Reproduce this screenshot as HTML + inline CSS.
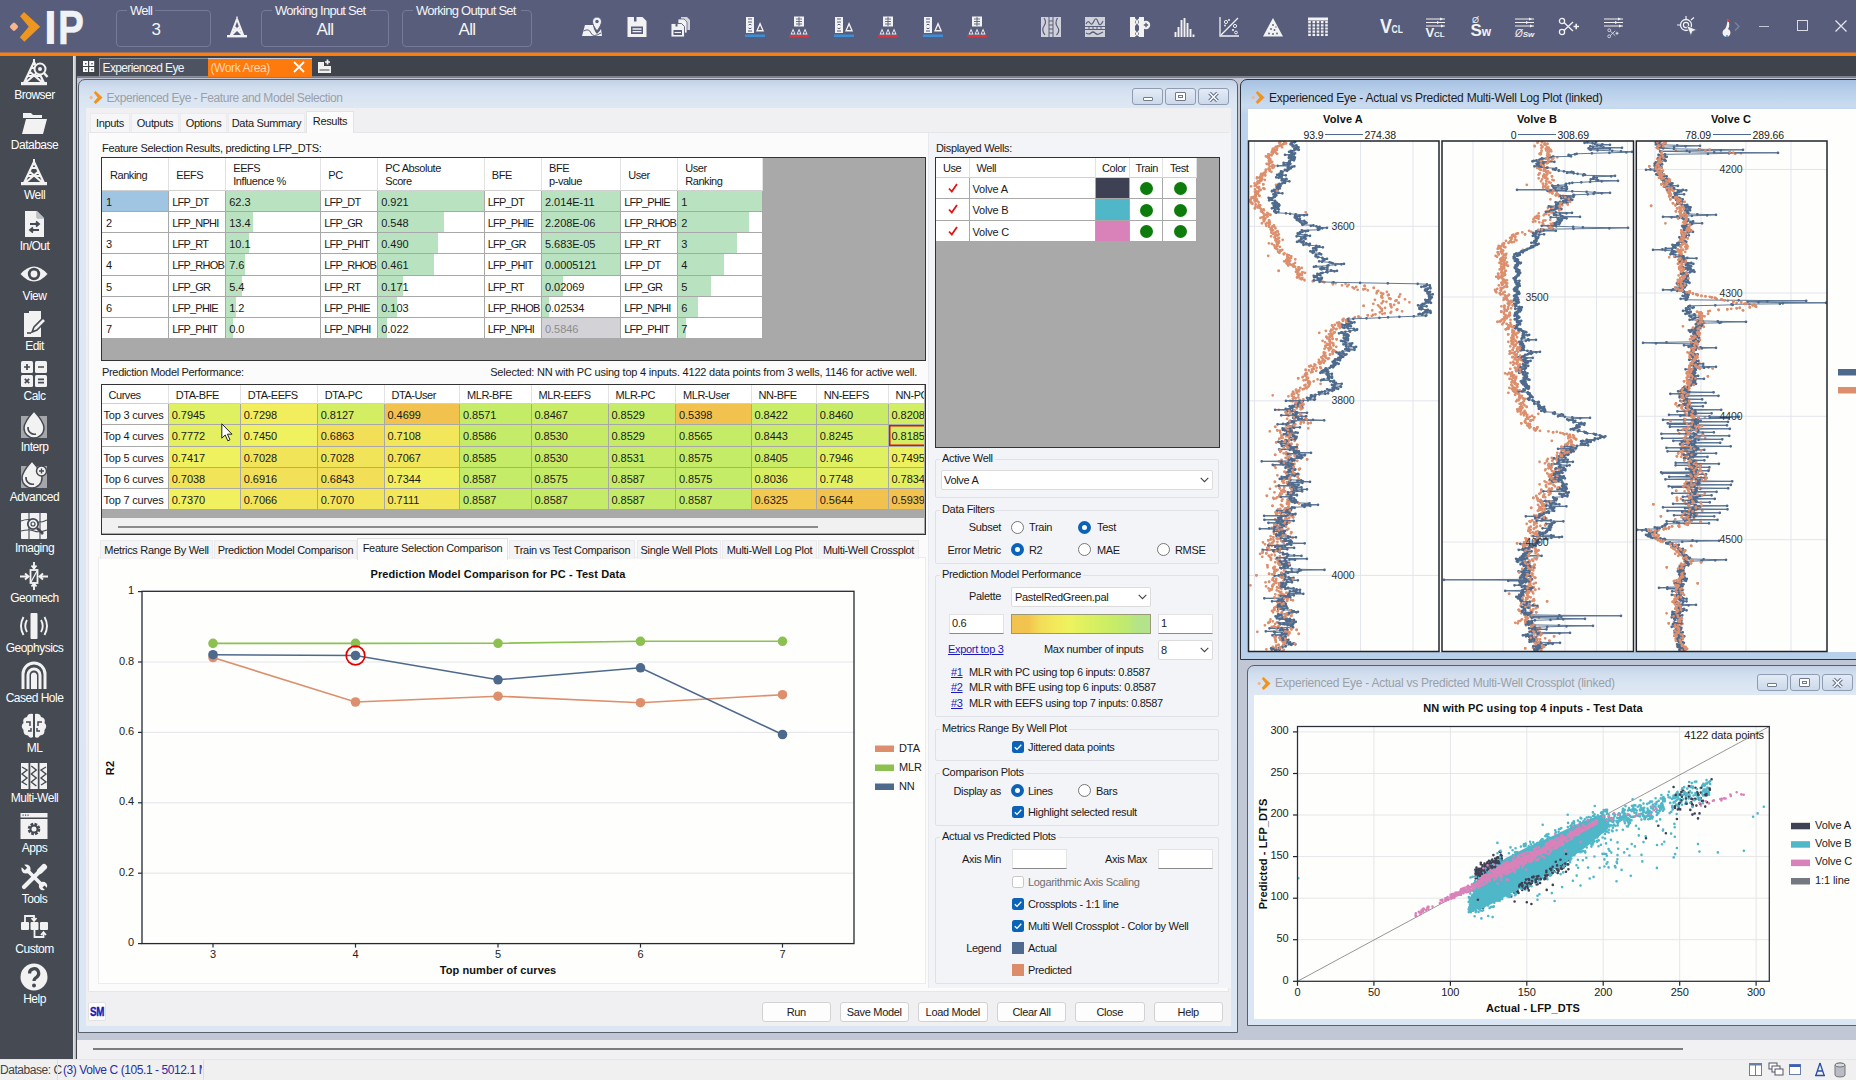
<!DOCTYPE html>
<html lang="en"><head><meta charset="utf-8"><title>IP - Experienced Eye</title>
<style>
html,body{margin:0;padding:0}
body{width:1856px;height:1080px;position:relative;overflow:hidden;background:#c1c7d5;font-family:"Liberation Sans",sans-serif;font-size:11px;color:#1a1a1a;letter-spacing:-0.32px}
.t{position:absolute;white-space:nowrap}
.w{color:#fff}
.b{font-weight:bold;letter-spacing:0.1px}
.ch{letter-spacing:-0.1px;color:#222}
svg{position:absolute;overflow:visible}
.btn{position:absolute;box-sizing:border-box;background:#fdfdfd;border:1px solid #d2d2d2;border-radius:3px;text-align:center;line-height:18px;height:20px}
.inp{position:absolute;box-sizing:border-box;background:#fff;border:1px solid #e3e3e3;border-bottom-color:#8a8a8a}
.cmb{position:absolute;box-sizing:border-box;background:#fff;border:1px solid #dcdcdc;border-radius:2px}
.grp{position:absolute;box-sizing:border-box;border:1px solid #dfe1e6;border-radius:2px}
.gl{position:absolute;white-space:nowrap;background:#f3f4f8;padding:0 2px;line-height:14px}
.rad{position:absolute;box-sizing:border-box;width:13px;height:13px;border-radius:50%;border:1px solid #777;background:#fff}
.rad.on{border:4px solid #0a63b7;background:#fff}
.chk{position:absolute;box-sizing:border-box;width:12px;height:12px;border-radius:2.5px;background:#0a63b7}
.chk.off{background:#fff;border:1px solid #c8c8c8}
.cell{position:absolute;box-sizing:border-box;background:#fff;border-right:1px solid #a8a8a8;border-bottom:1px solid #a8a8a8;overflow:hidden;white-space:nowrap;letter-spacing:-0.8px}
.cell.n{letter-spacing:-0.05px}
.cell.lc{letter-spacing:-0.2px}
.cell.hd{letter-spacing:-0.45px}
.hd{border-right-color:#e2e2e2;border-bottom-color:#d0d0d0}
.lnk{color:#1a1ab8;text-decoration:underline}
</style></head>
<body>
<div class="" style="position:absolute;left:78px;top:79px;width:1160px;height:954px;box-sizing:border-box;border:1px solid #5a6069;border-radius:7px 7px 0 0;background:linear-gradient(#c2d2e6,#d1deee 8px,#dae5f2 18px,#dee8f4 28px,#dbe6f4)"></div><svg style="left:88.5px;top:90.5px" width="13.7" height="13.0" viewBox="0 0 31.4 29.7"><path d="M11.1 4.2 L15 0 L31.2 14.7 L15.3 29.7 L10.8 25.2 L19.8 14.8 Z" fill="#f0941f"/><rect x="1.6" y="11.4" width="6.8" height="6.8" rx="1.8" transform="rotate(45 5 14.8)" fill="#f8b48c"/></svg><div class="t " style="top:90.5px;line-height:14px;left:106.5px;font-size:12px;letter-spacing:-0.42px;color:#9aa0a8">Experienced Eye - Feature and Model Selection</div><div class="" style="position:absolute;left:1132px;top:88px;width:31px;height:17px;box-sizing:border-box;border:1px solid #8f9bb0;border-radius:3px;background:linear-gradient(#e3ebf6,#ccd9ea)"></div><div class="" style="position:absolute;left:1142.5px;top:97.0px;width:10px;height:3.5px;box-sizing:border-box;border:1px solid #707a8c;background:#fff;border-radius:1px"></div><div class="" style="position:absolute;left:1165px;top:88px;width:31px;height:17px;box-sizing:border-box;border:1px solid #8f9bb0;border-radius:3px;background:linear-gradient(#e3ebf6,#ccd9ea)"></div><div class="" style="position:absolute;left:1175.0px;top:91.5px;width:11px;height:9px;box-sizing:border-box;border:1.5px solid #707a8c;background:#fff;border-radius:1px"></div><div class="" style="position:absolute;left:1178.0px;top:94.5px;width:5px;height:3.5px;box-sizing:border-box;border:1px solid #707a8c"></div><div class="" style="position:absolute;left:1198px;top:88px;width:31px;height:17px;box-sizing:border-box;border:1px solid #8f9bb0;border-radius:3px;background:linear-gradient(#e3ebf6,#ccd9ea)"></div><svg style="left:1208.0px;top:91.5px" width="11" height="10" viewBox="0 0 11 10"><path d="M1.5 1 L9.5 9 M9.5 1 L1.5 9" stroke="#67728a" stroke-width="3.6"/><path d="M1.5 1 L9.5 9 M9.5 1 L1.5 9" stroke="#fff" stroke-width="1.5"/></svg><div class="" style="position:absolute;left:86px;top:108px;width:1145px;height:918px;background:#f0f0f2"></div><div class="" style="position:absolute;left:88px;top:132px;width:1141px;height:860px;box-sizing:border-box;background:#fbfbfc;border:1px solid #e6e6e8"></div><div class="" style="position:absolute;left:90px;top:113px;width:40px;height:19px;box-sizing:border-box;background:#f6f6f8;border:1px solid #ebebed;border-bottom:none"></div><div class="t " style="top:115.8px;line-height:14px;left:-90.0px;width:400px;text-align:center;">Inputs</div><div class="" style="position:absolute;left:131px;top:113px;width:48px;height:19px;box-sizing:border-box;background:#f6f6f8;border:1px solid #ebebed;border-bottom:none"></div><div class="t " style="top:115.8px;line-height:14px;left:-45.0px;width:400px;text-align:center;">Outputs</div><div class="" style="position:absolute;left:180px;top:113px;width:47px;height:19px;box-sizing:border-box;background:#f6f6f8;border:1px solid #ebebed;border-bottom:none"></div><div class="t " style="top:115.8px;line-height:14px;left:3.5px;width:400px;text-align:center;">Options</div><div class="" style="position:absolute;left:228px;top:113px;width:77px;height:19px;box-sizing:border-box;background:#f6f6f8;border:1px solid #ebebed;border-bottom:none"></div><div class="t " style="top:115.8px;line-height:14px;left:66.5px;width:400px;text-align:center;">Data Summary</div><div class="" style="position:absolute;left:306px;top:111px;width:48px;height:22px;box-sizing:border-box;background:#fcfcfc;border:1px solid #e3e3e3;border-bottom:none"></div><div class="t " style="top:114.0px;line-height:14px;left:130.0px;width:400px;text-align:center;">Results</div><div class="t " style="top:141.0px;line-height:14px;left:102px;">Feature Selection Results, predicting LFP_DTS:</div><div class="" style="position:absolute;left:100.5px;top:156.5px;width:825px;height:204px;box-sizing:border-box;border:1.5px solid #333;background:#a9a9a9"></div><div class="cell hd" style="left:102.00px;top:158.00px;width:67.25px;height:32.50px"><div style="position:absolute;left:8px;top:10.6px;line-height:13px">Ranking</div></div><div class="cell hd" style="left:169.25px;top:158.00px;width:57.00px;height:32.50px"><div style="position:absolute;left:7px;top:10.6px;line-height:13px">EEFS</div></div><div class="cell hd" style="left:226.25px;top:158.00px;width:95.00px;height:32.50px"><div style="position:absolute;left:7px;top:4.0px;line-height:13px">EEFS<br>Influence %</div></div><div class="cell hd" style="left:321.25px;top:158.00px;width:57.00px;height:32.50px"><div style="position:absolute;left:7px;top:10.6px;line-height:13px">PC</div></div><div class="cell hd" style="left:378.25px;top:158.00px;width:106.50px;height:32.50px"><div style="position:absolute;left:7px;top:4.0px;line-height:13px">PC Absolute<br>Score</div></div><div class="cell hd" style="left:484.75px;top:158.00px;width:57.25px;height:32.50px"><div style="position:absolute;left:7px;top:10.6px;line-height:13px">BFE</div></div><div class="cell hd" style="left:542.00px;top:158.00px;width:79.25px;height:32.50px"><div style="position:absolute;left:7px;top:4.0px;line-height:13px">BFE<br>p-value</div></div><div class="cell hd" style="left:621.25px;top:158.00px;width:57.00px;height:32.50px"><div style="position:absolute;left:7px;top:10.6px;line-height:13px">User</div></div><div class="cell hd" style="left:678.25px;top:158.00px;width:85.00px;height:32.50px"><div style="position:absolute;left:7px;top:4.0px;line-height:13px">User<br>Ranking</div></div><div class="cell n" style="left:102.00px;top:190.50px;width:67.25px;height:21.25px;background:#9fc5e3;"><div style="position:absolute;left:4px;top:0;line-height:22.05px">1</div></div><div class="cell " style="left:169.25px;top:190.50px;width:57.00px;height:21.25px;"><div style="position:absolute;left:3px;top:0;line-height:22.05px">LFP_DT</div></div><div class="cell n" style="left:226.25px;top:190.50px;width:95.00px;height:21.25px;"><div style="position:absolute;left:0;top:0;height:100%;width:94px;background:#b9e2c0"></div><div style="position:absolute;left:3px;top:0;line-height:22.05px">62.3</div></div><div class="cell " style="left:321.25px;top:190.50px;width:57.00px;height:21.25px;"><div style="position:absolute;left:3px;top:0;line-height:22.05px">LFP_DT</div></div><div class="cell n" style="left:378.25px;top:190.50px;width:106.50px;height:21.25px;"><div style="position:absolute;left:0;top:0;height:100%;width:106px;background:#b9e2c0"></div><div style="position:absolute;left:3px;top:0;line-height:22.05px">0.921</div></div><div class="cell " style="left:484.75px;top:190.50px;width:57.25px;height:21.25px;"><div style="position:absolute;left:3px;top:0;line-height:22.05px">LFP_DT</div></div><div class="cell n" style="left:542.00px;top:190.50px;width:79.25px;height:21.25px;"><div style="position:absolute;left:0;top:0;height:100%;width:79px;background:#b9e2c0"></div><div style="position:absolute;left:3px;top:0;line-height:22.05px">2.014E-11</div></div><div class="cell " style="left:621.25px;top:190.50px;width:57.00px;height:21.25px;"><div style="position:absolute;left:3px;top:0;line-height:22.05px">LFP_PHIE</div></div><div class="cell n" style="left:678.25px;top:190.50px;width:85.00px;height:21.25px;"><div style="position:absolute;left:0;top:0;height:100%;width:84px;background:#b9e2c0"></div><div style="position:absolute;left:3px;top:0;line-height:22.05px">1</div></div><div class="cell n" style="left:102.00px;top:211.75px;width:67.25px;height:21.25px;"><div style="position:absolute;left:4px;top:0;line-height:22.05px">2</div></div><div class="cell " style="left:169.25px;top:211.75px;width:57.00px;height:21.25px;"><div style="position:absolute;left:3px;top:0;line-height:22.05px">LFP_NPHI</div></div><div class="cell n" style="left:226.25px;top:211.75px;width:95.00px;height:21.25px;"><div style="position:absolute;left:0;top:0;height:100%;width:27px;background:#b9e2c0"></div><div style="position:absolute;left:3px;top:0;line-height:22.05px">13.4</div></div><div class="cell " style="left:321.25px;top:211.75px;width:57.00px;height:21.25px;"><div style="position:absolute;left:3px;top:0;line-height:22.05px">LFP_GR</div></div><div class="cell n" style="left:378.25px;top:211.75px;width:106.50px;height:21.25px;"><div style="position:absolute;left:0;top:0;height:100%;width:66px;background:#b9e2c0"></div><div style="position:absolute;left:3px;top:0;line-height:22.05px">0.548</div></div><div class="cell " style="left:484.75px;top:211.75px;width:57.25px;height:21.25px;"><div style="position:absolute;left:3px;top:0;line-height:22.05px">LFP_PHIE</div></div><div class="cell n" style="left:542.00px;top:211.75px;width:79.25px;height:21.25px;"><div style="position:absolute;left:0;top:0;height:100%;width:79px;background:#b9e2c0"></div><div style="position:absolute;left:3px;top:0;line-height:22.05px">2.208E-06</div></div><div class="cell " style="left:621.25px;top:211.75px;width:57.00px;height:21.25px;"><div style="position:absolute;left:3px;top:0;line-height:22.05px">LFP_RHOB</div></div><div class="cell n" style="left:678.25px;top:211.75px;width:85.00px;height:21.25px;"><div style="position:absolute;left:0;top:0;height:100%;width:71px;background:#b9e2c0"></div><div style="position:absolute;left:3px;top:0;line-height:22.05px">2</div></div><div class="cell n" style="left:102.00px;top:233.00px;width:67.25px;height:21.25px;"><div style="position:absolute;left:4px;top:0;line-height:22.05px">3</div></div><div class="cell " style="left:169.25px;top:233.00px;width:57.00px;height:21.25px;"><div style="position:absolute;left:3px;top:0;line-height:22.05px">LFP_RT</div></div><div class="cell n" style="left:226.25px;top:233.00px;width:95.00px;height:21.25px;"><div style="position:absolute;left:0;top:0;height:100%;width:23px;background:#b9e2c0"></div><div style="position:absolute;left:3px;top:0;line-height:22.05px">10.1</div></div><div class="cell " style="left:321.25px;top:233.00px;width:57.00px;height:21.25px;"><div style="position:absolute;left:3px;top:0;line-height:22.05px">LFP_PHIT</div></div><div class="cell n" style="left:378.25px;top:233.00px;width:106.50px;height:21.25px;"><div style="position:absolute;left:0;top:0;height:100%;width:60px;background:#b9e2c0"></div><div style="position:absolute;left:3px;top:0;line-height:22.05px">0.490</div></div><div class="cell " style="left:484.75px;top:233.00px;width:57.25px;height:21.25px;"><div style="position:absolute;left:3px;top:0;line-height:22.05px">LFP_GR</div></div><div class="cell n" style="left:542.00px;top:233.00px;width:79.25px;height:21.25px;"><div style="position:absolute;left:0;top:0;height:100%;width:79px;background:#b9e2c0"></div><div style="position:absolute;left:3px;top:0;line-height:22.05px">5.683E-05</div></div><div class="cell " style="left:621.25px;top:233.00px;width:57.00px;height:21.25px;"><div style="position:absolute;left:3px;top:0;line-height:22.05px">LFP_RT</div></div><div class="cell n" style="left:678.25px;top:233.00px;width:85.00px;height:21.25px;"><div style="position:absolute;left:0;top:0;height:100%;width:59px;background:#b9e2c0"></div><div style="position:absolute;left:3px;top:0;line-height:22.05px">3</div></div><div class="cell n" style="left:102.00px;top:254.25px;width:67.25px;height:21.25px;"><div style="position:absolute;left:4px;top:0;line-height:22.05px">4</div></div><div class="cell " style="left:169.25px;top:254.25px;width:57.00px;height:21.25px;"><div style="position:absolute;left:3px;top:0;line-height:22.05px">LFP_RHOB</div></div><div class="cell n" style="left:226.25px;top:254.25px;width:95.00px;height:21.25px;"><div style="position:absolute;left:0;top:0;height:100%;width:19px;background:#b9e2c0"></div><div style="position:absolute;left:3px;top:0;line-height:22.05px">7.6</div></div><div class="cell " style="left:321.25px;top:254.25px;width:57.00px;height:21.25px;"><div style="position:absolute;left:3px;top:0;line-height:22.05px">LFP_RHOB</div></div><div class="cell n" style="left:378.25px;top:254.25px;width:106.50px;height:21.25px;"><div style="position:absolute;left:0;top:0;height:100%;width:56px;background:#b9e2c0"></div><div style="position:absolute;left:3px;top:0;line-height:22.05px">0.461</div></div><div class="cell " style="left:484.75px;top:254.25px;width:57.25px;height:21.25px;"><div style="position:absolute;left:3px;top:0;line-height:22.05px">LFP_PHIT</div></div><div class="cell n" style="left:542.00px;top:254.25px;width:79.25px;height:21.25px;"><div style="position:absolute;left:0;top:0;height:100%;width:78px;background:#b9e2c0"></div><div style="position:absolute;left:3px;top:0;line-height:22.05px">0.0005121</div></div><div class="cell " style="left:621.25px;top:254.25px;width:57.00px;height:21.25px;"><div style="position:absolute;left:3px;top:0;line-height:22.05px">LFP_DT</div></div><div class="cell n" style="left:678.25px;top:254.25px;width:85.00px;height:21.25px;"><div style="position:absolute;left:0;top:0;height:100%;width:46px;background:#b9e2c0"></div><div style="position:absolute;left:3px;top:0;line-height:22.05px">4</div></div><div class="cell n" style="left:102.00px;top:275.50px;width:67.25px;height:21.25px;"><div style="position:absolute;left:4px;top:0;line-height:22.05px">5</div></div><div class="cell " style="left:169.25px;top:275.50px;width:57.00px;height:21.25px;"><div style="position:absolute;left:3px;top:0;line-height:22.05px">LFP_GR</div></div><div class="cell n" style="left:226.25px;top:275.50px;width:95.00px;height:21.25px;"><div style="position:absolute;left:0;top:0;height:100%;width:16px;background:#b9e2c0"></div><div style="position:absolute;left:3px;top:0;line-height:22.05px">5.4</div></div><div class="cell " style="left:321.25px;top:275.50px;width:57.00px;height:21.25px;"><div style="position:absolute;left:3px;top:0;line-height:22.05px">LFP_RT</div></div><div class="cell n" style="left:378.25px;top:275.50px;width:106.50px;height:21.25px;"><div style="position:absolute;left:0;top:0;height:100%;width:25px;background:#b9e2c0"></div><div style="position:absolute;left:3px;top:0;line-height:22.05px">0.171</div></div><div class="cell " style="left:484.75px;top:275.50px;width:57.25px;height:21.25px;"><div style="position:absolute;left:3px;top:0;line-height:22.05px">LFP_RT</div></div><div class="cell n" style="left:542.00px;top:275.50px;width:79.25px;height:21.25px;"><div style="position:absolute;left:0;top:0;height:100%;width:21px;background:#b9e2c0"></div><div style="position:absolute;left:3px;top:0;line-height:22.05px">0.02069</div></div><div class="cell " style="left:621.25px;top:275.50px;width:57.00px;height:21.25px;"><div style="position:absolute;left:3px;top:0;line-height:22.05px">LFP_GR</div></div><div class="cell n" style="left:678.25px;top:275.50px;width:85.00px;height:21.25px;"><div style="position:absolute;left:0;top:0;height:100%;width:33px;background:#b9e2c0"></div><div style="position:absolute;left:3px;top:0;line-height:22.05px">5</div></div><div class="cell n" style="left:102.00px;top:296.75px;width:67.25px;height:21.25px;"><div style="position:absolute;left:4px;top:0;line-height:22.05px">6</div></div><div class="cell " style="left:169.25px;top:296.75px;width:57.00px;height:21.25px;"><div style="position:absolute;left:3px;top:0;line-height:22.05px">LFP_PHIE</div></div><div class="cell n" style="left:226.25px;top:296.75px;width:95.00px;height:21.25px;"><div style="position:absolute;left:0;top:0;height:100%;width:10px;background:#b9e2c0"></div><div style="position:absolute;left:3px;top:0;line-height:22.05px">1.2</div></div><div class="cell " style="left:321.25px;top:296.75px;width:57.00px;height:21.25px;"><div style="position:absolute;left:3px;top:0;line-height:22.05px">LFP_PHIE</div></div><div class="cell n" style="left:378.25px;top:296.75px;width:106.50px;height:21.25px;"><div style="position:absolute;left:0;top:0;height:100%;width:19px;background:#b9e2c0"></div><div style="position:absolute;left:3px;top:0;line-height:22.05px">0.103</div></div><div class="cell " style="left:484.75px;top:296.75px;width:57.25px;height:21.25px;"><div style="position:absolute;left:3px;top:0;line-height:22.05px">LFP_RHOB</div></div><div class="cell n" style="left:542.00px;top:296.75px;width:79.25px;height:21.25px;"><div style="position:absolute;left:0;top:0;height:100%;width:7px;background:#b9e2c0"></div><div style="position:absolute;left:3px;top:0;line-height:22.05px">0.02534</div></div><div class="cell " style="left:621.25px;top:296.75px;width:57.00px;height:21.25px;"><div style="position:absolute;left:3px;top:0;line-height:22.05px">LFP_NPHI</div></div><div class="cell n" style="left:678.25px;top:296.75px;width:85.00px;height:21.25px;"><div style="position:absolute;left:0;top:0;height:100%;width:20px;background:#b9e2c0"></div><div style="position:absolute;left:3px;top:0;line-height:22.05px">6</div></div><div class="cell n" style="left:102.00px;top:318.00px;width:67.25px;height:21.25px;"><div style="position:absolute;left:4px;top:0;line-height:22.05px">7</div></div><div class="cell " style="left:169.25px;top:318.00px;width:57.00px;height:21.25px;"><div style="position:absolute;left:3px;top:0;line-height:22.05px">LFP_PHIT</div></div><div class="cell n" style="left:226.25px;top:318.00px;width:95.00px;height:21.25px;"><div style="position:absolute;left:0;top:0;height:100%;width:7px;background:#b9e2c0"></div><div style="position:absolute;left:3px;top:0;line-height:22.05px">0.0</div></div><div class="cell " style="left:321.25px;top:318.00px;width:57.00px;height:21.25px;"><div style="position:absolute;left:3px;top:0;line-height:22.05px">LFP_NPHI</div></div><div class="cell n" style="left:378.25px;top:318.00px;width:106.50px;height:21.25px;"><div style="position:absolute;left:0;top:0;height:100%;width:9px;background:#b9e2c0"></div><div style="position:absolute;left:3px;top:0;line-height:22.05px">0.022</div></div><div class="cell " style="left:484.75px;top:318.00px;width:57.25px;height:21.25px;"><div style="position:absolute;left:3px;top:0;line-height:22.05px">LFP_NPHI</div></div><div class="cell n" style="left:542.00px;top:318.00px;width:79.25px;height:21.25px;background:#d2d2d7;color:#8c8c8c;"><div style="position:absolute;left:3px;top:0;line-height:22.05px">0.5846</div></div><div class="cell " style="left:621.25px;top:318.00px;width:57.00px;height:21.25px;"><div style="position:absolute;left:3px;top:0;line-height:22.05px">LFP_PHIT</div></div><div class="cell n" style="left:678.25px;top:318.00px;width:85.00px;height:21.25px;"><div style="position:absolute;left:0;top:0;height:100%;width:8px;background:#b9e2c0"></div><div style="position:absolute;left:3px;top:0;line-height:22.05px">7</div></div><div class="t " style="top:365.0px;line-height:14px;left:102px;">Prediction Model Performance:</div><div class="t " style="top:365.0px;line-height:14px;right:939px;letter-spacing:-0.215px">Selected: NN with PC using top 4 inputs. 4122 data points from 3 wells, 1146 for active well.</div><div class="" style="position:absolute;left:100.5px;top:383.5px;width:825px;height:151px;box-sizing:border-box;border:1.5px solid #333;background:#a9a9a9;overflow:hidden"><div class="" style="position:absolute;left:0px;top:0px;width:822px;height:148px;overflow:hidden"><div class="cell hd" style="left:0.00px;top:0.00px;width:67.25px;height:19.50px"><div style="position:absolute;left:7px;top:4.0px;line-height:13px">Curves</div></div><div class="cell hd" style="left:67.25px;top:0.00px;width:72.00px;height:19.50px"><div style="position:absolute;left:7px;top:4.0px;line-height:13px">DTA-BFE</div></div><div class="cell hd" style="left:139.25px;top:0.00px;width:77.00px;height:19.50px"><div style="position:absolute;left:7px;top:4.0px;line-height:13px">DTA-EEFS</div></div><div class="cell hd" style="left:216.25px;top:0.00px;width:66.75px;height:19.50px"><div style="position:absolute;left:7px;top:4.0px;line-height:13px">DTA-PC</div></div><div class="cell hd" style="left:283.00px;top:0.00px;width:75.50px;height:19.50px"><div style="position:absolute;left:7px;top:4.0px;line-height:13px">DTA-User</div></div><div class="cell hd" style="left:358.50px;top:0.00px;width:71.50px;height:19.50px"><div style="position:absolute;left:7px;top:4.0px;line-height:13px">MLR-BFE</div></div><div class="cell hd" style="left:430.00px;top:0.00px;width:77.00px;height:19.50px"><div style="position:absolute;left:7px;top:4.0px;line-height:13px">MLR-EEFS</div></div><div class="cell hd" style="left:507.00px;top:0.00px;width:67.50px;height:19.50px"><div style="position:absolute;left:7px;top:4.0px;line-height:13px">MLR-PC</div></div><div class="cell hd" style="left:574.50px;top:0.00px;width:75.50px;height:19.50px"><div style="position:absolute;left:7px;top:4.0px;line-height:13px">MLR-User</div></div><div class="cell hd" style="left:650.00px;top:0.00px;width:65.25px;height:19.50px"><div style="position:absolute;left:7px;top:4.0px;line-height:13px">NN-BFE</div></div><div class="cell hd" style="left:715.25px;top:0.00px;width:71.75px;height:19.50px"><div style="position:absolute;left:7px;top:4.0px;line-height:13px">NN-EEFS</div></div><div class="cell hd" style="left:787.00px;top:0.00px;width:71.00px;height:19.50px"><div style="position:absolute;left:7px;top:4.0px;line-height:13px">NN-PC</div></div><div class="cell lc" style="left:0.00px;top:19.50px;width:67.25px;height:21.25px;"><div style="position:absolute;left:2px;top:0;line-height:22.05px">Top 3 curves</div></div><div class="cell n" style="left:67.25px;top:19.50px;width:72.00px;height:21.25px;background:#dff060;"><div style="position:absolute;left:3px;top:0;line-height:22.05px">0.7945</div></div><div class="cell n" style="left:139.25px;top:19.50px;width:77.00px;height:21.25px;background:#f2ed5c;"><div style="position:absolute;left:3px;top:0;line-height:22.05px">0.7298</div></div><div class="cell n" style="left:216.25px;top:19.50px;width:66.75px;height:21.25px;background:#d4ee63;"><div style="position:absolute;left:3px;top:0;line-height:22.05px">0.8127</div></div><div class="cell n" style="left:283.00px;top:19.50px;width:75.50px;height:21.25px;background:#f2c24f;"><div style="position:absolute;left:3px;top:0;line-height:22.05px">0.4699</div></div><div class="cell n" style="left:358.50px;top:19.50px;width:71.50px;height:21.25px;background:#c5ec67;"><div style="position:absolute;left:3px;top:0;line-height:22.05px">0.8571</div></div><div class="cell n" style="left:430.00px;top:19.50px;width:77.00px;height:21.25px;background:#c8ec66;"><div style="position:absolute;left:3px;top:0;line-height:22.05px">0.8467</div></div><div class="cell n" style="left:507.00px;top:19.50px;width:67.50px;height:21.25px;background:#c6ec67;"><div style="position:absolute;left:3px;top:0;line-height:22.05px">0.8529</div></div><div class="cell n" style="left:574.50px;top:19.50px;width:75.50px;height:21.25px;background:#f2c24f;"><div style="position:absolute;left:3px;top:0;line-height:22.05px">0.5398</div></div><div class="cell n" style="left:650.00px;top:19.50px;width:65.25px;height:21.25px;background:#caed66;"><div style="position:absolute;left:3px;top:0;line-height:22.05px">0.8422</div></div><div class="cell n" style="left:715.25px;top:19.50px;width:71.75px;height:21.25px;background:#c8ec66;"><div style="position:absolute;left:3px;top:0;line-height:22.05px">0.8460</div></div><div class="cell n" style="left:787.00px;top:19.50px;width:71.00px;height:21.25px;background:#d1ee64;"><div style="position:absolute;left:3px;top:0;line-height:22.05px">0.8208</div></div><div class="cell lc" style="left:0.00px;top:40.75px;width:67.25px;height:21.25px;"><div style="position:absolute;left:2px;top:0;line-height:22.05px">Top 4 curves</div></div><div class="cell n" style="left:67.25px;top:40.75px;width:72.00px;height:21.25px;background:#e4f05f;"><div style="position:absolute;left:3px;top:0;line-height:22.05px">0.7772</div></div><div class="cell n" style="left:139.25px;top:40.75px;width:77.00px;height:21.25px;background:#eff15e;"><div style="position:absolute;left:3px;top:0;line-height:22.05px">0.7450</div></div><div class="cell n" style="left:216.25px;top:40.75px;width:66.75px;height:21.25px;background:#f3de58;"><div style="position:absolute;left:3px;top:0;line-height:22.05px">0.6863</div></div><div class="cell n" style="left:283.00px;top:40.75px;width:75.50px;height:21.25px;background:#f2e75a;"><div style="position:absolute;left:3px;top:0;line-height:22.05px">0.7108</div></div><div class="cell n" style="left:358.50px;top:40.75px;width:71.50px;height:21.25px;background:#c5ec68;"><div style="position:absolute;left:3px;top:0;line-height:22.05px">0.8586</div></div><div class="cell n" style="left:430.00px;top:40.75px;width:77.00px;height:21.25px;background:#c6ec67;"><div style="position:absolute;left:3px;top:0;line-height:22.05px">0.8530</div></div><div class="cell n" style="left:507.00px;top:40.75px;width:67.50px;height:21.25px;background:#c6ec67;"><div style="position:absolute;left:3px;top:0;line-height:22.05px">0.8529</div></div><div class="cell n" style="left:574.50px;top:40.75px;width:75.50px;height:21.25px;background:#c5ec67;"><div style="position:absolute;left:3px;top:0;line-height:22.05px">0.8565</div></div><div class="cell n" style="left:650.00px;top:40.75px;width:65.25px;height:21.25px;background:#c9ed66;"><div style="position:absolute;left:3px;top:0;line-height:22.05px">0.8443</div></div><div class="cell n" style="left:715.25px;top:40.75px;width:71.75px;height:21.25px;background:#d0ed64;"><div style="position:absolute;left:3px;top:0;line-height:22.05px">0.8245</div></div><div class="cell n" style="left:787.00px;top:40.75px;width:71.00px;height:21.25px;background:#d2ee64;box-shadow:inset 0 0 0 1.5px #e01010;"><div style="position:absolute;left:3px;top:0;line-height:22.05px">0.8185</div></div><div class="cell lc" style="left:0.00px;top:62.00px;width:67.25px;height:21.25px;"><div style="position:absolute;left:2px;top:0;line-height:22.05px">Top 5 curves</div></div><div class="cell n" style="left:67.25px;top:62.00px;width:72.00px;height:21.25px;background:#f0f15e;"><div style="position:absolute;left:3px;top:0;line-height:22.05px">0.7417</div></div><div class="cell n" style="left:139.25px;top:62.00px;width:77.00px;height:21.25px;background:#f2e459;"><div style="position:absolute;left:3px;top:0;line-height:22.05px">0.7028</div></div><div class="cell n" style="left:216.25px;top:62.00px;width:66.75px;height:21.25px;background:#f2e459;"><div style="position:absolute;left:3px;top:0;line-height:22.05px">0.7028</div></div><div class="cell n" style="left:283.00px;top:62.00px;width:75.50px;height:21.25px;background:#f2e55a;"><div style="position:absolute;left:3px;top:0;line-height:22.05px">0.7067</div></div><div class="cell n" style="left:358.50px;top:62.00px;width:71.50px;height:21.25px;background:#c5ec68;"><div style="position:absolute;left:3px;top:0;line-height:22.05px">0.8585</div></div><div class="cell n" style="left:430.00px;top:62.00px;width:77.00px;height:21.25px;background:#c6ec67;"><div style="position:absolute;left:3px;top:0;line-height:22.05px">0.8530</div></div><div class="cell n" style="left:507.00px;top:62.00px;width:67.50px;height:21.25px;background:#c6ec67;"><div style="position:absolute;left:3px;top:0;line-height:22.05px">0.8531</div></div><div class="cell n" style="left:574.50px;top:62.00px;width:75.50px;height:21.25px;background:#c5ec67;"><div style="position:absolute;left:3px;top:0;line-height:22.05px">0.8575</div></div><div class="cell n" style="left:650.00px;top:62.00px;width:65.25px;height:21.25px;background:#caed66;"><div style="position:absolute;left:3px;top:0;line-height:22.05px">0.8405</div></div><div class="cell n" style="left:715.25px;top:62.00px;width:71.75px;height:21.25px;background:#dff060;"><div style="position:absolute;left:3px;top:0;line-height:22.05px">0.7946</div></div><div class="cell n" style="left:787.00px;top:62.00px;width:71.00px;height:21.25px;background:#eef15e;"><div style="position:absolute;left:3px;top:0;line-height:22.05px">0.7495</div></div><div class="cell lc" style="left:0.00px;top:83.25px;width:67.25px;height:21.25px;"><div style="position:absolute;left:2px;top:0;line-height:22.05px">Top 6 curves</div></div><div class="cell n" style="left:67.25px;top:83.25px;width:72.00px;height:21.25px;background:#f2e459;"><div style="position:absolute;left:3px;top:0;line-height:22.05px">0.7038</div></div><div class="cell n" style="left:139.25px;top:83.25px;width:77.00px;height:21.25px;background:#f2e058;"><div style="position:absolute;left:3px;top:0;line-height:22.05px">0.6916</div></div><div class="cell n" style="left:216.25px;top:83.25px;width:66.75px;height:21.25px;background:#f3de57;"><div style="position:absolute;left:3px;top:0;line-height:22.05px">0.6843</div></div><div class="cell n" style="left:283.00px;top:83.25px;width:75.50px;height:21.25px;background:#f1ef5d;"><div style="position:absolute;left:3px;top:0;line-height:22.05px">0.7344</div></div><div class="cell n" style="left:358.50px;top:83.25px;width:71.50px;height:21.25px;background:#c5ec68;"><div style="position:absolute;left:3px;top:0;line-height:22.05px">0.8587</div></div><div class="cell n" style="left:430.00px;top:83.25px;width:77.00px;height:21.25px;background:#c5ec67;"><div style="position:absolute;left:3px;top:0;line-height:22.05px">0.8575</div></div><div class="cell n" style="left:507.00px;top:83.25px;width:67.50px;height:21.25px;background:#c5ec68;"><div style="position:absolute;left:3px;top:0;line-height:22.05px">0.8587</div></div><div class="cell n" style="left:574.50px;top:83.25px;width:75.50px;height:21.25px;background:#c5ec67;"><div style="position:absolute;left:3px;top:0;line-height:22.05px">0.8575</div></div><div class="cell n" style="left:650.00px;top:83.25px;width:65.25px;height:21.25px;background:#d9ef62;"><div style="position:absolute;left:3px;top:0;line-height:22.05px">0.8036</div></div><div class="cell n" style="left:715.25px;top:83.25px;width:71.75px;height:21.25px;background:#e4f05f;"><div style="position:absolute;left:3px;top:0;line-height:22.05px">0.7748</div></div><div class="cell n" style="left:787.00px;top:83.25px;width:71.00px;height:21.25px;background:#e2f05f;"><div style="position:absolute;left:3px;top:0;line-height:22.05px">0.7834</div></div><div class="cell lc" style="left:0.00px;top:104.50px;width:67.25px;height:21.25px;"><div style="position:absolute;left:2px;top:0;line-height:22.05px">Top 7 curves</div></div><div class="cell n" style="left:67.25px;top:104.50px;width:72.00px;height:21.25px;background:#f1f05e;"><div style="position:absolute;left:3px;top:0;line-height:22.05px">0.7370</div></div><div class="cell n" style="left:139.25px;top:104.50px;width:77.00px;height:21.25px;background:#f2e55a;"><div style="position:absolute;left:3px;top:0;line-height:22.05px">0.7066</div></div><div class="cell n" style="left:216.25px;top:104.50px;width:66.75px;height:21.25px;background:#f2e55a;"><div style="position:absolute;left:3px;top:0;line-height:22.05px">0.7070</div></div><div class="cell n" style="left:283.00px;top:104.50px;width:75.50px;height:21.25px;background:#f2e75a;"><div style="position:absolute;left:3px;top:0;line-height:22.05px">0.7111</div></div><div class="cell n" style="left:358.50px;top:104.50px;width:71.50px;height:21.25px;background:#c5ec68;"><div style="position:absolute;left:3px;top:0;line-height:22.05px">0.8587</div></div><div class="cell n" style="left:430.00px;top:104.50px;width:77.00px;height:21.25px;background:#c5ec68;"><div style="position:absolute;left:3px;top:0;line-height:22.05px">0.8587</div></div><div class="cell n" style="left:507.00px;top:104.50px;width:67.50px;height:21.25px;background:#c5ec68;"><div style="position:absolute;left:3px;top:0;line-height:22.05px">0.8587</div></div><div class="cell n" style="left:574.50px;top:104.50px;width:75.50px;height:21.25px;background:#c5ec68;"><div style="position:absolute;left:3px;top:0;line-height:22.05px">0.8587</div></div><div class="cell n" style="left:650.00px;top:104.50px;width:65.25px;height:21.25px;background:#f3ca51;"><div style="position:absolute;left:3px;top:0;line-height:22.05px">0.6325</div></div><div class="cell n" style="left:715.25px;top:104.50px;width:71.75px;height:21.25px;background:#f2c24f;"><div style="position:absolute;left:3px;top:0;line-height:22.05px">0.5644</div></div><div class="cell n" style="left:787.00px;top:104.50px;width:71.00px;height:21.25px;background:#f2c24f;"><div style="position:absolute;left:3px;top:0;line-height:22.05px">0.5939</div></div><div class="" style="position:absolute;left:0px;top:133.5px;width:823px;height:16px;background:#f1f1f1"></div><div class="" style="position:absolute;left:16px;top:141px;width:700px;height:2px;background:#8a8a8a"></div></div></div><div class="" style="position:absolute;left:98px;top:557px;width:828px;height:427px;box-sizing:border-box;background:#fefefc;border:1px solid #ececec"></div><div class="" style="position:absolute;left:100px;top:540px;width:113px;height:19px;box-sizing:border-box;background:#f4f4f6;border:1px solid #ebebed;border-bottom:none"></div><div class="t " style="top:542.8px;line-height:14px;left:-43.5px;width:400px;text-align:center;">Metrics Range By Well</div><div class="" style="position:absolute;left:214px;top:540px;width:143px;height:19px;box-sizing:border-box;background:#f4f4f6;border:1px solid #ebebed;border-bottom:none"></div><div class="t " style="top:542.8px;line-height:14px;left:85.5px;width:400px;text-align:center;">Prediction Model Comparison</div><div class="" style="position:absolute;left:357px;top:538px;width:151px;height:22px;box-sizing:border-box;background:#fcfcfc;border:1px solid #e3e3e3;border-bottom:none"></div><div class="t " style="top:541.0px;line-height:14px;left:232.5px;width:400px;text-align:center;">Feature Selection Comparison</div><div class="" style="position:absolute;left:509px;top:540px;width:126px;height:19px;box-sizing:border-box;background:#f4f4f6;border:1px solid #ebebed;border-bottom:none"></div><div class="t " style="top:542.8px;line-height:14px;left:372.0px;width:400px;text-align:center;">Train vs Test Comparison</div><div class="" style="position:absolute;left:637px;top:540px;width:84px;height:19px;box-sizing:border-box;background:#f4f4f6;border:1px solid #ebebed;border-bottom:none"></div><div class="t " style="top:542.8px;line-height:14px;left:479.0px;width:400px;text-align:center;">Single Well Plots</div><div class="" style="position:absolute;left:722px;top:540px;width:95px;height:19px;box-sizing:border-box;background:#f4f4f6;border:1px solid #ebebed;border-bottom:none"></div><div class="t " style="top:542.8px;line-height:14px;left:569.5px;width:400px;text-align:center;">Multi-Well Log Plot</div><div class="" style="position:absolute;left:818px;top:540px;width:101px;height:19px;box-sizing:border-box;background:#f4f4f6;border:1px solid #ebebed;border-bottom:none"></div><div class="t " style="top:542.8px;line-height:14px;left:668.5px;width:400px;text-align:center;">Multi-Well Crossplot</div><svg style="left:0;top:0" width="1856" height="1080" viewBox="0 0 1856 1080"><path d="M142 873.2 H854" stroke="#e4e5ea" stroke-width="1"/><path d="M142 802.8 H854" stroke="#e4e5ea" stroke-width="1"/><path d="M142 732.4 H854" stroke="#e4e5ea" stroke-width="1"/><path d="M142 662.0 H854" stroke="#e4e5ea" stroke-width="1"/><polyline points="213.0,657.5 355.5,702.0 498.0,696.2 640.5,702.7 782.5,694.7" fill="none" stroke="#dd8f6d" stroke-width="1.6"/><circle cx="213.0" cy="657.5" r="4.8" fill="#dd8f6d"/><circle cx="355.5" cy="702.0" r="4.8" fill="#dd8f6d"/><circle cx="498.0" cy="696.2" r="4.8" fill="#dd8f6d"/><circle cx="640.5" cy="702.7" r="4.8" fill="#dd8f6d"/><circle cx="782.5" cy="694.7" r="4.8" fill="#dd8f6d"/><polyline points="213.0,643.4 355.5,643.4 498.0,643.3 640.5,641.3 782.5,641.3" fill="none" stroke="#8cc152" stroke-width="1.6"/><circle cx="213.0" cy="643.4" r="4.8" fill="#8cc152"/><circle cx="355.5" cy="643.4" r="4.8" fill="#8cc152"/><circle cx="498.0" cy="643.3" r="4.8" fill="#8cc152"/><circle cx="640.5" cy="641.3" r="4.8" fill="#8cc152"/><circle cx="782.5" cy="641.3" r="4.8" fill="#8cc152"/><polyline points="213.0,654.7 355.5,655.5 498.0,679.8 640.5,667.8 782.5,734.5" fill="none" stroke="#4d698c" stroke-width="1.6"/><circle cx="213.0" cy="654.7" r="4.8" fill="#4d698c"/><circle cx="355.5" cy="655.5" r="4.8" fill="#4d698c"/><circle cx="498.0" cy="679.8" r="4.8" fill="#4d698c"/><circle cx="640.5" cy="667.8" r="4.8" fill="#4d698c"/><circle cx="782.5" cy="734.5" r="4.8" fill="#4d698c"/><circle cx="355.5" cy="655.5" r="9.3" fill="none" stroke="#e00000" stroke-width="1.7"/><rect x="142" y="591.3" width="712" height="352.30000000000007" fill="none" stroke="#222a36" stroke-width="1.3"/><path d="M138 943.6 H142" stroke="#222a36" stroke-width="1.2"/><path d="M138 873.2 H142" stroke="#222a36" stroke-width="1.2"/><path d="M138 802.8 H142" stroke="#222a36" stroke-width="1.2"/><path d="M138 732.4 H142" stroke="#222a36" stroke-width="1.2"/><path d="M138 662.0 H142" stroke="#222a36" stroke-width="1.2"/><path d="M138 591.6 H142" stroke="#222a36" stroke-width="1.2"/><path d="M213 943.6 v4" stroke="#222a36" stroke-width="1.2"/><path d="M355.5 943.6 v4" stroke="#222a36" stroke-width="1.2"/><path d="M498 943.6 v4" stroke="#222a36" stroke-width="1.2"/><path d="M640.5 943.6 v4" stroke="#222a36" stroke-width="1.2"/><path d="M782.5 943.6 v4" stroke="#222a36" stroke-width="1.2"/><rect x="875" y="745.5" width="19" height="6.5" fill="#dd8f6d"/><rect x="875" y="764.5" width="19" height="6.5" fill="#8cc152"/><rect x="875" y="783.5" width="19" height="6.5" fill="#4d698c"/></svg><div class="t ch" style="top:935.1px;line-height:14px;right:1722px;">0</div><div class="t ch" style="top:864.7px;line-height:14px;right:1722px;">0.2</div><div class="t ch" style="top:794.3px;line-height:14px;right:1722px;">0.4</div><div class="t ch" style="top:723.9px;line-height:14px;right:1722px;">0.6</div><div class="t ch" style="top:653.5px;line-height:14px;right:1722px;">0.8</div><div class="t ch" style="top:583.1px;line-height:14px;right:1722px;">1</div><div class="t ch" style="top:947.0px;line-height:14px;left:13px;width:400px;text-align:center;">3</div><div class="t ch" style="top:947.0px;line-height:14px;left:155.5px;width:400px;text-align:center;">4</div><div class="t ch" style="top:947.0px;line-height:14px;left:298px;width:400px;text-align:center;">5</div><div class="t ch" style="top:947.0px;line-height:14px;left:440.5px;width:400px;text-align:center;">6</div><div class="t ch" style="top:947.0px;line-height:14px;left:582.5px;width:400px;text-align:center;">7</div><div class="t b" style="top:566.5px;line-height:14px;left:298px;width:400px;text-align:center;color:#111">Prediction Model Comparison for PC - Test Data</div><div class="t b" style="top:963.0px;line-height:14px;left:298px;width:400px;text-align:center;color:#111">Top number of curves</div><div class="t b" style="left:60px;top:761px;width:100px;text-align:center;line-height:14px;transform:rotate(-90deg);color:#111">R2</div><div class="t ch" style="top:740.5px;line-height:14px;left:899px;">DTA</div><div class="t ch" style="top:759.5px;line-height:14px;left:899px;">MLR</div><div class="t ch" style="top:778.5px;line-height:14px;left:899px;">NN</div><div class="" style="position:absolute;left:928px;top:133px;width:302px;height:855px;background:#f3f4f8;border-left:1px solid #e8e9ee"></div><div class="t " style="top:141.0px;line-height:14px;left:936px;">Displayed Wells:</div><div class="" style="position:absolute;left:934.5px;top:156.5px;width:285px;height:291px;box-sizing:border-box;border:1.5px solid #333;background:#a9a9a9"></div><div class="cell hd" style="left:936.00px;top:158.00px;width:33.50px;height:20.00px"><div style="position:absolute;left:7px;top:4.3px;line-height:13px">Use</div></div><div class="cell hd" style="left:969.50px;top:158.00px;width:126.00px;height:20.00px"><div style="position:absolute;left:7px;top:4.3px;line-height:13px">Well</div></div><div class="cell hd" style="left:1095.50px;top:158.00px;width:34.00px;height:20.00px"><div style="position:absolute;left:6.5px;top:4.3px;line-height:13px">Color</div></div><div class="cell hd" style="left:1129.50px;top:158.00px;width:33.50px;height:20.00px"><div style="position:absolute;left:6px;top:4.3px;line-height:13px">Train</div></div><div class="cell hd" style="left:1163.00px;top:158.00px;width:34.00px;height:20.00px"><div style="position:absolute;left:7px;top:4.3px;line-height:13px">Test</div></div><div class="cell " style="left:936.00px;top:178.00px;width:33.50px;height:21.25px;"><div style="position:absolute;left:4px;top:0;line-height:22.05px"></div></div><svg style="left:948px;top:183.0px" width="10" height="10" viewBox="0 0 10 10"><path d="M1 5.5 L3.8 8.5 L9 1" stroke="#e01515" stroke-width="1.8" fill="none"/></svg><div class="cell lc" style="left:969.50px;top:178.00px;width:126.00px;height:21.25px;"><div style="position:absolute;left:3px;top:0;line-height:22.05px">Volve A</div></div><div class="cell " style="left:1095.50px;top:178.00px;width:34.00px;height:21.25px;background:#3e4053;"><div style="position:absolute;left:4px;top:0;line-height:22.05px"></div></div><div class="cell " style="left:1129.50px;top:178.00px;width:33.50px;height:21.25px;"><div style="position:absolute;left:4px;top:0;line-height:22.05px"></div></div><div class="" style="position:absolute;left:1140.45px;top:182.325px;width:13px;height:13px;border-radius:50%;background:#0d7c0d"></div><div class="cell " style="left:1163.00px;top:178.00px;width:34.00px;height:21.25px;"><div style="position:absolute;left:4px;top:0;line-height:22.05px"></div></div><div class="" style="position:absolute;left:1174.2px;top:182.325px;width:13px;height:13px;border-radius:50%;background:#0d7c0d"></div><div class="cell " style="left:936.00px;top:199.25px;width:33.50px;height:21.25px;"><div style="position:absolute;left:4px;top:0;line-height:22.05px"></div></div><svg style="left:948px;top:204.25px" width="10" height="10" viewBox="0 0 10 10"><path d="M1 5.5 L3.8 8.5 L9 1" stroke="#e01515" stroke-width="1.8" fill="none"/></svg><div class="cell lc" style="left:969.50px;top:199.25px;width:126.00px;height:21.25px;"><div style="position:absolute;left:3px;top:0;line-height:22.05px">Volve B</div></div><div class="cell " style="left:1095.50px;top:199.25px;width:34.00px;height:21.25px;background:#4fb7c8;"><div style="position:absolute;left:4px;top:0;line-height:22.05px"></div></div><div class="cell " style="left:1129.50px;top:199.25px;width:33.50px;height:21.25px;"><div style="position:absolute;left:4px;top:0;line-height:22.05px"></div></div><div class="" style="position:absolute;left:1140.45px;top:203.575px;width:13px;height:13px;border-radius:50%;background:#0d7c0d"></div><div class="cell " style="left:1163.00px;top:199.25px;width:34.00px;height:21.25px;"><div style="position:absolute;left:4px;top:0;line-height:22.05px"></div></div><div class="" style="position:absolute;left:1174.2px;top:203.575px;width:13px;height:13px;border-radius:50%;background:#0d7c0d"></div><div class="cell " style="left:936.00px;top:220.50px;width:33.50px;height:21.25px;"><div style="position:absolute;left:4px;top:0;line-height:22.05px"></div></div><svg style="left:948px;top:225.5px" width="10" height="10" viewBox="0 0 10 10"><path d="M1 5.5 L3.8 8.5 L9 1" stroke="#e01515" stroke-width="1.8" fill="none"/></svg><div class="cell lc" style="left:969.50px;top:220.50px;width:126.00px;height:21.25px;"><div style="position:absolute;left:3px;top:0;line-height:22.05px">Volve C</div></div><div class="cell " style="left:1095.50px;top:220.50px;width:34.00px;height:21.25px;background:#d982b9;"><div style="position:absolute;left:4px;top:0;line-height:22.05px"></div></div><div class="cell " style="left:1129.50px;top:220.50px;width:33.50px;height:21.25px;"><div style="position:absolute;left:4px;top:0;line-height:22.05px"></div></div><div class="" style="position:absolute;left:1140.45px;top:224.825px;width:13px;height:13px;border-radius:50%;background:#0d7c0d"></div><div class="cell " style="left:1163.00px;top:220.50px;width:34.00px;height:21.25px;"><div style="position:absolute;left:4px;top:0;line-height:22.05px"></div></div><div class="" style="position:absolute;left:1174.2px;top:224.825px;width:13px;height:13px;border-radius:50%;background:#0d7c0d"></div><div class="grp" style="left:935px;top:458.5px;width:284px;height:39.0px"></div><div class="gl" style="left:940px;top:450.5px">Active Well</div><div class="cmb" style="left:940.5px;top:469.5px;width:272.5px;height:20.5px"></div><div class="t " style="top:473.0px;line-height:14px;left:944px;">Volve A</div><svg style="left:1199.5px;top:477px" width="9" height="6" viewBox="0 0 9 6"><path d="M.7 .8 L4.5 4.6 L8.3 .8" stroke="#444" stroke-width="1.1" fill="none"/></svg><div class="grp" style="left:935px;top:509.5px;width:284px;height:54.0px"></div><div class="gl" style="left:940px;top:501.5px">Data Filters</div><div class="t " style="top:520.0px;line-height:14px;right:855px;">Subset</div><div class="rad" style="left:1010.5px;top:520.5px"></div><div class="t " style="top:520.0px;line-height:14px;left:1029px;">Train</div><div class="rad on" style="left:1078.0px;top:520.5px"></div><div class="t " style="top:520.0px;line-height:14px;left:1097px;">Test</div><div class="t " style="top:542.5px;line-height:14px;right:855px;">Error Metric</div><div class="rad on" style="left:1010.5px;top:543.0px"></div><div class="t " style="top:542.5px;line-height:14px;left:1029px;">R2</div><div class="rad" style="left:1078.0px;top:543.0px"></div><div class="t " style="top:542.5px;line-height:14px;left:1097px;">MAE</div><div class="rad" style="left:1156.5px;top:543.0px"></div><div class="t " style="top:542.5px;line-height:14px;left:1175px;">RMSE</div><div class="grp" style="left:935px;top:575px;width:284px;height:142px"></div><div class="gl" style="left:940px;top:567px">Prediction Model Performance</div><div class="t " style="top:589.0px;line-height:14px;right:855px;">Palette</div><div class="cmb" style="left:1011px;top:586.5px;width:140px;height:20.5px"></div><div class="t " style="top:590.0px;line-height:14px;left:1015px;">PastelRedGreen.pal</div><svg style="left:1137.5px;top:594px" width="9" height="6" viewBox="0 0 9 6"><path d="M.7 .8 L4.5 4.6 L8.3 .8" stroke="#444" stroke-width="1.1" fill="none"/></svg><div class="inp" style="left:949px;top:613.5px;width:55px;height:20px"></div><div class="t " style="top:616.0px;line-height:14px;left:952px;">0.6</div><div class="" style="position:absolute;left:1011px;top:613.5px;width:140px;height:20px;box-sizing:border-box;border:1px solid #9a9a7a;background:linear-gradient(90deg,#f2c24f 0,#f2c44f 12%,#f2dc57 20%,#f2ea5b 32%,#eef35f 42%,#dcf060 55%,#c9ed66 72%,#bde972 84%,#b4e487 90%,#b3e28d 100%)"></div><div class="inp" style="left:1157.5px;top:613.5px;width:55px;height:20px"></div><div class="t " style="top:616.0px;line-height:14px;left:1161px;">1</div><div class="t lnk" style="top:642.0px;line-height:14px;left:948px;">Export top 3</div><div class="t " style="top:642.0px;line-height:14px;left:1044px;">Max number of inputs</div><div class="cmb" style="left:1157.5px;top:639.5px;width:55px;height:20.5px"></div><div class="t " style="top:643.0px;line-height:14px;left:1161px;">8</div><svg style="left:1199.5px;top:647px" width="9" height="6" viewBox="0 0 9 6"><path d="M.7 .8 L4.5 4.6 L8.3 .8" stroke="#444" stroke-width="1.1" fill="none"/></svg><div class="t lnk" style="top:664.5px;line-height:14px;left:951px;">#1</div><div class="t " style="top:664.5px;line-height:14px;left:969px;">MLR with PC using top 6 inputs: 0.8587</div><div class="t lnk" style="top:680.0px;line-height:14px;left:951px;">#2</div><div class="t " style="top:680.0px;line-height:14px;left:969px;">MLR with BFE using top 6 inputs: 0.8587</div><div class="t lnk" style="top:695.5px;line-height:14px;left:951px;">#3</div><div class="t " style="top:695.5px;line-height:14px;left:969px;">MLR with EEFS using top 7 inputs: 0.8587</div><div class="grp" style="left:935px;top:728.5px;width:284px;height:32.0px"></div><div class="gl" style="left:940px;top:720.5px">Metrics Range By Well Plot</div><div class="chk" style="left:1011.5px;top:740.8px"></div><svg style="left:1011.5px;top:740.8px" width="12" height="12" viewBox="0 0 12 12"><path d="M2.8 6.2 L5 8.4 L9.3 3.8" stroke="#fff" stroke-width="1.3" fill="none"/></svg><div class="t " style="top:740.0px;line-height:14px;left:1028px;">Jittered data points</div><div class="grp" style="left:935px;top:772.5px;width:284px;height:53.0px"></div><div class="gl" style="left:940px;top:764.5px">Comparison Plots</div><div class="t " style="top:783.5px;line-height:14px;right:855px;">Display as</div><div class="rad on" style="left:1010.5px;top:784.0px"></div><div class="t " style="top:783.5px;line-height:14px;left:1028px;">Lines</div><div class="rad" style="left:1078.0px;top:784.0px"></div><div class="t " style="top:783.5px;line-height:14px;left:1096px;">Bars</div><div class="chk" style="left:1011.5px;top:806px"></div><svg style="left:1011.5px;top:806px" width="12" height="12" viewBox="0 0 12 12"><path d="M2.8 6.2 L5 8.4 L9.3 3.8" stroke="#fff" stroke-width="1.3" fill="none"/></svg><div class="t " style="top:805.0px;line-height:14px;left:1028px;">Highlight selected result</div><div class="grp" style="left:935px;top:837px;width:284px;height:146.5px"></div><div class="gl" style="left:940px;top:829px">Actual vs Predicted Plots</div><div class="t " style="top:851.5px;line-height:14px;right:855px;">Axis Min</div><div class="inp" style="left:1011.5px;top:849px;width:55px;height:19.5px"></div><div class="t " style="top:851.5px;line-height:14px;right:709px;">Axis Max</div><div class="inp" style="left:1157.5px;top:849px;width:55px;height:19.5px"></div><div class="chk off" style="left:1011.5px;top:875.5px"></div><div class="t " style="top:874.5px;line-height:14px;left:1028px;color:#6d6d6d">Logarithmic Axis Scaling</div><div class="chk" style="left:1011.5px;top:897.8px"></div><svg style="left:1011.5px;top:897.8px" width="12" height="12" viewBox="0 0 12 12"><path d="M2.8 6.2 L5 8.4 L9.3 3.8" stroke="#fff" stroke-width="1.3" fill="none"/></svg><div class="t " style="top:896.8px;line-height:14px;left:1028px;">Crossplots - 1:1 line</div><div class="chk" style="left:1011.5px;top:920px"></div><svg style="left:1011.5px;top:920px" width="12" height="12" viewBox="0 0 12 12"><path d="M2.8 6.2 L5 8.4 L9.3 3.8" stroke="#fff" stroke-width="1.3" fill="none"/></svg><div class="t " style="top:919.0px;line-height:14px;left:1028px;">Multi Well Crossplot - Color by Well</div><div class="t " style="top:941.0px;line-height:14px;right:855px;">Legend</div><div class="" style="position:absolute;left:1011.5px;top:942px;width:12px;height:12px;background:#4f6a8f"></div><div class="t " style="top:941.0px;line-height:14px;left:1028px;">Actual</div><div class="" style="position:absolute;left:1011.5px;top:963.5px;width:12px;height:12px;background:#dd8c6a"></div><div class="t " style="top:962.5px;line-height:14px;left:1028px;">Predicted</div><svg style="left:220.5px;top:422.5px" width="12" height="19" viewBox="0 0 12 19"><path d="M.8 .8 V15.2 L4.2 12 L6.8 17.8 L9 16.8 L6.4 11.2 H11 Z" fill="#fff" stroke="#222" stroke-width="1"/></svg><div class="" style="position:absolute;left:88px;top:1002px;width:18px;height:19px;box-sizing:border-box;background:#fff;border:1px solid #e2e2e2;border-radius:2px"></div><div class="t " style="top:1004.8px;line-height:14px;left:89.5px;font-weight:bold;font-size:12.5px;letter-spacing:-0.3px;color:#1818b0;transform:scaleX(.78);transform-origin:0 50%;-webkit-text-stroke:.4px #1818b0">SM</div><div class="btn" style="left:761.5px;top:1002px;width:69.5px">Run</div><div class="btn" style="left:839.5px;top:1002px;width:69.5px">Save Model</div><div class="btn" style="left:917.5px;top:1002px;width:70.5px">Load Model</div><div class="btn" style="left:997px;top:1002px;width:69px">Clear All</div><div class="btn" style="left:1075px;top:1002px;width:69.5px">Close</div><div class="btn" style="left:1153.5px;top:1002px;width:69.5px">Help</div><div class="" style="position:absolute;left:1240px;top:79px;width:640px;height:580.5px;box-sizing:border-box;border:1px solid #2c313a;border-radius:7px 7px 0 0;background:linear-gradient(#a6c1e2,#b9d0ea 12px,#c9dbf0 26px,#bdd2eb 34px,#b9d0ea)"></div><svg style="left:1250.5px;top:90.5px" width="13.7" height="13.0" viewBox="0 0 31.4 29.7"><path d="M11.1 4.2 L15 0 L31.2 14.7 L15.3 29.7 L10.8 25.2 L19.8 14.8 Z" fill="#f0941f"/><rect x="1.6" y="11.4" width="6.8" height="6.8" rx="1.8" transform="rotate(45 5 14.8)" fill="#f8b48c"/></svg><div class="t " style="top:91.3px;line-height:14px;left:1269px;font-size:12px;letter-spacing:-0.24px;color:#1c1c1c">Experienced Eye - Actual vs Predicted Multi-Well Log Plot (linked)</div><div class="" style="position:absolute;left:1247.5px;top:109px;width:620px;height:543px;background:#fefefc"></div><svg style="left:0;top:0" width="1856" height="1080" viewBox="0 0 1856 1080"><path d="M1254.5 141 V651.5" stroke="#e3e5ec"/><path d="M1307 141 V651.5" stroke="#e3e5ec"/><path d="M1360.5 141 V651.5" stroke="#e3e5ec"/><path d="M1413 141 V651.5" stroke="#e3e5ec"/><path d="M1248.5 226.3 H1439" stroke="#e3e5ec"/><path d="M1248.5 400.8 H1439" stroke="#e3e5ec"/><path d="M1248.5 575.4 H1439" stroke="#e3e5ec"/><path d="M1473 141 V651.5" stroke="#e3e5ec"/><path d="M1503 141 V651.5" stroke="#e3e5ec"/><path d="M1534 141 V651.5" stroke="#e3e5ec"/><path d="M1565 141 V651.5" stroke="#e3e5ec"/><path d="M1596.5 141 V651.5" stroke="#e3e5ec"/><path d="M1627.5 141 V651.5" stroke="#e3e5ec"/><path d="M1442 297 H1633.5" stroke="#e3e5ec"/><path d="M1442 542 H1633.5" stroke="#e3e5ec"/><path d="M1655 141 V651.5" stroke="#e3e5ec"/><path d="M1701 141 V651.5" stroke="#e3e5ec"/><path d="M1746 141 V651.5" stroke="#e3e5ec"/><path d="M1791 141 V651.5" stroke="#e3e5ec"/><path d="M1636.3 169.5 H1827" stroke="#e3e5ec"/><path d="M1636.3 293 H1827" stroke="#e3e5ec"/><path d="M1636.3 416.3 H1827" stroke="#e3e5ec"/><path d="M1636.3 539.7 H1827" stroke="#e3e5ec"/><g clip-path="url(#cA)"><path d="M1284.1 141.8h0M1280.1 142.3h0M1279.5 142.8h0M1286.0 143.3h0M1284.0 143.8h0M1282.8 144.3h0M1280.0 144.8h0M1280.5 145.3h0M1279.3 145.8h0M1277.5 146.3h0M1275.7 146.8h0M1282.1 147.3h0M1277.2 147.8h0M1274.4 148.3h0M1272.8 148.8h0M1273.6 149.3h0M1276.9 149.8h0M1275.8 150.3h0M1272.4 150.8h0M1274.3 151.3h0M1272.9 151.8h0M1271.6 152.3h0M1276.0 152.8h0M1272.8 153.3h0M1277.1 153.8h0M1268.5 154.3h0M1269.7 154.8h0M1271.6 155.3h0M1268.7 155.8h0M1265.9 156.3h0M1267.3 156.8h0M1269.1 157.3h0M1268.5 157.8h0M1268.5 158.3h0M1269.5 158.8h0M1270.2 159.3h0M1270.0 159.8h0M1270.0 160.3h0M1268.9 160.8h0M1270.8 161.3h0M1272.1 161.8h0M1270.3 162.3h0M1270.3 162.8h0M1268.8 163.3h0M1266.6 163.8h0M1268.6 164.3h0M1272.7 164.8h0M1272.6 165.3h0M1274.6 165.8h0M1269.7 166.3h0M1272.1 166.8h0M1273.7 167.3h0M1272.6 167.8h0M1268.9 168.3h0M1268.5 168.8h0M1269.9 169.3h0M1265.9 169.8h0M1269.3 170.3h0M1269.9 170.8h0M1265.7 171.3h0M1271.4 171.8h0M1265.6 172.3h0M1264.5 172.8h0M1263.4 173.3h0M1261.3 173.8h0M1264.0 174.3h0M1260.8 174.8h0M1265.2 175.3h0M1262.3 175.8h0M1262.1 176.3h0M1260.2 176.8h0M1257.1 177.3h0M1259.4 177.8h0M1256.9 178.3h0M1262.2 178.8h0M1260.3 179.3h0M1264.8 179.8h0M1261.4 180.3h0M1260.4 180.8h0M1258.1 181.3h0M1257.6 181.8h0M1258.6 182.3h0M1259.4 182.8h0M1254.6 183.3h0M1257.4 183.8h0M1263.3 184.3h0M1276.0 184.8h0M1255.8 185.3h0M1254.7 185.8h0M1251.1 186.3h0M1258.9 186.8h0M1257.5 187.3h0M1259.0 187.8h0M1263.5 188.3h0M1264.5 188.8h0M1255.0 189.3h0M1260.7 189.8h0M1259.4 190.3h0M1277.0 190.8h0M1256.7 191.3h0M1254.9 191.8h0M1258.2 192.3h0M1255.8 192.8h0M1255.7 193.3h0M1257.8 193.8h0M1256.1 194.3h0M1255.5 194.8h0M1255.7 195.3h0M1259.4 195.8h0M1255.9 196.3h0M1253.6 196.8h0M1251.5 197.3h0M1253.8 197.8h0M1251.6 198.3h0M1256.2 198.8h0M1256.9 199.3h0M1250.5 199.8h0M1254.4 200.3h0M1257.2 200.8h0M1255.3 201.3h0M1250.5 201.8h0M1258.6 202.3h0M1252.3 202.8h0M1251.5 203.3h0M1252.5 203.8h0M1255.7 204.3h0M1259.1 204.8h0M1260.3 205.3h0M1258.4 205.8h0M1255.6 206.3h0M1258.6 206.8h0M1257.9 207.3h0M1259.9 207.8h0M1254.9 208.3h0M1260.9 208.8h0M1263.6 209.3h0M1262.0 209.8h0M1264.0 210.3h0M1261.7 210.8h0M1261.0 211.3h0M1261.9 211.8h0M1305.7 212.3h0M1267.3 212.8h0M1263.4 213.3h0M1268.4 213.8h0M1264.7 214.3h0M1270.3 214.8h0M1266.7 215.3h0M1264.2 215.8h0M1267.5 216.3h0M1263.7 216.8h0M1262.3 217.3h0M1260.5 217.8h0M1265.5 218.3h0M1264.4 218.8h0M1264.8 219.3h0M1263.6 219.8h0M1269.1 220.3h0M1264.1 220.8h0M1263.8 221.3h0M1269.4 221.8h0M1269.8 222.3h0M1267.2 222.8h0M1261.9 223.3h0M1265.8 223.8h0M1269.4 224.3h0M1269.0 224.8h0M1274.0 225.3h0M1266.3 225.8h0M1272.7 226.3h0M1269.1 226.8h0M1275.0 227.3h0M1271.6 227.8h0M1275.5 228.3h0M1271.6 228.8h0M1270.6 229.3h0M1271.8 229.8h0M1273.1 230.3h0M1271.6 230.8h0M1277.4 231.3h0M1277.8 231.8h0M1275.4 232.3h0M1271.4 232.8h0M1274.0 233.3h0M1273.2 233.8h0M1278.8 234.3h0M1276.1 234.8h0M1277.4 235.3h0M1275.4 235.8h0M1271.1 236.3h0M1275.0 236.8h0M1274.4 237.3h0M1279.0 237.8h0M1278.6 238.3h0M1275.8 238.8h0M1277.1 239.3h0M1282.7 239.8h0M1275.6 240.3h0M1276.3 240.8h0M1279.2 241.3h0M1277.4 241.8h0M1276.7 242.3h0M1278.7 242.8h0M1268.9 243.3h0M1271.9 243.8h0M1276.9 244.3h0M1277.4 244.8h0M1274.0 245.3h0M1277.2 245.8h0M1276.6 246.3h0M1279.8 246.8h0M1275.1 247.3h0M1275.0 247.8h0M1276.1 248.3h0M1276.8 248.8h0M1277.4 249.3h0M1282.3 249.8h0M1280.2 250.3h0M1280.8 250.8h0M1280.0 251.3h0M1278.1 251.8h0M1279.2 252.3h0M1279.4 252.8h0M1284.5 253.3h0M1283.7 253.8h0M1283.8 254.3h0M1287.2 254.8h0M1289.1 255.3h0M1268.2 255.8h0M1291.3 256.3h0M1287.5 256.8h0M1287.6 257.3h0M1291.1 257.8h0M1289.9 258.3h0M1287.6 258.8h0M1295.3 259.3h0M1286.2 259.8h0M1287.7 260.3h0M1290.1 260.8h0M1284.2 261.3h0M1286.8 261.8h0M1288.3 262.3h0M1295.0 262.8h0M1286.7 263.3h0M1289.7 263.8h0M1293.2 264.3h0M1291.2 264.8h0M1288.2 265.3h0M1294.1 265.8h0M1293.2 266.3h0M1295.1 266.8h0M1298.6 267.3h0M1301.8 267.8h0M1299.1 268.3h0M1299.7 268.8h0M1296.4 269.3h0M1298.1 269.8h0M1298.9 270.3h0M1278.7 270.8h0M1297.7 271.3h0M1296.1 271.8h0M1302.4 272.3h0M1305.0 272.8h0M1298.2 273.3h0M1299.9 273.8h0M1297.4 274.3h0M1301.8 274.8h0M1299.7 275.3h0M1298.7 275.8h0M1297.9 276.3h0M1299.1 276.8h0M1297.1 277.3h0M1302.3 277.8h0M1299.7 278.3h0M1302.1 278.8h0M1301.3 279.3h0M1304.4 279.8h0M1304.5 280.3h0M1314.1 280.8h0M1312.7 281.3h0M1323.0 281.8h0M1324.4 282.3h0M1332.1 282.8h0M1335.6 283.3h0M1345.6 283.8h0M1332.9 284.3h0M1348.6 284.8h0M1342.0 285.3h0M1364.6 285.8h0M1347.3 286.3h0M1356.2 286.8h0M1352.6 287.3h0M1373.8 287.8h0M1354.1 288.3h0M1365.3 288.8h0M1363.5 289.3h0M1357.6 289.8h0M1367.8 290.3h0M1378.2 290.8h0M1377.1 291.3h0M1386.9 291.8h0M1376.9 292.3h0M1381.0 292.8h0M1376.6 293.3h0M1383.1 293.8h0M1400.2 294.3h0M1388.7 294.8h0M1387.9 295.3h0M1381.7 295.8h0M1381.6 296.3h0M1399.1 296.8h0M1381.5 297.3h0M1382.4 297.8h0M1389.1 298.3h0M1390.4 298.8h0M1405.0 299.3h0M1374.9 299.8h0M1396.4 300.3h0M1395.4 300.8h0M1383.1 301.3h0M1386.4 301.8h0M1409.4 302.3h0M1398.7 302.8h0M1381.6 303.3h0M1373.3 303.8h0M1390.4 304.3h0M1394.1 304.8h0M1378.0 305.3h0M1363.6 305.8h0M1391.0 306.3h0M1379.6 306.8h0M1391.5 307.3h0M1385.1 307.8h0M1380.8 308.3h0M1381.9 308.8h0M1397.3 309.3h0M1396.9 309.8h0M1372.2 310.3h0M1381.9 310.8h0M1402.1 311.3h0M1391.2 311.8h0M1379.9 312.3h0M1390.6 312.8h0M1384.8 313.3h0M1382.4 313.8h0M1375.5 314.3h0M1373.1 314.8h0M1367.8 315.3h0M1371.8 315.8h0M1358.5 316.3h0M1358.4 316.8h0M1354.9 317.3h0M1360.4 317.8h0M1348.8 318.3h0M1343.6 318.8h0M1343.4 319.3h0M1342.5 319.8h0M1346.1 320.3h0M1343.0 320.8h0M1348.1 321.3h0M1346.2 321.8h0M1339.0 322.3h0M1337.1 322.8h0M1339.0 323.3h0M1340.7 323.8h0M1338.6 324.3h0M1334.9 324.8h0M1332.1 325.3h0M1338.5 325.8h0M1340.6 326.3h0M1340.8 326.8h0M1333.3 327.3h0M1339.8 327.8h0M1333.7 328.3h0M1336.6 328.8h0M1336.0 329.3h0M1331.3 329.8h0M1332.3 330.3h0M1325.9 330.8h0M1330.3 331.3h0M1349.9 331.8h0M1334.6 332.3h0M1319.2 332.8h0M1333.3 333.3h0M1331.2 333.8h0M1329.0 334.3h0M1331.9 334.8h0M1330.5 335.3h0M1347.4 335.8h0M1332.1 336.3h0M1326.3 336.8h0M1329.7 337.3h0M1327.4 337.8h0M1327.2 338.3h0M1332.6 338.8h0M1336.6 339.3h0M1329.1 339.8h0M1329.8 340.3h0M1322.6 340.8h0M1329.8 341.3h0M1329.9 341.8h0M1325.1 342.3h0M1332.2 342.8h0M1333.3 343.3h0M1327.4 343.8h0M1329.7 344.3h0M1327.8 344.8h0M1333.4 345.3h0M1325.5 345.8h0M1330.0 346.3h0M1336.3 346.8h0M1325.6 347.3h0M1330.9 347.8h0M1328.3 348.3h0M1324.5 348.8h0M1329.6 349.3h0M1332.8 349.8h0M1329.0 350.3h0M1334.3 350.8h0M1335.2 351.3h0M1332.6 351.8h0M1323.8 352.3h0M1325.2 352.8h0M1323.9 353.3h0M1332.7 353.8h0M1330.0 354.3h0M1329.9 354.8h0M1325.5 355.3h0M1323.2 355.8h0M1324.7 356.3h0M1325.5 356.8h0M1321.5 357.3h0M1326.1 357.8h0M1328.9 358.3h0M1328.0 358.8h0M1323.0 359.3h0M1318.9 359.8h0M1324.2 360.3h0M1325.0 360.8h0M1321.9 361.3h0M1319.6 361.8h0M1318.6 362.3h0M1323.8 362.8h0M1320.8 363.3h0M1319.8 363.8h0M1314.5 364.3h0M1315.3 364.8h0M1315.2 365.3h0M1310.8 365.8h0M1309.4 366.3h0M1313.4 366.8h0M1320.3 367.3h0M1316.6 367.8h0M1321.0 368.3h0M1313.7 368.8h0M1311.9 369.3h0M1305.7 369.8h0M1308.9 370.3h0M1316.1 370.8h0M1312.1 371.3h0M1312.6 371.8h0M1311.0 372.3h0M1306.3 372.8h0M1306.5 373.3h0M1305.7 373.8h0M1307.1 374.3h0M1305.0 374.8h0M1306.2 375.3h0M1305.6 375.8h0M1306.3 376.3h0M1302.9 376.8h0M1302.5 377.3h0M1308.1 377.8h0M1298.2 378.3h0M1306.8 378.8h0M1317.6 379.3h0M1305.9 379.8h0M1303.6 380.3h0M1308.3 380.8h0M1313.7 381.3h0M1309.8 381.8h0M1309.9 382.3h0M1308.1 382.8h0M1308.2 383.3h0M1320.6 383.8h0M1309.6 384.3h0M1305.5 384.8h0M1304.4 385.3h0M1308.9 385.8h0M1308.5 386.3h0M1308.0 386.8h0M1306.0 387.3h0M1300.3 387.8h0M1306.7 388.3h0M1304.1 388.8h0M1302.7 389.3h0M1296.1 389.8h0M1299.2 390.3h0M1296.5 390.8h0M1299.1 391.3h0M1293.1 391.8h0M1296.6 392.3h0M1296.9 392.8h0M1292.9 393.3h0M1294.0 393.8h0M1291.9 394.3h0M1298.4 394.8h0M1272.7 395.3h0M1291.8 395.8h0M1288.4 396.3h0M1293.7 396.8h0M1298.3 397.3h0M1293.6 397.8h0M1295.7 398.3h0M1293.0 398.8h0M1303.4 399.3h0M1299.6 399.8h0M1300.2 400.3h0M1290.3 400.8h0M1292.5 401.3h0M1301.7 401.8h0M1296.5 402.3h0M1295.8 402.8h0M1301.0 403.3h0M1295.2 403.8h0M1303.4 404.3h0M1300.2 404.8h0M1302.3 405.3h0M1295.9 405.8h0M1300.0 406.3h0M1294.0 406.8h0M1301.0 407.3h0M1302.9 407.8h0M1296.7 408.3h0M1301.6 408.8h0M1300.6 409.3h0M1278.8 409.8h0M1294.3 410.3h0M1289.0 410.8h0M1292.4 411.3h0M1289.7 411.8h0M1285.7 412.3h0M1290.3 412.8h0M1296.6 413.3h0M1300.4 413.8h0M1287.7 414.3h0M1286.5 414.8h0M1301.4 415.3h0M1288.5 415.8h0M1306.1 416.3h0M1297.7 416.8h0M1293.8 417.3h0M1302.2 417.8h0M1305.4 418.3h0M1287.1 418.8h0M1306.7 419.3h0M1294.4 419.8h0M1307.4 420.3h0M1295.8 420.8h0M1289.6 421.3h0M1301.0 421.8h0M1303.8 422.3h0M1310.8 422.8h0M1308.1 423.3h0M1300.6 423.8h0M1295.4 424.3h0M1294.4 424.8h0M1293.9 425.3h0M1288.4 425.8h0M1291.1 426.3h0M1275.2 426.8h0M1291.0 427.3h0M1285.8 427.8h0M1308.3 428.3h0M1291.6 428.8h0M1284.2 429.3h0M1287.9 429.8h0M1277.3 430.3h0M1279.9 430.8h0M1269.8 431.3h0M1291.8 431.8h0M1288.4 432.3h0M1280.4 432.8h0M1288.2 433.3h0M1293.6 433.8h0M1291.3 434.3h0M1290.6 434.8h0M1281.4 435.3h0M1282.1 435.8h0M1286.1 436.3h0M1288.7 436.8h0M1281.5 437.3h0M1282.4 437.8h0M1292.9 438.3h0M1279.3 438.8h0M1289.4 439.3h0M1285.3 439.8h0M1289.1 440.3h0M1294.6 440.8h0M1285.1 441.3h0M1285.0 441.8h0M1276.2 442.3h0M1280.1 442.8h0M1288.0 443.3h0M1291.4 443.8h0M1290.9 444.3h0M1297.2 444.8h0M1285.8 445.3h0M1286.4 445.8h0M1290.7 446.3h0M1287.4 446.8h0M1287.9 447.3h0M1283.8 447.8h0M1297.2 448.3h0M1284.3 448.8h0M1291.1 449.3h0M1279.7 449.8h0M1296.7 450.3h0M1281.2 450.8h0M1293.9 451.3h0M1280.3 451.8h0M1286.3 452.3h0M1296.3 452.8h0M1283.7 453.3h0M1289.3 453.8h0M1286.2 454.3h0M1275.2 454.8h0M1290.4 455.3h0M1294.8 455.8h0M1287.8 456.3h0M1295.6 456.8h0M1288.8 457.3h0M1285.6 457.8h0M1291.2 458.3h0M1287.5 458.8h0M1307.1 459.3h0M1281.5 459.8h0M1294.9 460.3h0M1297.3 460.8h0M1279.1 461.3h0M1280.6 461.8h0M1291.4 462.3h0M1284.1 462.8h0M1291.4 463.3h0M1294.5 463.8h0M1287.8 464.3h0M1283.2 464.8h0M1274.7 465.3h0M1274.3 465.8h0M1286.6 466.3h0M1293.4 466.8h0M1293.6 467.3h0M1275.6 467.8h0M1293.4 468.3h0M1299.9 468.8h0M1299.1 469.3h0M1288.4 469.8h0M1292.3 470.3h0M1289.7 470.8h0M1292.0 471.3h0M1284.6 471.8h0M1293.0 472.3h0M1292.7 472.8h0M1294.3 473.3h0M1286.8 473.8h0M1298.9 474.3h0M1294.6 474.8h0M1277.4 475.3h0M1289.3 475.8h0M1290.5 476.3h0M1297.7 476.8h0M1289.8 477.3h0M1289.6 477.8h0M1288.7 478.3h0M1298.8 478.8h0M1289.3 479.3h0M1284.0 479.8h0M1283.7 480.3h0M1289.9 480.8h0M1282.5 481.3h0M1274.9 481.8h0M1287.0 482.3h0M1283.6 482.8h0M1286.9 483.3h0M1288.3 483.8h0M1291.9 484.3h0M1289.3 484.8h0M1279.2 485.3h0M1279.1 485.8h0M1276.0 486.3h0M1292.3 486.8h0M1284.2 487.3h0M1290.2 487.8h0M1279.8 488.3h0M1270.0 488.8h0M1291.7 489.3h0M1283.6 489.8h0M1282.8 490.3h0M1281.3 490.8h0M1285.2 491.3h0M1283.6 491.8h0M1274.5 492.3h0M1291.1 492.8h0M1280.2 493.3h0M1281.7 493.8h0M1291.7 494.3h0M1286.6 494.8h0M1279.3 495.3h0M1266.9 495.8h0M1279.1 496.3h0M1280.6 496.8h0M1277.2 497.3h0M1273.2 497.8h0M1275.9 498.3h0M1273.8 498.8h0M1282.4 499.3h0M1287.7 499.8h0M1288.9 500.3h0M1281.8 500.8h0M1290.4 501.3h0M1292.2 501.8h0M1287.1 502.3h0M1288.9 502.8h0M1299.0 503.3h0M1287.0 503.8h0M1288.8 504.3h0M1280.9 504.8h0M1281.6 505.3h0M1272.5 505.8h0M1282.6 506.3h0M1288.3 506.8h0M1293.7 507.3h0M1287.7 507.8h0M1285.4 508.3h0M1280.2 508.8h0M1278.0 509.3h0M1284.2 509.8h0M1289.8 510.3h0M1281.6 510.8h0M1290.3 511.3h0M1280.8 511.8h0M1275.7 512.3h0M1280.0 512.8h0M1277.2 513.3h0M1276.3 513.8h0M1288.7 514.3h0M1281.3 514.8h0M1284.3 515.3h0M1291.4 515.8h0M1291.9 516.3h0M1281.3 516.8h0M1293.2 517.3h0M1289.1 517.8h0M1285.6 518.3h0M1287.0 518.8h0M1275.2 519.3h0M1279.1 519.8h0M1284.8 520.3h0M1288.8 520.8h0M1282.5 521.3h0M1285.3 521.8h0M1289.3 522.3h0M1288.6 522.8h0M1284.5 523.3h0M1285.2 523.8h0M1274.4 524.3h0M1275.1 524.8h0M1280.0 525.3h0M1276.6 525.8h0M1274.3 526.3h0M1286.0 526.8h0M1277.5 527.3h0M1271.8 527.8h0M1279.7 528.3h0M1288.4 528.8h0M1282.0 529.3h0M1287.3 529.8h0M1278.9 530.3h0M1278.4 530.8h0M1276.8 531.3h0M1280.1 531.8h0M1291.4 532.3h0M1273.9 532.8h0M1291.0 533.3h0M1274.1 533.8h0M1279.4 534.3h0M1285.6 534.8h0M1282.9 535.3h0M1280.1 535.8h0M1270.6 536.3h0M1281.8 536.8h0M1273.2 537.3h0M1292.7 537.8h0M1276.8 538.3h0M1278.3 538.8h0M1270.8 539.3h0M1273.5 539.8h0M1268.3 540.3h0M1281.3 540.8h0M1273.8 541.3h0M1277.4 541.8h0M1263.0 542.3h0M1272.3 542.8h0M1283.8 543.3h0M1269.6 543.8h0M1265.0 544.3h0M1277.4 544.8h0M1268.5 545.3h0M1271.8 545.8h0M1280.1 546.3h0M1268.9 546.8h0M1278.7 547.3h0M1267.2 547.8h0M1280.1 548.3h0M1277.3 548.8h0M1268.3 549.3h0M1269.6 549.8h0M1267.1 550.3h0M1276.0 550.8h0M1279.7 551.3h0M1262.6 551.8h0M1274.3 552.3h0M1262.6 552.8h0M1266.3 553.3h0M1260.1 553.8h0M1284.2 554.3h0M1271.6 554.8h0M1274.9 555.3h0M1268.9 555.8h0M1279.9 556.3h0M1262.3 556.8h0M1270.2 557.3h0M1284.3 557.8h0M1271.2 558.3h0M1275.9 558.8h0M1279.6 559.3h0M1270.9 559.8h0M1277.7 560.3h0M1283.9 560.8h0M1279.9 561.3h0M1280.0 561.8h0M1275.3 562.3h0M1278.5 562.8h0M1278.3 563.3h0M1289.0 563.8h0M1284.6 564.3h0M1280.0 564.8h0M1267.3 565.3h0M1284.8 565.8h0M1285.1 566.3h0M1274.9 566.8h0M1267.6 567.3h0M1273.5 567.8h0M1285.3 568.3h0M1273.7 568.8h0M1275.3 569.3h0M1277.6 569.8h0M1284.1 570.3h0M1276.4 570.8h0M1274.9 571.3h0M1274.4 571.8h0M1286.3 572.3h0M1281.5 572.8h0M1274.4 573.3h0M1269.1 573.8h0M1272.2 574.3h0M1280.8 574.8h0M1256.4 575.3h0M1285.1 575.8h0M1282.4 576.3h0M1280.6 576.8h0M1283.2 577.3h0M1282.0 577.8h0M1273.1 578.3h0M1276.2 578.8h0M1293.0 579.3h0M1272.6 579.8h0M1276.1 580.3h0M1283.5 580.8h0M1274.4 581.3h0M1269.1 581.8h0M1265.5 582.3h0M1276.2 582.8h0M1279.2 583.3h0M1280.7 583.8h0M1273.7 584.3h0M1279.2 584.8h0M1250.5 585.3h0M1272.3 585.8h0M1266.1 586.3h0M1272.5 586.8h0M1277.1 587.3h0M1279.3 587.8h0M1268.5 588.3h0M1281.4 588.8h0M1271.8 589.3h0M1270.6 589.8h0M1276.7 590.3h0M1269.5 590.8h0M1278.8 591.3h0M1281.2 591.8h0M1280.3 592.3h0M1286.5 592.8h0M1280.8 593.3h0M1282.2 593.8h0M1275.3 594.3h0M1284.1 594.8h0M1278.7 595.3h0M1283.6 595.8h0M1284.5 596.3h0M1285.7 596.8h0M1274.5 597.3h0M1274.8 597.8h0M1284.3 598.3h0M1287.5 598.8h0M1287.4 599.3h0M1291.0 599.8h0M1293.0 600.3h0M1287.1 600.8h0M1282.7 601.3h0M1277.7 601.8h0M1277.4 602.3h0M1280.3 602.8h0M1283.6 603.3h0M1282.9 603.8h0M1281.9 604.3h0M1279.3 604.8h0M1283.1 605.3h0M1279.7 605.8h0M1276.7 606.3h0M1279.1 606.8h0M1275.2 607.3h0M1274.2 607.8h0M1281.7 608.3h0M1278.9 608.8h0M1274.0 609.3h0M1274.4 609.8h0M1290.2 610.3h0M1272.0 610.8h0M1277.7 611.3h0M1282.1 611.8h0M1273.0 612.3h0M1281.5 612.8h0M1292.1 613.3h0M1286.6 613.8h0M1285.8 614.3h0M1288.5 614.8h0M1286.1 615.3h0M1291.3 615.8h0M1284.9 616.3h0M1282.5 616.8h0M1284.3 617.3h0M1286.5 617.8h0M1282.7 618.3h0M1285.2 618.8h0M1270.5 619.3h0M1286.4 619.8h0M1291.8 620.3h0M1286.3 620.8h0M1272.7 621.3h0M1269.7 621.8h0M1277.0 622.3h0M1268.4 622.8h0M1279.7 623.3h0M1275.1 623.8h0M1283.1 624.3h0M1284.8 624.8h0M1264.9 625.3h0M1278.9 625.8h0M1274.0 626.3h0M1271.8 626.8h0M1276.2 627.3h0M1281.6 627.8h0M1290.9 628.3h0M1276.6 628.8h0M1291.4 629.3h0M1296.6 629.8h0M1287.8 630.3h0M1287.0 630.8h0M1285.1 631.3h0M1257.3 631.8h0M1289.5 632.3h0M1287.6 632.8h0M1289.5 633.3h0M1298.8 633.8h0M1287.6 634.3h0M1284.6 634.8h0M1288.1 635.3h0M1274.6 635.8h0M1274.3 636.3h0M1275.8 636.8h0M1274.8 637.3h0M1280.2 637.8h0M1275.1 638.3h0M1285.3 638.8h0M1285.4 639.3h0M1280.2 639.8h0M1275.7 640.3h0M1282.3 640.8h0M1285.3 641.3h0M1275.9 641.8h0M1283.1 642.3h0M1285.2 642.8h0M1285.4 643.3h0M1294.7 643.8h0M1291.9 644.3h0M1278.6 644.8h0M1283.6 645.3h0M1276.2 645.8h0M1284.3 646.3h0M1272.8 646.8h0M1280.6 647.3h0M1275.6 647.8h0M1279.8 648.3h0M1272.8 648.8h0M1266.4 649.3h0M1283.8 649.8h0M1272.1 650.3h0M1282.5 650.8h0" stroke="#dd8f6d" stroke-width="2.8" stroke-linecap="round" fill="none"/><polyline points="1295.2,141.8 1294.3,142.3 1291.9,142.8 1291.0,143.3 1290.9,143.8 1290.5,144.3 1292.4,144.8 1296.4,145.3 1292.7,145.8 1292.6,146.3 1296.9,146.8 1298.5,147.3 1296.3,147.8 1294.4,148.3 1295.5,148.8 1298.0,149.3 1298.8,149.8 1294.2,150.3 1290.9,150.8 1292.2,151.3 1289.1,151.8 1292.3,152.3 1291.2,152.8 1295.1,153.3 1294.2,153.8 1292.1,154.3 1285.0,154.8 1289.5,155.3 1292.0,155.8 1293.8,156.3 1289.2,156.8 1294.9,157.3 1288.8,157.8 1290.8,158.3 1294.6,158.8 1291.0,159.3 1293.0,159.8 1294.0,160.3 1289.4,160.8 1289.8,161.3 1289.9,161.8 1288.9,162.3 1283.6,162.8 1287.8,163.3 1290.4,163.8 1283.6,164.3 1288.9,164.8 1288.3,165.3 1277.6,165.8 1294.4,166.3 1292.3,166.8 1287.7,167.3 1289.1,167.8 1290.8,168.3 1287.7,168.8 1288.9,169.3 1284.9,169.8 1286.7,170.3 1287.2,170.8 1281.0,171.3 1282.5,171.8 1281.9,172.3 1282.3,172.8 1280.7,173.3 1279.4,173.8 1282.4,174.3 1277.1,174.8 1285.8,175.3 1279.4,175.8 1279.5,176.3 1281.7,176.8 1276.2,177.3 1278.6,177.8 1281.6,178.3 1286.3,178.8 1286.6,179.3 1282.3,179.8 1281.6,180.3 1284.7,180.8 1289.4,181.3 1284.3,181.8 1283.5,182.3 1285.0,182.8 1282.3,183.3 1279.4,183.8 1278.5,184.3 1280.3,184.8 1278.1,185.3 1280.6,185.8 1279.1,186.3 1276.7,186.8 1277.9,187.3 1276.6,187.8 1279.9,188.3 1277.4,188.8 1278.0,189.3 1274.0,189.8 1277.3,190.3 1272.0,190.8 1271.9,191.3 1275.6,191.8 1275.2,192.3 1278.5,192.8 1282.4,193.3 1274.3,193.8 1273.3,194.3 1275.9,194.8 1276.4,195.3 1274.8,195.8 1274.9,196.3 1274.9,196.8 1273.5,197.3 1268.6,197.8 1270.8,198.3 1272.1,198.8 1269.9,199.3 1272.1,199.8 1269.1,200.3 1275.0,200.8 1275.3,201.3 1274.8,201.8 1275.1,202.3 1277.0,202.8 1272.5,203.3 1274.4,203.8 1278.9,204.3 1274.9,204.8 1279.4,205.3 1273.7,205.8 1278.8,206.3 1274.8,206.8 1276.7,207.3 1274.1,207.8 1271.9,208.3 1278.1,208.8 1278.7,209.3 1274.9,209.8 1274.7,210.3 1275.2,210.8 1274.2,211.3 1278.4,211.8 1275.4,212.3 1276.1,212.8 1286.0,213.3 1290.1,213.8 1295.7,214.3 1307.0,214.8 1304.2,215.3 1295.1,215.8 1299.6,216.3 1296.9,216.8 1294.7,217.3 1295.5,217.8 1297.3,218.3 1300.0,218.8 1298.9,219.3 1296.7,219.8 1298.2,220.3 1304.3,220.8 1299.6,221.3 1300.1,221.8 1305.8,222.3 1306.6,222.8 1301.8,223.3 1304.3,223.8 1303.5,224.3 1302.4,224.8 1313.4,225.3 1310.8,225.8 1316.4,226.3 1319.6,226.8 1318.3,227.3 1327.0,227.8 1322.2,228.3 1317.8,228.8 1319.5,229.3 1318.1,229.8 1301.7,230.3 1308.0,230.8 1305.6,231.3 1302.5,231.8 1299.9,232.3 1300.4,232.8 1297.7,233.3 1297.7,233.8 1298.6,234.3 1305.3,234.8 1306.7,235.3 1310.0,235.8 1296.6,236.3 1303.7,236.8 1305.1,237.3 1304.6,237.8 1301.1,238.3 1305.6,238.8 1301.3,239.3 1300.7,239.8 1300.5,240.3 1298.9,240.8 1303.7,241.3 1297.0,241.8 1301.6,242.3 1303.3,242.8 1306.2,243.3 1309.9,243.8 1309.5,244.3 1303.4,244.8 1309.2,245.3 1316.3,245.8 1319.4,246.3 1317.0,246.8 1322.9,247.3 1315.1,247.8 1313.1,248.3 1315.3,248.8 1316.4,249.3 1315.7,249.8 1316.3,250.3 1313.0,250.8 1310.3,251.3 1313.9,251.8 1312.4,252.3 1312.7,252.8 1319.4,253.3 1319.9,253.8 1321.2,254.3 1315.8,254.8 1316.1,255.3 1316.1,255.8 1315.5,256.3 1318.3,256.8 1317.6,257.3 1322.4,257.8 1322.5,258.3 1327.0,258.8 1324.5,259.3 1324.5,259.8 1323.6,260.3 1322.9,260.8 1319.1,261.3 1322.0,261.8 1329.6,262.3 1331.3,262.8 1332.7,263.3 1344.0,263.8 1341.4,264.3 1335.4,264.8 1328.5,265.3 1327.3,265.8 1316.0,266.3 1313.9,266.8 1322.1,267.3 1327.5,267.8 1323.7,268.3 1320.4,268.8 1321.7,269.3 1327.2,269.8 1331.2,270.3 1337.0,270.8 1334.4,271.3 1326.4,271.8 1327.4,272.3 1322.6,272.8 1320.7,273.3 1317.4,273.8 1320.3,274.3 1317.4,274.8 1320.4,275.3 1313.7,275.8 1316.8,276.3 1315.7,276.8 1314.1,277.3 1321.9,277.8 1321.9,278.3 1317.6,278.8 1321.2,279.3 1320.0,279.8 1313.8,280.3 1319.6,280.8 1320.5,281.3 1319.5,281.8 1333.6,282.3 1360.1,282.8 1387.8,283.3 1417.7,283.8 1426.9,284.3 1426.8,284.8 1429.8,285.3 1425.8,285.8 1423.9,286.3 1421.3,286.8 1430.2,287.3 1430.3,287.8 1430.5,288.3 1427.9,288.8 1425.5,289.3 1425.6,289.8 1425.0,290.3 1426.3,290.8 1427.1,291.3 1430.1,291.8 1428.6,292.3 1427.4,292.8 1427.5,293.3 1428.5,293.8 1432.8,294.3 1430.3,294.8 1430.1,295.3 1428.9,295.8 1428.9,296.3 1431.2,296.8 1431.9,297.3 1429.9,297.8 1429.2,298.3 1430.4,298.8 1430.3,299.3 1425.3,299.8 1427.7,300.3 1426.7,300.8 1429.5,301.3 1425.9,301.8 1428.4,302.3 1431.0,302.8 1425.3,303.3 1422.9,303.8 1423.9,304.3 1421.6,304.8 1418.0,305.3 1421.7,305.8 1426.6,306.3 1420.9,306.8 1421.4,307.3 1419.4,307.8 1422.4,308.3 1419.4,308.8 1421.2,309.3 1427.8,309.8 1425.6,310.3 1430.1,310.8 1430.5,311.3 1424.7,311.8 1426.8,312.3 1430.7,312.8 1423.0,313.3 1419.8,313.8 1418.5,314.3 1422.1,314.8 1426.4,315.3 1425.8,315.8 1413.8,316.3 1399.4,316.8 1388.1,317.3 1379.4,317.8 1366.5,318.3 1353.3,318.8 1347.7,319.3 1346.8,319.8 1347.9,320.3 1346.4,320.8 1348.9,321.3 1350.5,321.8 1354.5,322.3 1352.1,322.8 1351.0,323.3 1346.5,323.8 1349.3,324.3 1342.4,324.8 1344.9,325.3 1348.1,325.8 1351.0,326.3 1347.1,326.8 1342.7,327.3 1344.3,327.8 1348.2,328.3 1353.7,328.8 1357.1,329.3 1357.0,329.8 1355.0,330.3 1349.6,330.8 1350.1,331.3 1345.4,331.8 1341.4,332.3 1342.5,332.8 1339.0,333.3 1344.4,333.8 1346.9,334.3 1348.2,334.8 1343.9,335.3 1348.6,335.8 1347.7,336.3 1346.4,336.8 1347.5,337.3 1343.7,337.8 1343.8,338.3 1348.0,338.8 1345.4,339.3 1348.0,339.8 1347.9,340.3 1341.0,340.8 1342.8,341.3 1344.9,341.8 1345.8,342.3 1345.6,342.8 1352.2,343.3 1350.0,343.8 1343.4,344.3 1345.7,344.8 1350.9,345.3 1350.9,345.8 1346.0,346.3 1356.1,346.8 1355.2,347.3 1354.2,347.8 1348.5,348.3 1346.8,348.8 1345.2,349.3 1354.5,349.8 1347.5,350.3 1349.2,350.8 1342.6,351.3 1342.5,351.8 1336.4,352.3 1339.5,352.8 1343.6,353.3 1338.6,353.8 1346.5,354.3 1344.9,354.8 1340.2,355.3 1341.8,355.8 1340.4,356.3 1343.2,356.8 1341.3,357.3 1338.4,357.8 1340.6,358.3 1337.7,358.8 1335.1,359.3 1339.4,359.8 1340.0,360.3 1334.1,360.8 1334.7,361.3 1332.6,361.8 1334.2,362.3 1336.9,362.8 1333.6,363.3 1338.7,363.8 1334.0,364.3 1335.4,364.8 1333.3,365.3 1331.1,365.8 1333.9,366.3 1332.7,366.8 1333.0,367.3 1329.7,367.8 1325.8,368.3 1325.4,368.8 1326.6,369.3 1327.6,369.8 1323.3,370.3 1326.1,370.8 1321.7,371.3 1328.3,371.8 1322.3,372.3 1320.3,372.8 1327.3,373.3 1331.9,373.8 1326.6,374.3 1328.0,374.8 1328.7,375.3 1327.9,375.8 1332.0,376.3 1329.0,376.8 1328.4,377.3 1332.1,377.8 1327.8,378.3 1329.0,378.8 1323.8,379.3 1321.9,379.8 1320.9,380.3 1334.1,380.8 1330.3,381.3 1333.2,381.8 1333.8,382.3 1335.9,382.8 1336.0,383.3 1341.7,383.8 1334.9,384.3 1331.9,384.8 1333.1,385.3 1334.5,385.8 1340.5,386.3 1341.0,386.8 1334.7,387.3 1332.6,387.8 1336.7,388.3 1338.2,388.8 1327.1,389.3 1334.0,389.8 1329.0,390.3 1332.4,390.8 1324.8,391.3 1321.8,391.8 1318.8,392.3 1320.2,392.8 1328.1,393.3 1325.3,393.8 1319.3,394.3 1315.4,394.8 1311.0,395.3 1312.3,395.8 1315.0,396.3 1314.8,396.8 1310.7,397.3 1307.0,397.8 1309.8,398.3 1310.2,398.8 1315.0,399.3 1314.3,399.8 1307.9,400.3 1285.9,400.8 1302.9,401.3 1301.6,401.8 1299.4,402.3 1299.6,402.8 1297.9,403.3 1300.0,403.8 1299.4,404.3 1297.9,404.8 1295.0,405.3 1292.5,405.8 1289.6,406.3 1301.6,406.8 1290.7,407.3 1291.4,407.8 1292.3,408.3 1285.7,408.8 1289.7,409.3 1275.1,409.8 1288.3,410.3 1292.9,410.8 1287.4,411.3 1295.2,411.8 1297.0,412.3 1307.0,412.8 1295.9,413.3 1296.5,413.8 1293.0,414.3 1295.0,414.8 1281.2,415.3 1295.7,415.8 1306.1,416.3 1296.4,416.8 1294.9,417.3 1293.1,417.8 1298.4,418.3 1301.7,418.8 1298.3,419.3 1313.0,419.8 1324.2,420.3 1290.3,420.8 1292.2,421.3 1293.8,421.8 1289.1,422.3 1294.0,422.8 1287.7,423.3 1283.0,423.8 1277.5,424.3 1286.5,424.8 1288.2,425.3 1292.8,425.8 1292.4,426.3 1291.9,426.8 1299.9,427.3 1294.1,427.8 1282.5,428.3 1290.0,428.8 1282.8,429.3 1282.7,429.8 1284.6,430.3 1291.6,430.8 1286.9,431.3 1289.7,431.8 1295.7,432.3 1297.7,432.8 1288.7,433.3 1286.2,433.8 1283.8,434.3 1287.5,434.8 1292.7,435.3 1294.4,435.8 1293.2,436.3 1296.7,436.8 1289.4,437.3 1294.4,437.8 1296.2,438.3 1294.1,438.8 1295.3,439.3 1291.5,439.8 1286.2,440.3 1287.2,440.8 1281.7,441.3 1278.2,441.8 1286.2,442.3 1288.0,442.8 1287.8,443.3 1281.2,443.8 1288.5,444.3 1289.5,444.8 1287.3,445.3 1281.8,445.8 1290.2,446.3 1296.8,446.8 1295.1,447.3 1290.6,447.8 1292.7,448.3 1293.5,448.8 1279.1,449.3 1289.8,449.8 1293.7,450.3 1295.6,450.8 1298.9,451.3 1297.8,451.8 1294.2,452.3 1311.0,452.8 1295.4,453.3 1287.9,453.8 1299.3,454.3 1305.0,454.8 1304.7,455.3 1301.3,455.8 1297.0,456.3 1298.9,456.8 1302.4,457.3 1297.2,457.8 1301.2,458.3 1291.1,458.8 1292.3,459.3 1289.0,459.8 1294.3,460.3 1292.5,460.8 1261.7,461.3 1281.8,461.8 1288.5,462.3 1285.0,462.8 1281.0,463.3 1290.8,463.8 1292.9,464.3 1272.7,464.8 1287.9,465.3 1293.0,465.8 1288.8,466.3 1292.7,466.8 1285.6,467.3 1285.5,467.8 1292.3,468.3 1290.6,468.8 1295.3,469.3 1294.9,469.8 1289.1,470.3 1291.6,470.8 1290.0,471.3 1292.7,471.8 1287.7,472.3 1286.5,472.8 1294.0,473.3 1297.9,473.8 1296.0,474.3 1287.4,474.8 1288.8,475.3 1294.7,475.8 1286.9,476.3 1281.6,476.8 1285.7,477.3 1287.0,477.8 1283.9,478.3 1279.7,478.8 1282.1,479.3 1290.5,479.8 1301.2,480.3 1297.4,480.8 1302.8,481.3 1310.0,481.8 1287.8,482.3 1302.4,482.8 1292.6,483.3 1288.2,483.8 1288.2,484.3 1298.6,484.8 1294.0,485.3 1278.6,485.8 1294.9,486.3 1296.7,486.8 1301.5,487.3 1292.0,487.8 1292.3,488.3 1296.2,488.8 1307.0,489.3 1301.9,489.8 1293.8,490.3 1296.9,490.8 1302.2,491.3 1291.6,491.8 1287.9,492.3 1294.0,492.8 1293.6,493.3 1292.4,493.8 1288.2,494.3 1296.8,494.8 1297.0,495.3 1291.2,495.8 1290.1,496.3 1280.9,496.8 1291.5,497.3 1289.6,497.8 1294.1,498.3 1294.3,498.8 1291.3,499.3 1288.2,499.8 1295.9,500.3 1291.5,500.8 1294.4,501.3 1292.3,501.8 1297.5,502.3 1294.7,502.8 1309.5,503.3 1308.6,503.8 1304.6,504.3 1318.0,504.8 1302.1,505.3 1310.3,505.8 1303.8,506.3 1304.6,506.8 1292.0,507.3 1294.7,507.8 1286.6,508.3 1291.4,508.8 1286.3,509.3 1291.0,509.8 1287.5,510.3 1276.9,510.8 1289.0,511.3 1288.1,511.8 1286.0,512.3 1280.7,512.8 1289.8,513.3 1295.5,513.8 1295.1,514.3 1292.7,514.8 1287.5,515.3 1264.1,515.8 1286.0,516.3 1281.4,516.8 1280.2,517.3 1278.2,517.8 1281.2,518.3 1281.1,518.8 1279.0,519.3 1264.4,519.8 1282.2,520.3 1293.7,520.8 1276.7,521.3 1284.4,521.8 1286.8,522.3 1268.4,522.8 1277.7,523.3 1280.6,523.8 1286.6,524.3 1282.8,524.8 1282.0,525.3 1284.2,525.8 1275.1,526.3 1276.4,526.8 1274.4,527.3 1282.1,527.8 1269.1,528.3 1259.8,528.8 1274.3,529.3 1278.9,529.8 1282.3,530.3 1285.1,530.8 1273.8,531.3 1283.7,531.8 1279.3,532.3 1280.5,532.8 1284.1,533.3 1280.5,533.8 1276.3,534.3 1282.7,534.8 1278.9,535.3 1276.4,535.8 1287.9,536.3 1289.9,536.8 1296.0,537.3 1288.3,537.8 1280.5,538.3 1285.8,538.8 1284.8,539.3 1284.6,539.8 1290.5,540.3 1285.5,540.8 1282.3,541.3 1291.8,541.8 1289.5,542.3 1290.0,542.8 1304.7,543.3 1288.8,543.8 1287.1,544.3 1291.2,544.8 1268.4,545.3 1285.2,545.8 1282.2,546.3 1275.2,546.8 1280.5,547.3 1294.1,547.8 1281.3,548.3 1277.6,548.8 1287.3,549.3 1262.7,549.8 1274.4,550.3 1273.1,550.8 1278.4,551.3 1279.5,551.8 1279.9,552.3 1282.9,552.8 1282.9,553.3 1287.1,553.8 1283.0,554.3 1288.2,554.8 1294.1,555.3 1301.5,555.8 1287.2,556.3 1286.9,556.8 1286.6,557.3 1277.2,557.8 1285.1,558.3 1306.9,558.8 1289.5,559.3 1295.0,559.8 1285.1,560.3 1285.6,560.8 1279.8,561.3 1281.2,561.8 1286.8,562.3 1289.1,562.8 1286.3,563.3 1281.8,563.8 1286.8,564.3 1279.6,564.8 1289.8,565.3 1284.1,565.8 1283.5,566.3 1287.9,566.8 1284.3,567.3 1280.3,567.8 1281.3,568.3 1291.6,568.8 1299.3,569.3 1324.5,569.8 1300.9,570.3 1299.0,570.8 1291.8,571.3 1286.1,571.8 1297.5,572.3 1288.1,572.8 1281.5,573.3 1281.4,573.8 1284.4,574.3 1285.3,574.8 1278.8,575.3 1274.5,575.8 1281.3,576.3 1285.4,576.8 1288.7,577.3 1293.5,577.8 1289.5,578.3 1290.0,578.8 1284.6,579.3 1291.2,579.8 1297.9,580.3 1291.6,580.8 1286.7,581.3 1287.3,581.8 1292.0,582.3 1281.1,582.8 1282.7,583.3 1285.9,583.8 1286.1,584.3 1280.4,584.8 1281.6,585.3 1282.1,585.8 1284.9,586.3 1283.5,586.8 1280.5,587.3 1288.1,587.8 1293.6,588.3 1285.4,588.8 1296.5,589.3 1300.0,589.8 1296.6,590.3 1293.7,590.8 1289.8,591.3 1295.8,591.8 1300.0,592.3 1296.6,592.8 1289.2,593.3 1303.3,593.8 1288.3,594.3 1288.2,594.8 1293.8,595.3 1280.6,595.8 1288.8,596.3 1284.4,596.8 1290.3,597.3 1283.4,597.8 1264.3,598.3 1282.6,598.8 1283.4,599.3 1278.8,599.8 1281.4,600.3 1278.1,600.8 1272.0,601.3 1283.8,601.8 1284.3,602.3 1282.6,602.8 1282.4,603.3 1285.8,603.8 1279.5,604.3 1278.0,604.8 1279.6,605.3 1286.1,605.8 1278.1,606.3 1286.6,606.8 1278.0,607.3 1278.0,607.8 1287.5,608.3 1283.4,608.8 1278.2,609.3 1283.6,609.8 1290.8,610.3 1292.0,610.8 1293.9,611.3 1298.0,611.8 1296.4,612.3 1288.8,612.8 1289.5,613.3 1287.3,613.8 1278.1,614.3 1279.5,614.8 1281.5,615.3 1278.5,615.8 1275.5,616.3 1276.9,616.8 1284.2,617.3 1283.2,617.8 1276.9,618.3 1289.9,618.8 1279.5,619.3 1293.9,619.8 1285.9,620.3 1289.8,620.8 1287.2,621.3 1295.8,621.8 1294.3,622.3 1278.7,622.8 1283.9,623.3 1293.2,623.8 1280.0,624.3 1292.6,624.8 1287.5,625.3 1290.8,625.8 1291.7,626.3 1291.5,626.8 1293.2,627.3 1277.7,627.8 1269.5,628.3 1281.6,628.8 1287.2,629.3 1283.4,629.8 1280.0,630.3 1284.2,630.8 1265.8,631.3 1274.1,631.8 1275.2,632.3 1281.8,632.8 1284.8,633.3 1286.4,633.8 1282.6,634.3 1274.3,634.8 1272.4,635.3 1280.7,635.8 1285.4,636.3 1285.7,636.8 1280.8,637.3 1279.6,637.8 1282.9,638.3 1285.2,638.8 1282.0,639.3 1288.4,639.8 1283.1,640.3 1285.2,640.8 1283.1,641.3 1287.3,641.8 1290.1,642.3 1286.2,642.8 1293.7,643.3 1288.9,643.8 1295.4,644.3 1291.2,644.8 1283.7,645.3 1283.9,645.8 1285.8,646.3 1282.0,646.8 1282.4,647.3 1279.3,647.8 1271.1,648.3 1275.9,648.8 1271.6,649.3 1279.6,649.8 1275.2,650.3 1276.1,650.8" fill="none" stroke="#4d698c" stroke-width="0.9"/><path d="M1295.2 141.8h0M1294.3 142.3h0M1291.9 142.8h0M1291.0 143.3h0M1290.9 143.8h0M1290.5 144.3h0M1292.4 144.8h0M1296.4 145.3h0M1292.7 145.8h0M1292.6 146.3h0M1296.9 146.8h0M1298.5 147.3h0M1296.3 147.8h0M1294.4 148.3h0M1295.5 148.8h0M1298.0 149.3h0M1298.8 149.8h0M1294.2 150.3h0M1290.9 150.8h0M1292.2 151.3h0M1289.1 151.8h0M1292.3 152.3h0M1291.2 152.8h0M1295.1 153.3h0M1294.2 153.8h0M1292.1 154.3h0M1285.0 154.8h0M1289.5 155.3h0M1292.0 155.8h0M1293.8 156.3h0M1289.2 156.8h0M1294.9 157.3h0M1288.8 157.8h0M1290.8 158.3h0M1294.6 158.8h0M1291.0 159.3h0M1293.0 159.8h0M1294.0 160.3h0M1289.4 160.8h0M1289.8 161.3h0M1289.9 161.8h0M1288.9 162.3h0M1283.6 162.8h0M1287.8 163.3h0M1290.4 163.8h0M1283.6 164.3h0M1288.9 164.8h0M1288.3 165.3h0M1277.6 165.8h0M1294.4 166.3h0M1292.3 166.8h0M1287.7 167.3h0M1289.1 167.8h0M1290.8 168.3h0M1287.7 168.8h0M1288.9 169.3h0M1284.9 169.8h0M1286.7 170.3h0M1287.2 170.8h0M1281.0 171.3h0M1282.5 171.8h0M1281.9 172.3h0M1282.3 172.8h0M1280.7 173.3h0M1279.4 173.8h0M1282.4 174.3h0M1277.1 174.8h0M1285.8 175.3h0M1279.4 175.8h0M1279.5 176.3h0M1281.7 176.8h0M1276.2 177.3h0M1278.6 177.8h0M1281.6 178.3h0M1286.3 178.8h0M1286.6 179.3h0M1282.3 179.8h0M1281.6 180.3h0M1284.7 180.8h0M1289.4 181.3h0M1284.3 181.8h0M1283.5 182.3h0M1285.0 182.8h0M1282.3 183.3h0M1279.4 183.8h0M1278.5 184.3h0M1280.3 184.8h0M1278.1 185.3h0M1280.6 185.8h0M1279.1 186.3h0M1276.7 186.8h0M1277.9 187.3h0M1276.6 187.8h0M1279.9 188.3h0M1277.4 188.8h0M1278.0 189.3h0M1274.0 189.8h0M1277.3 190.3h0M1272.0 190.8h0M1271.9 191.3h0M1275.6 191.8h0M1275.2 192.3h0M1278.5 192.8h0M1282.4 193.3h0M1274.3 193.8h0M1273.3 194.3h0M1275.9 194.8h0M1276.4 195.3h0M1274.8 195.8h0M1274.9 196.3h0M1274.9 196.8h0M1273.5 197.3h0M1268.6 197.8h0M1270.8 198.3h0M1272.1 198.8h0M1269.9 199.3h0M1272.1 199.8h0M1269.1 200.3h0M1275.0 200.8h0M1275.3 201.3h0M1274.8 201.8h0M1275.1 202.3h0M1277.0 202.8h0M1272.5 203.3h0M1274.4 203.8h0M1278.9 204.3h0M1274.9 204.8h0M1279.4 205.3h0M1273.7 205.8h0M1278.8 206.3h0M1274.8 206.8h0M1276.7 207.3h0M1274.1 207.8h0M1271.9 208.3h0M1278.1 208.8h0M1278.7 209.3h0M1274.9 209.8h0M1274.7 210.3h0M1275.2 210.8h0M1274.2 211.3h0M1278.4 211.8h0M1275.4 212.3h0M1276.1 212.8h0M1286.0 213.3h0M1290.1 213.8h0M1295.7 214.3h0M1307.0 214.8h0M1304.2 215.3h0M1295.1 215.8h0M1299.6 216.3h0M1296.9 216.8h0M1294.7 217.3h0M1295.5 217.8h0M1297.3 218.3h0M1300.0 218.8h0M1298.9 219.3h0M1296.7 219.8h0M1298.2 220.3h0M1304.3 220.8h0M1299.6 221.3h0M1300.1 221.8h0M1305.8 222.3h0M1306.6 222.8h0M1301.8 223.3h0M1304.3 223.8h0M1303.5 224.3h0M1302.4 224.8h0M1313.4 225.3h0M1310.8 225.8h0M1316.4 226.3h0M1319.6 226.8h0M1318.3 227.3h0M1327.0 227.8h0M1322.2 228.3h0M1317.8 228.8h0M1319.5 229.3h0M1318.1 229.8h0M1301.7 230.3h0M1308.0 230.8h0M1305.6 231.3h0M1302.5 231.8h0M1299.9 232.3h0M1300.4 232.8h0M1297.7 233.3h0M1297.7 233.8h0M1298.6 234.3h0M1305.3 234.8h0M1306.7 235.3h0M1310.0 235.8h0M1296.6 236.3h0M1303.7 236.8h0M1305.1 237.3h0M1304.6 237.8h0M1301.1 238.3h0M1305.6 238.8h0M1301.3 239.3h0M1300.7 239.8h0M1300.5 240.3h0M1298.9 240.8h0M1303.7 241.3h0M1297.0 241.8h0M1301.6 242.3h0M1303.3 242.8h0M1306.2 243.3h0M1309.9 243.8h0M1309.5 244.3h0M1303.4 244.8h0M1309.2 245.3h0M1316.3 245.8h0M1319.4 246.3h0M1317.0 246.8h0M1322.9 247.3h0M1315.1 247.8h0M1313.1 248.3h0M1315.3 248.8h0M1316.4 249.3h0M1315.7 249.8h0M1316.3 250.3h0M1313.0 250.8h0M1310.3 251.3h0M1313.9 251.8h0M1312.4 252.3h0M1312.7 252.8h0M1319.4 253.3h0M1319.9 253.8h0M1321.2 254.3h0M1315.8 254.8h0M1316.1 255.3h0M1316.1 255.8h0M1315.5 256.3h0M1318.3 256.8h0M1317.6 257.3h0M1322.4 257.8h0M1322.5 258.3h0M1327.0 258.8h0M1324.5 259.3h0M1324.5 259.8h0M1323.6 260.3h0M1322.9 260.8h0M1319.1 261.3h0M1322.0 261.8h0M1329.6 262.3h0M1331.3 262.8h0M1332.7 263.3h0M1344.0 263.8h0M1341.4 264.3h0M1335.4 264.8h0M1328.5 265.3h0M1327.3 265.8h0M1316.0 266.3h0M1313.9 266.8h0M1322.1 267.3h0M1327.5 267.8h0M1323.7 268.3h0M1320.4 268.8h0M1321.7 269.3h0M1327.2 269.8h0M1331.2 270.3h0M1337.0 270.8h0M1334.4 271.3h0M1326.4 271.8h0M1327.4 272.3h0M1322.6 272.8h0M1320.7 273.3h0M1317.4 273.8h0M1320.3 274.3h0M1317.4 274.8h0M1320.4 275.3h0M1313.7 275.8h0M1316.8 276.3h0M1315.7 276.8h0M1314.1 277.3h0M1321.9 277.8h0M1321.9 278.3h0M1317.6 278.8h0M1321.2 279.3h0M1320.0 279.8h0M1313.8 280.3h0M1319.6 280.8h0M1320.5 281.3h0M1319.5 281.8h0M1333.6 282.3h0M1360.1 282.8h0M1387.8 283.3h0M1417.7 283.8h0M1426.9 284.3h0M1426.8 284.8h0M1429.8 285.3h0M1425.8 285.8h0M1423.9 286.3h0M1421.3 286.8h0M1430.2 287.3h0M1430.3 287.8h0M1430.5 288.3h0M1427.9 288.8h0M1425.5 289.3h0M1425.6 289.8h0M1425.0 290.3h0M1426.3 290.8h0M1427.1 291.3h0M1430.1 291.8h0M1428.6 292.3h0M1427.4 292.8h0M1427.5 293.3h0M1428.5 293.8h0M1432.8 294.3h0M1430.3 294.8h0M1430.1 295.3h0M1428.9 295.8h0M1428.9 296.3h0M1431.2 296.8h0M1431.9 297.3h0M1429.9 297.8h0M1429.2 298.3h0M1430.4 298.8h0M1430.3 299.3h0M1425.3 299.8h0M1427.7 300.3h0M1426.7 300.8h0M1429.5 301.3h0M1425.9 301.8h0M1428.4 302.3h0M1431.0 302.8h0M1425.3 303.3h0M1422.9 303.8h0M1423.9 304.3h0M1421.6 304.8h0M1418.0 305.3h0M1421.7 305.8h0M1426.6 306.3h0M1420.9 306.8h0M1421.4 307.3h0M1419.4 307.8h0M1422.4 308.3h0M1419.4 308.8h0M1421.2 309.3h0M1427.8 309.8h0M1425.6 310.3h0M1430.1 310.8h0M1430.5 311.3h0M1424.7 311.8h0M1426.8 312.3h0M1430.7 312.8h0M1423.0 313.3h0M1419.8 313.8h0M1418.5 314.3h0M1422.1 314.8h0M1426.4 315.3h0M1425.8 315.8h0M1413.8 316.3h0M1399.4 316.8h0M1388.1 317.3h0M1379.4 317.8h0M1366.5 318.3h0M1353.3 318.8h0M1347.7 319.3h0M1346.8 319.8h0M1347.9 320.3h0M1346.4 320.8h0M1348.9 321.3h0M1350.5 321.8h0M1354.5 322.3h0M1352.1 322.8h0M1351.0 323.3h0M1346.5 323.8h0M1349.3 324.3h0M1342.4 324.8h0M1344.9 325.3h0M1348.1 325.8h0M1351.0 326.3h0M1347.1 326.8h0M1342.7 327.3h0M1344.3 327.8h0M1348.2 328.3h0M1353.7 328.8h0M1357.1 329.3h0M1357.0 329.8h0M1355.0 330.3h0M1349.6 330.8h0M1350.1 331.3h0M1345.4 331.8h0M1341.4 332.3h0M1342.5 332.8h0M1339.0 333.3h0M1344.4 333.8h0M1346.9 334.3h0M1348.2 334.8h0M1343.9 335.3h0M1348.6 335.8h0M1347.7 336.3h0M1346.4 336.8h0M1347.5 337.3h0M1343.7 337.8h0M1343.8 338.3h0M1348.0 338.8h0M1345.4 339.3h0M1348.0 339.8h0M1347.9 340.3h0M1341.0 340.8h0M1342.8 341.3h0M1344.9 341.8h0M1345.8 342.3h0M1345.6 342.8h0M1352.2 343.3h0M1350.0 343.8h0M1343.4 344.3h0M1345.7 344.8h0M1350.9 345.3h0M1350.9 345.8h0M1346.0 346.3h0M1356.1 346.8h0M1355.2 347.3h0M1354.2 347.8h0M1348.5 348.3h0M1346.8 348.8h0M1345.2 349.3h0M1354.5 349.8h0M1347.5 350.3h0M1349.2 350.8h0M1342.6 351.3h0M1342.5 351.8h0M1336.4 352.3h0M1339.5 352.8h0M1343.6 353.3h0M1338.6 353.8h0M1346.5 354.3h0M1344.9 354.8h0M1340.2 355.3h0M1341.8 355.8h0M1340.4 356.3h0M1343.2 356.8h0M1341.3 357.3h0M1338.4 357.8h0M1340.6 358.3h0M1337.7 358.8h0M1335.1 359.3h0M1339.4 359.8h0M1340.0 360.3h0M1334.1 360.8h0M1334.7 361.3h0M1332.6 361.8h0M1334.2 362.3h0M1336.9 362.8h0M1333.6 363.3h0M1338.7 363.8h0M1334.0 364.3h0M1335.4 364.8h0M1333.3 365.3h0M1331.1 365.8h0M1333.9 366.3h0M1332.7 366.8h0M1333.0 367.3h0M1329.7 367.8h0M1325.8 368.3h0M1325.4 368.8h0M1326.6 369.3h0M1327.6 369.8h0M1323.3 370.3h0M1326.1 370.8h0M1321.7 371.3h0M1328.3 371.8h0M1322.3 372.3h0M1320.3 372.8h0M1327.3 373.3h0M1331.9 373.8h0M1326.6 374.3h0M1328.0 374.8h0M1328.7 375.3h0M1327.9 375.8h0M1332.0 376.3h0M1329.0 376.8h0M1328.4 377.3h0M1332.1 377.8h0M1327.8 378.3h0M1329.0 378.8h0M1323.8 379.3h0M1321.9 379.8h0M1320.9 380.3h0M1334.1 380.8h0M1330.3 381.3h0M1333.2 381.8h0M1333.8 382.3h0M1335.9 382.8h0M1336.0 383.3h0M1341.7 383.8h0M1334.9 384.3h0M1331.9 384.8h0M1333.1 385.3h0M1334.5 385.8h0M1340.5 386.3h0M1341.0 386.8h0M1334.7 387.3h0M1332.6 387.8h0M1336.7 388.3h0M1338.2 388.8h0M1327.1 389.3h0M1334.0 389.8h0M1329.0 390.3h0M1332.4 390.8h0M1324.8 391.3h0M1321.8 391.8h0M1318.8 392.3h0M1320.2 392.8h0M1328.1 393.3h0M1325.3 393.8h0M1319.3 394.3h0M1315.4 394.8h0M1311.0 395.3h0M1312.3 395.8h0M1315.0 396.3h0M1314.8 396.8h0M1310.7 397.3h0M1307.0 397.8h0M1309.8 398.3h0M1310.2 398.8h0M1315.0 399.3h0M1314.3 399.8h0M1307.9 400.3h0M1285.9 400.8h0M1302.9 401.3h0M1301.6 401.8h0M1299.4 402.3h0M1299.6 402.8h0M1297.9 403.3h0M1300.0 403.8h0M1299.4 404.3h0M1297.9 404.8h0M1295.0 405.3h0M1292.5 405.8h0M1289.6 406.3h0M1301.6 406.8h0M1290.7 407.3h0M1291.4 407.8h0M1292.3 408.3h0M1285.7 408.8h0M1289.7 409.3h0M1275.1 409.8h0M1288.3 410.3h0M1292.9 410.8h0M1287.4 411.3h0M1295.2 411.8h0M1297.0 412.3h0M1307.0 412.8h0M1295.9 413.3h0M1296.5 413.8h0M1293.0 414.3h0M1295.0 414.8h0M1281.2 415.3h0M1295.7 415.8h0M1306.1 416.3h0M1296.4 416.8h0M1294.9 417.3h0M1293.1 417.8h0M1298.4 418.3h0M1301.7 418.8h0M1298.3 419.3h0M1313.0 419.8h0M1324.2 420.3h0M1290.3 420.8h0M1292.2 421.3h0M1293.8 421.8h0M1289.1 422.3h0M1294.0 422.8h0M1287.7 423.3h0M1283.0 423.8h0M1277.5 424.3h0M1286.5 424.8h0M1288.2 425.3h0M1292.8 425.8h0M1292.4 426.3h0M1291.9 426.8h0M1299.9 427.3h0M1294.1 427.8h0M1282.5 428.3h0M1290.0 428.8h0M1282.8 429.3h0M1282.7 429.8h0M1284.6 430.3h0M1291.6 430.8h0M1286.9 431.3h0M1289.7 431.8h0M1295.7 432.3h0M1297.7 432.8h0M1288.7 433.3h0M1286.2 433.8h0M1283.8 434.3h0M1287.5 434.8h0M1292.7 435.3h0M1294.4 435.8h0M1293.2 436.3h0M1296.7 436.8h0M1289.4 437.3h0M1294.4 437.8h0M1296.2 438.3h0M1294.1 438.8h0M1295.3 439.3h0M1291.5 439.8h0M1286.2 440.3h0M1287.2 440.8h0M1281.7 441.3h0M1278.2 441.8h0M1286.2 442.3h0M1288.0 442.8h0M1287.8 443.3h0M1281.2 443.8h0M1288.5 444.3h0M1289.5 444.8h0M1287.3 445.3h0M1281.8 445.8h0M1290.2 446.3h0M1296.8 446.8h0M1295.1 447.3h0M1290.6 447.8h0M1292.7 448.3h0M1293.5 448.8h0M1279.1 449.3h0M1289.8 449.8h0M1293.7 450.3h0M1295.6 450.8h0M1298.9 451.3h0M1297.8 451.8h0M1294.2 452.3h0M1311.0 452.8h0M1295.4 453.3h0M1287.9 453.8h0M1299.3 454.3h0M1305.0 454.8h0M1304.7 455.3h0M1301.3 455.8h0M1297.0 456.3h0M1298.9 456.8h0M1302.4 457.3h0M1297.2 457.8h0M1301.2 458.3h0M1291.1 458.8h0M1292.3 459.3h0M1289.0 459.8h0M1294.3 460.3h0M1292.5 460.8h0M1261.7 461.3h0M1281.8 461.8h0M1288.5 462.3h0M1285.0 462.8h0M1281.0 463.3h0M1290.8 463.8h0M1292.9 464.3h0M1272.7 464.8h0M1287.9 465.3h0M1293.0 465.8h0M1288.8 466.3h0M1292.7 466.8h0M1285.6 467.3h0M1285.5 467.8h0M1292.3 468.3h0M1290.6 468.8h0M1295.3 469.3h0M1294.9 469.8h0M1289.1 470.3h0M1291.6 470.8h0M1290.0 471.3h0M1292.7 471.8h0M1287.7 472.3h0M1286.5 472.8h0M1294.0 473.3h0M1297.9 473.8h0M1296.0 474.3h0M1287.4 474.8h0M1288.8 475.3h0M1294.7 475.8h0M1286.9 476.3h0M1281.6 476.8h0M1285.7 477.3h0M1287.0 477.8h0M1283.9 478.3h0M1279.7 478.8h0M1282.1 479.3h0M1290.5 479.8h0M1301.2 480.3h0M1297.4 480.8h0M1302.8 481.3h0M1310.0 481.8h0M1287.8 482.3h0M1302.4 482.8h0M1292.6 483.3h0M1288.2 483.8h0M1288.2 484.3h0M1298.6 484.8h0M1294.0 485.3h0M1278.6 485.8h0M1294.9 486.3h0M1296.7 486.8h0M1301.5 487.3h0M1292.0 487.8h0M1292.3 488.3h0M1296.2 488.8h0M1307.0 489.3h0M1301.9 489.8h0M1293.8 490.3h0M1296.9 490.8h0M1302.2 491.3h0M1291.6 491.8h0M1287.9 492.3h0M1294.0 492.8h0M1293.6 493.3h0M1292.4 493.8h0M1288.2 494.3h0M1296.8 494.8h0M1297.0 495.3h0M1291.2 495.8h0M1290.1 496.3h0M1280.9 496.8h0M1291.5 497.3h0M1289.6 497.8h0M1294.1 498.3h0M1294.3 498.8h0M1291.3 499.3h0M1288.2 499.8h0M1295.9 500.3h0M1291.5 500.8h0M1294.4 501.3h0M1292.3 501.8h0M1297.5 502.3h0M1294.7 502.8h0M1309.5 503.3h0M1308.6 503.8h0M1304.6 504.3h0M1318.0 504.8h0M1302.1 505.3h0M1310.3 505.8h0M1303.8 506.3h0M1304.6 506.8h0M1292.0 507.3h0M1294.7 507.8h0M1286.6 508.3h0M1291.4 508.8h0M1286.3 509.3h0M1291.0 509.8h0M1287.5 510.3h0M1276.9 510.8h0M1289.0 511.3h0M1288.1 511.8h0M1286.0 512.3h0M1280.7 512.8h0M1289.8 513.3h0M1295.5 513.8h0M1295.1 514.3h0M1292.7 514.8h0M1287.5 515.3h0M1264.1 515.8h0M1286.0 516.3h0M1281.4 516.8h0M1280.2 517.3h0M1278.2 517.8h0M1281.2 518.3h0M1281.1 518.8h0M1279.0 519.3h0M1264.4 519.8h0M1282.2 520.3h0M1293.7 520.8h0M1276.7 521.3h0M1284.4 521.8h0M1286.8 522.3h0M1268.4 522.8h0M1277.7 523.3h0M1280.6 523.8h0M1286.6 524.3h0M1282.8 524.8h0M1282.0 525.3h0M1284.2 525.8h0M1275.1 526.3h0M1276.4 526.8h0M1274.4 527.3h0M1282.1 527.8h0M1269.1 528.3h0M1259.8 528.8h0M1274.3 529.3h0M1278.9 529.8h0M1282.3 530.3h0M1285.1 530.8h0M1273.8 531.3h0M1283.7 531.8h0M1279.3 532.3h0M1280.5 532.8h0M1284.1 533.3h0M1280.5 533.8h0M1276.3 534.3h0M1282.7 534.8h0M1278.9 535.3h0M1276.4 535.8h0M1287.9 536.3h0M1289.9 536.8h0M1296.0 537.3h0M1288.3 537.8h0M1280.5 538.3h0M1285.8 538.8h0M1284.8 539.3h0M1284.6 539.8h0M1290.5 540.3h0M1285.5 540.8h0M1282.3 541.3h0M1291.8 541.8h0M1289.5 542.3h0M1290.0 542.8h0M1304.7 543.3h0M1288.8 543.8h0M1287.1 544.3h0M1291.2 544.8h0M1268.4 545.3h0M1285.2 545.8h0M1282.2 546.3h0M1275.2 546.8h0M1280.5 547.3h0M1294.1 547.8h0M1281.3 548.3h0M1277.6 548.8h0M1287.3 549.3h0M1262.7 549.8h0M1274.4 550.3h0M1273.1 550.8h0M1278.4 551.3h0M1279.5 551.8h0M1279.9 552.3h0M1282.9 552.8h0M1282.9 553.3h0M1287.1 553.8h0M1283.0 554.3h0M1288.2 554.8h0M1294.1 555.3h0M1301.5 555.8h0M1287.2 556.3h0M1286.9 556.8h0M1286.6 557.3h0M1277.2 557.8h0M1285.1 558.3h0M1306.9 558.8h0M1289.5 559.3h0M1295.0 559.8h0M1285.1 560.3h0M1285.6 560.8h0M1279.8 561.3h0M1281.2 561.8h0M1286.8 562.3h0M1289.1 562.8h0M1286.3 563.3h0M1281.8 563.8h0M1286.8 564.3h0M1279.6 564.8h0M1289.8 565.3h0M1284.1 565.8h0M1283.5 566.3h0M1287.9 566.8h0M1284.3 567.3h0M1280.3 567.8h0M1281.3 568.3h0M1291.6 568.8h0M1299.3 569.3h0M1324.5 569.8h0M1300.9 570.3h0M1299.0 570.8h0M1291.8 571.3h0M1286.1 571.8h0M1297.5 572.3h0M1288.1 572.8h0M1281.5 573.3h0M1281.4 573.8h0M1284.4 574.3h0M1285.3 574.8h0M1278.8 575.3h0M1274.5 575.8h0M1281.3 576.3h0M1285.4 576.8h0M1288.7 577.3h0M1293.5 577.8h0M1289.5 578.3h0M1290.0 578.8h0M1284.6 579.3h0M1291.2 579.8h0M1297.9 580.3h0M1291.6 580.8h0M1286.7 581.3h0M1287.3 581.8h0M1292.0 582.3h0M1281.1 582.8h0M1282.7 583.3h0M1285.9 583.8h0M1286.1 584.3h0M1280.4 584.8h0M1281.6 585.3h0M1282.1 585.8h0M1284.9 586.3h0M1283.5 586.8h0M1280.5 587.3h0M1288.1 587.8h0M1293.6 588.3h0M1285.4 588.8h0M1296.5 589.3h0M1300.0 589.8h0M1296.6 590.3h0M1293.7 590.8h0M1289.8 591.3h0M1295.8 591.8h0M1300.0 592.3h0M1296.6 592.8h0M1289.2 593.3h0M1303.3 593.8h0M1288.3 594.3h0M1288.2 594.8h0M1293.8 595.3h0M1280.6 595.8h0M1288.8 596.3h0M1284.4 596.8h0M1290.3 597.3h0M1283.4 597.8h0M1264.3 598.3h0M1282.6 598.8h0M1283.4 599.3h0M1278.8 599.8h0M1281.4 600.3h0M1278.1 600.8h0M1272.0 601.3h0M1283.8 601.8h0M1284.3 602.3h0M1282.6 602.8h0M1282.4 603.3h0M1285.8 603.8h0M1279.5 604.3h0M1278.0 604.8h0M1279.6 605.3h0M1286.1 605.8h0M1278.1 606.3h0M1286.6 606.8h0M1278.0 607.3h0M1278.0 607.8h0M1287.5 608.3h0M1283.4 608.8h0M1278.2 609.3h0M1283.6 609.8h0M1290.8 610.3h0M1292.0 610.8h0M1293.9 611.3h0M1298.0 611.8h0M1296.4 612.3h0M1288.8 612.8h0M1289.5 613.3h0M1287.3 613.8h0M1278.1 614.3h0M1279.5 614.8h0M1281.5 615.3h0M1278.5 615.8h0M1275.5 616.3h0M1276.9 616.8h0M1284.2 617.3h0M1283.2 617.8h0M1276.9 618.3h0M1289.9 618.8h0M1279.5 619.3h0M1293.9 619.8h0M1285.9 620.3h0M1289.8 620.8h0M1287.2 621.3h0M1295.8 621.8h0M1294.3 622.3h0M1278.7 622.8h0M1283.9 623.3h0M1293.2 623.8h0M1280.0 624.3h0M1292.6 624.8h0M1287.5 625.3h0M1290.8 625.8h0M1291.7 626.3h0M1291.5 626.8h0M1293.2 627.3h0M1277.7 627.8h0M1269.5 628.3h0M1281.6 628.8h0M1287.2 629.3h0M1283.4 629.8h0M1280.0 630.3h0M1284.2 630.8h0M1265.8 631.3h0M1274.1 631.8h0M1275.2 632.3h0M1281.8 632.8h0M1284.8 633.3h0M1286.4 633.8h0M1282.6 634.3h0M1274.3 634.8h0M1272.4 635.3h0M1280.7 635.8h0M1285.4 636.3h0M1285.7 636.8h0M1280.8 637.3h0M1279.6 637.8h0M1282.9 638.3h0M1285.2 638.8h0M1282.0 639.3h0M1288.4 639.8h0M1283.1 640.3h0M1285.2 640.8h0M1283.1 641.3h0M1287.3 641.8h0M1290.1 642.3h0M1286.2 642.8h0M1293.7 643.3h0M1288.9 643.8h0M1295.4 644.3h0M1291.2 644.8h0M1283.7 645.3h0M1283.9 645.8h0M1285.8 646.3h0M1282.0 646.8h0M1282.4 647.3h0M1279.3 647.8h0M1271.1 648.3h0M1275.9 648.8h0M1271.6 649.3h0M1279.6 649.8h0M1275.2 650.3h0M1276.1 650.8h0" stroke="#4d698c" stroke-width="2.7" stroke-linecap="round" fill="none"/><path d="M1279.5 142.8h0M1286.0 143.3h0M1282.8 144.3h0M1280.5 145.3h0M1273.6 149.3h0M1272.4 150.8h0M1274.3 151.3h0M1272.8 153.3h0M1268.5 154.3h0M1268.7 155.8h0M1268.5 157.8h0M1270.2 159.3h0M1270.3 162.3h0M1270.3 162.8h0M1268.6 164.3h0M1272.6 165.3h0M1272.6 167.8h0M1265.9 169.8h0M1264.5 172.8h0M1265.2 175.3h0M1262.3 175.8h0M1262.1 176.3h0M1260.3 179.3h0M1261.4 180.3h0M1260.4 180.8h0M1258.1 181.3h0M1257.6 181.8h0M1263.3 184.3h0M1257.5 187.3h0M1259.0 187.8h0M1263.5 188.3h0M1259.4 190.3h0M1277.0 190.8h0M1255.8 192.8h0M1255.7 193.3h0M1255.5 194.8h0M1259.4 195.8h0M1255.9 196.3h0M1250.5 199.8h0M1255.3 201.3h0M1250.5 201.8h0M1257.9 207.3h0M1254.9 208.3h0M1270.3 214.8h0M1267.5 216.3h0M1269.1 220.3h0M1264.1 220.8h0M1269.8 222.3h0M1269.4 224.3h0M1272.7 226.3h0M1271.6 227.8h0M1271.8 229.8h0M1271.6 230.8h0M1277.4 231.3h0M1273.2 233.8h0M1276.1 234.8h0M1277.4 235.3h0M1278.6 238.3h0M1275.6 240.3h0M1277.4 241.8h0M1277.4 244.8h0M1276.1 248.3h0M1279.2 252.3h0M1287.2 254.8h0M1287.6 257.3h0M1289.9 258.3h0M1287.7 260.3h0M1286.8 261.8h0M1286.7 263.3h0M1288.2 265.3h0M1293.2 266.3h0M1298.6 267.3h0M1278.7 270.8h0M1297.7 271.3h0M1296.1 271.8h0M1302.4 272.3h0M1298.7 275.8h0M1297.1 277.3h0M1364.6 285.8h0M1373.8 287.8h0M1354.1 288.3h0M1363.5 289.3h0M1383.1 293.8h0M1388.7 294.8h0M1381.7 295.8h0M1399.1 296.8h0M1390.4 298.8h0M1396.4 300.3h0M1383.1 301.3h0M1398.7 302.8h0M1390.4 304.3h0M1363.6 305.8h0M1391.0 306.3h0M1396.9 309.8h0M1367.8 315.3h0M1346.1 320.3h0M1346.2 321.8h0M1339.0 323.3h0M1332.1 325.3h0M1331.3 329.8h0M1334.6 332.3h0M1331.2 333.8h0M1326.3 336.8h0M1329.7 337.3h0M1332.6 338.8h0M1336.6 339.3h0M1329.8 340.3h0M1329.8 341.3h0M1329.7 344.3h0M1333.4 345.3h0M1325.5 345.8h0M1330.9 347.8h0M1334.3 350.8h0M1332.6 351.8h0M1324.7 356.3h0M1321.5 357.3h0M1328.0 358.8h0M1323.0 359.3h0M1310.8 365.8h0M1309.4 366.3h0M1320.3 367.3h0M1313.7 368.8h0M1305.7 369.8h0M1306.5 373.3h0M1305.7 373.8h0M1305.0 374.8h0M1305.6 375.8h0M1298.2 378.3h0M1309.9 382.3h0M1296.1 389.8h0M1293.1 391.8h0M1292.9 393.3h0M1294.0 393.8h0M1295.7 398.3h0M1293.0 398.8h0M1301.7 401.8h0M1296.5 402.3h0M1295.8 402.8h0M1303.4 404.3h0M1300.2 404.8h0M1295.9 405.8h0M1300.0 406.3h0M1301.0 407.3h0M1294.3 410.3h0M1289.0 410.8h0M1285.7 412.3h0M1290.3 412.8h0M1300.4 413.8h0M1293.8 417.3h0M1306.7 419.3h0M1289.6 421.3h0M1301.0 421.8h0M1303.8 422.3h0M1310.8 422.8h0M1308.1 423.3h0M1294.4 424.8h0M1293.9 425.3h0M1288.4 425.8h0M1291.1 426.3h0M1275.2 426.8h0M1285.8 427.8h0M1287.9 429.8h0M1277.3 430.3h0M1288.2 433.3h0M1290.6 434.8h0M1288.7 436.8h0M1281.5 437.3h0M1282.4 437.8h0M1292.9 438.3h0M1279.3 438.8h0M1289.1 440.3h0M1285.1 441.3h0M1285.0 441.8h0M1276.2 442.3h0M1288.0 443.3h0M1291.4 443.8h0M1297.2 444.8h0M1286.4 445.8h0M1287.9 447.3h0M1283.8 447.8h0M1279.7 449.8h0M1275.2 454.8h0M1294.8 455.8h0M1307.1 459.3h0M1284.1 462.8h0M1293.4 466.8h0M1293.6 467.3h0M1299.9 468.8h0M1299.1 469.3h0M1292.3 470.3h0M1284.6 471.8h0M1293.0 472.3h0M1294.3 473.3h0M1286.8 473.8h0M1290.5 476.3h0M1297.7 476.8h0M1289.3 479.3h0M1284.0 479.8h0M1282.5 481.3h0M1274.9 481.8h0M1287.0 482.3h0M1283.6 482.8h0M1279.8 488.3h0M1291.7 489.3h0M1283.6 489.8h0M1283.6 491.8h0M1291.1 492.8h0M1266.9 495.8h0M1287.7 499.8h0M1288.9 502.8h0M1299.0 503.3h0M1287.0 503.8h0M1288.8 504.3h0M1281.6 505.3h0M1272.5 505.8h0M1288.3 506.8h0M1287.7 507.8h0M1285.4 508.3h0M1284.2 509.8h0M1289.8 510.3h0M1275.7 512.3h0M1280.0 512.8h0M1277.2 513.3h0M1276.3 513.8h0M1293.2 517.3h0M1289.1 517.8h0M1285.6 518.3h0M1285.3 521.8h0M1289.3 522.3h0M1284.5 523.3h0M1275.1 524.8h0M1277.5 527.3h0M1282.0 529.3h0M1278.9 530.3h0M1291.4 532.3h0M1282.9 535.3h0M1273.2 537.3h0M1276.8 538.3h0M1278.3 538.8h0M1270.8 539.3h0M1268.3 540.3h0M1281.3 540.8h0M1272.3 542.8h0M1269.6 543.8h0M1280.1 548.3h0M1269.6 549.8h0M1276.0 550.8h0M1279.7 551.3h0M1262.6 551.8h0M1266.3 553.3h0M1268.9 555.8h0M1278.3 563.3h0M1289.0 563.8h0M1280.0 564.8h0M1267.3 565.3h0M1273.5 567.8h0M1284.1 570.3h0M1274.9 571.3h0M1274.4 571.8h0M1281.5 572.8h0M1274.4 573.3h0M1269.1 573.8h0M1256.4 575.3h0M1280.6 576.8h0M1283.2 577.3h0M1273.1 578.3h0M1293.0 579.3h0M1272.6 579.8h0M1274.4 581.3h0M1269.1 581.8h0M1276.2 582.8h0M1279.2 583.3h0M1273.7 584.3h0M1279.2 584.8h0M1272.3 585.8h0M1277.1 587.3h0M1279.3 587.8h0M1271.8 589.3h0M1270.6 589.8h0M1280.3 592.3h0M1286.5 592.8h0M1274.8 597.8h0M1284.3 598.3h0M1287.5 598.8h0M1287.1 600.8h0M1283.6 603.3h0M1282.9 603.8h0M1281.9 604.3h0M1278.9 608.8h0M1274.4 609.8h0M1290.2 610.3h0M1277.7 611.3h0M1286.6 613.8h0M1285.8 614.3h0M1291.3 615.8h0M1284.3 617.3h0M1269.7 621.8h0M1268.4 622.8h0M1278.9 625.8h0M1276.2 627.3h0M1290.9 628.3h0M1291.4 629.3h0M1296.6 629.8h0M1285.1 631.3h0M1298.8 633.8h0M1274.3 636.3h0M1280.2 637.8h0M1275.1 638.3h0M1285.3 638.8h0M1280.2 639.8h0M1275.7 640.3h0M1285.3 641.3h0M1275.9 641.8h0M1283.1 642.3h0M1285.2 642.8h0M1294.7 643.8h0M1278.6 644.8h0M1283.6 645.3h0M1276.2 645.8h0M1280.6 647.3h0M1275.6 647.8h0M1279.8 648.3h0" stroke="#dd8f6d" stroke-width="2.7" stroke-linecap="round" fill="none"/></g><g clip-path="url(#cB)"><path d="M1537.9 141.8h0M1542.0 142.3h0M1537.5 142.8h0M1544.7 143.3h0M1547.4 143.8h0M1544.3 144.3h0M1545.5 144.8h0M1541.1 145.3h0M1534.5 145.8h0M1534.7 146.3h0M1542.4 146.8h0M1547.1 147.3h0M1548.6 147.8h0M1541.4 148.3h0M1545.7 148.8h0M1547.8 149.3h0M1550.4 149.8h0M1546.3 150.3h0M1541.6 150.8h0M1551.3 151.3h0M1548.9 151.8h0M1548.0 152.3h0M1541.1 152.8h0M1547.7 153.3h0M1539.7 153.8h0M1540.7 154.3h0M1549.2 154.8h0M1547.2 155.3h0M1549.4 155.8h0M1553.4 156.3h0M1548.5 156.8h0M1557.3 157.3h0M1547.6 157.8h0M1553.1 158.3h0M1546.1 158.8h0M1552.3 159.3h0M1542.5 159.8h0M1548.3 160.3h0M1551.2 160.8h0M1540.8 161.3h0M1548.2 161.8h0M1544.6 162.3h0M1547.8 162.8h0M1546.7 163.3h0M1542.8 163.8h0M1541.0 164.3h0M1537.8 164.8h0M1544.0 165.3h0M1539.2 165.8h0M1543.7 166.3h0M1537.6 166.8h0M1547.3 167.3h0M1537.1 167.8h0M1545.2 168.3h0M1539.4 168.8h0M1543.8 169.3h0M1540.7 169.8h0M1545.6 170.3h0M1543.7 170.8h0M1548.1 171.3h0M1546.1 171.8h0M1546.3 172.3h0M1550.2 172.8h0M1539.5 173.3h0M1547.3 173.8h0M1544.1 174.3h0M1538.5 174.8h0M1546.4 175.3h0M1543.5 175.8h0M1552.0 176.3h0M1543.3 176.8h0M1544.6 177.3h0M1545.6 177.8h0M1538.7 178.3h0M1547.3 178.8h0M1542.0 179.3h0M1552.4 179.8h0M1553.8 180.3h0M1546.2 180.8h0M1541.0 181.3h0M1548.8 181.8h0M1549.0 182.3h0M1550.6 182.8h0M1546.2 183.3h0M1543.0 183.8h0M1546.3 184.3h0M1526.8 184.8h0M1552.0 185.3h0M1543.6 185.8h0M1545.3 186.3h0M1548.2 186.8h0M1543.2 187.3h0M1546.2 187.8h0M1546.9 188.3h0M1547.0 188.8h0M1548.2 189.3h0M1554.9 189.8h0M1553.3 190.3h0M1548.1 190.8h0M1551.3 191.3h0M1556.7 191.8h0M1549.7 192.3h0M1552.1 192.8h0M1552.4 193.3h0M1556.8 193.8h0M1556.4 194.3h0M1558.4 194.8h0M1555.8 195.3h0M1563.1 195.8h0M1558.9 196.3h0M1569.5 196.8h0M1565.3 197.3h0M1564.9 197.8h0M1570.4 198.3h0M1568.7 198.8h0M1550.4 199.3h0M1571.4 199.8h0M1568.6 200.3h0M1565.4 200.8h0M1563.6 201.3h0M1570.1 201.8h0M1561.6 202.3h0M1561.2 202.8h0M1560.3 203.3h0M1561.9 203.8h0M1567.8 204.3h0M1556.8 204.8h0M1562.3 205.3h0M1559.5 205.8h0M1557.5 206.3h0M1559.8 206.8h0M1552.4 207.3h0M1547.9 207.8h0M1556.3 208.3h0M1551.2 208.8h0M1561.5 209.3h0M1559.5 209.8h0M1559.3 210.3h0M1547.5 210.8h0M1550.9 211.3h0M1548.1 211.8h0M1551.3 212.3h0M1553.1 212.8h0M1538.7 213.3h0M1546.2 213.8h0M1544.6 214.3h0M1549.0 214.8h0M1543.7 215.3h0M1537.3 215.8h0M1539.0 216.3h0M1535.5 216.8h0M1535.0 217.3h0M1537.0 217.8h0M1534.4 218.3h0M1538.6 218.8h0M1533.4 219.3h0M1550.2 219.8h0M1545.4 220.3h0M1543.4 220.8h0M1535.4 221.3h0M1533.0 221.8h0M1539.3 222.3h0M1542.6 222.8h0M1552.9 223.3h0M1550.8 223.8h0M1543.4 224.3h0M1553.0 224.8h0M1552.1 225.3h0M1547.9 225.8h0M1552.8 226.3h0M1550.3 226.8h0M1548.9 227.3h0M1549.2 227.8h0M1551.4 228.3h0M1553.0 228.8h0M1541.8 229.3h0M1538.0 229.8h0M1543.3 230.3h0M1529.1 230.8h0M1541.4 231.3h0M1531.4 231.8h0M1522.3 232.3h0M1533.3 232.8h0M1517.8 233.3h0M1516.2 233.8h0M1525.0 234.3h0M1513.4 234.8h0M1512.1 235.3h0M1512.6 235.8h0M1514.7 236.3h0M1515.2 236.8h0M1511.7 237.3h0M1510.1 237.8h0M1511.1 238.3h0M1511.6 238.8h0M1515.2 239.3h0M1511.1 239.8h0M1516.5 240.3h0M1506.0 240.8h0M1510.2 241.3h0M1514.0 241.8h0M1511.9 242.3h0M1508.6 242.8h0M1504.0 243.3h0M1502.7 243.8h0M1503.6 244.3h0M1503.6 244.8h0M1502.3 245.3h0M1498.7 245.8h0M1500.9 246.3h0M1504.0 246.8h0M1505.4 247.3h0M1498.3 247.8h0M1500.5 248.3h0M1497.7 248.8h0M1501.0 249.3h0M1522.8 249.8h0M1503.0 250.3h0M1503.1 250.8h0M1502.6 251.3h0M1500.6 251.8h0M1497.8 252.3h0M1502.4 252.8h0M1502.0 253.3h0M1506.3 253.8h0M1498.7 254.3h0M1504.3 254.8h0M1505.6 255.3h0M1495.6 255.8h0M1503.0 256.3h0M1497.1 256.8h0M1502.7 257.3h0M1505.5 257.8h0M1501.2 258.3h0M1502.7 258.8h0M1500.3 259.3h0M1502.8 259.8h0M1504.8 260.3h0M1501.4 260.8h0M1502.0 261.3h0M1503.8 261.8h0M1507.0 262.3h0M1499.7 262.8h0M1504.6 263.3h0M1501.1 263.8h0M1503.3 264.3h0M1506.1 264.8h0M1504.6 265.3h0M1507.9 265.8h0M1501.0 266.3h0M1503.2 266.8h0M1501.5 267.3h0M1503.8 267.8h0M1504.3 268.3h0M1502.2 268.8h0M1499.7 269.3h0M1502.0 269.8h0M1501.7 270.3h0M1505.6 270.8h0M1501.8 271.3h0M1504.8 271.8h0M1501.5 272.3h0M1502.8 272.8h0M1501.7 273.3h0M1498.2 273.8h0M1504.8 274.3h0M1505.1 274.8h0M1501.5 275.3h0M1503.3 275.8h0M1498.4 276.3h0M1496.2 276.8h0M1500.0 277.3h0M1501.9 277.8h0M1498.4 278.3h0M1502.6 278.8h0M1503.4 279.3h0M1504.4 279.8h0M1507.0 280.3h0M1505.3 280.8h0M1503.0 281.3h0M1504.3 281.8h0M1505.0 282.3h0M1501.3 282.8h0M1507.1 283.3h0M1506.6 283.8h0M1502.9 284.3h0M1502.0 284.8h0M1498.8 285.3h0M1506.3 285.8h0M1505.4 286.3h0M1507.0 286.8h0M1503.8 287.3h0M1500.6 287.8h0M1502.1 288.3h0M1497.3 288.8h0M1501.3 289.3h0M1495.0 289.8h0M1500.6 290.3h0M1500.9 290.8h0M1495.7 291.3h0M1504.8 291.8h0M1496.4 292.3h0M1503.3 292.8h0M1499.8 293.3h0M1502.7 293.8h0M1500.6 294.3h0M1508.9 294.8h0M1505.0 295.3h0M1507.7 295.8h0M1505.5 296.3h0M1505.7 296.8h0M1505.1 297.3h0M1504.0 297.8h0M1506.8 298.3h0M1506.0 298.8h0M1506.3 299.3h0M1503.6 299.8h0M1507.8 300.3h0M1511.0 300.8h0M1508.6 301.3h0M1512.0 301.8h0M1511.0 302.3h0M1508.7 302.8h0M1507.8 303.3h0M1508.1 303.8h0M1509.1 304.3h0M1509.2 304.8h0M1512.7 305.3h0M1504.5 305.8h0M1501.4 306.3h0M1508.1 306.8h0M1504.2 307.3h0M1504.5 307.8h0M1511.1 308.3h0M1508.0 308.8h0M1504.6 309.3h0M1507.0 309.8h0M1504.9 310.3h0M1506.8 310.8h0M1501.3 311.3h0M1501.3 311.8h0M1504.0 312.3h0M1509.8 312.8h0M1509.7 313.3h0M1504.1 313.8h0M1509.6 314.3h0M1505.4 314.8h0M1510.0 315.3h0M1507.4 315.8h0M1508.9 316.3h0M1504.6 316.8h0M1504.7 317.3h0M1506.5 317.8h0M1506.7 318.3h0M1504.0 318.8h0M1502.5 319.3h0M1510.5 319.8h0M1504.6 320.3h0M1500.8 320.8h0M1500.0 321.3h0M1497.5 321.8h0M1503.7 322.3h0M1510.4 322.8h0M1502.9 323.3h0M1506.6 323.8h0M1502.3 324.3h0M1511.1 324.8h0M1509.0 325.3h0M1508.4 325.8h0M1511.2 326.3h0M1513.7 326.8h0M1512.3 327.3h0M1508.9 327.8h0M1507.3 328.3h0M1508.3 328.8h0M1505.8 329.3h0M1517.9 329.8h0M1512.4 330.3h0M1514.1 330.8h0M1514.1 331.3h0M1519.3 331.8h0M1512.5 332.3h0M1517.6 332.8h0M1514.8 333.3h0M1513.3 333.8h0M1508.2 334.3h0M1516.1 334.8h0M1512.5 335.3h0M1513.5 335.8h0M1513.5 336.3h0M1513.6 336.8h0M1517.1 337.3h0M1511.5 337.8h0M1513.2 338.3h0M1513.4 338.8h0M1513.2 339.3h0M1514.5 339.8h0M1511.6 340.3h0M1515.7 340.8h0M1511.3 341.3h0M1508.3 341.8h0M1513.3 342.3h0M1517.2 342.8h0M1512.4 343.3h0M1511.6 343.8h0M1513.2 344.3h0M1515.6 344.8h0M1514.1 345.3h0M1515.0 345.8h0M1510.3 346.3h0M1520.1 346.8h0M1517.6 347.3h0M1513.5 347.8h0M1520.1 348.3h0M1517.1 348.8h0M1519.6 349.3h0M1512.7 349.8h0M1521.6 350.3h0M1516.8 350.8h0M1509.9 351.3h0M1517.9 351.8h0M1514.7 352.3h0M1511.8 352.8h0M1513.6 353.3h0M1509.6 353.8h0M1516.8 354.3h0M1515.0 354.8h0M1515.2 355.3h0M1520.1 355.8h0M1516.3 356.3h0M1512.7 356.8h0M1512.2 357.3h0M1514.9 357.8h0M1519.1 358.3h0M1515.5 358.8h0M1514.6 359.3h0M1520.6 359.8h0M1517.7 360.3h0M1517.1 360.8h0M1522.8 361.3h0M1513.1 361.8h0M1517.5 362.3h0M1510.6 362.8h0M1514.9 363.3h0M1516.7 363.8h0M1519.8 364.3h0M1513.1 364.8h0M1518.9 365.3h0M1519.5 365.8h0M1518.2 366.3h0M1526.0 366.8h0M1518.1 367.3h0M1515.0 367.8h0M1517.5 368.3h0M1510.3 368.8h0M1520.2 369.3h0M1518.7 369.8h0M1515.9 370.3h0M1517.3 370.8h0M1516.2 371.3h0M1520.0 371.8h0M1512.1 372.3h0M1509.0 372.8h0M1505.1 373.3h0M1510.6 373.8h0M1507.5 374.3h0M1512.9 374.8h0M1514.2 375.3h0M1512.3 375.8h0M1511.0 376.3h0M1516.3 376.8h0M1513.2 377.3h0M1514.2 377.8h0M1515.9 378.3h0M1509.5 378.8h0M1511.9 379.3h0M1522.7 379.8h0M1515.1 380.3h0M1512.6 380.8h0M1514.5 381.3h0M1514.6 381.8h0M1511.7 382.3h0M1514.2 382.8h0M1515.8 383.3h0M1514.9 383.8h0M1517.7 384.3h0M1511.3 384.8h0M1512.0 385.3h0M1516.7 385.8h0M1512.5 386.3h0M1517.4 386.8h0M1513.6 387.3h0M1509.3 387.8h0M1515.3 388.3h0M1511.8 388.8h0M1514.5 389.3h0M1517.1 389.8h0M1519.8 390.3h0M1513.0 390.8h0M1515.5 391.3h0M1514.3 391.8h0M1516.5 392.3h0M1508.4 392.8h0M1515.9 393.3h0M1518.5 393.8h0M1519.2 394.3h0M1515.1 394.8h0M1519.5 395.3h0M1521.9 395.8h0M1519.4 396.3h0M1519.3 396.8h0M1519.1 397.3h0M1520.4 397.8h0M1523.1 398.3h0M1525.0 398.8h0M1519.3 399.3h0M1517.3 399.8h0M1518.6 400.3h0M1524.1 400.8h0M1516.2 401.3h0M1523.2 401.8h0M1522.9 402.3h0M1522.9 402.8h0M1521.2 403.3h0M1519.7 403.8h0M1521.0 404.3h0M1524.2 404.8h0M1524.4 405.3h0M1521.4 405.8h0M1521.7 406.3h0M1526.7 406.8h0M1520.1 407.3h0M1522.5 407.8h0M1520.0 408.3h0M1519.3 408.8h0M1517.2 409.3h0M1521.2 409.8h0M1518.3 410.3h0M1524.6 410.8h0M1517.8 411.3h0M1520.5 411.8h0M1525.5 412.3h0M1523.1 412.8h0M1525.5 413.3h0M1538.3 413.8h0M1520.9 414.3h0M1527.3 414.8h0M1523.9 415.3h0M1532.1 415.8h0M1526.7 416.3h0M1529.7 416.8h0M1534.2 417.3h0M1527.4 417.8h0M1527.8 418.3h0M1528.1 418.8h0M1525.8 419.3h0M1533.1 419.8h0M1530.8 420.3h0M1530.5 420.8h0M1525.0 421.3h0M1525.1 421.8h0M1525.1 422.3h0M1525.9 422.8h0M1521.3 423.3h0M1528.5 423.8h0M1529.9 424.3h0M1529.0 424.8h0M1527.2 425.3h0M1527.9 425.8h0M1528.6 426.3h0M1530.3 426.8h0M1537.4 427.3h0M1529.5 427.8h0M1534.1 428.3h0M1536.8 428.8h0M1534.1 429.3h0M1535.8 429.8h0M1535.3 430.3h0M1540.0 430.8h0M1548.4 431.3h0M1556.8 431.8h0M1553.1 432.3h0M1560.3 432.8h0M1562.8 433.3h0M1566.8 433.8h0M1564.3 434.3h0M1569.7 434.8h0M1573.1 435.3h0M1568.6 435.8h0M1574.0 436.3h0M1568.4 436.8h0M1570.6 437.3h0M1573.7 437.8h0M1568.3 438.3h0M1575.4 438.8h0M1576.1 439.3h0M1586.9 439.8h0M1571.0 440.3h0M1551.8 440.8h0M1569.2 441.3h0M1571.8 441.8h0M1571.2 442.3h0M1568.0 442.8h0M1568.1 443.3h0M1567.5 443.8h0M1571.5 444.3h0M1565.4 444.8h0M1573.3 445.3h0M1566.9 445.8h0M1572.6 446.3h0M1561.4 446.8h0M1563.7 447.3h0M1570.0 447.8h0M1567.7 448.3h0M1566.0 448.8h0M1575.4 449.3h0M1565.6 449.8h0M1564.2 450.3h0M1561.6 450.8h0M1572.2 451.3h0M1568.5 451.8h0M1566.5 452.3h0M1557.3 452.8h0M1564.6 453.3h0M1560.4 453.8h0M1562.7 454.3h0M1565.7 454.8h0M1556.9 455.3h0M1560.8 455.8h0M1562.2 456.3h0M1560.8 456.8h0M1557.1 457.3h0M1551.8 457.8h0M1553.3 458.3h0M1547.9 458.8h0M1556.4 459.3h0M1552.9 459.8h0M1546.9 460.3h0M1552.3 460.8h0M1546.9 461.3h0M1539.6 461.8h0M1557.4 462.3h0M1557.3 462.8h0M1544.9 463.3h0M1548.8 463.8h0M1552.6 464.3h0M1548.6 464.8h0M1548.4 465.3h0M1548.8 465.8h0M1550.3 466.3h0M1549.3 466.8h0M1551.7 467.3h0M1551.3 467.8h0M1548.3 468.3h0M1550.8 468.8h0M1545.6 469.3h0M1559.1 469.8h0M1545.1 470.3h0M1551.8 470.8h0M1554.5 471.3h0M1553.5 471.8h0M1554.6 472.3h0M1557.2 472.8h0M1547.2 473.3h0M1553.5 473.8h0M1551.8 474.3h0M1549.0 474.8h0M1549.8 475.3h0M1557.1 475.8h0M1548.9 476.3h0M1550.3 476.8h0M1551.1 477.3h0M1552.8 477.8h0M1555.0 478.3h0M1551.5 478.8h0M1553.4 479.3h0M1551.1 479.8h0M1549.4 480.3h0M1553.7 480.8h0M1544.6 481.3h0M1555.7 481.8h0M1546.4 482.3h0M1551.4 482.8h0M1550.8 483.3h0M1548.7 483.8h0M1539.6 484.3h0M1553.4 484.8h0M1545.9 485.3h0M1545.9 485.8h0M1555.0 486.3h0M1546.4 486.8h0M1559.1 487.3h0M1557.9 487.8h0M1551.9 488.3h0M1549.2 488.8h0M1551.6 489.3h0M1541.2 489.8h0M1548.6 490.3h0M1550.1 490.8h0M1548.0 491.3h0M1548.4 491.8h0M1540.9 492.3h0M1550.2 492.8h0M1550.4 493.3h0M1539.3 493.8h0M1544.3 494.3h0M1548.9 494.8h0M1543.7 495.3h0M1536.3 495.8h0M1536.3 496.3h0M1543.2 496.8h0M1545.3 497.3h0M1533.3 497.8h0M1537.4 498.3h0M1537.3 498.8h0M1537.5 499.3h0M1540.6 499.8h0M1540.2 500.3h0M1538.0 500.8h0M1550.9 501.3h0M1541.7 501.8h0M1540.5 502.3h0M1546.5 502.8h0M1542.3 503.3h0M1541.8 503.8h0M1544.0 504.3h0M1538.0 504.8h0M1542.4 505.3h0M1544.7 505.8h0M1543.5 506.3h0M1539.6 506.8h0M1540.5 507.3h0M1531.2 507.8h0M1539.3 508.3h0M1542.3 508.8h0M1544.9 509.3h0M1540.6 509.8h0M1538.6 510.3h0M1538.0 510.8h0M1542.8 511.3h0M1544.3 511.8h0M1548.8 512.3h0M1544.4 512.8h0M1541.4 513.3h0M1542.8 513.8h0M1542.4 514.3h0M1542.5 514.8h0M1534.3 515.3h0M1536.7 515.8h0M1539.8 516.3h0M1544.8 516.8h0M1544.1 517.3h0M1543.9 517.8h0M1546.3 518.3h0M1535.2 518.8h0M1542.0 519.3h0M1537.3 519.8h0M1532.3 520.3h0M1541.3 520.8h0M1529.7 521.3h0M1530.5 521.8h0M1534.1 522.3h0M1536.0 522.8h0M1536.7 523.3h0M1526.7 523.8h0M1534.3 524.3h0M1534.1 524.8h0M1545.2 525.3h0M1540.3 525.8h0M1536.9 526.3h0M1530.7 526.8h0M1536.2 527.3h0M1529.0 527.8h0M1534.3 528.3h0M1533.8 528.8h0M1528.8 529.3h0M1530.7 529.8h0M1529.9 530.3h0M1528.3 530.8h0M1537.7 531.3h0M1536.0 531.8h0M1532.8 532.3h0M1530.2 532.8h0M1533.8 533.3h0M1535.0 533.8h0M1537.2 534.3h0M1539.4 534.8h0M1537.6 535.3h0M1531.8 535.8h0M1543.0 536.3h0M1539.0 536.8h0M1537.1 537.3h0M1539.4 537.8h0M1525.6 538.3h0M1528.6 538.8h0M1527.8 539.3h0M1535.7 539.8h0M1526.1 540.3h0M1526.2 540.8h0M1534.5 541.3h0M1528.5 541.8h0M1524.1 542.3h0M1537.1 542.8h0M1517.1 543.3h0M1525.8 543.8h0M1522.3 544.3h0M1526.6 544.8h0M1525.5 545.3h0M1524.8 545.8h0M1529.0 546.3h0M1523.4 546.8h0M1532.6 547.3h0M1529.6 547.8h0M1535.2 548.3h0M1529.5 548.8h0M1529.5 549.3h0M1535.9 549.8h0M1538.5 550.3h0M1525.4 550.8h0M1535.3 551.3h0M1536.4 551.8h0M1527.9 552.3h0M1530.0 552.8h0M1535.6 553.3h0M1528.7 553.8h0M1528.6 554.3h0M1538.0 554.8h0M1528.7 555.3h0M1528.6 555.8h0M1522.1 556.3h0M1526.0 556.8h0M1526.3 557.3h0M1537.1 557.8h0M1534.6 558.3h0M1524.5 558.8h0M1536.4 559.3h0M1532.1 559.8h0M1529.0 560.3h0M1533.0 560.8h0M1530.0 561.3h0M1525.1 561.8h0M1522.6 562.3h0M1525.3 562.8h0M1529.5 563.3h0M1527.5 563.8h0M1527.7 564.3h0M1534.7 564.8h0M1525.1 565.3h0M1534.0 565.8h0M1530.0 566.3h0M1532.5 566.8h0M1527.9 567.3h0M1534.7 567.8h0M1529.1 568.3h0M1522.2 568.8h0M1530.9 569.3h0M1531.3 569.8h0M1533.2 570.3h0M1529.6 570.8h0M1524.7 571.3h0M1527.3 571.8h0M1519.2 572.3h0M1522.6 572.8h0M1531.6 573.3h0M1532.3 573.8h0M1527.6 574.3h0M1528.9 574.8h0M1532.2 575.3h0M1529.8 575.8h0M1520.7 576.3h0M1526.4 576.8h0M1534.4 577.3h0M1535.2 577.8h0M1531.3 578.3h0M1530.3 578.8h0M1529.6 579.3h0M1530.3 579.8h0M1527.6 580.3h0M1524.8 580.8h0M1530.6 581.3h0M1526.0 581.8h0M1528.6 582.3h0M1535.8 582.8h0M1530.3 583.3h0M1533.6 583.8h0M1529.5 584.3h0M1520.5 584.8h0M1530.3 585.3h0M1528.2 585.8h0M1526.1 586.3h0M1531.9 586.8h0M1533.8 587.3h0M1527.4 587.8h0M1527.4 588.3h0M1539.0 588.8h0M1529.8 589.3h0M1535.2 589.8h0M1527.0 590.3h0M1531.0 590.8h0M1528.1 591.3h0M1532.5 591.8h0M1528.9 592.3h0M1526.4 592.8h0M1533.1 593.3h0M1509.1 593.8h0M1519.4 594.3h0M1527.3 594.8h0M1523.6 595.3h0M1523.8 595.8h0M1528.1 596.3h0M1528.7 596.8h0M1530.7 597.3h0M1526.3 597.8h0M1522.3 598.3h0M1527.4 598.8h0M1533.8 599.3h0M1525.8 599.8h0M1534.1 600.3h0M1532.6 600.8h0M1547.1 601.3h0M1530.2 601.8h0M1524.5 602.3h0M1524.5 602.8h0M1521.2 603.3h0M1529.5 603.8h0M1534.1 604.3h0M1526.3 604.8h0M1534.7 605.3h0M1520.6 605.8h0M1525.6 606.3h0M1525.4 606.8h0M1537.8 607.3h0M1529.8 607.8h0M1535.9 608.3h0M1524.7 608.8h0M1533.3 609.3h0M1518.7 609.8h0M1530.7 610.3h0M1519.6 610.8h0M1531.9 611.3h0M1532.3 611.8h0M1536.3 612.3h0M1531.6 612.8h0M1521.4 613.3h0M1525.9 613.8h0M1529.8 614.3h0M1524.3 614.8h0M1531.7 615.3h0M1526.9 615.8h0M1530.0 616.3h0M1532.3 616.8h0M1525.5 617.3h0M1538.9 617.8h0M1527.9 618.3h0M1527.4 618.8h0M1521.9 619.3h0M1526.0 619.8h0M1525.1 620.3h0M1520.3 620.8h0M1518.5 621.3h0M1526.1 621.8h0M1525.3 622.3h0M1515.3 622.8h0M1517.9 623.3h0M1527.3 623.8h0M1529.6 624.3h0M1533.5 624.8h0M1526.0 625.3h0M1534.9 625.8h0M1531.5 626.3h0M1531.5 626.8h0M1533.6 627.3h0M1539.6 627.8h0M1537.0 628.3h0M1540.0 628.8h0M1534.3 629.3h0M1535.0 629.8h0M1538.0 630.3h0M1531.2 630.8h0M1533.3 631.3h0M1534.3 631.8h0M1540.0 632.3h0M1537.9 632.8h0M1541.3 633.3h0M1538.6 633.8h0M1541.5 634.3h0M1538.6 634.8h0M1540.5 635.3h0M1537.2 635.8h0M1554.1 636.3h0M1534.4 636.8h0M1532.6 637.3h0M1530.8 637.8h0M1545.1 638.3h0M1537.5 638.8h0M1540.1 639.3h0M1535.9 639.8h0M1536.5 640.3h0M1549.5 640.8h0M1534.1 641.3h0M1539.1 641.8h0M1540.5 642.3h0M1535.1 642.8h0M1535.8 643.3h0M1538.0 643.8h0M1538.8 644.3h0M1536.4 644.8h0M1542.0 645.3h0M1534.2 645.8h0M1540.5 646.3h0M1544.0 646.8h0M1542.4 647.3h0M1533.0 647.8h0M1525.2 648.3h0M1539.8 648.8h0M1539.0 649.3h0M1534.3 649.8h0M1541.2 650.3h0M1535.2 650.8h0" stroke="#dd8f6d" stroke-width="2.8" stroke-linecap="round" fill="none"/><polyline points="1596.3,141.8 1587.3,142.3 1584.5,142.8 1592.6,143.3 1594.9,143.8 1602.4,144.3 1610.0,144.8 1597.1,145.3 1601.0,145.8 1590.2,146.3 1592.9,146.8 1603.4,147.3 1622.0,147.8 1588.5,148.3 1609.9,148.8 1589.6,149.3 1590.8,149.8 1597.6,150.3 1612.2,150.8 1621.0,151.3 1632.0,151.8 1626.3,152.3 1609.4,152.8 1591.9,153.3 1576.7,153.8 1574.9,154.3 1568.7,154.8 1568.5,155.3 1569.1,155.8 1571.1,156.3 1552.9,156.8 1550.9,157.3 1547.3,157.8 1541.9,158.3 1548.3,158.8 1540.6,159.3 1539.4,159.8 1536.5,160.3 1533.8,160.8 1532.4,161.3 1554.4,161.8 1539.0,162.3 1537.7,162.8 1543.5,163.3 1536.5,163.8 1540.4,164.3 1539.1,164.8 1537.0,165.3 1540.6,165.8 1534.4,166.3 1541.5,166.8 1539.0,167.3 1547.3,167.8 1556.2,168.3 1555.9,168.8 1553.0,169.3 1555.1,169.8 1558.9,170.3 1558.7,170.8 1563.9,171.3 1571.6,171.8 1573.4,172.3 1567.0,172.8 1573.6,173.3 1577.6,173.8 1583.8,174.3 1585.0,174.8 1583.1,175.3 1615.0,175.8 1611.2,176.3 1593.8,176.8 1593.5,177.3 1596.8,177.8 1593.6,178.3 1593.1,178.8 1590.7,179.3 1596.5,179.8 1598.1,180.3 1618.0,180.8 1601.7,181.3 1590.1,181.8 1581.3,182.3 1572.3,182.8 1569.4,183.3 1566.1,183.8 1565.6,184.3 1565.9,184.8 1558.1,185.3 1552.4,185.8 1565.5,186.3 1566.7,186.8 1553.4,187.3 1555.6,187.8 1561.9,188.3 1567.0,188.8 1554.0,189.3 1517.0,189.8 1566.0,190.3 1547.5,190.8 1572.3,191.3 1586.6,191.8 1594.6,192.3 1610.0,192.8 1601.7,193.3 1593.6,193.8 1587.7,194.3 1573.5,194.8 1574.1,195.3 1560.3,195.8 1566.1,196.3 1573.5,196.8 1568.2,197.3 1564.5,197.8 1561.2,198.3 1570.5,198.8 1567.7,199.3 1572.3,199.8 1565.4,200.3 1563.3,200.8 1566.0,201.3 1560.2,201.8 1555.6,202.3 1567.5,202.8 1561.9,203.3 1558.2,203.8 1556.2,204.3 1556.4,204.8 1556.5,205.3 1556.0,205.8 1548.8,206.3 1550.7,206.8 1557.3,207.3 1555.9,207.8 1558.7,208.3 1561.2,208.8 1555.2,209.3 1553.7,209.8 1551.3,210.3 1549.9,210.8 1550.2,211.3 1545.8,211.8 1555.8,212.3 1572.0,212.8 1566.5,213.3 1560.0,213.8 1554.1,214.3 1554.0,214.8 1556.2,215.3 1561.0,215.8 1562.5,216.3 1580.0,216.8 1550.7,217.3 1564.8,217.8 1566.6,218.3 1557.7,218.8 1562.1,219.3 1558.5,219.8 1561.6,220.3 1560.6,220.8 1560.5,221.3 1556.8,221.8 1556.7,222.3 1560.0,222.8 1554.7,223.3 1555.3,223.8 1559.2,224.3 1556.1,224.8 1555.0,225.3 1541.7,225.8 1556.3,226.3 1573.1,226.8 1582.9,227.3 1628.0,227.8 1609.3,228.3 1573.5,228.8 1540.9,229.3 1543.4,229.8 1543.8,230.3 1555.8,230.8 1536.2,231.3 1539.9,231.8 1536.5,232.3 1535.9,232.8 1533.2,233.3 1535.7,233.8 1544.1,234.3 1539.2,234.8 1533.8,235.3 1532.8,235.8 1535.4,236.3 1535.9,236.8 1538.3,237.3 1535.7,237.8 1537.7,238.3 1536.8,238.8 1536.6,239.3 1536.1,239.8 1535.4,240.3 1536.6,240.8 1534.1,241.3 1534.1,241.8 1533.9,242.3 1531.3,242.8 1535.7,243.3 1538.7,243.8 1537.1,244.3 1537.0,244.8 1535.3,245.3 1533.4,245.8 1531.3,246.3 1533.4,246.8 1531.9,247.3 1530.3,247.8 1529.5,248.3 1527.6,248.8 1526.6,249.3 1526.8,249.8 1525.0,250.3 1523.8,250.8 1521.4,251.3 1521.9,251.8 1522.9,252.3 1519.7,252.8 1516.3,253.3 1518.1,253.8 1514.4,254.3 1519.9,254.8 1518.6,255.3 1517.1,255.8 1514.2,256.3 1513.6,256.8 1514.5,257.3 1514.7,257.8 1513.7,258.3 1515.6,258.8 1517.1,259.3 1518.0,259.8 1515.7,260.3 1514.8,260.8 1516.7,261.3 1516.8,261.8 1519.0,262.3 1520.9,262.8 1520.3,263.3 1517.1,263.8 1517.1,264.3 1518.0,264.8 1515.5,265.3 1516.2,265.8 1517.2,266.3 1516.0,266.8 1514.7,267.3 1514.8,267.8 1515.5,268.3 1515.7,268.8 1517.5,269.3 1516.5,269.8 1519.4,270.3 1519.0,270.8 1516.2,271.3 1519.4,271.8 1517.6,272.3 1520.2,272.8 1519.1,273.3 1518.2,273.8 1519.1,274.3 1517.6,274.8 1518.7,275.3 1517.5,275.8 1516.4,276.3 1516.6,276.8 1515.1,277.3 1516.0,277.8 1513.6,278.3 1515.7,278.8 1514.9,279.3 1515.2,279.8 1514.9,280.3 1519.5,280.8 1515.9,281.3 1515.8,281.8 1515.4,282.3 1518.7,282.8 1516.6,283.3 1519.3,283.8 1516.5,284.3 1517.5,284.8 1517.9,285.3 1519.8,285.8 1517.7,286.3 1516.7,286.8 1517.7,287.3 1515.1,287.8 1514.8,288.3 1517.1,288.8 1513.9,289.3 1517.2,289.8 1515.4,290.3 1514.5,290.8 1517.3,291.3 1518.8,291.8 1516.8,292.3 1517.9,292.8 1519.4,293.3 1519.3,293.8 1517.6,294.3 1515.9,294.8 1514.8,295.3 1514.0,295.8 1515.9,296.3 1516.7,296.8 1516.0,297.3 1517.7,297.8 1514.9,298.3 1514.5,298.8 1515.0,299.3 1518.4,299.8 1513.8,300.3 1515.8,300.8 1516.2,301.3 1516.6,301.8 1518.9,302.3 1517.9,302.8 1516.3,303.3 1514.2,303.8 1516.2,304.3 1515.1,304.8 1516.2,305.3 1516.2,305.8 1515.3,306.3 1519.4,306.8 1521.9,307.3 1520.8,307.8 1518.3,308.3 1515.2,308.8 1520.4,309.3 1521.1,309.8 1518.5,310.3 1519.1,310.8 1520.2,311.3 1516.9,311.8 1518.3,312.3 1515.3,312.8 1515.3,313.3 1516.7,313.8 1514.9,314.3 1517.0,314.8 1517.2,315.3 1514.5,315.8 1518.3,316.3 1517.2,316.8 1519.4,317.3 1518.8,317.8 1516.8,318.3 1516.4,318.8 1514.7,319.3 1516.5,319.8 1517.4,320.3 1521.2,320.8 1520.4,321.3 1516.9,321.8 1519.1,322.3 1519.0,322.8 1518.7,323.3 1520.1,323.8 1520.1,324.3 1516.9,324.8 1517.7,325.3 1517.1,325.8 1514.2,326.3 1516.7,326.8 1516.6,327.3 1514.8,327.8 1515.6,328.3 1518.5,328.8 1520.8,329.3 1520.0,329.8 1518.9,330.3 1522.1,330.8 1523.5,331.3 1525.4,331.8 1526.4,332.3 1523.2,332.8 1524.0,333.3 1522.9,333.8 1523.8,334.3 1529.2,334.8 1527.5,335.3 1522.5,335.8 1523.6,336.3 1522.9,336.8 1524.4,337.3 1522.3,337.8 1521.9,338.3 1521.5,338.8 1528.2,339.3 1536.0,339.8 1528.9,340.3 1526.0,340.8 1521.4,341.3 1519.2,341.8 1521.6,342.3 1521.1,342.8 1521.4,343.3 1522.9,343.8 1520.1,344.3 1521.8,344.8 1522.3,345.3 1524.0,345.8 1523.7,346.3 1522.9,346.8 1524.0,347.3 1520.6,347.8 1523.2,348.3 1522.0,348.8 1522.0,349.3 1523.8,349.8 1520.2,350.3 1527.4,350.8 1530.9,351.3 1540.0,351.8 1536.3,352.3 1532.1,352.8 1529.2,353.3 1531.2,353.8 1527.7,354.3 1525.3,354.8 1525.5,355.3 1524.5,355.8 1523.3,356.3 1521.4,356.8 1518.4,357.3 1532.7,357.8 1526.4,358.3 1524.6,358.8 1521.1,359.3 1524.9,359.8 1523.7,360.3 1530.6,360.8 1527.7,361.3 1524.7,361.8 1528.1,362.3 1525.7,362.8 1526.6,363.3 1525.7,363.8 1522.9,364.3 1525.4,364.8 1523.7,365.3 1528.2,365.8 1524.8,366.3 1519.7,366.8 1519.1,367.3 1526.0,367.8 1525.6,368.3 1520.4,368.8 1524.6,369.3 1521.0,369.8 1519.5,370.3 1520.0,370.8 1521.5,371.3 1525.1,371.8 1522.9,372.3 1519.1,372.8 1527.5,373.3 1526.1,373.8 1523.0,374.3 1524.1,374.8 1524.4,375.3 1526.4,375.8 1527.0,376.3 1527.0,376.8 1525.1,377.3 1523.6,377.8 1526.3,378.3 1525.3,378.8 1528.5,379.3 1529.5,379.8 1524.5,380.3 1523.0,380.8 1520.8,381.3 1525.6,381.8 1524.3,382.3 1521.8,382.8 1523.6,383.3 1526.2,383.8 1523.0,384.3 1526.7,384.8 1525.6,385.3 1524.8,385.8 1528.6,386.3 1529.0,386.8 1527.2,387.3 1525.9,387.8 1528.9,388.3 1528.3,388.8 1523.5,389.3 1523.6,389.8 1524.7,390.3 1523.3,390.8 1522.2,391.3 1518.3,391.8 1527.9,392.3 1527.5,392.8 1529.6,393.3 1528.0,393.8 1529.9,394.3 1530.3,394.8 1529.8,395.3 1530.9,395.8 1531.7,396.3 1530.2,396.8 1532.7,397.3 1529.7,397.8 1529.2,398.3 1527.7,398.8 1529.2,399.3 1528.9,399.8 1532.6,400.3 1532.9,400.8 1534.0,401.3 1538.6,401.8 1538.9,402.3 1538.1,402.8 1534.4,403.3 1534.3,403.8 1537.9,404.3 1538.7,404.8 1539.4,405.3 1539.7,405.8 1538.3,406.3 1544.2,406.8 1540.3,407.3 1540.9,407.8 1543.4,408.3 1538.8,408.8 1544.7,409.3 1545.0,409.8 1543.2,410.3 1541.2,410.8 1545.3,411.3 1544.5,411.8 1554.6,412.3 1554.8,412.8 1553.0,413.3 1554.6,413.8 1561.5,414.3 1563.0,414.8 1559.4,415.3 1558.5,415.8 1558.0,416.3 1564.8,416.8 1572.3,417.3 1590.0,417.8 1580.2,418.3 1572.7,418.8 1567.2,419.3 1572.7,419.8 1568.7,420.3 1575.3,420.8 1574.8,421.3 1573.5,421.8 1573.4,422.3 1581.3,422.8 1584.6,423.3 1579.3,423.8 1579.3,424.3 1584.3,424.8 1576.8,425.3 1577.2,425.8 1576.4,426.3 1579.6,426.8 1578.6,427.3 1576.8,427.8 1574.7,428.3 1572.7,428.8 1570.7,429.3 1573.6,429.8 1579.3,430.3 1578.1,430.8 1577.9,431.3 1584.3,431.8 1585.8,432.3 1585.2,432.8 1587.3,433.3 1593.8,433.8 1596.1,434.3 1595.4,434.8 1599.8,435.3 1600.7,435.8 1605.4,436.3 1601.9,436.8 1604.1,437.3 1600.2,437.8 1594.8,438.3 1598.2,438.8 1594.8,439.3 1586.7,439.8 1594.3,440.3 1582.7,440.8 1581.0,441.3 1590.8,441.8 1588.2,442.3 1587.0,442.8 1582.3,443.3 1584.7,443.8 1580.9,444.3 1584.6,444.8 1588.1,445.3 1577.1,445.8 1564.9,446.3 1571.5,446.8 1570.8,447.3 1576.3,447.8 1575.6,448.3 1558.0,448.8 1570.0,449.3 1572.9,449.8 1571.7,450.3 1565.7,450.8 1573.8,451.3 1571.1,451.8 1571.0,452.3 1561.1,452.8 1564.8,453.3 1565.4,453.8 1568.6,454.3 1568.0,454.8 1564.3,455.3 1561.1,455.8 1559.1,456.3 1563.9,456.8 1562.1,457.3 1565.6,457.8 1554.1,458.3 1557.9,458.8 1557.8,459.3 1567.7,459.8 1564.0,460.3 1558.9,460.8 1563.4,461.3 1572.9,461.8 1567.1,462.3 1557.8,462.8 1558.5,463.3 1553.5,463.8 1551.7,464.3 1560.4,464.8 1569.6,465.3 1566.9,465.8 1560.1,466.3 1558.9,466.8 1560.6,467.3 1563.8,467.8 1556.1,468.3 1555.4,468.8 1565.3,469.3 1563.1,469.8 1565.4,470.3 1560.9,470.8 1561.2,471.3 1556.3,471.8 1558.7,472.3 1562.5,472.8 1559.4,473.3 1554.4,473.8 1557.3,474.3 1553.1,474.8 1551.2,475.3 1559.7,475.8 1563.8,476.3 1561.3,476.8 1555.1,477.3 1562.9,477.8 1564.9,478.3 1558.9,478.8 1550.2,479.3 1560.2,479.8 1561.5,480.3 1558.5,480.8 1552.0,481.3 1553.5,481.8 1562.4,482.3 1562.4,482.8 1562.8,483.3 1563.3,483.8 1566.6,484.3 1564.5,484.8 1564.4,485.3 1562.0,485.8 1564.5,486.3 1562.8,486.8 1566.2,487.3 1565.2,487.8 1559.4,488.3 1566.7,488.8 1557.5,489.3 1562.2,489.8 1565.2,490.3 1564.0,490.8 1543.3,491.3 1565.8,491.8 1568.8,492.3 1568.1,492.8 1567.4,493.3 1559.4,493.8 1561.0,494.3 1563.6,494.8 1567.6,495.3 1562.3,495.8 1567.3,496.3 1562.3,496.8 1553.1,497.3 1553.5,497.8 1554.7,498.3 1556.8,498.8 1556.5,499.3 1554.4,499.8 1556.1,500.3 1545.4,500.8 1541.0,501.3 1549.4,501.8 1554.0,502.3 1552.0,502.8 1549.9,503.3 1555.9,503.8 1559.4,504.3 1551.1,504.8 1546.4,505.3 1546.2,505.8 1566.4,506.3 1549.7,506.8 1550.9,507.3 1554.3,507.8 1552.3,508.3 1545.5,508.8 1553.0,509.3 1552.4,509.8 1552.6,510.3 1554.2,510.8 1548.4,511.3 1547.9,511.8 1546.5,512.3 1548.9,512.8 1543.9,513.3 1543.8,513.8 1539.4,514.3 1541.3,514.8 1541.7,515.3 1539.6,515.8 1525.8,516.3 1538.9,516.8 1538.8,517.3 1535.2,517.8 1545.1,518.3 1542.9,518.8 1543.0,519.3 1542.7,519.8 1550.9,520.3 1536.6,520.8 1563.4,521.3 1553.9,521.8 1554.6,522.3 1553.7,522.8 1551.7,523.3 1546.0,523.8 1551.2,524.3 1551.9,524.8 1549.9,525.3 1550.7,525.8 1548.8,526.3 1549.0,526.8 1551.1,527.3 1550.5,527.8 1542.5,528.3 1548.5,528.8 1548.9,529.3 1550.2,529.8 1547.2,530.3 1547.3,530.8 1546.1,531.3 1546.8,531.8 1539.5,532.3 1545.4,532.8 1542.8,533.3 1538.9,533.8 1543.0,534.3 1539.8,534.8 1551.2,535.3 1553.6,535.8 1533.4,536.3 1562.0,536.8 1559.2,537.3 1551.4,537.8 1545.9,538.3 1543.8,538.8 1547.4,539.3 1537.8,539.8 1535.2,540.3 1537.7,540.8 1534.7,541.3 1537.5,541.8 1539.6,542.3 1535.3,542.8 1536.9,543.3 1520.3,543.8 1533.9,544.3 1530.6,544.8 1534.4,545.3 1535.8,545.8 1530.3,546.3 1532.3,546.8 1529.3,547.3 1523.3,547.8 1524.8,548.3 1528.4,548.8 1522.4,549.3 1518.7,549.8 1524.4,550.3 1524.5,550.8 1531.6,551.3 1527.4,551.8 1525.7,552.3 1525.6,552.8 1526.7,553.3 1524.0,553.8 1523.1,554.3 1525.0,554.8 1523.3,555.3 1541.6,555.8 1521.8,556.3 1523.7,556.8 1521.8,557.3 1520.0,557.8 1527.2,558.3 1516.1,558.8 1525.2,559.3 1517.4,559.8 1522.5,560.3 1517.9,560.8 1516.8,561.3 1517.7,561.8 1528.2,562.3 1525.9,562.8 1522.5,563.3 1522.2,563.8 1520.5,564.3 1523.6,564.8 1529.4,565.3 1523.7,565.8 1526.5,566.3 1530.9,566.8 1533.3,567.3 1526.3,567.8 1528.0,568.3 1525.0,568.8 1525.5,569.3 1525.6,569.8 1523.8,570.3 1529.7,570.8 1518.5,571.3 1521.6,571.8 1524.3,572.3 1529.2,572.8 1523.2,573.3 1523.6,573.8 1525.2,574.3 1525.4,574.8 1521.8,575.3 1525.1,575.8 1530.5,576.3 1524.1,576.8 1521.5,577.3 1520.0,577.8 1524.2,578.3 1525.5,578.8 1532.0,579.3 1444.0,579.8 1526.4,580.3 1508.2,580.8 1529.0,581.3 1519.5,581.8 1525.6,582.3 1522.2,582.8 1522.5,583.3 1520.4,583.8 1520.4,584.3 1519.5,584.8 1514.5,585.3 1524.9,585.8 1524.3,586.3 1521.7,586.8 1526.7,587.3 1532.5,587.8 1526.8,588.3 1524.7,588.8 1530.8,589.3 1523.0,589.8 1522.1,590.3 1505.2,590.8 1522.8,591.3 1526.5,591.8 1526.5,592.3 1521.3,592.8 1523.1,593.3 1522.4,593.8 1521.3,594.3 1522.6,594.8 1519.1,595.3 1518.9,595.8 1520.8,596.3 1516.3,596.8 1521.5,597.3 1520.9,597.8 1518.0,598.3 1519.5,598.8 1520.0,599.3 1522.3,599.8 1522.3,600.3 1520.6,600.8 1521.7,601.3 1529.7,601.8 1526.9,602.3 1525.5,602.8 1527.0,603.3 1524.7,603.8 1523.6,604.3 1525.9,604.8 1533.0,605.3 1537.4,605.8 1525.0,606.3 1521.7,606.8 1523.2,607.3 1528.5,607.8 1523.9,608.3 1524.6,608.8 1524.2,609.3 1523.9,609.8 1525.2,610.3 1522.3,610.8 1521.7,611.3 1522.2,611.8 1531.3,612.3 1525.7,612.8 1524.2,613.3 1529.9,613.8 1525.4,614.3 1528.0,614.8 1559.4,615.3 1621.0,615.8 1531.0,616.3 1561.4,616.8 1532.6,617.3 1531.7,617.8 1557.9,618.3 1585.0,618.8 1563.2,619.3 1550.5,619.8 1534.9,620.3 1531.7,620.8 1528.5,621.3 1531.8,621.8 1526.7,622.3 1532.2,622.8 1531.8,623.3 1528.8,623.8 1525.8,624.3 1528.4,624.8 1558.9,625.3 1593.0,625.8 1566.5,626.3 1547.2,626.8 1534.6,627.3 1535.1,627.8 1529.1,628.3 1532.0,628.8 1546.5,629.3 1535.1,629.8 1532.7,630.3 1534.4,630.8 1535.8,631.3 1529.5,631.8 1532.3,632.3 1570.0,632.8 1559.5,633.3 1537.7,633.8 1527.7,634.3 1525.6,634.8 1522.9,635.3 1531.9,635.8 1526.0,636.3 1529.1,636.8 1535.6,637.3 1530.2,637.8 1533.1,638.3 1532.4,638.8 1533.8,639.3 1529.5,639.8 1536.3,640.3 1534.6,640.8 1531.3,641.3 1529.5,641.8 1540.0,642.3 1560.0,642.8 1548.2,643.3 1552.7,643.8 1541.6,644.3 1545.8,644.8 1538.3,645.3 1539.8,645.8 1533.2,646.3 1535.8,646.8 1538.4,647.3 1541.6,647.8 1538.8,648.3 1536.8,648.8 1534.3,649.3 1534.7,649.8 1537.3,650.3 1537.3,650.8" fill="none" stroke="#4d698c" stroke-width="0.9"/><path d="M1596.3 141.8h0M1587.3 142.3h0M1584.5 142.8h0M1592.6 143.3h0M1594.9 143.8h0M1602.4 144.3h0M1610.0 144.8h0M1597.1 145.3h0M1601.0 145.8h0M1590.2 146.3h0M1592.9 146.8h0M1603.4 147.3h0M1622.0 147.8h0M1588.5 148.3h0M1609.9 148.8h0M1589.6 149.3h0M1590.8 149.8h0M1597.6 150.3h0M1612.2 150.8h0M1621.0 151.3h0M1632.0 151.8h0M1626.3 152.3h0M1609.4 152.8h0M1591.9 153.3h0M1576.7 153.8h0M1574.9 154.3h0M1568.7 154.8h0M1568.5 155.3h0M1569.1 155.8h0M1571.1 156.3h0M1552.9 156.8h0M1550.9 157.3h0M1547.3 157.8h0M1541.9 158.3h0M1548.3 158.8h0M1540.6 159.3h0M1539.4 159.8h0M1536.5 160.3h0M1533.8 160.8h0M1532.4 161.3h0M1554.4 161.8h0M1539.0 162.3h0M1537.7 162.8h0M1543.5 163.3h0M1536.5 163.8h0M1540.4 164.3h0M1539.1 164.8h0M1537.0 165.3h0M1540.6 165.8h0M1534.4 166.3h0M1541.5 166.8h0M1539.0 167.3h0M1547.3 167.8h0M1556.2 168.3h0M1555.9 168.8h0M1553.0 169.3h0M1555.1 169.8h0M1558.9 170.3h0M1558.7 170.8h0M1563.9 171.3h0M1571.6 171.8h0M1573.4 172.3h0M1567.0 172.8h0M1573.6 173.3h0M1577.6 173.8h0M1583.8 174.3h0M1585.0 174.8h0M1583.1 175.3h0M1615.0 175.8h0M1611.2 176.3h0M1593.8 176.8h0M1593.5 177.3h0M1596.8 177.8h0M1593.6 178.3h0M1593.1 178.8h0M1590.7 179.3h0M1596.5 179.8h0M1598.1 180.3h0M1618.0 180.8h0M1601.7 181.3h0M1590.1 181.8h0M1581.3 182.3h0M1572.3 182.8h0M1569.4 183.3h0M1566.1 183.8h0M1565.6 184.3h0M1565.9 184.8h0M1558.1 185.3h0M1552.4 185.8h0M1565.5 186.3h0M1566.7 186.8h0M1553.4 187.3h0M1555.6 187.8h0M1561.9 188.3h0M1567.0 188.8h0M1554.0 189.3h0M1517.0 189.8h0M1566.0 190.3h0M1547.5 190.8h0M1572.3 191.3h0M1586.6 191.8h0M1594.6 192.3h0M1610.0 192.8h0M1601.7 193.3h0M1593.6 193.8h0M1587.7 194.3h0M1573.5 194.8h0M1574.1 195.3h0M1560.3 195.8h0M1566.1 196.3h0M1573.5 196.8h0M1568.2 197.3h0M1564.5 197.8h0M1561.2 198.3h0M1570.5 198.8h0M1567.7 199.3h0M1572.3 199.8h0M1565.4 200.3h0M1563.3 200.8h0M1566.0 201.3h0M1560.2 201.8h0M1555.6 202.3h0M1567.5 202.8h0M1561.9 203.3h0M1558.2 203.8h0M1556.2 204.3h0M1556.4 204.8h0M1556.5 205.3h0M1556.0 205.8h0M1548.8 206.3h0M1550.7 206.8h0M1557.3 207.3h0M1555.9 207.8h0M1558.7 208.3h0M1561.2 208.8h0M1555.2 209.3h0M1553.7 209.8h0M1551.3 210.3h0M1549.9 210.8h0M1550.2 211.3h0M1545.8 211.8h0M1555.8 212.3h0M1572.0 212.8h0M1566.5 213.3h0M1560.0 213.8h0M1554.1 214.3h0M1554.0 214.8h0M1556.2 215.3h0M1561.0 215.8h0M1562.5 216.3h0M1580.0 216.8h0M1550.7 217.3h0M1564.8 217.8h0M1566.6 218.3h0M1557.7 218.8h0M1562.1 219.3h0M1558.5 219.8h0M1561.6 220.3h0M1560.6 220.8h0M1560.5 221.3h0M1556.8 221.8h0M1556.7 222.3h0M1560.0 222.8h0M1554.7 223.3h0M1555.3 223.8h0M1559.2 224.3h0M1556.1 224.8h0M1555.0 225.3h0M1541.7 225.8h0M1556.3 226.3h0M1573.1 226.8h0M1582.9 227.3h0M1628.0 227.8h0M1609.3 228.3h0M1573.5 228.8h0M1540.9 229.3h0M1543.4 229.8h0M1543.8 230.3h0M1555.8 230.8h0M1536.2 231.3h0M1539.9 231.8h0M1536.5 232.3h0M1535.9 232.8h0M1533.2 233.3h0M1535.7 233.8h0M1544.1 234.3h0M1539.2 234.8h0M1533.8 235.3h0M1532.8 235.8h0M1535.4 236.3h0M1535.9 236.8h0M1538.3 237.3h0M1535.7 237.8h0M1537.7 238.3h0M1536.8 238.8h0M1536.6 239.3h0M1536.1 239.8h0M1535.4 240.3h0M1536.6 240.8h0M1534.1 241.3h0M1534.1 241.8h0M1533.9 242.3h0M1531.3 242.8h0M1535.7 243.3h0M1538.7 243.8h0M1537.1 244.3h0M1537.0 244.8h0M1535.3 245.3h0M1533.4 245.8h0M1531.3 246.3h0M1533.4 246.8h0M1531.9 247.3h0M1530.3 247.8h0M1529.5 248.3h0M1527.6 248.8h0M1526.6 249.3h0M1526.8 249.8h0M1525.0 250.3h0M1523.8 250.8h0M1521.4 251.3h0M1521.9 251.8h0M1522.9 252.3h0M1519.7 252.8h0M1516.3 253.3h0M1518.1 253.8h0M1514.4 254.3h0M1519.9 254.8h0M1518.6 255.3h0M1517.1 255.8h0M1514.2 256.3h0M1513.6 256.8h0M1514.5 257.3h0M1514.7 257.8h0M1513.7 258.3h0M1515.6 258.8h0M1517.1 259.3h0M1518.0 259.8h0M1515.7 260.3h0M1514.8 260.8h0M1516.7 261.3h0M1516.8 261.8h0M1519.0 262.3h0M1520.9 262.8h0M1520.3 263.3h0M1517.1 263.8h0M1517.1 264.3h0M1518.0 264.8h0M1515.5 265.3h0M1516.2 265.8h0M1517.2 266.3h0M1516.0 266.8h0M1514.7 267.3h0M1514.8 267.8h0M1515.5 268.3h0M1515.7 268.8h0M1517.5 269.3h0M1516.5 269.8h0M1519.4 270.3h0M1519.0 270.8h0M1516.2 271.3h0M1519.4 271.8h0M1517.6 272.3h0M1520.2 272.8h0M1519.1 273.3h0M1518.2 273.8h0M1519.1 274.3h0M1517.6 274.8h0M1518.7 275.3h0M1517.5 275.8h0M1516.4 276.3h0M1516.6 276.8h0M1515.1 277.3h0M1516.0 277.8h0M1513.6 278.3h0M1515.7 278.8h0M1514.9 279.3h0M1515.2 279.8h0M1514.9 280.3h0M1519.5 280.8h0M1515.9 281.3h0M1515.8 281.8h0M1515.4 282.3h0M1518.7 282.8h0M1516.6 283.3h0M1519.3 283.8h0M1516.5 284.3h0M1517.5 284.8h0M1517.9 285.3h0M1519.8 285.8h0M1517.7 286.3h0M1516.7 286.8h0M1517.7 287.3h0M1515.1 287.8h0M1514.8 288.3h0M1517.1 288.8h0M1513.9 289.3h0M1517.2 289.8h0M1515.4 290.3h0M1514.5 290.8h0M1517.3 291.3h0M1518.8 291.8h0M1516.8 292.3h0M1517.9 292.8h0M1519.4 293.3h0M1519.3 293.8h0M1517.6 294.3h0M1515.9 294.8h0M1514.8 295.3h0M1514.0 295.8h0M1515.9 296.3h0M1516.7 296.8h0M1516.0 297.3h0M1517.7 297.8h0M1514.9 298.3h0M1514.5 298.8h0M1515.0 299.3h0M1518.4 299.8h0M1513.8 300.3h0M1515.8 300.8h0M1516.2 301.3h0M1516.6 301.8h0M1518.9 302.3h0M1517.9 302.8h0M1516.3 303.3h0M1514.2 303.8h0M1516.2 304.3h0M1515.1 304.8h0M1516.2 305.3h0M1516.2 305.8h0M1515.3 306.3h0M1519.4 306.8h0M1521.9 307.3h0M1520.8 307.8h0M1518.3 308.3h0M1515.2 308.8h0M1520.4 309.3h0M1521.1 309.8h0M1518.5 310.3h0M1519.1 310.8h0M1520.2 311.3h0M1516.9 311.8h0M1518.3 312.3h0M1515.3 312.8h0M1515.3 313.3h0M1516.7 313.8h0M1514.9 314.3h0M1517.0 314.8h0M1517.2 315.3h0M1514.5 315.8h0M1518.3 316.3h0M1517.2 316.8h0M1519.4 317.3h0M1518.8 317.8h0M1516.8 318.3h0M1516.4 318.8h0M1514.7 319.3h0M1516.5 319.8h0M1517.4 320.3h0M1521.2 320.8h0M1520.4 321.3h0M1516.9 321.8h0M1519.1 322.3h0M1519.0 322.8h0M1518.7 323.3h0M1520.1 323.8h0M1520.1 324.3h0M1516.9 324.8h0M1517.7 325.3h0M1517.1 325.8h0M1514.2 326.3h0M1516.7 326.8h0M1516.6 327.3h0M1514.8 327.8h0M1515.6 328.3h0M1518.5 328.8h0M1520.8 329.3h0M1520.0 329.8h0M1518.9 330.3h0M1522.1 330.8h0M1523.5 331.3h0M1525.4 331.8h0M1526.4 332.3h0M1523.2 332.8h0M1524.0 333.3h0M1522.9 333.8h0M1523.8 334.3h0M1529.2 334.8h0M1527.5 335.3h0M1522.5 335.8h0M1523.6 336.3h0M1522.9 336.8h0M1524.4 337.3h0M1522.3 337.8h0M1521.9 338.3h0M1521.5 338.8h0M1528.2 339.3h0M1536.0 339.8h0M1528.9 340.3h0M1526.0 340.8h0M1521.4 341.3h0M1519.2 341.8h0M1521.6 342.3h0M1521.1 342.8h0M1521.4 343.3h0M1522.9 343.8h0M1520.1 344.3h0M1521.8 344.8h0M1522.3 345.3h0M1524.0 345.8h0M1523.7 346.3h0M1522.9 346.8h0M1524.0 347.3h0M1520.6 347.8h0M1523.2 348.3h0M1522.0 348.8h0M1522.0 349.3h0M1523.8 349.8h0M1520.2 350.3h0M1527.4 350.8h0M1530.9 351.3h0M1540.0 351.8h0M1536.3 352.3h0M1532.1 352.8h0M1529.2 353.3h0M1531.2 353.8h0M1527.7 354.3h0M1525.3 354.8h0M1525.5 355.3h0M1524.5 355.8h0M1523.3 356.3h0M1521.4 356.8h0M1518.4 357.3h0M1532.7 357.8h0M1526.4 358.3h0M1524.6 358.8h0M1521.1 359.3h0M1524.9 359.8h0M1523.7 360.3h0M1530.6 360.8h0M1527.7 361.3h0M1524.7 361.8h0M1528.1 362.3h0M1525.7 362.8h0M1526.6 363.3h0M1525.7 363.8h0M1522.9 364.3h0M1525.4 364.8h0M1523.7 365.3h0M1528.2 365.8h0M1524.8 366.3h0M1519.7 366.8h0M1519.1 367.3h0M1526.0 367.8h0M1525.6 368.3h0M1520.4 368.8h0M1524.6 369.3h0M1521.0 369.8h0M1519.5 370.3h0M1520.0 370.8h0M1521.5 371.3h0M1525.1 371.8h0M1522.9 372.3h0M1519.1 372.8h0M1527.5 373.3h0M1526.1 373.8h0M1523.0 374.3h0M1524.1 374.8h0M1524.4 375.3h0M1526.4 375.8h0M1527.0 376.3h0M1527.0 376.8h0M1525.1 377.3h0M1523.6 377.8h0M1526.3 378.3h0M1525.3 378.8h0M1528.5 379.3h0M1529.5 379.8h0M1524.5 380.3h0M1523.0 380.8h0M1520.8 381.3h0M1525.6 381.8h0M1524.3 382.3h0M1521.8 382.8h0M1523.6 383.3h0M1526.2 383.8h0M1523.0 384.3h0M1526.7 384.8h0M1525.6 385.3h0M1524.8 385.8h0M1528.6 386.3h0M1529.0 386.8h0M1527.2 387.3h0M1525.9 387.8h0M1528.9 388.3h0M1528.3 388.8h0M1523.5 389.3h0M1523.6 389.8h0M1524.7 390.3h0M1523.3 390.8h0M1522.2 391.3h0M1518.3 391.8h0M1527.9 392.3h0M1527.5 392.8h0M1529.6 393.3h0M1528.0 393.8h0M1529.9 394.3h0M1530.3 394.8h0M1529.8 395.3h0M1530.9 395.8h0M1531.7 396.3h0M1530.2 396.8h0M1532.7 397.3h0M1529.7 397.8h0M1529.2 398.3h0M1527.7 398.8h0M1529.2 399.3h0M1528.9 399.8h0M1532.6 400.3h0M1532.9 400.8h0M1534.0 401.3h0M1538.6 401.8h0M1538.9 402.3h0M1538.1 402.8h0M1534.4 403.3h0M1534.3 403.8h0M1537.9 404.3h0M1538.7 404.8h0M1539.4 405.3h0M1539.7 405.8h0M1538.3 406.3h0M1544.2 406.8h0M1540.3 407.3h0M1540.9 407.8h0M1543.4 408.3h0M1538.8 408.8h0M1544.7 409.3h0M1545.0 409.8h0M1543.2 410.3h0M1541.2 410.8h0M1545.3 411.3h0M1544.5 411.8h0M1554.6 412.3h0M1554.8 412.8h0M1553.0 413.3h0M1554.6 413.8h0M1561.5 414.3h0M1563.0 414.8h0M1559.4 415.3h0M1558.5 415.8h0M1558.0 416.3h0M1564.8 416.8h0M1572.3 417.3h0M1590.0 417.8h0M1580.2 418.3h0M1572.7 418.8h0M1567.2 419.3h0M1572.7 419.8h0M1568.7 420.3h0M1575.3 420.8h0M1574.8 421.3h0M1573.5 421.8h0M1573.4 422.3h0M1581.3 422.8h0M1584.6 423.3h0M1579.3 423.8h0M1579.3 424.3h0M1584.3 424.8h0M1576.8 425.3h0M1577.2 425.8h0M1576.4 426.3h0M1579.6 426.8h0M1578.6 427.3h0M1576.8 427.8h0M1574.7 428.3h0M1572.7 428.8h0M1570.7 429.3h0M1573.6 429.8h0M1579.3 430.3h0M1578.1 430.8h0M1577.9 431.3h0M1584.3 431.8h0M1585.8 432.3h0M1585.2 432.8h0M1587.3 433.3h0M1593.8 433.8h0M1596.1 434.3h0M1595.4 434.8h0M1599.8 435.3h0M1600.7 435.8h0M1605.4 436.3h0M1601.9 436.8h0M1604.1 437.3h0M1600.2 437.8h0M1594.8 438.3h0M1598.2 438.8h0M1594.8 439.3h0M1586.7 439.8h0M1594.3 440.3h0M1582.7 440.8h0M1581.0 441.3h0M1590.8 441.8h0M1588.2 442.3h0M1587.0 442.8h0M1582.3 443.3h0M1584.7 443.8h0M1580.9 444.3h0M1584.6 444.8h0M1588.1 445.3h0M1577.1 445.8h0M1564.9 446.3h0M1571.5 446.8h0M1570.8 447.3h0M1576.3 447.8h0M1575.6 448.3h0M1558.0 448.8h0M1570.0 449.3h0M1572.9 449.8h0M1571.7 450.3h0M1565.7 450.8h0M1573.8 451.3h0M1571.1 451.8h0M1571.0 452.3h0M1561.1 452.8h0M1564.8 453.3h0M1565.4 453.8h0M1568.6 454.3h0M1568.0 454.8h0M1564.3 455.3h0M1561.1 455.8h0M1559.1 456.3h0M1563.9 456.8h0M1562.1 457.3h0M1565.6 457.8h0M1554.1 458.3h0M1557.9 458.8h0M1557.8 459.3h0M1567.7 459.8h0M1564.0 460.3h0M1558.9 460.8h0M1563.4 461.3h0M1572.9 461.8h0M1567.1 462.3h0M1557.8 462.8h0M1558.5 463.3h0M1553.5 463.8h0M1551.7 464.3h0M1560.4 464.8h0M1569.6 465.3h0M1566.9 465.8h0M1560.1 466.3h0M1558.9 466.8h0M1560.6 467.3h0M1563.8 467.8h0M1556.1 468.3h0M1555.4 468.8h0M1565.3 469.3h0M1563.1 469.8h0M1565.4 470.3h0M1560.9 470.8h0M1561.2 471.3h0M1556.3 471.8h0M1558.7 472.3h0M1562.5 472.8h0M1559.4 473.3h0M1554.4 473.8h0M1557.3 474.3h0M1553.1 474.8h0M1551.2 475.3h0M1559.7 475.8h0M1563.8 476.3h0M1561.3 476.8h0M1555.1 477.3h0M1562.9 477.8h0M1564.9 478.3h0M1558.9 478.8h0M1550.2 479.3h0M1560.2 479.8h0M1561.5 480.3h0M1558.5 480.8h0M1552.0 481.3h0M1553.5 481.8h0M1562.4 482.3h0M1562.4 482.8h0M1562.8 483.3h0M1563.3 483.8h0M1566.6 484.3h0M1564.5 484.8h0M1564.4 485.3h0M1562.0 485.8h0M1564.5 486.3h0M1562.8 486.8h0M1566.2 487.3h0M1565.2 487.8h0M1559.4 488.3h0M1566.7 488.8h0M1557.5 489.3h0M1562.2 489.8h0M1565.2 490.3h0M1564.0 490.8h0M1543.3 491.3h0M1565.8 491.8h0M1568.8 492.3h0M1568.1 492.8h0M1567.4 493.3h0M1559.4 493.8h0M1561.0 494.3h0M1563.6 494.8h0M1567.6 495.3h0M1562.3 495.8h0M1567.3 496.3h0M1562.3 496.8h0M1553.1 497.3h0M1553.5 497.8h0M1554.7 498.3h0M1556.8 498.8h0M1556.5 499.3h0M1554.4 499.8h0M1556.1 500.3h0M1545.4 500.8h0M1541.0 501.3h0M1549.4 501.8h0M1554.0 502.3h0M1552.0 502.8h0M1549.9 503.3h0M1555.9 503.8h0M1559.4 504.3h0M1551.1 504.8h0M1546.4 505.3h0M1546.2 505.8h0M1566.4 506.3h0M1549.7 506.8h0M1550.9 507.3h0M1554.3 507.8h0M1552.3 508.3h0M1545.5 508.8h0M1553.0 509.3h0M1552.4 509.8h0M1552.6 510.3h0M1554.2 510.8h0M1548.4 511.3h0M1547.9 511.8h0M1546.5 512.3h0M1548.9 512.8h0M1543.9 513.3h0M1543.8 513.8h0M1539.4 514.3h0M1541.3 514.8h0M1541.7 515.3h0M1539.6 515.8h0M1525.8 516.3h0M1538.9 516.8h0M1538.8 517.3h0M1535.2 517.8h0M1545.1 518.3h0M1542.9 518.8h0M1543.0 519.3h0M1542.7 519.8h0M1550.9 520.3h0M1536.6 520.8h0M1563.4 521.3h0M1553.9 521.8h0M1554.6 522.3h0M1553.7 522.8h0M1551.7 523.3h0M1546.0 523.8h0M1551.2 524.3h0M1551.9 524.8h0M1549.9 525.3h0M1550.7 525.8h0M1548.8 526.3h0M1549.0 526.8h0M1551.1 527.3h0M1550.5 527.8h0M1542.5 528.3h0M1548.5 528.8h0M1548.9 529.3h0M1550.2 529.8h0M1547.2 530.3h0M1547.3 530.8h0M1546.1 531.3h0M1546.8 531.8h0M1539.5 532.3h0M1545.4 532.8h0M1542.8 533.3h0M1538.9 533.8h0M1543.0 534.3h0M1539.8 534.8h0M1551.2 535.3h0M1553.6 535.8h0M1533.4 536.3h0M1562.0 536.8h0M1559.2 537.3h0M1551.4 537.8h0M1545.9 538.3h0M1543.8 538.8h0M1547.4 539.3h0M1537.8 539.8h0M1535.2 540.3h0M1537.7 540.8h0M1534.7 541.3h0M1537.5 541.8h0M1539.6 542.3h0M1535.3 542.8h0M1536.9 543.3h0M1520.3 543.8h0M1533.9 544.3h0M1530.6 544.8h0M1534.4 545.3h0M1535.8 545.8h0M1530.3 546.3h0M1532.3 546.8h0M1529.3 547.3h0M1523.3 547.8h0M1524.8 548.3h0M1528.4 548.8h0M1522.4 549.3h0M1518.7 549.8h0M1524.4 550.3h0M1524.5 550.8h0M1531.6 551.3h0M1527.4 551.8h0M1525.7 552.3h0M1525.6 552.8h0M1526.7 553.3h0M1524.0 553.8h0M1523.1 554.3h0M1525.0 554.8h0M1523.3 555.3h0M1541.6 555.8h0M1521.8 556.3h0M1523.7 556.8h0M1521.8 557.3h0M1520.0 557.8h0M1527.2 558.3h0M1516.1 558.8h0M1525.2 559.3h0M1517.4 559.8h0M1522.5 560.3h0M1517.9 560.8h0M1516.8 561.3h0M1517.7 561.8h0M1528.2 562.3h0M1525.9 562.8h0M1522.5 563.3h0M1522.2 563.8h0M1520.5 564.3h0M1523.6 564.8h0M1529.4 565.3h0M1523.7 565.8h0M1526.5 566.3h0M1530.9 566.8h0M1533.3 567.3h0M1526.3 567.8h0M1528.0 568.3h0M1525.0 568.8h0M1525.5 569.3h0M1525.6 569.8h0M1523.8 570.3h0M1529.7 570.8h0M1518.5 571.3h0M1521.6 571.8h0M1524.3 572.3h0M1529.2 572.8h0M1523.2 573.3h0M1523.6 573.8h0M1525.2 574.3h0M1525.4 574.8h0M1521.8 575.3h0M1525.1 575.8h0M1530.5 576.3h0M1524.1 576.8h0M1521.5 577.3h0M1520.0 577.8h0M1524.2 578.3h0M1525.5 578.8h0M1532.0 579.3h0M1444.0 579.8h0M1526.4 580.3h0M1508.2 580.8h0M1529.0 581.3h0M1519.5 581.8h0M1525.6 582.3h0M1522.2 582.8h0M1522.5 583.3h0M1520.4 583.8h0M1520.4 584.3h0M1519.5 584.8h0M1514.5 585.3h0M1524.9 585.8h0M1524.3 586.3h0M1521.7 586.8h0M1526.7 587.3h0M1532.5 587.8h0M1526.8 588.3h0M1524.7 588.8h0M1530.8 589.3h0M1523.0 589.8h0M1522.1 590.3h0M1505.2 590.8h0M1522.8 591.3h0M1526.5 591.8h0M1526.5 592.3h0M1521.3 592.8h0M1523.1 593.3h0M1522.4 593.8h0M1521.3 594.3h0M1522.6 594.8h0M1519.1 595.3h0M1518.9 595.8h0M1520.8 596.3h0M1516.3 596.8h0M1521.5 597.3h0M1520.9 597.8h0M1518.0 598.3h0M1519.5 598.8h0M1520.0 599.3h0M1522.3 599.8h0M1522.3 600.3h0M1520.6 600.8h0M1521.7 601.3h0M1529.7 601.8h0M1526.9 602.3h0M1525.5 602.8h0M1527.0 603.3h0M1524.7 603.8h0M1523.6 604.3h0M1525.9 604.8h0M1533.0 605.3h0M1537.4 605.8h0M1525.0 606.3h0M1521.7 606.8h0M1523.2 607.3h0M1528.5 607.8h0M1523.9 608.3h0M1524.6 608.8h0M1524.2 609.3h0M1523.9 609.8h0M1525.2 610.3h0M1522.3 610.8h0M1521.7 611.3h0M1522.2 611.8h0M1531.3 612.3h0M1525.7 612.8h0M1524.2 613.3h0M1529.9 613.8h0M1525.4 614.3h0M1528.0 614.8h0M1559.4 615.3h0M1621.0 615.8h0M1531.0 616.3h0M1561.4 616.8h0M1532.6 617.3h0M1531.7 617.8h0M1557.9 618.3h0M1585.0 618.8h0M1563.2 619.3h0M1550.5 619.8h0M1534.9 620.3h0M1531.7 620.8h0M1528.5 621.3h0M1531.8 621.8h0M1526.7 622.3h0M1532.2 622.8h0M1531.8 623.3h0M1528.8 623.8h0M1525.8 624.3h0M1528.4 624.8h0M1558.9 625.3h0M1593.0 625.8h0M1566.5 626.3h0M1547.2 626.8h0M1534.6 627.3h0M1535.1 627.8h0M1529.1 628.3h0M1532.0 628.8h0M1546.5 629.3h0M1535.1 629.8h0M1532.7 630.3h0M1534.4 630.8h0M1535.8 631.3h0M1529.5 631.8h0M1532.3 632.3h0M1570.0 632.8h0M1559.5 633.3h0M1537.7 633.8h0M1527.7 634.3h0M1525.6 634.8h0M1522.9 635.3h0M1531.9 635.8h0M1526.0 636.3h0M1529.1 636.8h0M1535.6 637.3h0M1530.2 637.8h0M1533.1 638.3h0M1532.4 638.8h0M1533.8 639.3h0M1529.5 639.8h0M1536.3 640.3h0M1534.6 640.8h0M1531.3 641.3h0M1529.5 641.8h0M1540.0 642.3h0M1560.0 642.8h0M1548.2 643.3h0M1552.7 643.8h0M1541.6 644.3h0M1545.8 644.8h0M1538.3 645.3h0M1539.8 645.8h0M1533.2 646.3h0M1535.8 646.8h0M1538.4 647.3h0M1541.6 647.8h0M1538.8 648.3h0M1536.8 648.8h0M1534.3 649.3h0M1534.7 649.8h0M1537.3 650.3h0M1537.3 650.8h0" stroke="#4d698c" stroke-width="2.7" stroke-linecap="round" fill="none"/><path d="M1547.4 143.8h0M1545.5 144.8h0M1542.4 146.8h0M1547.1 147.3h0M1548.6 147.8h0M1547.8 149.3h0M1550.4 149.8h0M1546.3 150.3h0M1547.7 153.3h0M1539.7 153.8h0M1549.2 154.8h0M1549.4 155.8h0M1547.6 157.8h0M1553.1 158.3h0M1546.1 158.8h0M1548.3 160.3h0M1540.8 161.3h0M1548.2 161.8h0M1547.8 162.8h0M1541.0 164.3h0M1543.7 166.3h0M1537.1 167.8h0M1539.4 168.8h0M1540.7 169.8h0M1546.1 171.8h0M1539.5 173.3h0M1547.3 173.8h0M1546.4 175.3h0M1543.5 175.8h0M1552.0 176.3h0M1544.6 177.3h0M1545.6 177.8h0M1547.3 178.8h0M1543.0 183.8h0M1546.3 184.3h0M1543.2 187.3h0M1546.9 188.3h0M1548.2 189.3h0M1553.3 190.3h0M1552.1 192.8h0M1552.4 193.3h0M1556.4 194.3h0M1558.4 194.8h0M1555.8 195.3h0M1565.3 197.3h0M1568.7 198.8h0M1561.2 202.8h0M1560.3 203.3h0M1567.8 204.3h0M1559.8 206.8h0M1559.5 209.8h0M1551.3 212.3h0M1537.0 217.8h0M1543.4 220.8h0M1550.3 226.8h0M1551.4 228.3h0M1541.8 229.3h0M1517.8 233.3h0M1525.0 234.3h0M1513.4 234.8h0M1512.6 235.8h0M1514.7 236.3h0M1515.2 236.8h0M1511.1 238.3h0M1510.2 241.3h0M1508.6 242.8h0M1504.0 243.3h0M1498.3 247.8h0M1501.0 249.3h0M1497.8 252.3h0M1502.0 253.3h0M1498.7 254.3h0M1504.3 254.8h0M1505.5 257.8h0M1500.3 259.3h0M1502.8 259.8h0M1501.4 260.8h0M1499.7 262.8h0M1503.3 264.3h0M1504.6 265.3h0M1507.9 265.8h0M1503.2 266.8h0M1503.8 267.8h0M1502.2 268.8h0M1505.6 270.8h0M1501.5 272.3h0M1498.2 273.8h0M1504.8 274.3h0M1503.3 275.8h0M1498.4 276.3h0M1498.4 278.3h0M1505.3 280.8h0M1503.0 281.3h0M1505.0 282.3h0M1502.0 284.8h0M1506.3 285.8h0M1507.0 286.8h0M1500.9 290.8h0M1495.7 291.3h0M1499.8 293.3h0M1500.6 294.3h0M1508.9 294.8h0M1506.8 298.3h0M1511.0 302.3h0M1508.1 303.8h0M1509.2 304.8h0M1512.7 305.3h0M1504.5 305.8h0M1504.9 310.3h0M1506.8 310.8h0M1501.3 311.8h0M1509.8 312.8h0M1509.6 314.3h0M1504.7 317.3h0M1506.5 317.8h0M1504.0 318.8h0M1500.8 320.8h0M1500.0 321.3h0M1497.5 321.8h0M1508.4 325.8h0M1513.7 326.8h0M1507.3 328.3h0M1508.3 328.8h0M1505.8 329.3h0M1512.5 332.3h0M1517.6 332.8h0M1508.2 334.3h0M1512.5 335.3h0M1511.5 337.8h0M1513.2 338.3h0M1513.4 338.8h0M1511.6 340.3h0M1513.3 342.3h0M1517.2 342.8h0M1513.2 344.3h0M1515.6 344.8h0M1520.1 348.3h0M1519.6 349.3h0M1512.7 349.8h0M1509.9 351.3h0M1514.7 352.3h0M1515.0 354.8h0M1520.1 355.8h0M1516.3 356.3h0M1519.1 358.3h0M1515.5 358.8h0M1520.6 359.8h0M1517.7 360.3h0M1517.1 360.8h0M1517.5 362.3h0M1518.9 365.3h0M1518.1 367.3h0M1515.0 367.8h0M1520.2 369.3h0M1520.0 371.8h0M1510.6 373.8h0M1515.9 378.3h0M1514.6 381.8h0M1511.7 382.3h0M1515.3 388.3h0M1514.5 389.3h0M1516.5 392.3h0M1518.5 393.8h0M1515.1 394.8h0M1523.1 398.3h0M1521.2 403.3h0M1526.7 406.8h0M1520.1 407.3h0M1518.3 410.3h0M1517.8 411.3h0M1523.1 412.8h0M1525.5 413.3h0M1534.2 417.3h0M1530.5 420.8h0M1525.0 421.3h0M1525.1 421.8h0M1521.3 423.3h0M1528.5 423.8h0M1529.9 424.3h0M1530.3 426.8h0M1537.4 427.3h0M1534.1 428.3h0M1535.3 430.3h0M1553.1 432.3h0M1569.7 434.8h0M1573.1 435.3h0M1573.7 437.8h0M1575.4 438.8h0M1576.1 439.3h0M1571.0 440.3h0M1568.1 443.3h0M1567.5 443.8h0M1571.5 444.3h0M1565.4 444.8h0M1573.3 445.3h0M1561.4 446.8h0M1564.2 450.3h0M1568.5 451.8h0M1566.5 452.3h0M1564.6 453.3h0M1560.4 453.8h0M1560.8 455.8h0M1562.2 456.3h0M1557.1 457.3h0M1556.4 459.3h0M1552.6 464.3h0M1548.6 464.8h0M1548.4 465.3h0M1548.8 465.8h0M1559.1 469.8h0M1551.8 474.3h0M1549.0 474.8h0M1549.8 475.3h0M1557.1 475.8h0M1550.3 476.8h0M1551.5 478.8h0M1553.7 480.8h0M1555.7 481.8h0M1550.8 483.3h0M1557.9 487.8h0M1549.2 488.8h0M1541.2 489.8h0M1548.0 491.3h0M1548.4 491.8h0M1550.4 493.3h0M1543.2 496.8h0M1533.3 497.8h0M1537.4 498.3h0M1540.2 500.3h0M1550.9 501.3h0M1541.7 501.8h0M1542.3 503.3h0M1542.4 505.3h0M1540.5 507.3h0M1531.2 507.8h0M1544.9 509.3h0M1538.0 510.8h0M1536.7 515.8h0M1543.9 517.8h0M1529.7 521.3h0M1545.2 525.3h0M1530.7 526.8h0M1529.9 530.3h0M1528.3 530.8h0M1535.0 533.8h0M1537.2 534.3h0M1537.6 535.3h0M1539.4 537.8h0M1525.6 538.3h0M1535.7 539.8h0M1534.5 541.3h0M1517.1 543.3h0M1525.8 543.8h0M1522.3 544.3h0M1526.6 544.8h0M1525.5 545.3h0M1524.8 545.8h0M1523.4 546.8h0M1535.2 548.3h0M1538.5 550.3h0M1525.4 550.8h0M1536.4 551.8h0M1538.0 554.8h0M1528.7 555.3h0M1528.6 555.8h0M1532.1 559.8h0M1533.0 560.8h0M1525.3 562.8h0M1527.7 564.3h0M1534.7 564.8h0M1532.5 566.8h0M1527.9 567.3h0M1529.1 568.3h0M1530.9 569.3h0M1519.2 572.3h0M1532.3 573.8h0M1527.6 574.3h0M1532.2 575.3h0M1526.4 576.8h0M1535.2 577.8h0M1530.3 578.8h0M1529.6 579.3h0M1530.3 585.3h0M1527.4 587.8h0M1527.4 588.3h0M1535.2 589.8h0M1528.1 591.3h0M1528.9 592.3h0M1526.4 592.8h0M1509.1 593.8h0M1527.3 594.8h0M1528.1 596.3h0M1522.3 598.3h0M1533.8 599.3h0M1534.1 600.3h0M1547.1 601.3h0M1524.5 602.8h0M1525.4 606.8h0M1518.7 609.8h0M1519.6 610.8h0M1536.3 612.3h0M1531.7 615.3h0M1526.0 619.8h0M1525.1 620.3h0M1525.3 622.3h0M1533.5 624.8h0M1531.5 626.3h0M1533.3 631.3h0M1534.3 631.8h0M1541.3 633.3h0M1554.1 636.3h0M1534.4 636.8h0M1530.8 637.8h0M1536.5 640.3h0M1549.5 640.8h0M1539.1 641.8h0M1535.1 642.8h0M1542.0 645.3h0M1544.0 646.8h0M1542.4 647.3h0M1525.2 648.3h0M1541.2 650.3h0" stroke="#dd8f6d" stroke-width="2.7" stroke-linecap="round" fill="none"/></g><g clip-path="url(#cC)"><path d="M1660.7 141.8h0M1657.4 142.3h0M1665.7 142.8h0M1663.9 143.3h0M1665.2 143.8h0M1662.9 144.3h0M1661.0 144.8h0M1658.5 145.3h0M1657.6 145.8h0M1663.1 146.3h0M1662.6 146.8h0M1660.3 147.3h0M1657.0 147.8h0M1657.9 148.3h0M1659.1 148.8h0M1699.5 149.3h0M1709.6 149.8h0M1705.4 150.3h0M1676.1 150.8h0M1660.4 151.3h0M1661.7 151.8h0M1729.7 152.3h0M1733.3 152.8h0M1741.0 153.3h0M1735.2 153.8h0M1661.2 154.3h0M1663.0 154.8h0M1661.9 155.3h0M1663.0 155.8h0M1661.3 156.3h0M1665.1 156.8h0M1660.4 157.3h0M1663.5 157.8h0M1659.4 158.3h0M1657.2 158.8h0M1659.8 159.3h0M1658.4 159.8h0M1659.0 160.3h0M1658.8 160.8h0M1660.8 161.3h0M1661.2 161.8h0M1659.6 162.3h0M1658.1 162.8h0M1654.9 163.3h0M1657.5 163.8h0M1657.0 164.3h0M1658.0 164.8h0M1658.5 165.3h0M1658.5 165.8h0M1649.3 166.3h0M1655.9 166.8h0M1659.3 167.3h0M1661.6 167.8h0M1656.4 168.3h0M1655.7 168.8h0M1657.1 169.3h0M1657.3 169.8h0M1659.9 170.3h0M1662.9 170.8h0M1660.3 171.3h0M1660.9 171.8h0M1658.0 172.3h0M1658.6 172.8h0M1660.8 173.3h0M1658.9 173.8h0M1663.9 174.3h0M1661.1 174.8h0M1662.4 175.3h0M1660.4 175.8h0M1660.8 176.3h0M1660.1 176.8h0M1661.5 177.3h0M1659.1 177.8h0M1663.8 178.3h0M1668.4 178.8h0M1661.5 179.3h0M1669.8 179.8h0M1666.1 180.3h0M1668.1 180.8h0M1663.5 181.3h0M1669.6 181.8h0M1663.4 182.3h0M1666.4 182.8h0M1669.3 183.3h0M1663.8 183.8h0M1661.3 184.3h0M1666.7 184.8h0M1665.4 185.3h0M1664.3 185.8h0M1664.9 186.3h0M1663.8 186.8h0M1671.0 187.3h0M1671.6 187.8h0M1666.7 188.3h0M1668.9 188.8h0M1668.1 189.3h0M1671.7 189.8h0M1667.0 190.3h0M1673.4 190.8h0M1669.4 191.3h0M1667.8 191.8h0M1669.7 192.3h0M1668.5 192.8h0M1674.8 193.3h0M1670.5 193.8h0M1669.5 194.3h0M1670.9 194.8h0M1675.4 195.3h0M1670.2 195.8h0M1669.2 196.3h0M1676.8 196.8h0M1675.2 197.3h0M1674.1 197.8h0M1675.7 198.3h0M1678.5 198.8h0M1670.4 199.3h0M1680.5 199.8h0M1677.5 200.3h0M1679.1 200.8h0M1678.0 201.3h0M1684.7 201.8h0M1677.4 202.3h0M1681.4 202.8h0M1673.0 203.3h0M1679.6 203.8h0M1680.7 204.3h0M1675.7 204.8h0M1675.5 205.3h0M1651.1 205.8h0M1682.8 206.3h0M1682.9 206.8h0M1679.5 207.3h0M1681.2 207.8h0M1677.1 208.3h0M1684.2 208.8h0M1680.0 209.3h0M1685.4 209.8h0M1681.2 210.3h0M1681.5 210.8h0M1675.9 211.3h0M1679.3 211.8h0M1684.8 212.3h0M1680.7 212.8h0M1680.5 213.3h0M1680.5 213.8h0M1685.6 214.3h0M1683.3 214.8h0M1682.7 215.3h0M1679.9 215.8h0M1685.3 216.3h0M1686.7 216.8h0M1685.4 217.3h0M1686.3 217.8h0M1678.2 218.3h0M1684.8 218.8h0M1686.9 219.3h0M1686.2 219.8h0M1684.5 220.3h0M1686.4 220.8h0M1684.1 221.3h0M1684.3 221.8h0M1683.1 222.3h0M1686.4 222.8h0M1665.4 223.3h0M1684.9 223.8h0M1689.7 224.3h0M1686.5 224.8h0M1686.6 225.3h0M1682.1 225.8h0M1684.5 226.3h0M1689.3 226.8h0M1688.9 227.3h0M1687.7 227.8h0M1687.3 228.3h0M1687.4 228.8h0M1689.5 229.3h0M1686.7 229.8h0M1681.3 230.3h0M1691.4 230.8h0M1688.7 231.3h0M1683.5 231.8h0M1687.6 232.3h0M1681.3 232.8h0M1685.7 233.3h0M1682.8 233.8h0M1685.0 234.3h0M1682.2 234.8h0M1682.5 235.3h0M1682.8 235.8h0M1684.4 236.3h0M1683.5 236.8h0M1683.3 237.3h0M1681.3 237.8h0M1687.7 238.3h0M1684.3 238.8h0M1683.4 239.3h0M1682.9 239.8h0M1681.0 240.3h0M1681.6 240.8h0M1679.8 241.3h0M1684.5 241.8h0M1683.6 242.3h0M1684.8 242.8h0M1684.9 243.3h0M1682.9 243.8h0M1682.3 244.3h0M1686.6 244.8h0M1680.6 245.3h0M1680.6 245.8h0M1687.5 246.3h0M1685.4 246.8h0M1681.0 247.3h0M1687.1 247.8h0M1687.2 248.3h0M1686.2 248.8h0M1677.7 249.3h0M1683.0 249.8h0M1680.1 250.3h0M1681.4 250.8h0M1678.1 251.3h0M1685.2 251.8h0M1679.0 252.3h0M1680.5 252.8h0M1681.3 253.3h0M1681.1 253.8h0M1681.4 254.3h0M1679.5 254.8h0M1680.1 255.3h0M1679.3 255.8h0M1674.3 256.3h0M1682.9 256.8h0M1669.2 257.3h0M1680.4 257.8h0M1681.4 258.3h0M1679.3 258.8h0M1680.1 259.3h0M1678.5 259.8h0M1684.3 260.3h0M1685.7 260.8h0M1682.3 261.3h0M1680.6 261.8h0M1685.5 262.3h0M1681.4 262.8h0M1678.8 263.3h0M1678.0 263.8h0M1682.4 264.3h0M1685.7 264.8h0M1681.6 265.3h0M1680.8 265.8h0M1681.9 266.3h0M1679.7 266.8h0M1679.1 267.3h0M1681.9 267.8h0M1679.2 268.3h0M1683.9 268.8h0M1679.5 269.3h0M1683.7 269.8h0M1682.8 270.3h0M1681.2 270.8h0M1681.0 271.3h0M1681.5 271.8h0M1686.4 272.3h0M1680.9 272.8h0M1686.5 273.3h0M1686.9 273.8h0M1684.3 274.3h0M1687.9 274.8h0M1678.6 275.3h0M1684.9 275.8h0M1683.4 276.3h0M1682.2 276.8h0M1683.6 277.3h0M1680.3 277.8h0M1688.2 278.3h0M1683.4 278.8h0M1680.2 279.3h0M1677.8 279.8h0M1681.8 280.3h0M1679.1 280.8h0M1678.8 281.3h0M1681.3 281.8h0M1677.8 282.3h0M1678.3 282.8h0M1680.8 283.3h0M1680.7 283.8h0M1681.5 284.3h0M1677.7 284.8h0M1684.7 285.3h0M1681.9 285.8h0M1680.6 286.3h0M1680.8 286.8h0M1675.2 287.3h0M1682.8 287.8h0M1677.5 288.3h0M1680.9 288.8h0M1676.2 289.3h0M1681.6 289.8h0M1679.6 290.3h0M1682.5 290.8h0M1689.7 291.3h0M1689.9 291.8h0M1686.6 292.3h0M1689.4 292.8h0M1692.8 293.3h0M1693.0 293.8h0M1696.3 294.3h0M1697.6 294.8h0M1697.6 295.3h0M1701.5 295.8h0M1705.5 296.3h0M1709.8 296.8h0M1711.7 297.3h0M1714.9 297.8h0M1715.7 298.3h0M1716.6 298.8h0M1721.5 299.3h0M1722.0 299.8h0M1724.5 300.3h0M1727.8 300.8h0M1733.7 301.3h0M1733.2 301.8h0M1741.2 302.3h0M1736.6 302.8h0M1746.2 303.3h0M1744.6 303.8h0M1749.4 304.3h0M1753.9 304.8h0M1752.8 305.3h0M1755.4 305.8h0M1755.5 306.3h0M1756.2 306.8h0M1749.8 307.3h0M1739.8 307.8h0M1736.7 308.3h0M1731.3 308.8h0M1727.3 309.3h0M1718.6 309.8h0M1743.0 310.3h0M1709.8 310.8h0M1708.2 311.3h0M1697.1 311.8h0M1700.8 312.3h0M1699.3 312.8h0M1701.7 313.3h0M1708.1 313.8h0M1699.8 314.3h0M1701.3 314.8h0M1698.8 315.3h0M1702.6 315.8h0M1704.6 316.3h0M1700.5 316.8h0M1701.1 317.3h0M1701.8 317.8h0M1700.2 318.3h0M1701.7 318.8h0M1699.8 319.3h0M1697.4 319.8h0M1696.7 320.3h0M1702.7 320.8h0M1701.6 321.3h0M1699.0 321.8h0M1700.3 322.3h0M1704.1 322.8h0M1696.8 323.3h0M1698.3 323.8h0M1702.4 324.3h0M1702.4 324.8h0M1697.2 325.3h0M1698.6 325.8h0M1682.9 326.3h0M1703.8 326.8h0M1699.6 327.3h0M1693.1 327.8h0M1700.6 328.3h0M1697.7 328.8h0M1696.2 329.3h0M1694.8 329.8h0M1698.9 330.3h0M1697.2 330.8h0M1697.5 331.3h0M1697.7 331.8h0M1697.2 332.3h0M1698.4 332.8h0M1699.8 333.3h0M1693.5 333.8h0M1695.3 334.3h0M1694.4 334.8h0M1699.0 335.3h0M1694.5 335.8h0M1691.1 336.3h0M1695.6 336.8h0M1692.8 337.3h0M1692.9 337.8h0M1693.9 338.3h0M1692.2 338.8h0M1690.0 339.3h0M1699.8 339.8h0M1694.2 340.3h0M1692.6 340.8h0M1696.1 341.3h0M1698.3 341.8h0M1691.6 342.3h0M1695.1 342.8h0M1697.5 343.3h0M1694.8 343.8h0M1697.8 344.3h0M1693.1 344.8h0M1694.3 345.3h0M1696.1 345.8h0M1696.9 346.3h0M1696.7 346.8h0M1695.1 347.3h0M1695.2 347.8h0M1691.1 348.3h0M1699.3 348.8h0M1692.9 349.3h0M1692.2 349.8h0M1694.0 350.3h0M1693.0 350.8h0M1693.4 351.3h0M1690.8 351.8h0M1687.5 352.3h0M1691.0 352.8h0M1689.3 353.3h0M1690.1 353.8h0M1693.0 354.3h0M1693.3 354.8h0M1697.0 355.3h0M1693.7 355.8h0M1689.8 356.3h0M1695.0 356.8h0M1697.5 357.3h0M1689.9 357.8h0M1695.5 358.3h0M1695.6 358.8h0M1693.8 359.3h0M1694.4 359.8h0M1694.8 360.3h0M1694.0 360.8h0M1696.1 361.3h0M1693.0 361.8h0M1693.7 362.3h0M1699.1 362.8h0M1690.8 363.3h0M1691.6 363.8h0M1692.5 364.3h0M1695.5 364.8h0M1695.3 365.3h0M1689.5 365.8h0M1696.1 366.3h0M1689.4 366.8h0M1698.0 367.3h0M1689.5 367.8h0M1712.7 368.3h0M1699.8 368.8h0M1692.4 369.3h0M1688.7 369.8h0M1691.2 370.3h0M1689.5 370.8h0M1688.9 371.3h0M1691.1 371.8h0M1687.0 372.3h0M1687.9 372.8h0M1686.8 373.3h0M1690.0 373.8h0M1689.9 374.3h0M1692.5 374.8h0M1691.6 375.3h0M1687.7 375.8h0M1707.9 376.3h0M1692.6 376.8h0M1689.4 377.3h0M1686.9 377.8h0M1695.4 378.3h0M1692.1 378.8h0M1691.7 379.3h0M1695.1 379.8h0M1687.1 380.3h0M1689.2 380.8h0M1684.1 381.3h0M1690.8 381.8h0M1690.8 382.3h0M1688.1 382.8h0M1687.2 383.3h0M1689.6 383.8h0M1689.3 384.3h0M1693.9 384.8h0M1689.0 385.3h0M1689.0 385.8h0M1689.1 386.3h0M1685.8 386.8h0M1688.0 387.3h0M1686.1 387.8h0M1689.2 388.3h0M1682.9 388.8h0M1685.2 389.3h0M1687.7 389.8h0M1680.8 390.3h0M1681.9 390.8h0M1687.4 391.3h0M1681.3 391.8h0M1684.0 392.3h0M1684.6 392.8h0M1680.7 393.3h0M1679.3 393.8h0M1688.1 394.3h0M1682.3 394.8h0M1686.7 395.3h0M1682.9 395.8h0M1687.2 396.3h0M1681.9 396.8h0M1681.7 397.3h0M1683.3 397.8h0M1683.7 398.3h0M1684.8 398.8h0M1686.0 399.3h0M1688.1 399.8h0M1684.2 400.3h0M1688.9 400.8h0M1681.6 401.3h0M1685.5 401.8h0M1688.3 402.3h0M1689.7 402.8h0M1676.0 403.3h0M1689.7 403.8h0M1675.5 404.3h0M1687.8 404.8h0M1681.4 405.3h0M1682.5 405.8h0M1677.5 406.3h0M1687.3 406.8h0M1686.6 407.3h0M1681.6 407.8h0M1681.9 408.3h0M1687.9 408.8h0M1688.2 409.3h0M1687.9 409.8h0M1683.8 410.3h0M1686.5 410.8h0M1692.2 411.3h0M1692.6 411.8h0M1695.8 412.3h0M1692.1 412.8h0M1685.0 413.3h0M1696.3 413.8h0M1691.4 414.3h0M1686.8 414.8h0M1692.7 415.3h0M1689.1 415.8h0M1694.5 416.3h0M1691.7 416.8h0M1704.9 417.3h0M1698.5 417.8h0M1693.2 418.3h0M1684.4 418.8h0M1685.2 419.3h0M1695.1 419.8h0M1691.9 420.3h0M1670.6 420.8h0M1684.1 421.3h0M1684.4 421.8h0M1692.6 422.3h0M1691.7 422.8h0M1684.7 423.3h0M1686.9 423.8h0M1696.9 424.3h0M1691.7 424.8h0M1698.2 425.3h0M1701.9 425.8h0M1695.3 426.3h0M1692.3 426.8h0M1688.4 427.3h0M1699.0 427.8h0M1684.7 428.3h0M1686.1 428.8h0M1691.6 429.3h0M1682.8 429.8h0M1696.4 430.3h0M1686.6 430.8h0M1690.9 431.3h0M1686.0 431.8h0M1688.0 432.3h0M1689.1 432.8h0M1679.3 433.3h0M1686.1 433.8h0M1687.9 434.3h0M1702.9 434.8h0M1694.8 435.3h0M1694.1 435.8h0M1685.7 436.3h0M1696.0 436.8h0M1699.3 437.3h0M1696.6 437.8h0M1705.2 438.3h0M1683.9 438.8h0M1685.0 439.3h0M1690.1 439.8h0M1683.9 440.3h0M1687.4 440.8h0M1687.7 441.3h0M1684.5 441.8h0M1685.8 442.3h0M1687.2 442.8h0M1688.0 443.3h0M1680.2 443.8h0M1682.6 444.3h0M1692.2 444.8h0M1682.6 445.3h0M1681.8 445.8h0M1686.9 446.3h0M1684.4 446.8h0M1689.4 447.3h0M1690.9 447.8h0M1694.3 448.3h0M1694.3 448.8h0M1685.5 449.3h0M1685.1 449.8h0M1701.0 450.3h0M1687.0 450.8h0M1682.4 451.3h0M1681.2 451.8h0M1690.7 452.3h0M1687.2 452.8h0M1678.2 453.3h0M1683.6 453.8h0M1681.9 454.3h0M1691.6 454.8h0M1687.1 455.3h0M1684.8 455.8h0M1676.9 456.3h0M1681.3 456.8h0M1687.0 457.3h0M1684.4 457.8h0M1690.3 458.3h0M1684.1 458.8h0M1688.4 459.3h0M1690.1 459.8h0M1684.3 460.3h0M1695.4 460.8h0M1691.1 461.3h0M1696.2 461.8h0M1688.2 462.3h0M1688.9 462.8h0M1695.5 463.3h0M1693.8 463.8h0M1699.7 464.3h0M1696.1 464.8h0M1700.6 465.3h0M1697.1 465.8h0M1689.2 466.3h0M1700.2 466.8h0M1691.3 467.3h0M1692.2 467.8h0M1695.8 468.3h0M1694.2 468.8h0M1700.3 469.3h0M1708.9 469.8h0M1694.1 470.3h0M1700.4 470.8h0M1693.1 471.3h0M1698.0 471.8h0M1693.8 472.3h0M1694.2 472.8h0M1702.4 473.3h0M1697.7 473.8h0M1697.9 474.3h0M1690.5 474.8h0M1705.1 475.3h0M1695.1 475.8h0M1691.6 476.3h0M1696.1 476.8h0M1701.1 477.3h0M1704.1 477.8h0M1706.0 478.3h0M1693.9 478.8h0M1695.6 479.3h0M1705.5 479.8h0M1701.9 480.3h0M1691.6 480.8h0M1696.1 481.3h0M1686.3 481.8h0M1689.7 482.3h0M1689.2 482.8h0M1691.2 483.3h0M1684.8 483.8h0M1694.4 484.3h0M1689.1 484.8h0M1685.4 485.3h0M1692.4 485.8h0M1687.7 486.3h0M1683.4 486.8h0M1689.1 487.3h0M1699.3 487.8h0M1687.0 488.3h0M1689.8 488.8h0M1688.0 489.3h0M1688.2 489.8h0M1693.2 490.3h0M1676.2 490.8h0M1684.6 491.3h0M1688.8 491.8h0M1689.2 492.3h0M1695.9 492.8h0M1704.8 493.3h0M1694.2 493.8h0M1692.1 494.3h0M1697.8 494.8h0M1702.0 495.3h0M1687.6 495.8h0M1689.4 496.3h0M1690.9 496.8h0M1690.6 497.3h0M1676.9 497.8h0M1689.5 498.3h0M1681.0 498.8h0M1694.1 499.3h0M1691.6 499.8h0M1677.1 500.3h0M1692.4 500.8h0M1688.3 501.3h0M1684.8 501.8h0M1693.6 502.3h0M1700.9 502.8h0M1692.5 503.3h0M1686.0 503.8h0M1653.4 504.3h0M1689.2 504.8h0M1688.5 505.3h0M1701.7 505.8h0M1697.6 506.3h0M1695.9 506.8h0M1699.5 507.3h0M1696.1 507.8h0M1696.4 508.3h0M1690.1 508.8h0M1691.9 509.3h0M1696.0 509.8h0M1689.1 510.3h0M1702.3 510.8h0M1692.7 511.3h0M1687.7 511.8h0M1693.7 512.3h0M1684.4 512.8h0M1695.6 513.3h0M1688.9 513.8h0M1696.9 514.3h0M1682.4 514.8h0M1685.6 515.3h0M1681.9 515.8h0M1660.9 516.3h0M1687.4 516.8h0M1681.5 517.3h0M1687.4 517.8h0M1684.6 518.3h0M1694.0 518.8h0M1675.2 519.3h0M1688.8 519.8h0M1689.2 520.3h0M1691.9 520.8h0M1689.6 521.3h0M1700.7 521.8h0M1686.3 522.3h0M1689.9 522.8h0M1686.4 523.3h0M1684.7 523.8h0M1686.4 524.3h0M1687.9 524.8h0M1679.0 525.3h0M1678.6 525.8h0M1672.1 526.3h0M1679.2 526.8h0M1669.2 527.3h0M1665.0 527.8h0M1668.8 528.3h0M1666.0 528.8h0M1663.7 529.3h0M1648.4 529.8h0M1658.5 530.3h0M1655.5 530.8h0M1650.8 531.3h0M1655.1 531.8h0M1654.8 532.3h0M1654.7 532.8h0M1654.9 533.3h0M1652.3 533.8h0M1652.3 534.3h0M1657.7 534.8h0M1658.7 535.3h0M1654.3 535.8h0M1657.8 536.3h0M1656.3 536.8h0M1654.7 537.3h0M1654.4 537.8h0M1655.4 538.3h0M1655.6 538.8h0M1657.4 539.3h0M1659.1 539.8h0M1658.0 540.3h0M1663.5 540.8h0M1660.6 541.3h0M1662.7 541.8h0M1668.4 542.3h0M1669.6 542.8h0M1672.1 543.3h0M1670.4 543.8h0M1670.1 544.3h0M1676.1 544.8h0M1674.2 545.3h0M1691.2 545.8h0M1673.1 546.3h0M1677.2 546.8h0M1671.3 547.3h0M1678.3 547.8h0M1673.2 548.3h0M1679.8 548.8h0M1674.8 549.3h0M1681.2 549.8h0M1685.2 550.3h0M1677.6 550.8h0M1676.7 551.3h0M1683.7 551.8h0M1679.0 552.3h0M1678.8 552.8h0M1683.8 553.3h0M1675.2 553.8h0M1679.3 554.3h0M1679.6 554.8h0M1681.6 555.3h0M1678.2 555.8h0M1685.6 556.3h0M1686.4 556.8h0M1685.5 557.3h0M1684.6 557.8h0M1683.4 558.3h0M1689.4 558.8h0M1687.0 559.3h0M1691.3 559.8h0M1692.3 560.3h0M1692.5 560.8h0M1684.3 561.3h0M1686.6 561.8h0M1701.1 562.3h0M1687.9 562.8h0M1691.0 563.3h0M1681.2 563.8h0M1684.9 564.3h0M1683.7 564.8h0M1679.9 565.3h0M1681.8 565.8h0M1684.8 566.3h0M1682.4 566.8h0M1666.8 567.3h0M1680.8 567.8h0M1682.8 568.3h0M1678.1 568.8h0M1680.6 569.3h0M1681.9 569.8h0M1678.7 570.3h0M1683.6 570.8h0M1680.2 571.3h0M1683.1 571.8h0M1683.7 572.3h0M1682.5 572.8h0M1681.7 573.3h0M1681.4 573.8h0M1683.0 574.3h0M1682.4 574.8h0M1684.3 575.3h0M1681.6 575.8h0M1681.4 576.3h0M1683.2 576.8h0M1680.8 577.3h0M1681.5 577.8h0M1684.4 578.3h0M1679.0 578.8h0M1679.1 579.3h0M1679.8 579.8h0M1676.6 580.3h0M1674.2 580.8h0M1674.0 581.3h0M1677.7 581.8h0M1680.2 582.3h0M1680.4 582.8h0M1697.7 583.3h0M1681.2 583.8h0M1677.9 584.3h0M1675.6 584.8h0M1678.1 585.3h0M1678.7 585.8h0M1677.2 586.3h0M1681.6 586.8h0M1677.7 587.3h0M1681.7 587.8h0M1681.8 588.3h0M1676.3 588.8h0M1680.1 589.3h0M1683.0 589.8h0M1681.2 590.3h0M1678.9 590.8h0M1676.0 591.3h0M1676.6 591.8h0M1679.0 592.3h0M1682.7 592.8h0M1681.0 593.3h0M1680.0 593.8h0M1679.5 594.3h0M1684.1 594.8h0M1674.7 595.3h0M1675.0 595.8h0M1678.2 596.3h0M1681.4 596.8h0M1680.9 597.3h0M1675.8 597.8h0M1677.6 598.3h0M1675.4 598.8h0M1674.6 599.3h0M1676.1 599.8h0M1675.0 600.3h0M1674.9 600.8h0M1673.5 601.3h0M1672.7 601.8h0M1676.2 602.3h0M1677.3 602.8h0M1678.3 603.3h0M1674.9 603.8h0M1675.2 604.3h0M1679.8 604.8h0M1678.4 605.3h0M1680.5 605.8h0M1677.9 606.3h0M1676.8 606.8h0M1676.1 607.3h0M1680.7 607.8h0M1675.8 608.3h0M1675.3 608.8h0M1676.8 609.3h0M1681.2 609.8h0M1678.2 610.3h0M1678.3 610.8h0M1678.5 611.3h0M1677.1 611.8h0M1676.3 612.3h0M1672.5 612.8h0M1666.6 613.3h0M1675.4 613.8h0M1679.2 614.3h0M1673.0 614.8h0M1677.6 615.3h0M1673.5 615.8h0M1673.6 616.3h0M1678.0 616.8h0M1680.3 617.3h0M1681.3 617.8h0M1681.8 618.3h0M1678.6 618.8h0M1680.8 619.3h0M1678.7 619.8h0M1678.4 620.3h0M1679.3 620.8h0M1678.4 621.3h0M1680.3 621.8h0M1673.9 622.3h0M1680.5 622.8h0M1668.7 623.3h0M1682.5 623.8h0M1681.2 624.3h0M1675.3 624.8h0M1678.1 625.3h0M1679.3 625.8h0M1674.9 626.3h0M1675.1 626.8h0M1676.3 627.3h0M1678.4 627.8h0M1679.1 628.3h0M1676.5 628.8h0M1680.0 629.3h0M1678.0 629.8h0M1679.1 630.3h0M1675.2 630.8h0M1675.4 631.3h0M1677.4 631.8h0M1678.7 632.3h0M1678.4 632.8h0M1677.1 633.3h0M1675.3 633.8h0M1680.7 634.3h0M1677.2 634.8h0M1682.5 635.3h0M1674.3 635.8h0M1676.7 636.3h0M1676.3 636.8h0M1683.2 637.3h0M1681.7 637.8h0M1678.5 638.3h0M1675.6 638.8h0M1682.6 639.3h0M1679.8 639.8h0M1677.2 640.3h0M1676.0 640.8h0M1680.3 641.3h0M1679.2 641.8h0M1680.7 642.3h0M1680.7 642.8h0M1679.7 643.3h0M1680.1 643.8h0M1682.3 644.3h0M1680.8 644.8h0M1681.8 645.3h0M1683.1 645.8h0M1677.4 646.3h0M1685.6 646.8h0M1684.7 647.3h0M1682.4 647.8h0M1683.7 648.3h0M1687.0 648.8h0M1685.8 649.3h0M1680.5 649.8h0M1681.8 650.3h0M1685.2 650.8h0" stroke="#dd8f6d" stroke-width="2.8" stroke-linecap="round" fill="none"/><polyline points="1655.9,141.8 1655.7,142.3 1659.4,142.8 1659.4,143.3 1656.7,143.8 1655.8,144.3 1662.3,144.8 1677.2,145.3 1700.0,145.8 1685.6,146.3 1674.1,146.8 1661.6,147.3 1657.1,147.8 1663.2,148.3 1673.9,148.8 1699.1,149.3 1743.0,149.8 1720.9,150.3 1686.8,150.8 1660.1,151.3 1689.6,151.8 1714.2,152.3 1778.0,152.8 1729.1,153.3 1708.0,153.8 1665.0,154.3 1658.5,154.8 1664.8,155.3 1660.9,155.8 1664.2,156.3 1666.8,156.8 1663.5,157.3 1658.4,157.8 1660.7,158.3 1662.0,158.8 1664.3,159.3 1664.9,159.8 1664.6,160.3 1665.7,160.8 1658.7,161.3 1661.2,161.8 1655.8,162.3 1658.6,162.8 1656.8,163.3 1654.7,163.8 1662.2,164.3 1660.1,164.8 1659.0,165.3 1654.6,165.8 1654.9,166.3 1656.6,166.8 1661.5,167.3 1656.0,167.8 1656.3,168.3 1655.3,168.8 1650.4,169.3 1646.0,169.8 1655.7,170.3 1654.7,170.8 1659.9,171.3 1661.7,171.8 1661.7,172.3 1661.4,172.8 1660.4,173.3 1661.2,173.8 1656.2,174.3 1657.7,174.8 1664.1,175.3 1663.3,175.8 1666.7,176.3 1664.0,176.8 1662.6,177.3 1660.5,177.8 1663.4,178.3 1666.5,178.8 1666.3,179.3 1662.3,179.8 1667.1,180.3 1666.0,180.8 1663.8,181.3 1664.1,181.8 1663.6,182.3 1670.3,182.8 1672.5,183.3 1670.0,183.8 1671.4,184.3 1665.5,184.8 1671.0,185.3 1677.9,185.8 1664.8,186.3 1666.4,186.8 1672.5,187.3 1672.2,187.8 1674.2,188.3 1672.1,188.8 1667.1,189.3 1682.9,189.8 1686.3,190.3 1678.0,190.8 1681.3,191.3 1679.2,191.8 1677.9,192.3 1676.3,192.8 1674.6,193.3 1675.3,193.8 1684.1,194.3 1675.0,194.8 1676.6,195.3 1675.7,195.8 1676.9,196.3 1674.6,196.8 1672.8,197.3 1679.1,197.8 1680.1,198.3 1677.7,198.8 1682.7,199.3 1676.1,199.8 1680.4,200.3 1679.1,200.8 1679.6,201.3 1682.3,201.8 1682.2,202.3 1679.0,202.8 1677.3,203.3 1677.4,203.8 1681.5,204.3 1687.2,204.8 1686.8,205.3 1685.2,205.8 1686.9,206.3 1688.6,206.8 1690.6,207.3 1685.6,207.8 1689.0,208.3 1689.7,208.8 1684.9,209.3 1684.7,209.8 1690.1,210.3 1687.7,210.8 1685.8,211.3 1686.8,211.8 1687.7,212.3 1686.0,212.8 1688.5,213.3 1684.6,213.8 1697.3,214.3 1716.0,214.8 1707.1,215.3 1691.9,215.8 1677.3,216.3 1663.0,216.8 1671.6,217.3 1678.9,217.8 1682.6,218.3 1683.3,218.8 1688.2,219.3 1688.1,219.8 1687.0,220.3 1687.7,220.8 1693.1,221.3 1693.0,221.8 1690.3,222.3 1692.0,222.8 1702.1,223.3 1692.2,223.8 1691.1,224.3 1685.9,224.8 1685.0,225.3 1683.3,225.8 1682.4,226.3 1686.1,226.8 1686.5,227.3 1683.6,227.8 1686.9,228.3 1687.4,228.8 1685.9,229.3 1684.1,229.8 1690.7,230.3 1690.8,230.8 1688.7,231.3 1693.0,231.8 1688.8,232.3 1686.0,232.8 1686.0,233.3 1682.9,233.8 1683.5,234.3 1682.0,234.8 1688.9,235.3 1685.8,235.8 1682.3,236.3 1685.8,236.8 1679.3,237.3 1683.5,237.8 1683.6,238.3 1682.8,238.8 1680.8,239.3 1680.9,239.8 1681.9,240.3 1682.1,240.8 1685.0,241.3 1686.3,241.8 1684.6,242.3 1678.3,242.8 1677.2,243.3 1678.0,243.8 1678.8,244.3 1672.4,244.8 1675.4,245.3 1680.8,245.8 1674.6,246.3 1673.3,246.8 1673.5,247.3 1675.6,247.8 1665.7,248.3 1672.2,248.8 1662.4,249.3 1653.0,249.8 1665.3,250.3 1672.3,250.8 1674.1,251.3 1675.7,251.8 1671.5,252.3 1671.4,252.8 1673.3,253.3 1672.8,253.8 1670.4,254.3 1675.2,254.8 1681.3,255.3 1680.7,255.8 1683.6,256.3 1674.9,256.8 1681.9,257.3 1687.3,257.8 1696.5,258.3 1683.8,258.8 1683.9,259.3 1685.0,259.8 1680.8,260.3 1681.6,260.8 1679.6,261.3 1682.5,261.8 1685.5,262.3 1691.3,262.8 1687.6,263.3 1693.4,263.8 1687.3,264.3 1686.0,264.8 1688.0,265.3 1689.5,265.8 1691.2,266.3 1690.3,266.8 1682.8,267.3 1687.1,267.8 1688.8,268.3 1684.9,268.8 1691.0,269.3 1687.6,269.8 1693.6,270.3 1691.4,270.8 1690.4,271.3 1694.5,271.8 1689.9,272.3 1683.5,272.8 1682.6,273.3 1681.1,273.8 1686.9,274.3 1685.6,274.8 1687.6,275.3 1687.2,275.8 1682.9,276.3 1687.6,276.8 1687.9,277.3 1687.4,277.8 1686.5,278.3 1685.8,278.8 1686.1,279.3 1687.9,279.8 1684.0,280.3 1682.4,280.8 1683.7,281.3 1688.2,281.8 1686.4,282.3 1689.5,282.8 1676.9,283.3 1680.1,283.8 1682.3,284.3 1683.9,284.8 1686.2,285.3 1682.0,285.8 1679.7,286.3 1683.6,286.8 1684.8,287.3 1677.1,287.8 1682.5,288.3 1683.0,288.8 1673.1,289.3 1663.0,289.8 1671.5,290.3 1677.2,290.8 1683.9,291.3 1683.2,291.8 1686.5,292.3 1685.7,292.8 1685.9,293.3 1685.2,293.8 1686.9,294.3 1688.6,294.8 1688.3,295.3 1682.6,295.8 1684.0,296.3 1687.5,296.8 1687.9,297.3 1686.5,297.8 1685.9,298.3 1680.6,298.8 1686.9,299.3 1685.7,299.8 1738.7,300.3 1806.2,300.8 1767.3,301.3 1747.6,301.8 1758.5,302.3 1826.0,302.8 1782.9,303.3 1779.9,303.8 1731.5,304.3 1732.7,304.8 1715.3,305.3 1690.0,305.8 1688.8,306.3 1688.2,306.8 1693.7,307.3 1692.6,307.8 1686.0,308.3 1686.0,308.8 1689.6,309.3 1687.2,309.8 1686.1,310.3 1683.0,310.8 1687.0,311.3 1690.8,311.8 1687.4,312.3 1689.3,312.8 1687.1,313.3 1685.4,313.8 1694.5,314.3 1694.1,314.8 1695.3,315.3 1689.4,315.8 1690.0,316.3 1691.2,316.8 1699.7,317.3 1695.2,317.8 1694.1,318.3 1693.3,318.8 1692.2,319.3 1689.6,319.8 1700.8,320.3 1697.5,320.8 1717.8,321.3 1746.0,321.8 1721.1,322.3 1719.5,322.8 1697.6,323.3 1697.7,323.8 1695.8,324.3 1699.2,324.8 1702.1,325.3 1701.7,325.8 1700.6,326.3 1697.8,326.8 1696.1,327.3 1699.8,327.8 1697.3,328.3 1694.7,328.8 1697.2,329.3 1691.7,329.8 1688.8,330.3 1696.6,330.8 1698.1,331.3 1690.1,331.8 1694.1,332.3 1695.4,332.8 1695.4,333.3 1693.5,333.8 1695.3,334.3 1695.2,334.8 1695.2,335.3 1697.1,335.8 1696.0,336.3 1693.1,336.8 1695.7,337.3 1699.1,337.8 1692.8,338.3 1693.0,338.8 1693.5,339.3 1695.7,339.8 1693.3,340.3 1697.9,340.8 1698.8,341.3 1695.3,341.8 1666.5,342.3 1643.0,342.8 1656.0,343.3 1691.5,343.8 1693.0,344.3 1691.9,344.8 1684.0,345.3 1695.4,345.8 1695.6,346.3 1688.6,346.8 1700.6,347.3 1716.0,347.8 1701.9,348.3 1695.8,348.8 1693.4,349.3 1695.8,349.8 1691.9,350.3 1692.8,350.8 1693.0,351.3 1691.9,351.8 1692.4,352.3 1690.7,352.8 1690.7,353.3 1694.2,353.8 1697.7,354.3 1696.6,354.8 1690.5,355.3 1692.9,355.8 1693.4,356.3 1695.0,356.8 1692.5,357.3 1696.0,357.8 1693.7,358.3 1695.2,358.8 1694.5,359.3 1689.2,359.8 1694.4,360.3 1698.4,360.8 1695.9,361.3 1696.1,361.8 1694.8,362.3 1691.8,362.8 1693.7,363.3 1703.2,363.8 1697.7,364.3 1695.6,364.8 1691.0,365.3 1693.5,365.8 1703.2,366.3 1716.0,366.8 1708.5,367.3 1704.0,367.8 1694.7,368.3 1693.0,368.8 1685.5,369.3 1695.9,369.8 1695.1,370.3 1694.0,370.8 1691.3,371.3 1694.4,371.8 1688.9,372.3 1695.2,372.8 1691.9,373.3 1692.2,373.8 1693.2,374.3 1693.8,374.8 1694.4,375.3 1698.1,375.8 1693.0,376.3 1695.5,376.8 1691.4,377.3 1693.8,377.8 1691.7,378.3 1704.0,378.8 1691.7,379.3 1695.3,379.8 1688.9,380.3 1688.7,380.8 1693.4,381.3 1695.1,381.8 1691.7,382.3 1693.8,382.8 1693.6,383.3 1696.0,383.8 1690.1,384.3 1690.1,384.8 1691.2,385.3 1689.2,385.8 1688.6,386.3 1684.4,386.8 1687.5,387.3 1685.0,387.8 1682.8,388.3 1684.3,388.8 1683.9,389.3 1684.4,389.8 1686.5,390.3 1681.4,390.8 1678.1,391.3 1689.5,391.8 1713.6,392.3 1688.3,392.8 1685.3,393.3 1670.3,393.8 1685.4,394.3 1684.1,394.8 1687.9,395.3 1718.5,395.8 1679.6,396.3 1683.6,396.8 1679.6,397.3 1682.8,397.8 1684.9,398.3 1686.8,398.8 1702.2,399.3 1685.0,399.8 1687.9,400.3 1680.4,400.8 1684.4,401.3 1686.5,401.8 1686.1,402.3 1705.6,402.8 1690.0,403.3 1685.3,403.8 1683.2,404.3 1686.8,404.8 1679.2,405.3 1689.0,405.8 1702.9,406.3 1688.1,406.8 1688.7,407.3 1685.8,407.8 1691.2,408.3 1691.7,408.8 1692.0,409.3 1721.2,409.8 1695.1,410.3 1691.5,410.8 1677.4,411.3 1689.5,411.8 1695.4,412.3 1689.1,412.8 1711.6,413.3 1692.9,413.8 1695.2,414.3 1669.0,414.8 1693.6,415.3 1680.3,415.8 1709.5,416.3 1739.0,416.8 1724.6,417.3 1709.8,417.8 1728.6,418.3 1698.3,418.8 1695.9,419.3 1663.0,419.8 1694.5,420.3 1700.7,420.8 1695.1,421.3 1728.0,421.8 1693.4,422.3 1698.0,422.8 1667.7,423.3 1696.4,423.8 1669.9,424.3 1693.4,424.8 1727.0,425.3 1693.1,425.8 1693.3,426.3 1669.9,426.8 1692.9,427.3 1694.3,427.8 1698.3,428.3 1729.8,428.8 1691.7,429.3 1691.7,429.8 1678.0,430.3 1698.4,430.8 1698.2,431.3 1697.8,431.8 1713.9,432.3 1702.9,432.8 1693.6,433.3 1661.4,433.8 1695.5,434.3 1696.2,434.8 1695.0,435.3 1729.2,435.8 1690.4,436.3 1693.3,436.8 1690.2,437.3 1690.7,437.8 1662.1,438.3 1695.5,438.8 1722.3,439.3 1698.6,439.8 1694.4,440.3 1673.3,440.8 1695.1,441.3 1681.7,441.8 1695.4,442.3 1720.2,442.8 1691.0,443.3 1693.9,443.8 1680.0,444.3 1689.0,444.8 1692.2,445.3 1695.2,445.8 1730.7,446.3 1694.6,446.8 1696.0,447.3 1666.5,447.8 1698.3,448.3 1681.0,448.8 1693.6,449.3 1704.3,449.8 1696.1,450.3 1693.8,450.8 1667.5,451.3 1693.8,451.8 1691.4,452.3 1691.2,452.8 1716.1,453.3 1688.7,453.8 1696.0,454.3 1683.7,454.8 1694.8,455.3 1690.0,455.8 1690.7,456.3 1707.5,456.8 1693.0,457.3 1685.7,457.8 1684.1,458.3 1688.5,458.8 1690.2,459.3 1690.9,459.8 1704.4,460.3 1694.1,460.8 1692.9,461.3 1690.7,461.8 1693.0,462.3 1675.7,462.8 1690.9,463.3 1718.9,463.8 1691.9,464.3 1694.6,464.8 1675.6,465.3 1692.6,465.8 1695.5,466.3 1695.2,466.8 1709.4,467.3 1694.2,467.8 1691.2,468.3 1686.0,468.8 1689.3,469.3 1697.1,469.8 1695.7,470.3 1708.5,470.8 1691.1,471.3 1694.8,471.8 1661.1,472.3 1696.6,472.8 1662.4,473.3 1692.7,473.8 1706.1,474.3 1692.4,474.8 1694.3,475.3 1686.7,475.8 1692.1,476.3 1669.2,476.8 1693.9,477.3 1706.4,477.8 1695.4,478.3 1691.9,478.8 1665.4,479.3 1700.3,479.8 1696.3,480.3 1697.2,480.8 1732.2,481.3 1697.7,481.8 1698.5,482.3 1688.0,482.8 1699.4,483.3 1686.8,483.8 1697.7,484.3 1730.9,484.8 1693.9,485.3 1693.9,485.8 1668.7,486.3 1694.6,486.8 1672.3,487.3 1697.2,487.8 1728.2,488.3 1700.3,488.8 1695.7,489.3 1691.7,489.8 1696.6,490.3 1694.0,490.8 1692.3,491.3 1716.6,491.8 1695.0,492.3 1693.2,492.8 1672.2,493.3 1695.0,493.8 1692.8,494.3 1690.6,494.8 1711.6,495.3 1700.2,495.8 1698.5,496.3 1682.9,496.8 1696.1,497.3 1696.7,497.8 1693.5,498.3 1714.8,498.8 1694.3,499.3 1691.0,499.8 1682.9,500.3 1695.7,500.8 1696.6,501.3 1691.2,501.8 1709.8,502.3 1690.0,502.8 1688.8,503.3 1673.1,503.8 1689.3,504.3 1695.6,504.8 1694.7,505.3 1727.1,505.8 1700.5,506.3 1695.8,506.8 1663.0,507.3 1693.1,507.8 1685.1,508.3 1697.4,508.8 1727.5,509.3 1692.4,509.8 1694.1,510.3 1667.5,510.8 1690.5,511.3 1682.1,511.8 1689.3,512.3 1719.8,512.8 1689.5,513.3 1694.2,513.8 1685.2,514.3 1690.8,514.8 1674.0,515.3 1695.6,515.8 1714.2,516.3 1693.9,516.8 1690.2,517.3 1687.0,517.8 1687.5,518.3 1683.5,518.8 1687.7,519.3 1717.5,519.8 1689.4,520.3 1685.1,520.8 1666.6,521.3 1673.8,521.8 1676.8,522.3 1678.8,522.8 1709.0,523.3 1666.8,523.8 1665.5,524.3 1664.7,524.8 1665.4,525.3 1665.1,525.8 1662.5,526.3 1662.2,526.8 1654.7,527.3 1657.2,527.8 1659.7,528.3 1657.0,528.8 1645.9,529.3 1637.3,529.8 1642.1,530.3 1647.0,530.8 1656.5,531.3 1655.4,531.8 1650.9,532.3 1656.3,532.8 1648.9,533.3 1650.3,533.8 1648.7,534.3 1646.0,534.8 1647.1,535.3 1650.6,535.8 1648.2,536.3 1650.4,536.8 1650.8,537.3 1652.4,537.8 1660.5,538.3 1664.4,538.8 1665.1,539.3 1663.0,539.8 1692.5,540.3 1719.0,540.8 1696.7,541.3 1682.3,541.8 1670.0,542.3 1666.3,542.8 1666.3,543.3 1668.1,543.8 1672.3,544.3 1678.8,544.8 1673.3,545.3 1675.6,545.8 1676.9,546.3 1673.6,546.8 1677.9,547.3 1677.6,547.8 1678.3,548.3 1682.8,548.8 1681.2,549.3 1679.0,549.8 1680.8,550.3 1682.1,550.8 1684.3,551.3 1680.3,551.8 1682.0,552.3 1682.1,552.8 1682.7,553.3 1683.1,553.8 1682.8,554.3 1684.4,554.8 1686.4,555.3 1683.7,555.8 1686.1,556.3 1687.7,556.8 1685.7,557.3 1689.8,557.8 1689.9,558.3 1684.2,558.8 1703.6,559.3 1726.0,559.8 1715.2,560.3 1701.5,560.8 1685.6,561.3 1685.8,561.8 1687.4,562.3 1686.5,562.8 1688.0,563.3 1688.9,563.8 1687.8,564.3 1688.4,564.8 1688.4,565.3 1683.8,565.8 1681.6,566.3 1679.7,566.8 1683.4,567.3 1683.3,567.8 1683.6,568.3 1679.7,568.8 1678.3,569.3 1680.6,569.8 1683.2,570.3 1681.6,570.8 1677.8,571.3 1679.4,571.8 1682.0,572.3 1682.7,572.8 1680.4,573.3 1684.7,573.8 1679.1,574.3 1682.8,574.8 1681.2,575.3 1681.3,575.8 1680.2,576.3 1682.0,576.8 1684.5,577.3 1682.8,577.8 1682.9,578.3 1686.8,578.8 1681.0,579.3 1684.7,579.8 1685.1,580.3 1686.1,580.8 1681.3,581.3 1680.7,581.8 1680.1,582.3 1676.7,582.8 1674.6,583.3 1681.2,583.8 1683.5,584.3 1681.1,584.8 1679.1,585.3 1679.6,585.8 1682.5,586.3 1679.5,586.8 1667.4,587.3 1659.0,587.8 1680.8,588.3 1667.2,588.8 1681.9,589.3 1682.1,589.8 1678.9,590.3 1676.2,590.8 1672.2,591.3 1676.5,591.8 1676.8,592.3 1680.8,592.8 1680.7,593.3 1679.4,593.8 1681.2,594.3 1671.8,594.8 1678.8,595.3 1677.0,595.8 1679.1,596.3 1680.2,596.8 1681.6,597.3 1680.2,597.8 1683.4,598.3 1686.6,598.8 1679.1,599.3 1680.0,599.8 1680.7,600.3 1683.1,600.8 1686.6,601.3 1683.2,601.8 1676.8,602.3 1674.8,602.8 1676.1,603.3 1677.1,603.8 1682.5,604.3 1696.0,604.8 1688.6,605.3 1681.0,605.8 1678.5,606.3 1678.8,606.8 1676.8,607.3 1679.6,607.8 1678.4,608.3 1684.1,608.8 1681.6,609.3 1679.7,609.8 1686.6,610.3 1682.8,610.8 1677.1,611.3 1672.5,611.8 1680.3,612.3 1680.0,612.8 1678.0,613.3 1674.0,613.8 1672.4,614.3 1672.2,614.8 1682.3,615.3 1679.7,615.8 1675.2,616.3 1675.2,616.8 1671.7,617.3 1677.7,617.8 1677.9,618.3 1674.2,618.8 1674.5,619.3 1674.7,619.8 1678.1,620.3 1681.5,620.8 1679.7,621.3 1679.6,621.8 1679.2,622.3 1674.6,622.8 1681.5,623.3 1677.2,623.8 1672.9,624.3 1675.5,624.8 1674.7,625.3 1677.8,625.8 1676.7,626.3 1671.7,626.8 1679.7,627.3 1681.4,627.8 1676.0,628.3 1681.1,628.8 1679.9,629.3 1680.6,629.8 1680.3,630.3 1674.5,630.8 1677.9,631.3 1675.9,631.8 1682.8,632.3 1674.7,632.8 1674.8,633.3 1680.8,633.8 1679.7,634.3 1678.5,634.8 1679.2,635.3 1681.5,635.8 1684.3,636.3 1678.5,636.8 1678.6,637.3 1677.7,637.8 1679.3,638.3 1679.4,638.8 1677.4,639.3 1680.6,639.8 1677.2,640.3 1678.4,640.8 1678.7,641.3 1678.8,641.8 1682.9,642.3 1683.9,642.8 1683.5,643.3 1682.7,643.8 1677.1,644.3 1680.8,644.8 1679.5,645.3 1679.1,645.8 1680.0,646.3 1677.7,646.8 1679.1,647.3 1680.2,647.8 1682.5,648.3 1682.6,648.8 1680.6,649.3 1679.4,649.8 1683.3,650.3 1681.8,650.8" fill="none" stroke="#4d698c" stroke-width="0.9"/><path d="M1655.9 141.8h0M1655.7 142.3h0M1659.4 142.8h0M1659.4 143.3h0M1656.7 143.8h0M1655.8 144.3h0M1662.3 144.8h0M1677.2 145.3h0M1700.0 145.8h0M1685.6 146.3h0M1674.1 146.8h0M1661.6 147.3h0M1657.1 147.8h0M1663.2 148.3h0M1673.9 148.8h0M1699.1 149.3h0M1743.0 149.8h0M1720.9 150.3h0M1686.8 150.8h0M1660.1 151.3h0M1689.6 151.8h0M1714.2 152.3h0M1778.0 152.8h0M1729.1 153.3h0M1708.0 153.8h0M1665.0 154.3h0M1658.5 154.8h0M1664.8 155.3h0M1660.9 155.8h0M1664.2 156.3h0M1666.8 156.8h0M1663.5 157.3h0M1658.4 157.8h0M1660.7 158.3h0M1662.0 158.8h0M1664.3 159.3h0M1664.9 159.8h0M1664.6 160.3h0M1665.7 160.8h0M1658.7 161.3h0M1661.2 161.8h0M1655.8 162.3h0M1658.6 162.8h0M1656.8 163.3h0M1654.7 163.8h0M1662.2 164.3h0M1660.1 164.8h0M1659.0 165.3h0M1654.6 165.8h0M1654.9 166.3h0M1656.6 166.8h0M1661.5 167.3h0M1656.0 167.8h0M1656.3 168.3h0M1655.3 168.8h0M1650.4 169.3h0M1646.0 169.8h0M1655.7 170.3h0M1654.7 170.8h0M1659.9 171.3h0M1661.7 171.8h0M1661.7 172.3h0M1661.4 172.8h0M1660.4 173.3h0M1661.2 173.8h0M1656.2 174.3h0M1657.7 174.8h0M1664.1 175.3h0M1663.3 175.8h0M1666.7 176.3h0M1664.0 176.8h0M1662.6 177.3h0M1660.5 177.8h0M1663.4 178.3h0M1666.5 178.8h0M1666.3 179.3h0M1662.3 179.8h0M1667.1 180.3h0M1666.0 180.8h0M1663.8 181.3h0M1664.1 181.8h0M1663.6 182.3h0M1670.3 182.8h0M1672.5 183.3h0M1670.0 183.8h0M1671.4 184.3h0M1665.5 184.8h0M1671.0 185.3h0M1677.9 185.8h0M1664.8 186.3h0M1666.4 186.8h0M1672.5 187.3h0M1672.2 187.8h0M1674.2 188.3h0M1672.1 188.8h0M1667.1 189.3h0M1682.9 189.8h0M1686.3 190.3h0M1678.0 190.8h0M1681.3 191.3h0M1679.2 191.8h0M1677.9 192.3h0M1676.3 192.8h0M1674.6 193.3h0M1675.3 193.8h0M1684.1 194.3h0M1675.0 194.8h0M1676.6 195.3h0M1675.7 195.8h0M1676.9 196.3h0M1674.6 196.8h0M1672.8 197.3h0M1679.1 197.8h0M1680.1 198.3h0M1677.7 198.8h0M1682.7 199.3h0M1676.1 199.8h0M1680.4 200.3h0M1679.1 200.8h0M1679.6 201.3h0M1682.3 201.8h0M1682.2 202.3h0M1679.0 202.8h0M1677.3 203.3h0M1677.4 203.8h0M1681.5 204.3h0M1687.2 204.8h0M1686.8 205.3h0M1685.2 205.8h0M1686.9 206.3h0M1688.6 206.8h0M1690.6 207.3h0M1685.6 207.8h0M1689.0 208.3h0M1689.7 208.8h0M1684.9 209.3h0M1684.7 209.8h0M1690.1 210.3h0M1687.7 210.8h0M1685.8 211.3h0M1686.8 211.8h0M1687.7 212.3h0M1686.0 212.8h0M1688.5 213.3h0M1684.6 213.8h0M1697.3 214.3h0M1716.0 214.8h0M1707.1 215.3h0M1691.9 215.8h0M1677.3 216.3h0M1663.0 216.8h0M1671.6 217.3h0M1678.9 217.8h0M1682.6 218.3h0M1683.3 218.8h0M1688.2 219.3h0M1688.1 219.8h0M1687.0 220.3h0M1687.7 220.8h0M1693.1 221.3h0M1693.0 221.8h0M1690.3 222.3h0M1692.0 222.8h0M1702.1 223.3h0M1692.2 223.8h0M1691.1 224.3h0M1685.9 224.8h0M1685.0 225.3h0M1683.3 225.8h0M1682.4 226.3h0M1686.1 226.8h0M1686.5 227.3h0M1683.6 227.8h0M1686.9 228.3h0M1687.4 228.8h0M1685.9 229.3h0M1684.1 229.8h0M1690.7 230.3h0M1690.8 230.8h0M1688.7 231.3h0M1693.0 231.8h0M1688.8 232.3h0M1686.0 232.8h0M1686.0 233.3h0M1682.9 233.8h0M1683.5 234.3h0M1682.0 234.8h0M1688.9 235.3h0M1685.8 235.8h0M1682.3 236.3h0M1685.8 236.8h0M1679.3 237.3h0M1683.5 237.8h0M1683.6 238.3h0M1682.8 238.8h0M1680.8 239.3h0M1680.9 239.8h0M1681.9 240.3h0M1682.1 240.8h0M1685.0 241.3h0M1686.3 241.8h0M1684.6 242.3h0M1678.3 242.8h0M1677.2 243.3h0M1678.0 243.8h0M1678.8 244.3h0M1672.4 244.8h0M1675.4 245.3h0M1680.8 245.8h0M1674.6 246.3h0M1673.3 246.8h0M1673.5 247.3h0M1675.6 247.8h0M1665.7 248.3h0M1672.2 248.8h0M1662.4 249.3h0M1653.0 249.8h0M1665.3 250.3h0M1672.3 250.8h0M1674.1 251.3h0M1675.7 251.8h0M1671.5 252.3h0M1671.4 252.8h0M1673.3 253.3h0M1672.8 253.8h0M1670.4 254.3h0M1675.2 254.8h0M1681.3 255.3h0M1680.7 255.8h0M1683.6 256.3h0M1674.9 256.8h0M1681.9 257.3h0M1687.3 257.8h0M1696.5 258.3h0M1683.8 258.8h0M1683.9 259.3h0M1685.0 259.8h0M1680.8 260.3h0M1681.6 260.8h0M1679.6 261.3h0M1682.5 261.8h0M1685.5 262.3h0M1691.3 262.8h0M1687.6 263.3h0M1693.4 263.8h0M1687.3 264.3h0M1686.0 264.8h0M1688.0 265.3h0M1689.5 265.8h0M1691.2 266.3h0M1690.3 266.8h0M1682.8 267.3h0M1687.1 267.8h0M1688.8 268.3h0M1684.9 268.8h0M1691.0 269.3h0M1687.6 269.8h0M1693.6 270.3h0M1691.4 270.8h0M1690.4 271.3h0M1694.5 271.8h0M1689.9 272.3h0M1683.5 272.8h0M1682.6 273.3h0M1681.1 273.8h0M1686.9 274.3h0M1685.6 274.8h0M1687.6 275.3h0M1687.2 275.8h0M1682.9 276.3h0M1687.6 276.8h0M1687.9 277.3h0M1687.4 277.8h0M1686.5 278.3h0M1685.8 278.8h0M1686.1 279.3h0M1687.9 279.8h0M1684.0 280.3h0M1682.4 280.8h0M1683.7 281.3h0M1688.2 281.8h0M1686.4 282.3h0M1689.5 282.8h0M1676.9 283.3h0M1680.1 283.8h0M1682.3 284.3h0M1683.9 284.8h0M1686.2 285.3h0M1682.0 285.8h0M1679.7 286.3h0M1683.6 286.8h0M1684.8 287.3h0M1677.1 287.8h0M1682.5 288.3h0M1683.0 288.8h0M1673.1 289.3h0M1663.0 289.8h0M1671.5 290.3h0M1677.2 290.8h0M1683.9 291.3h0M1683.2 291.8h0M1686.5 292.3h0M1685.7 292.8h0M1685.9 293.3h0M1685.2 293.8h0M1686.9 294.3h0M1688.6 294.8h0M1688.3 295.3h0M1682.6 295.8h0M1684.0 296.3h0M1687.5 296.8h0M1687.9 297.3h0M1686.5 297.8h0M1685.9 298.3h0M1680.6 298.8h0M1686.9 299.3h0M1685.7 299.8h0M1738.7 300.3h0M1806.2 300.8h0M1767.3 301.3h0M1747.6 301.8h0M1758.5 302.3h0M1826.0 302.8h0M1782.9 303.3h0M1779.9 303.8h0M1731.5 304.3h0M1732.7 304.8h0M1715.3 305.3h0M1690.0 305.8h0M1688.8 306.3h0M1688.2 306.8h0M1693.7 307.3h0M1692.6 307.8h0M1686.0 308.3h0M1686.0 308.8h0M1689.6 309.3h0M1687.2 309.8h0M1686.1 310.3h0M1683.0 310.8h0M1687.0 311.3h0M1690.8 311.8h0M1687.4 312.3h0M1689.3 312.8h0M1687.1 313.3h0M1685.4 313.8h0M1694.5 314.3h0M1694.1 314.8h0M1695.3 315.3h0M1689.4 315.8h0M1690.0 316.3h0M1691.2 316.8h0M1699.7 317.3h0M1695.2 317.8h0M1694.1 318.3h0M1693.3 318.8h0M1692.2 319.3h0M1689.6 319.8h0M1700.8 320.3h0M1697.5 320.8h0M1717.8 321.3h0M1746.0 321.8h0M1721.1 322.3h0M1719.5 322.8h0M1697.6 323.3h0M1697.7 323.8h0M1695.8 324.3h0M1699.2 324.8h0M1702.1 325.3h0M1701.7 325.8h0M1700.6 326.3h0M1697.8 326.8h0M1696.1 327.3h0M1699.8 327.8h0M1697.3 328.3h0M1694.7 328.8h0M1697.2 329.3h0M1691.7 329.8h0M1688.8 330.3h0M1696.6 330.8h0M1698.1 331.3h0M1690.1 331.8h0M1694.1 332.3h0M1695.4 332.8h0M1695.4 333.3h0M1693.5 333.8h0M1695.3 334.3h0M1695.2 334.8h0M1695.2 335.3h0M1697.1 335.8h0M1696.0 336.3h0M1693.1 336.8h0M1695.7 337.3h0M1699.1 337.8h0M1692.8 338.3h0M1693.0 338.8h0M1693.5 339.3h0M1695.7 339.8h0M1693.3 340.3h0M1697.9 340.8h0M1698.8 341.3h0M1695.3 341.8h0M1666.5 342.3h0M1643.0 342.8h0M1656.0 343.3h0M1691.5 343.8h0M1693.0 344.3h0M1691.9 344.8h0M1684.0 345.3h0M1695.4 345.8h0M1695.6 346.3h0M1688.6 346.8h0M1700.6 347.3h0M1716.0 347.8h0M1701.9 348.3h0M1695.8 348.8h0M1693.4 349.3h0M1695.8 349.8h0M1691.9 350.3h0M1692.8 350.8h0M1693.0 351.3h0M1691.9 351.8h0M1692.4 352.3h0M1690.7 352.8h0M1690.7 353.3h0M1694.2 353.8h0M1697.7 354.3h0M1696.6 354.8h0M1690.5 355.3h0M1692.9 355.8h0M1693.4 356.3h0M1695.0 356.8h0M1692.5 357.3h0M1696.0 357.8h0M1693.7 358.3h0M1695.2 358.8h0M1694.5 359.3h0M1689.2 359.8h0M1694.4 360.3h0M1698.4 360.8h0M1695.9 361.3h0M1696.1 361.8h0M1694.8 362.3h0M1691.8 362.8h0M1693.7 363.3h0M1703.2 363.8h0M1697.7 364.3h0M1695.6 364.8h0M1691.0 365.3h0M1693.5 365.8h0M1703.2 366.3h0M1716.0 366.8h0M1708.5 367.3h0M1704.0 367.8h0M1694.7 368.3h0M1693.0 368.8h0M1685.5 369.3h0M1695.9 369.8h0M1695.1 370.3h0M1694.0 370.8h0M1691.3 371.3h0M1694.4 371.8h0M1688.9 372.3h0M1695.2 372.8h0M1691.9 373.3h0M1692.2 373.8h0M1693.2 374.3h0M1693.8 374.8h0M1694.4 375.3h0M1698.1 375.8h0M1693.0 376.3h0M1695.5 376.8h0M1691.4 377.3h0M1693.8 377.8h0M1691.7 378.3h0M1704.0 378.8h0M1691.7 379.3h0M1695.3 379.8h0M1688.9 380.3h0M1688.7 380.8h0M1693.4 381.3h0M1695.1 381.8h0M1691.7 382.3h0M1693.8 382.8h0M1693.6 383.3h0M1696.0 383.8h0M1690.1 384.3h0M1690.1 384.8h0M1691.2 385.3h0M1689.2 385.8h0M1688.6 386.3h0M1684.4 386.8h0M1687.5 387.3h0M1685.0 387.8h0M1682.8 388.3h0M1684.3 388.8h0M1683.9 389.3h0M1684.4 389.8h0M1686.5 390.3h0M1681.4 390.8h0M1678.1 391.3h0M1689.5 391.8h0M1713.6 392.3h0M1688.3 392.8h0M1685.3 393.3h0M1670.3 393.8h0M1685.4 394.3h0M1684.1 394.8h0M1687.9 395.3h0M1718.5 395.8h0M1679.6 396.3h0M1683.6 396.8h0M1679.6 397.3h0M1682.8 397.8h0M1684.9 398.3h0M1686.8 398.8h0M1702.2 399.3h0M1685.0 399.8h0M1687.9 400.3h0M1680.4 400.8h0M1684.4 401.3h0M1686.5 401.8h0M1686.1 402.3h0M1705.6 402.8h0M1690.0 403.3h0M1685.3 403.8h0M1683.2 404.3h0M1686.8 404.8h0M1679.2 405.3h0M1689.0 405.8h0M1702.9 406.3h0M1688.1 406.8h0M1688.7 407.3h0M1685.8 407.8h0M1691.2 408.3h0M1691.7 408.8h0M1692.0 409.3h0M1721.2 409.8h0M1695.1 410.3h0M1691.5 410.8h0M1677.4 411.3h0M1689.5 411.8h0M1695.4 412.3h0M1689.1 412.8h0M1711.6 413.3h0M1692.9 413.8h0M1695.2 414.3h0M1669.0 414.8h0M1693.6 415.3h0M1680.3 415.8h0M1709.5 416.3h0M1739.0 416.8h0M1724.6 417.3h0M1709.8 417.8h0M1728.6 418.3h0M1698.3 418.8h0M1695.9 419.3h0M1663.0 419.8h0M1694.5 420.3h0M1700.7 420.8h0M1695.1 421.3h0M1728.0 421.8h0M1693.4 422.3h0M1698.0 422.8h0M1667.7 423.3h0M1696.4 423.8h0M1669.9 424.3h0M1693.4 424.8h0M1727.0 425.3h0M1693.1 425.8h0M1693.3 426.3h0M1669.9 426.8h0M1692.9 427.3h0M1694.3 427.8h0M1698.3 428.3h0M1729.8 428.8h0M1691.7 429.3h0M1691.7 429.8h0M1678.0 430.3h0M1698.4 430.8h0M1698.2 431.3h0M1697.8 431.8h0M1713.9 432.3h0M1702.9 432.8h0M1693.6 433.3h0M1661.4 433.8h0M1695.5 434.3h0M1696.2 434.8h0M1695.0 435.3h0M1729.2 435.8h0M1690.4 436.3h0M1693.3 436.8h0M1690.2 437.3h0M1690.7 437.8h0M1662.1 438.3h0M1695.5 438.8h0M1722.3 439.3h0M1698.6 439.8h0M1694.4 440.3h0M1673.3 440.8h0M1695.1 441.3h0M1681.7 441.8h0M1695.4 442.3h0M1720.2 442.8h0M1691.0 443.3h0M1693.9 443.8h0M1680.0 444.3h0M1689.0 444.8h0M1692.2 445.3h0M1695.2 445.8h0M1730.7 446.3h0M1694.6 446.8h0M1696.0 447.3h0M1666.5 447.8h0M1698.3 448.3h0M1681.0 448.8h0M1693.6 449.3h0M1704.3 449.8h0M1696.1 450.3h0M1693.8 450.8h0M1667.5 451.3h0M1693.8 451.8h0M1691.4 452.3h0M1691.2 452.8h0M1716.1 453.3h0M1688.7 453.8h0M1696.0 454.3h0M1683.7 454.8h0M1694.8 455.3h0M1690.0 455.8h0M1690.7 456.3h0M1707.5 456.8h0M1693.0 457.3h0M1685.7 457.8h0M1684.1 458.3h0M1688.5 458.8h0M1690.2 459.3h0M1690.9 459.8h0M1704.4 460.3h0M1694.1 460.8h0M1692.9 461.3h0M1690.7 461.8h0M1693.0 462.3h0M1675.7 462.8h0M1690.9 463.3h0M1718.9 463.8h0M1691.9 464.3h0M1694.6 464.8h0M1675.6 465.3h0M1692.6 465.8h0M1695.5 466.3h0M1695.2 466.8h0M1709.4 467.3h0M1694.2 467.8h0M1691.2 468.3h0M1686.0 468.8h0M1689.3 469.3h0M1697.1 469.8h0M1695.7 470.3h0M1708.5 470.8h0M1691.1 471.3h0M1694.8 471.8h0M1661.1 472.3h0M1696.6 472.8h0M1662.4 473.3h0M1692.7 473.8h0M1706.1 474.3h0M1692.4 474.8h0M1694.3 475.3h0M1686.7 475.8h0M1692.1 476.3h0M1669.2 476.8h0M1693.9 477.3h0M1706.4 477.8h0M1695.4 478.3h0M1691.9 478.8h0M1665.4 479.3h0M1700.3 479.8h0M1696.3 480.3h0M1697.2 480.8h0M1732.2 481.3h0M1697.7 481.8h0M1698.5 482.3h0M1688.0 482.8h0M1699.4 483.3h0M1686.8 483.8h0M1697.7 484.3h0M1730.9 484.8h0M1693.9 485.3h0M1693.9 485.8h0M1668.7 486.3h0M1694.6 486.8h0M1672.3 487.3h0M1697.2 487.8h0M1728.2 488.3h0M1700.3 488.8h0M1695.7 489.3h0M1691.7 489.8h0M1696.6 490.3h0M1694.0 490.8h0M1692.3 491.3h0M1716.6 491.8h0M1695.0 492.3h0M1693.2 492.8h0M1672.2 493.3h0M1695.0 493.8h0M1692.8 494.3h0M1690.6 494.8h0M1711.6 495.3h0M1700.2 495.8h0M1698.5 496.3h0M1682.9 496.8h0M1696.1 497.3h0M1696.7 497.8h0M1693.5 498.3h0M1714.8 498.8h0M1694.3 499.3h0M1691.0 499.8h0M1682.9 500.3h0M1695.7 500.8h0M1696.6 501.3h0M1691.2 501.8h0M1709.8 502.3h0M1690.0 502.8h0M1688.8 503.3h0M1673.1 503.8h0M1689.3 504.3h0M1695.6 504.8h0M1694.7 505.3h0M1727.1 505.8h0M1700.5 506.3h0M1695.8 506.8h0M1663.0 507.3h0M1693.1 507.8h0M1685.1 508.3h0M1697.4 508.8h0M1727.5 509.3h0M1692.4 509.8h0M1694.1 510.3h0M1667.5 510.8h0M1690.5 511.3h0M1682.1 511.8h0M1689.3 512.3h0M1719.8 512.8h0M1689.5 513.3h0M1694.2 513.8h0M1685.2 514.3h0M1690.8 514.8h0M1674.0 515.3h0M1695.6 515.8h0M1714.2 516.3h0M1693.9 516.8h0M1690.2 517.3h0M1687.0 517.8h0M1687.5 518.3h0M1683.5 518.8h0M1687.7 519.3h0M1717.5 519.8h0M1689.4 520.3h0M1685.1 520.8h0M1666.6 521.3h0M1673.8 521.8h0M1676.8 522.3h0M1678.8 522.8h0M1709.0 523.3h0M1666.8 523.8h0M1665.5 524.3h0M1664.7 524.8h0M1665.4 525.3h0M1665.1 525.8h0M1662.5 526.3h0M1662.2 526.8h0M1654.7 527.3h0M1657.2 527.8h0M1659.7 528.3h0M1657.0 528.8h0M1645.9 529.3h0M1637.3 529.8h0M1642.1 530.3h0M1647.0 530.8h0M1656.5 531.3h0M1655.4 531.8h0M1650.9 532.3h0M1656.3 532.8h0M1648.9 533.3h0M1650.3 533.8h0M1648.7 534.3h0M1646.0 534.8h0M1647.1 535.3h0M1650.6 535.8h0M1648.2 536.3h0M1650.4 536.8h0M1650.8 537.3h0M1652.4 537.8h0M1660.5 538.3h0M1664.4 538.8h0M1665.1 539.3h0M1663.0 539.8h0M1692.5 540.3h0M1719.0 540.8h0M1696.7 541.3h0M1682.3 541.8h0M1670.0 542.3h0M1666.3 542.8h0M1666.3 543.3h0M1668.1 543.8h0M1672.3 544.3h0M1678.8 544.8h0M1673.3 545.3h0M1675.6 545.8h0M1676.9 546.3h0M1673.6 546.8h0M1677.9 547.3h0M1677.6 547.8h0M1678.3 548.3h0M1682.8 548.8h0M1681.2 549.3h0M1679.0 549.8h0M1680.8 550.3h0M1682.1 550.8h0M1684.3 551.3h0M1680.3 551.8h0M1682.0 552.3h0M1682.1 552.8h0M1682.7 553.3h0M1683.1 553.8h0M1682.8 554.3h0M1684.4 554.8h0M1686.4 555.3h0M1683.7 555.8h0M1686.1 556.3h0M1687.7 556.8h0M1685.7 557.3h0M1689.8 557.8h0M1689.9 558.3h0M1684.2 558.8h0M1703.6 559.3h0M1726.0 559.8h0M1715.2 560.3h0M1701.5 560.8h0M1685.6 561.3h0M1685.8 561.8h0M1687.4 562.3h0M1686.5 562.8h0M1688.0 563.3h0M1688.9 563.8h0M1687.8 564.3h0M1688.4 564.8h0M1688.4 565.3h0M1683.8 565.8h0M1681.6 566.3h0M1679.7 566.8h0M1683.4 567.3h0M1683.3 567.8h0M1683.6 568.3h0M1679.7 568.8h0M1678.3 569.3h0M1680.6 569.8h0M1683.2 570.3h0M1681.6 570.8h0M1677.8 571.3h0M1679.4 571.8h0M1682.0 572.3h0M1682.7 572.8h0M1680.4 573.3h0M1684.7 573.8h0M1679.1 574.3h0M1682.8 574.8h0M1681.2 575.3h0M1681.3 575.8h0M1680.2 576.3h0M1682.0 576.8h0M1684.5 577.3h0M1682.8 577.8h0M1682.9 578.3h0M1686.8 578.8h0M1681.0 579.3h0M1684.7 579.8h0M1685.1 580.3h0M1686.1 580.8h0M1681.3 581.3h0M1680.7 581.8h0M1680.1 582.3h0M1676.7 582.8h0M1674.6 583.3h0M1681.2 583.8h0M1683.5 584.3h0M1681.1 584.8h0M1679.1 585.3h0M1679.6 585.8h0M1682.5 586.3h0M1679.5 586.8h0M1667.4 587.3h0M1659.0 587.8h0M1680.8 588.3h0M1667.2 588.8h0M1681.9 589.3h0M1682.1 589.8h0M1678.9 590.3h0M1676.2 590.8h0M1672.2 591.3h0M1676.5 591.8h0M1676.8 592.3h0M1680.8 592.8h0M1680.7 593.3h0M1679.4 593.8h0M1681.2 594.3h0M1671.8 594.8h0M1678.8 595.3h0M1677.0 595.8h0M1679.1 596.3h0M1680.2 596.8h0M1681.6 597.3h0M1680.2 597.8h0M1683.4 598.3h0M1686.6 598.8h0M1679.1 599.3h0M1680.0 599.8h0M1680.7 600.3h0M1683.1 600.8h0M1686.6 601.3h0M1683.2 601.8h0M1676.8 602.3h0M1674.8 602.8h0M1676.1 603.3h0M1677.1 603.8h0M1682.5 604.3h0M1696.0 604.8h0M1688.6 605.3h0M1681.0 605.8h0M1678.5 606.3h0M1678.8 606.8h0M1676.8 607.3h0M1679.6 607.8h0M1678.4 608.3h0M1684.1 608.8h0M1681.6 609.3h0M1679.7 609.8h0M1686.6 610.3h0M1682.8 610.8h0M1677.1 611.3h0M1672.5 611.8h0M1680.3 612.3h0M1680.0 612.8h0M1678.0 613.3h0M1674.0 613.8h0M1672.4 614.3h0M1672.2 614.8h0M1682.3 615.3h0M1679.7 615.8h0M1675.2 616.3h0M1675.2 616.8h0M1671.7 617.3h0M1677.7 617.8h0M1677.9 618.3h0M1674.2 618.8h0M1674.5 619.3h0M1674.7 619.8h0M1678.1 620.3h0M1681.5 620.8h0M1679.7 621.3h0M1679.6 621.8h0M1679.2 622.3h0M1674.6 622.8h0M1681.5 623.3h0M1677.2 623.8h0M1672.9 624.3h0M1675.5 624.8h0M1674.7 625.3h0M1677.8 625.8h0M1676.7 626.3h0M1671.7 626.8h0M1679.7 627.3h0M1681.4 627.8h0M1676.0 628.3h0M1681.1 628.8h0M1679.9 629.3h0M1680.6 629.8h0M1680.3 630.3h0M1674.5 630.8h0M1677.9 631.3h0M1675.9 631.8h0M1682.8 632.3h0M1674.7 632.8h0M1674.8 633.3h0M1680.8 633.8h0M1679.7 634.3h0M1678.5 634.8h0M1679.2 635.3h0M1681.5 635.8h0M1684.3 636.3h0M1678.5 636.8h0M1678.6 637.3h0M1677.7 637.8h0M1679.3 638.3h0M1679.4 638.8h0M1677.4 639.3h0M1680.6 639.8h0M1677.2 640.3h0M1678.4 640.8h0M1678.7 641.3h0M1678.8 641.8h0M1682.9 642.3h0M1683.9 642.8h0M1683.5 643.3h0M1682.7 643.8h0M1677.1 644.3h0M1680.8 644.8h0M1679.5 645.3h0M1679.1 645.8h0M1680.0 646.3h0M1677.7 646.8h0M1679.1 647.3h0M1680.2 647.8h0M1682.5 648.3h0M1682.6 648.8h0M1680.6 649.3h0M1679.4 649.8h0M1683.3 650.3h0M1681.8 650.8h0" stroke="#4d698c" stroke-width="2.7" stroke-linecap="round" fill="none"/><path d="M1657.4 142.3h0M1665.7 142.8h0M1663.9 143.3h0M1662.9 144.3h0M1658.5 145.3h0M1663.1 146.3h0M1657.0 147.8h0M1657.9 148.3h0M1699.5 149.3h0M1709.6 149.8h0M1705.4 150.3h0M1661.7 151.8h0M1729.7 152.3h0M1733.3 152.8h0M1661.2 154.3h0M1663.0 155.8h0M1660.4 157.3h0M1663.5 157.8h0M1659.4 158.3h0M1659.8 159.3h0M1658.4 159.8h0M1659.0 160.3h0M1661.2 161.8h0M1659.6 162.3h0M1658.1 162.8h0M1657.5 163.8h0M1657.0 164.3h0M1658.0 164.8h0M1658.5 165.3h0M1658.5 165.8h0M1649.3 166.3h0M1655.9 166.8h0M1659.3 167.3h0M1661.6 167.8h0M1656.4 168.3h0M1655.7 168.8h0M1657.3 169.8h0M1662.9 170.8h0M1660.3 171.3h0M1660.9 171.8h0M1658.0 172.3h0M1658.6 172.8h0M1660.8 173.3h0M1658.9 173.8h0M1663.9 174.3h0M1662.4 175.3h0M1660.4 175.8h0M1660.1 176.8h0M1661.5 177.3h0M1659.1 177.8h0M1663.8 178.3h0M1661.5 179.3h0M1669.8 179.8h0M1666.1 180.3h0M1668.1 180.8h0M1669.6 181.8h0M1663.4 182.3h0M1666.4 182.8h0M1661.3 184.3h0M1666.7 184.8h0M1665.4 185.3h0M1664.3 185.8h0M1671.6 187.8h0M1666.7 188.3h0M1668.9 188.8h0M1671.7 189.8h0M1673.4 190.8h0M1669.4 191.3h0M1670.5 193.8h0M1670.9 194.8h0M1670.2 195.8h0M1669.2 196.3h0M1676.8 196.8h0M1675.2 197.3h0M1675.7 198.3h0M1678.5 198.8h0M1670.4 199.3h0M1680.5 199.8h0M1677.5 200.3h0M1679.1 200.8h0M1678.0 201.3h0M1677.4 202.3h0M1681.4 202.8h0M1673.0 203.3h0M1679.6 203.8h0M1675.5 205.3h0M1651.1 205.8h0M1682.8 206.3h0M1682.9 206.8h0M1681.2 207.8h0M1677.1 208.3h0M1684.2 208.8h0M1680.0 209.3h0M1681.2 210.3h0M1681.5 210.8h0M1675.9 211.3h0M1684.8 212.3h0M1680.7 212.8h0M1680.5 213.8h0M1685.6 214.3h0M1683.3 214.8h0M1682.7 215.3h0M1679.9 215.8h0M1686.7 216.8h0M1685.4 217.3h0M1686.3 217.8h0M1678.2 218.3h0M1686.9 219.3h0M1686.2 219.8h0M1684.3 221.8h0M1686.4 222.8h0M1684.9 223.8h0M1689.7 224.3h0M1688.9 227.3h0M1687.3 228.3h0M1687.4 228.8h0M1689.5 229.3h0M1686.7 229.8h0M1681.3 230.3h0M1691.4 230.8h0M1688.7 231.3h0M1681.3 232.8h0M1685.7 233.3h0M1682.8 233.8h0M1685.0 234.3h0M1682.5 235.3h0M1682.8 235.8h0M1684.4 236.3h0M1683.3 237.3h0M1681.3 237.8h0M1687.7 238.3h0M1684.3 238.8h0M1683.4 239.3h0M1681.0 240.3h0M1681.6 240.8h0M1683.6 242.3h0M1684.9 243.3h0M1682.3 244.3h0M1686.6 244.8h0M1680.6 245.8h0M1687.5 246.3h0M1685.4 246.8h0M1681.0 247.3h0M1686.2 248.8h0M1677.7 249.3h0M1683.0 249.8h0M1680.1 250.3h0M1678.1 251.3h0M1681.3 253.3h0M1681.1 253.8h0M1681.4 254.3h0M1674.3 256.3h0M1680.4 257.8h0M1679.3 258.8h0M1680.1 259.3h0M1678.5 259.8h0M1685.7 260.8h0M1682.3 261.3h0M1685.5 262.3h0M1681.4 262.8h0M1678.0 263.8h0M1681.6 265.3h0M1680.8 265.8h0M1681.9 267.8h0M1679.2 268.3h0M1683.9 268.8h0M1683.7 269.8h0M1682.8 270.3h0M1681.5 271.8h0M1686.5 273.3h0M1686.9 273.8h0M1684.9 275.8h0M1683.4 276.3h0M1682.2 276.8h0M1683.6 277.3h0M1688.2 278.3h0M1683.4 278.8h0M1680.2 279.3h0M1681.8 280.3h0M1678.8 281.3h0M1681.3 281.8h0M1677.8 282.3h0M1680.7 283.8h0M1684.7 285.3h0M1681.9 285.8h0M1680.6 286.3h0M1682.8 287.8h0M1677.5 288.3h0M1676.2 289.3h0M1681.6 289.8h0M1679.6 290.3h0M1682.5 290.8h0M1689.7 291.3h0M1686.6 292.3h0M1689.4 292.8h0M1692.8 293.3h0M1696.3 294.3h0M1697.6 294.8h0M1701.5 295.8h0M1705.5 296.3h0M1711.7 297.3h0M1714.9 297.8h0M1715.7 298.3h0M1721.5 299.3h0M1722.0 299.8h0M1724.5 300.3h0M1733.7 301.3h0M1733.2 301.8h0M1741.2 302.3h0M1746.2 303.3h0M1744.6 303.8h0M1753.9 304.8h0M1752.8 305.3h0M1755.4 305.8h0M1755.5 306.3h0M1749.8 307.3h0M1739.8 307.8h0M1736.7 308.3h0M1727.3 309.3h0M1718.6 309.8h0M1743.0 310.3h0M1697.1 311.8h0M1700.8 312.3h0M1699.3 312.8h0M1701.7 313.3h0M1701.3 314.8h0M1700.5 316.8h0M1701.8 317.8h0M1700.2 318.3h0M1701.7 318.8h0M1699.8 319.3h0M1696.7 320.3h0M1701.6 321.3h0M1700.3 322.3h0M1698.3 323.8h0M1703.8 326.8h0M1699.6 327.3h0M1693.1 327.8h0M1697.7 328.8h0M1697.7 331.8h0M1697.2 332.3h0M1699.8 333.3h0M1699.0 335.3h0M1694.5 335.8h0M1695.6 336.8h0M1692.9 337.8h0M1693.9 338.3h0M1692.2 338.8h0M1699.8 339.8h0M1696.1 341.3h0M1691.6 342.3h0M1695.1 342.8h0M1694.3 345.3h0M1695.1 347.3h0M1695.2 347.8h0M1699.3 348.8h0M1692.9 349.3h0M1694.0 350.3h0M1693.0 350.8h0M1693.4 351.3h0M1691.0 352.8h0M1689.3 353.3h0M1693.0 354.3h0M1693.3 354.8h0M1697.0 355.3h0M1689.8 356.3h0M1695.0 356.8h0M1697.5 357.3h0M1689.9 357.8h0M1695.5 358.3h0M1695.6 358.8h0M1693.8 359.3h0M1694.4 359.8h0M1694.8 360.3h0M1694.0 360.8h0M1693.0 361.8h0M1690.8 363.3h0M1691.6 363.8h0M1692.5 364.3h0M1695.5 364.8h0M1695.3 365.3h0M1689.5 365.8h0M1696.1 366.3h0M1689.4 366.8h0M1698.0 367.3h0M1689.5 367.8h0M1712.7 368.3h0M1699.8 368.8h0M1692.4 369.3h0M1688.7 369.8h0M1691.2 370.3h0M1689.5 370.8h0M1688.9 371.3h0M1691.1 371.8h0M1687.9 372.8h0M1686.8 373.3h0M1690.0 373.8h0M1689.9 374.3h0M1691.6 375.3h0M1707.9 376.3h0M1692.6 376.8h0M1686.9 377.8h0M1695.4 378.3h0M1691.7 379.3h0M1687.1 380.3h0M1689.2 380.8h0M1684.1 381.3h0M1690.8 382.3h0M1688.1 382.8h0M1687.2 383.3h0M1689.6 383.8h0M1693.9 384.8h0M1689.0 385.3h0M1689.1 386.3h0M1685.8 386.8h0M1689.2 388.3h0M1682.9 388.8h0M1681.9 390.8h0M1684.0 392.3h0M1684.6 392.8h0M1688.1 394.3h0M1682.3 394.8h0M1686.7 395.3h0M1682.9 395.8h0M1681.7 397.3h0M1683.3 397.8h0M1683.7 398.3h0M1688.9 400.8h0M1681.6 401.3h0M1685.5 401.8h0M1689.7 402.8h0M1676.0 403.3h0M1689.7 403.8h0M1687.8 404.8h0M1681.4 405.3h0M1682.5 405.8h0M1687.3 406.8h0M1681.6 407.8h0M1681.9 408.3h0M1687.9 408.8h0M1688.2 409.3h0M1686.5 410.8h0M1692.2 411.3h0M1692.6 411.8h0M1691.4 414.3h0M1686.8 414.8h0M1692.7 415.3h0M1694.5 416.3h0M1691.7 416.8h0M1698.5 417.8h0M1685.2 419.3h0M1670.6 420.8h0M1692.6 422.3h0M1686.9 423.8h0M1691.7 424.8h0M1698.2 425.3h0M1701.9 425.8h0M1695.3 426.3h0M1688.4 427.3h0M1699.0 427.8h0M1684.7 428.3h0M1686.1 428.8h0M1691.6 429.3h0M1682.8 429.8h0M1696.4 430.3h0M1686.6 430.8h0M1689.1 432.8h0M1687.9 434.3h0M1702.9 434.8h0M1685.7 436.3h0M1696.0 436.8h0M1683.9 438.8h0M1685.0 439.3h0M1690.1 439.8h0M1687.4 440.8h0M1687.7 441.3h0M1687.2 442.8h0M1688.0 443.3h0M1682.6 444.3h0M1682.6 445.3h0M1681.8 445.8h0M1690.9 447.8h0M1694.3 448.8h0M1701.0 450.3h0M1682.4 451.3h0M1681.2 451.8h0M1678.2 453.3h0M1691.6 454.8h0M1676.9 456.3h0M1687.0 457.3h0M1690.1 459.8h0M1684.3 460.3h0M1691.1 461.3h0M1688.9 462.8h0M1693.8 463.8h0M1696.1 464.8h0M1700.6 465.3h0M1697.1 465.8h0M1689.2 466.3h0M1700.2 466.8h0M1691.3 467.3h0M1692.2 467.8h0M1695.8 468.3h0M1694.1 470.3h0M1700.4 470.8h0M1698.0 471.8h0M1694.2 472.8h0M1697.7 473.8h0M1697.9 474.3h0M1690.5 474.8h0M1705.1 475.3h0M1695.1 475.8h0M1691.6 476.3h0M1696.1 476.8h0M1706.0 478.3h0M1693.9 478.8h0M1705.5 479.8h0M1701.9 480.3h0M1691.6 480.8h0M1696.1 481.3h0M1686.3 481.8h0M1691.2 483.3h0M1684.8 483.8h0M1694.4 484.3h0M1685.4 485.3h0M1692.4 485.8h0M1687.7 486.3h0M1683.4 486.8h0M1689.1 487.3h0M1699.3 487.8h0M1688.2 489.8h0M1693.2 490.3h0M1676.2 490.8h0M1688.8 491.8h0M1692.1 494.3h0M1697.8 494.8h0M1702.0 495.3h0M1689.4 496.3h0M1690.9 496.8h0M1690.6 497.3h0M1676.9 497.8h0M1689.5 498.3h0M1677.1 500.3h0M1692.4 500.8h0M1684.8 501.8h0M1693.6 502.3h0M1700.9 502.8h0M1692.5 503.3h0M1653.4 504.3h0M1689.2 504.8h0M1688.5 505.3h0M1701.7 505.8h0M1695.9 506.8h0M1696.1 507.8h0M1690.1 508.8h0M1689.1 510.3h0M1692.7 511.3h0M1684.4 512.8h0M1688.9 513.8h0M1682.4 514.8h0M1660.9 516.3h0M1687.4 516.8h0M1687.4 517.8h0M1684.6 518.3h0M1688.8 519.8h0M1689.2 520.3h0M1700.7 521.8h0M1686.3 522.3h0M1689.9 522.8h0M1686.4 524.3h0M1687.9 524.8h0M1679.0 525.3h0M1678.6 525.8h0M1672.1 526.3h0M1679.2 526.8h0M1669.2 527.3h0M1665.0 527.8h0M1668.8 528.3h0M1663.7 529.3h0M1648.4 529.8h0M1655.5 530.8h0M1650.8 531.3h0M1654.8 532.3h0M1654.9 533.3h0M1652.3 534.3h0M1658.7 535.3h0M1657.4 539.3h0M1659.1 539.8h0M1663.5 540.8h0M1660.6 541.3h0M1670.4 543.8h0M1670.1 544.3h0M1676.1 544.8h0M1674.2 545.3h0M1691.2 545.8h0M1677.2 546.8h0M1673.2 548.3h0M1679.8 548.8h0M1674.8 549.3h0M1681.2 549.8h0M1685.2 550.3h0M1677.6 550.8h0M1676.7 551.3h0M1683.7 551.8h0M1678.8 552.8h0M1683.8 553.3h0M1679.3 554.3h0M1686.4 556.8h0M1685.5 557.3h0M1683.4 558.3h0M1687.0 559.3h0M1691.3 559.8h0M1692.3 560.3h0M1701.1 562.3h0M1691.0 563.3h0M1681.2 563.8h0M1683.7 564.8h0M1681.8 565.8h0M1666.8 567.3h0M1680.8 567.8h0M1682.8 568.3h0M1678.1 568.8h0M1682.5 572.8h0M1681.4 573.8h0M1682.4 574.8h0M1681.4 576.3h0M1683.2 576.8h0M1680.8 577.3h0M1681.5 577.8h0M1679.8 579.8h0M1674.0 581.3h0M1677.7 581.8h0M1680.2 582.3h0M1697.7 583.3h0M1675.6 584.8h0M1678.1 585.3h0M1678.7 585.8h0M1677.2 586.3h0M1677.7 587.3h0M1681.8 588.3h0M1676.3 588.8h0M1680.1 589.3h0M1676.0 591.3h0M1676.6 591.8h0M1682.7 592.8h0M1681.0 593.3h0M1674.7 595.3h0M1678.2 596.3h0M1680.9 597.3h0M1675.8 597.8h0M1677.6 598.3h0M1674.6 599.3h0M1676.1 599.8h0M1675.0 600.3h0M1674.9 600.8h0M1673.5 601.3h0M1672.7 601.8h0M1677.3 602.8h0M1678.3 603.3h0M1674.9 603.8h0M1675.2 604.3h0M1678.4 605.3h0M1680.5 605.8h0M1676.8 606.8h0M1676.1 607.3h0M1680.7 607.8h0M1675.3 608.8h0M1676.8 609.3h0M1681.2 609.8h0M1678.2 610.3h0M1678.3 610.8h0M1677.1 611.8h0M1676.3 612.3h0M1677.6 615.3h0M1673.6 616.3h0M1678.0 616.8h0M1681.8 618.3h0M1680.8 619.3h0M1678.7 619.8h0M1678.4 620.3h0M1679.3 620.8h0M1678.4 621.3h0M1680.3 621.8h0M1668.7 623.3h0M1675.3 624.8h0M1678.1 625.3h0M1675.1 626.8h0M1676.3 627.3h0M1678.4 627.8h0M1679.1 628.3h0M1679.1 630.3h0M1675.2 630.8h0M1677.4 631.8h0M1678.7 632.3h0M1678.4 632.8h0M1677.1 633.3h0M1675.3 633.8h0M1680.7 634.3h0M1682.5 635.3h0M1674.3 635.8h0M1676.7 636.3h0M1683.2 637.3h0M1679.8 639.8h0M1676.0 640.8h0M1680.3 641.3h0M1680.7 642.8h0M1682.3 644.3h0M1681.8 645.3h0M1683.1 645.8h0M1684.7 647.3h0M1687.0 648.8h0M1685.8 649.3h0M1681.8 650.3h0" stroke="#dd8f6d" stroke-width="2.7" stroke-linecap="round" fill="none"/></g><defs><clipPath id="cA"><rect x="1248.5" y="141" width="190.5" height="510.5"/></clipPath><clipPath id="cB"><rect x="1442" y="141" width="191.5" height="510.5"/></clipPath><clipPath id="cC"><rect x="1636.3" y="141" width="190.70000000000005" height="510.5"/></clipPath></defs><rect x="1248.5" y="141" width="190.5" height="510.5" fill="none" stroke="#20242c" stroke-width="1.5"/><rect x="1442" y="141" width="191.5" height="510.5" fill="none" stroke="#20242c" stroke-width="1.5"/><rect x="1636.3" y="141" width="190.70000000000005" height="510.5" fill="none" stroke="#20242c" stroke-width="1.5"/><path d="M1325 134.5 h38" stroke="#4d698c" stroke-width="1.2"/><path d="M1518 134.5 h38" stroke="#4d698c" stroke-width="1.2"/><path d="M1713 134.5 h38" stroke="#4d698c" stroke-width="1.2"/><rect x="1838" y="369" width="20" height="6.5" fill="#4d698c"/><rect x="1838" y="387" width="20" height="6.5" fill="#dd8f6d"/></svg><div class="t b" style="top:112.0px;line-height:14px;left:1143px;width:400px;text-align:center;color:#111">Volve A</div><div class="t b" style="top:112.0px;line-height:14px;left:1337px;width:400px;text-align:center;color:#111">Volve B</div><div class="t b" style="top:112.0px;line-height:14px;left:1531px;width:400px;text-align:center;color:#111">Volve C</div><div class="t ch" style="top:127.5px;line-height:14px;right:532.5px;font-size:10.5px">93.9</div><div class="t ch" style="top:127.5px;line-height:14px;left:1364.5px;font-size:10.5px">274.38</div><div class="t ch" style="top:127.5px;line-height:14px;right:339.5px;font-size:10.5px">0</div><div class="t ch" style="top:127.5px;line-height:14px;left:1557.5px;font-size:10.5px">308.69</div><div class="t ch" style="top:127.5px;line-height:14px;right:145px;font-size:10.5px">78.09</div><div class="t ch" style="top:127.5px;line-height:14px;left:1752.5px;font-size:10.5px">289.66</div><div class="t ch" style="top:218.8px;line-height:14px;left:1143px;width:400px;text-align:center;font-size:10.5px;color:#333">3600</div><div class="t ch" style="top:393.3px;line-height:14px;left:1143px;width:400px;text-align:center;font-size:10.5px;color:#333">3800</div><div class="t ch" style="top:567.9px;line-height:14px;left:1143px;width:400px;text-align:center;font-size:10.5px;color:#333">4000</div><div class="t ch" style="top:289.5px;line-height:14px;left:1337px;width:400px;text-align:center;font-size:10.5px;color:#333">3500</div><div class="t ch" style="top:534.5px;line-height:14px;left:1337px;width:400px;text-align:center;font-size:10.5px;color:#333">4000</div><div class="t ch" style="top:162.0px;line-height:14px;left:1531px;width:400px;text-align:center;font-size:10.5px;color:#333">4200</div><div class="t ch" style="top:285.5px;line-height:14px;left:1531px;width:400px;text-align:center;font-size:10.5px;color:#333">4300</div><div class="t ch" style="top:408.8px;line-height:14px;left:1531px;width:400px;text-align:center;font-size:10.5px;color:#333">4400</div><div class="t ch" style="top:532.2px;line-height:14px;left:1531px;width:400px;text-align:center;font-size:10.5px;color:#333">4500</div><div class="" style="position:absolute;left:1246.5px;top:665px;width:640px;height:361px;box-sizing:border-box;border:1px solid #5a6069;border-radius:7px 7px 0 0;background:linear-gradient(#c2d2e6,#d1deee 8px,#dae5f2 18px,#dee8f4 28px,#dbe6f4)"></div><svg style="left:1257.0px;top:676.5px" width="13.7" height="13.0" viewBox="0 0 31.4 29.7"><path d="M11.1 4.2 L15 0 L31.2 14.7 L15.3 29.7 L10.8 25.2 L19.8 14.8 Z" fill="#f0941f"/><rect x="1.6" y="11.4" width="6.8" height="6.8" rx="1.8" transform="rotate(45 5 14.8)" fill="#f8b48c"/></svg><div class="t " style="top:676.0px;line-height:14px;left:1275px;font-size:12px;letter-spacing:-0.24px;color:#9aa0a8">Experienced Eye - Actual vs Predicted Multi-Well Crossplot (linked)</div><div class="" style="position:absolute;left:1757.0px;top:674px;width:30.5px;height:16.5px;box-sizing:border-box;border:1px solid #8f9bb0;border-radius:3px;background:linear-gradient(#e3ebf6,#ccd9ea)"></div><div class="" style="position:absolute;left:1767.2px;top:683.0px;width:10px;height:3.5px;box-sizing:border-box;border:1px solid #707a8c;background:#fff;border-radius:1px"></div><div class="" style="position:absolute;left:1789.7px;top:674px;width:30.5px;height:16.5px;box-sizing:border-box;border:1px solid #8f9bb0;border-radius:3px;background:linear-gradient(#e3ebf6,#ccd9ea)"></div><div class="" style="position:absolute;left:1799.4px;top:677.5px;width:11px;height:9px;box-sizing:border-box;border:1.5px solid #707a8c;background:#fff;border-radius:1px"></div><div class="" style="position:absolute;left:1802.4px;top:680.5px;width:5px;height:3.5px;box-sizing:border-box;border:1px solid #707a8c"></div><div class="" style="position:absolute;left:1822.4px;top:674px;width:30.5px;height:16.5px;box-sizing:border-box;border:1px solid #8f9bb0;border-radius:3px;background:linear-gradient(#e3ebf6,#ccd9ea)"></div><svg style="left:1832.1000000000001px;top:677.5px" width="11" height="10" viewBox="0 0 11 10"><path d="M1.5 1 L9.5 9 M9.5 1 L1.5 9" stroke="#67728a" stroke-width="3.6"/><path d="M1.5 1 L9.5 9 M9.5 1 L1.5 9" stroke="#fff" stroke-width="1.5"/></svg><div class="" style="position:absolute;left:1254px;top:694.5px;width:620px;height:324.5px;background:#fefefc"></div><svg style="left:0;top:0" width="1856" height="1080" viewBox="0 0 1856 1080"><path d="M1373.9 726.5 V981.3" stroke="#e6e6ea"/><path d="M1297.5 939.7 H1769.3" stroke="#e6e6ea"/><path d="M1450.4 726.5 V981.3" stroke="#e6e6ea"/><path d="M1297.5 898.2 H1769.3" stroke="#e6e6ea"/><path d="M1526.8 726.5 V981.3" stroke="#e6e6ea"/><path d="M1297.5 856.6 H1769.3" stroke="#e6e6ea"/><path d="M1603.2 726.5 V981.3" stroke="#e6e6ea"/><path d="M1297.5 815.0 H1769.3" stroke="#e6e6ea"/><path d="M1679.7 726.5 V981.3" stroke="#e6e6ea"/><path d="M1297.5 773.5 H1769.3" stroke="#e6e6ea"/><path d="M1756.1 726.5 V981.3" stroke="#e6e6ea"/><path d="M1297.5 731.9 H1769.3" stroke="#e6e6ea"/><path d="M1297.5 981.3 L1769.3 726.5" stroke="#8a8a8a" stroke-width="0.9"/><path d="M1478.4 875.9h0M1488.6 864.1h0M1491.4 868.2h0M1475.6 876.2h0M1478.9 874.4h0M1500.4 858.1h0M1476.8 869.7h0M1478.4 873.1h0M1500.9 854.7h0M1491.9 866.1h0M1485.0 867.6h0M1488.9 875.3h0M1493.1 869.7h0M1482.4 867.3h0M1478.6 875.5h0M1496.5 859.0h0M1493.3 861.3h0M1488.9 860.9h0M1497.3 857.5h0M1489.9 861.5h0M1501.8 858.4h0M1480.5 874.8h0M1490.1 868.7h0M1488.1 868.9h0M1484.6 873.9h0M1491.1 867.2h0M1481.3 871.7h0M1496.9 860.1h0M1498.7 861.4h0M1478.4 881.2h0M1487.7 867.5h0M1482.5 869.6h0M1477.1 869.6h0M1499.5 857.1h0M1486.7 870.5h0M1478.9 875.9h0M1493.4 855.1h0M1480.4 868.8h0M1499.6 851.8h0M1480.8 862.8h0M1475.7 878.4h0M1480.4 870.4h0M1484.3 867.4h0M1487.7 864.8h0M1499.8 857.0h0M1494.0 862.2h0M1484.2 868.7h0M1475.3 881.5h0M1479.2 873.4h0M1502.2 860.8h0M1487.5 866.8h0M1493.8 865.1h0M1476.3 872.0h0M1475.8 871.5h0M1498.1 859.1h0M1491.0 863.7h0M1483.3 869.6h0M1483.6 871.7h0M1477.3 874.6h0M1479.6 874.5h0M1475.5 873.5h0M1497.9 860.4h0M1487.7 864.8h0M1478.3 878.8h0M1495.2 858.6h0M1480.2 875.2h0M1476.5 877.5h0M1491.3 865.6h0M1499.5 861.8h0M1475.6 873.9h0M1497.0 863.5h0M1480.1 876.6h0M1477.4 877.4h0M1475.3 869.8h0M1482.9 870.1h0M1494.8 867.4h0M1488.4 866.7h0M1498.3 866.7h0M1480.8 864.2h0M1483.5 876.2h0M1481.9 868.9h0M1501.7 855.7h0M1500.7 864.7h0M1484.2 868.2h0M1486.8 863.6h0M1483.5 868.0h0M1495.4 861.1h0M1475.9 870.9h0M1476.7 873.7h0M1485.9 866.9h0M1481.6 871.7h0M1498.1 857.8h0M1495.2 866.2h0M1489.8 862.5h0M1493.0 865.8h0M1493.9 867.7h0M1496.3 860.0h0M1500.4 851.9h0M1478.9 868.9h0M1492.1 866.5h0M1478.8 870.1h0M1487.0 869.5h0M1496.5 862.0h0M1499.4 859.1h0M1495.7 871.6h0M1475.8 874.1h0M1484.7 873.4h0M1479.3 875.5h0M1502.3 863.8h0M1478.8 879.3h0M1481.6 875.1h0M1484.7 865.7h0M1476.5 867.5h0M1498.8 860.0h0M1492.3 859.6h0M1479.2 873.8h0M1488.5 874.6h0M1477.0 873.5h0M1491.6 862.7h0M1481.2 873.2h0" stroke="#3e4053" stroke-width="2.6" stroke-linecap="round" fill="none"/><path d="M1527.2 884.2h0M1544.2 872.8h0M1527.3 886.6h0M1531.7 876.1h0M1514.8 882.0h0M1532.3 873.9h0M1510.0 886.3h0M1522.2 890.0h0M1564.1 865.1h0M1525.6 883.7h0M1525.0 885.9h0M1550.0 864.5h0M1562.4 861.9h0M1526.6 881.4h0M1531.5 876.7h0M1552.2 872.0h0M1556.9 869.4h0M1546.0 874.9h0M1519.4 882.9h0M1519.5 883.5h0M1554.8 864.3h0M1551.7 863.8h0M1563.3 867.9h0M1556.1 868.3h0M1534.2 876.7h0M1516.6 892.0h0M1562.9 864.7h0M1551.0 864.4h0M1543.7 867.8h0M1550.2 864.6h0M1532.0 878.3h0M1529.5 880.6h0M1543.6 867.9h0M1538.0 876.9h0M1551.8 866.8h0M1565.7 855.5h0M1560.3 865.4h0M1532.2 880.9h0M1531.2 878.9h0M1565.1 858.8h0M1532.6 876.1h0M1557.4 864.7h0M1514.1 885.4h0M1536.0 883.0h0M1540.0 877.9h0M1557.9 864.4h0M1562.1 866.7h0M1517.8 891.4h0M1546.2 876.1h0M1546.9 874.5h0M1517.7 886.6h0M1559.4 868.5h0M1542.3 872.1h0M1567.3 853.2h0M1519.9 885.3h0M1540.6 868.7h0M1528.2 879.2h0M1547.7 875.0h0M1545.6 872.5h0M1539.8 878.5h0M1528.3 877.2h0M1539.3 879.5h0M1531.2 873.3h0M1562.9 860.1h0M1536.7 884.4h0M1537.5 872.3h0M1524.3 876.0h0M1524.0 885.9h0M1566.8 856.4h0M1527.7 888.2h0M1561.6 862.1h0M1544.8 878.7h0M1568.4 857.6h0M1518.5 892.9h0M1566.0 871.8h0M1555.7 864.6h0M1543.2 863.2h0M1551.8 870.7h0M1552.6 864.3h0M1535.9 876.0h0M1547.3 871.9h0M1522.4 880.8h0M1509.8 883.1h0M1549.8 874.4h0M1537.5 873.3h0M1563.8 860.6h0M1524.6 888.2h0M1558.5 858.1h0M1568.8 851.3h0M1563.4 866.2h0M1567.4 852.9h0M1518.2 885.3h0M1518.6 886.1h0M1522.4 877.1h0M1530.6 878.2h0M1515.5 885.6h0M1517.7 879.5h0M1509.6 884.7h0M1565.5 857.4h0M1530.5 885.0h0M1546.7 877.4h0M1536.3 871.6h0M1553.9 871.0h0M1557.8 864.5h0M1531.9 883.0h0M1541.2 874.5h0M1514.4 892.8h0M1525.9 874.8h0M1522.1 887.8h0M1527.3 881.4h0M1528.3 881.1h0M1543.6 867.4h0M1528.8 886.0h0M1528.4 880.4h0M1559.3 865.2h0M1509.2 888.0h0M1508.8 888.5h0M1512.0 890.7h0M1561.4 862.3h0M1547.2 872.1h0M1553.0 865.7h0M1567.0 860.8h0M1521.8 886.4h0M1564.7 861.7h0M1523.3 881.4h0M1540.2 864.8h0M1550.1 871.1h0M1557.2 864.1h0M1523.6 876.7h0M1537.6 884.2h0M1511.2 896.4h0M1526.1 886.5h0M1568.4 860.1h0M1563.8 851.9h0M1544.1 870.6h0M1556.6 860.7h0M1563.6 863.0h0M1528.8 890.4h0M1568.4 869.2h0M1535.9 872.2h0M1518.2 884.8h0M1540.9 879.3h0M1544.8 867.2h0M1550.8 875.1h0M1549.5 864.7h0M1511.0 883.3h0M1547.5 873.6h0M1564.8 866.1h0M1549.4 865.9h0M1568.1 864.4h0M1539.7 870.9h0M1558.0 870.0h0M1517.0 882.8h0M1563.2 861.9h0M1535.1 878.6h0M1562.1 866.6h0M1528.1 879.5h0M1546.6 878.8h0M1560.2 865.0h0M1552.0 869.8h0" stroke="#3e4053" stroke-width="2.6" stroke-linecap="round" fill="none"/><path d="M1479.6 901.8h0M1486.3 894.1h0M1480.7 898.7h0M1477.9 897.7h0M1481.2 899.4h0M1486.0 886.1h0M1485.4 900.2h0M1483.1 896.3h0M1485.8 895.4h0M1484.1 894.2h0M1483.1 895.3h0M1480.1 896.2h0M1476.7 894.4h0M1483.8 904.8h0M1482.6 897.6h0M1486.7 902.7h0M1478.8 897.5h0M1485.6 902.8h0M1477.5 903.8h0M1486.4 896.9h0M1487.0 889.5h0M1475.4 896.7h0M1478.8 897.2h0M1487.0 889.4h0M1486.7 901.3h0M1483.0 908.0h0M1476.5 901.4h0M1474.9 901.1h0M1477.9 892.8h0M1486.4 886.0h0" stroke="#3e4053" stroke-width="2.6" stroke-linecap="round" fill="none"/><polygon points="1469.9,901.7 1474.5,890.0 1479.1,880.9 1489.8,870.1 1505.1,858.4 1528.0,846.8 1551.0,836.8 1581.5,821.9 1604.5,813.5 1607.1,829.6 1587.2,846.2 1564.3,862.8 1541.3,877.8 1518.4,889.4 1495.5,901.9 1480.2,909.4 1468.0,909.4" fill="#4fb7c8"/><path d="M1496.7 864.7h0M1596.3 831.5h0M1582.1 851.2h0M1508.9 853.2h0M1536.5 853.9h0M1596.1 830.5h0M1490.9 871.2h0M1592.8 822.6h0M1588.8 834.8h0M1563.5 837.5h0M1557.2 840.1h0M1557.1 864.4h0M1535.7 851.7h0M1541.4 839.9h0M1488.6 879.4h0M1538.5 846.6h0M1555.2 830.3h0M1527.2 851.8h0M1556.2 852.1h0M1523.2 864.8h0M1575.7 828.9h0M1562.6 841.6h0M1476.4 910.8h0M1570.3 860.4h0M1499.5 891.2h0M1475.6 887.0h0M1479.8 904.6h0M1504.7 885.9h0M1532.9 848.0h0M1505.5 894.5h0M1489.3 896.8h0M1570.3 852.4h0M1511.4 895.2h0M1587.1 824.2h0M1494.4 892.1h0M1557.8 853.9h0M1509.2 882.9h0M1583.1 851.0h0M1551.1 838.6h0M1556.1 866.6h0M1476.7 903.3h0M1567.4 835.3h0M1508.8 882.4h0M1565.7 845.1h0M1582.4 841.7h0M1479.9 891.5h0M1469.6 907.4h0M1568.5 845.5h0M1602.6 837.5h0M1591.4 846.6h0M1520.0 869.0h0M1580.5 824.4h0M1470.3 893.4h0M1473.3 891.1h0M1541.3 857.9h0M1533.3 856.1h0M1579.1 830.7h0M1493.0 874.5h0M1523.9 844.3h0M1606.1 826.0h0M1501.9 881.6h0M1515.7 858.5h0M1545.2 869.8h0M1607.0 831.6h0M1486.8 871.9h0M1558.0 870.5h0M1517.0 852.4h0M1515.1 852.4h0M1495.9 898.2h0M1524.3 855.2h0M1540.3 869.2h0M1514.0 883.3h0M1530.1 841.8h0M1549.5 837.6h0M1583.5 825.1h0M1538.2 863.4h0M1512.6 850.3h0M1601.4 822.3h0M1485.6 869.6h0M1472.1 895.5h0M1592.7 844.5h0M1497.1 868.5h0M1483.2 877.8h0M1513.0 855.1h0M1507.2 870.3h0M1508.8 897.0h0M1583.4 821.3h0M1500.3 883.8h0M1481.0 905.3h0M1490.8 899.1h0M1599.5 834.3h0M1519.1 855.0h0M1509.6 894.9h0M1571.5 825.1h0M1597.1 841.7h0M1530.8 853.7h0M1577.5 848.6h0M1496.9 881.7h0M1508.2 890.7h0M1540.5 841.1h0M1493.4 900.1h0M1498.3 883.0h0M1487.4 883.8h0M1496.6 884.7h0M1581.5 846.5h0M1574.3 848.4h0M1479.0 877.9h0M1508.0 893.3h0M1562.9 867.3h0M1584.8 819.2h0M1538.1 842.8h0M1563.5 838.9h0M1493.5 885.8h0M1572.2 823.4h0M1578.5 841.0h0M1516.0 894.3h0M1493.3 887.5h0M1471.0 901.6h0M1548.6 853.0h0M1549.0 837.8h0M1468.8 912.1h0M1532.2 846.9h0M1597.6 825.9h0M1470.7 897.9h0M1481.6 896.3h0M1473.3 905.0h0M1520.2 877.0h0M1512.9 883.7h0M1586.4 834.8h0M1474.1 895.8h0M1488.9 872.9h0M1597.5 836.6h0M1469.9 904.7h0M1496.2 881.3h0M1514.2 857.4h0M1468.7 901.9h0M1499.8 874.7h0M1544.5 849.5h0M1546.4 858.7h0M1545.4 843.1h0M1551.8 838.6h0M1546.3 853.4h0M1471.2 910.6h0M1552.4 856.2h0M1541.6 869.7h0M1491.0 899.7h0M1517.8 880.0h0M1493.5 870.1h0M1586.1 838.8h0M1498.8 884.4h0M1484.5 895.5h0M1574.6 852.4h0M1569.0 840.5h0M1583.5 837.8h0M1555.9 832.2h0M1517.4 865.1h0M1525.7 844.1h0M1537.4 844.4h0M1543.5 858.4h0M1598.7 840.4h0M1497.0 895.4h0M1570.1 858.1h0M1469.8 899.5h0M1487.7 903.9h0M1598.6 821.6h0M1495.2 891.5h0M1530.9 864.9h0M1594.0 820.4h0M1552.4 861.8h0M1527.6 880.9h0M1559.7 857.8h0M1604.2 810.7h0M1598.1 824.7h0M1486.6 898.1h0M1481.9 906.8h0M1499.9 900.5h0M1482.4 898.9h0M1569.4 838.5h0M1580.6 838.0h0M1481.9 880.0h0M1474.7 883.0h0M1504.7 874.1h0M1557.4 856.8h0M1570.4 830.7h0M1523.6 886.8h0M1550.0 843.0h0M1594.2 816.3h0M1588.1 822.6h0M1479.4 909.4h0M1561.4 844.4h0M1571.4 829.8h0M1592.5 832.6h0M1517.6 854.5h0M1483.7 905.0h0M1525.5 865.2h0M1510.9 871.3h0M1514.2 858.8h0M1575.6 842.8h0M1552.0 863.8h0M1556.3 841.7h0M1552.1 870.0h0M1482.0 897.8h0M1473.3 900.3h0M1514.4 858.8h0M1583.1 837.8h0M1551.5 850.8h0M1573.8 833.4h0M1547.5 847.9h0M1572.7 822.7h0M1607.2 822.4h0M1561.5 844.8h0M1585.1 851.3h0M1603.3 831.8h0M1565.7 855.8h0M1577.2 849.6h0M1475.3 896.8h0M1471.3 908.7h0M1595.1 825.8h0M1493.5 869.8h0M1502.2 899.0h0M1481.3 903.3h0M1549.3 854.9h0M1470.8 912.2h0M1575.0 853.7h0M1501.3 876.0h0M1566.2 849.2h0M1593.1 816.1h0M1557.9 846.9h0M1518.5 858.1h0M1547.8 862.4h0M1584.0 839.0h0M1561.1 833.1h0M1495.4 878.1h0M1469.1 897.8h0M1588.0 841.0h0M1547.6 872.8h0M1473.8 893.9h0M1536.7 878.5h0M1542.4 877.9h0M1500.6 885.0h0M1589.0 825.2h0M1493.8 890.6h0M1482.3 882.1h0M1502.7 880.6h0M1506.6 886.5h0M1588.7 830.7h0M1552.8 848.2h0M1479.9 907.4h0M1514.2 868.1h0M1477.8 907.0h0M1560.3 828.7h0M1584.0 833.4h0M1476.8 906.1h0M1529.3 886.1h0M1494.4 896.9h0M1499.6 889.1h0M1566.7 841.7h0M1604.0 818.4h0M1498.8 871.3h0M1535.5 864.5h0M1502.9 872.3h0M1473.7 897.5h0M1544.4 866.6h0M1483.6 902.8h0M1557.5 854.4h0M1566.8 836.9h0M1482.1 907.1h0M1543.5 851.7h0M1489.9 907.8h0M1569.3 856.0h0M1499.7 872.6h0M1557.8 836.8h0M1551.4 841.9h0M1540.4 851.1h0M1491.0 896.9h0M1580.6 817.9h0M1508.8 870.4h0M1570.5 826.0h0M1525.6 846.0h0M1521.8 880.7h0M1561.3 828.1h0M1506.9 896.0h0M1569.3 837.6h0M1521.4 880.0h0M1565.7 862.2h0M1559.0 846.3h0M1598.7 834.5h0M1516.2 857.9h0M1508.0 877.4h0M1607.0 827.4h0M1531.6 886.3h0M1517.6 861.6h0M1559.5 843.2h0M1495.1 869.6h0M1600.8 828.1h0M1567.8 827.1h0M1551.5 874.4h0M1500.5 860.5h0M1576.6 828.5h0M1594.4 841.2h0M1573.8 821.2h0M1593.3 842.5h0M1476.7 887.5h0M1565.8 855.9h0M1585.8 826.7h0M1525.8 850.6h0M1475.4 909.4h0M1535.5 869.9h0M1494.1 866.3h0M1471.0 902.8h0M1597.2 837.5h0M1580.3 852.2h0M1549.3 871.4h0M1567.0 860.8h0M1555.0 857.7h0M1523.9 854.4h0M1479.8 895.7h0M1500.0 899.0h0M1530.1 871.2h0M1541.4 859.8h0M1501.7 881.6h0M1480.4 888.0h0M1507.1 867.5h0M1487.2 878.0h0M1596.3 826.2h0M1491.4 906.7h0M1514.2 859.7h0M1535.4 848.8h0M1495.4 872.9h0M1528.5 868.0h0M1537.0 843.2h0M1472.5 910.7h0M1599.1 818.5h0M1534.8 857.7h0M1482.5 884.0h0M1604.9 834.0h0M1485.1 870.6h0M1563.7 866.2h0M1526.7 881.1h0M1496.0 882.2h0M1512.2 870.0h0M1526.5 881.1h0M1511.0 884.1h0M1494.7 864.9h0M1517.3 879.1h0M1520.1 871.9h0M1557.5 866.7h0M1488.6 884.6h0M1472.1 896.0h0M1580.6 827.3h0M1474.4 906.3h0M1548.8 860.8h0M1536.4 854.2h0M1603.7 810.0h0M1487.7 876.6h0M1589.3 841.3h0M1480.8 910.5h0M1485.5 897.1h0M1552.3 851.8h0M1484.8 899.9h0M1542.0 845.4h0M1555.5 861.7h0M1480.2 908.3h0M1573.6 836.6h0M1518.3 858.0h0M1602.3 832.1h0M1469.4 907.3h0M1475.3 905.0h0M1547.1 877.0h0M1496.0 874.6h0M1515.4 892.8h0M1592.8 825.8h0M1507.4 870.0h0M1472.6 899.5h0M1482.2 910.8h0M1537.4 882.2h0M1571.1 841.5h0M1568.4 844.1h0M1525.2 889.4h0M1493.8 906.4h0M1480.6 882.7h0M1491.7 893.4h0M1488.9 877.9h0M1592.5 839.6h0M1516.1 882.4h0M1479.3 879.0h0M1549.9 867.8h0M1523.1 872.1h0M1470.7 902.7h0M1604.5 817.0h0M1598.9 831.2h0M1496.7 875.7h0M1580.4 847.0h0M1522.8 859.4h0M1555.3 872.0h0M1552.2 866.8h0M1564.4 864.5h0M1520.7 887.6h0M1482.6 882.0h0M1575.8 840.6h0M1520.7 855.7h0M1520.9 846.6h0M1568.7 856.4h0M1557.1 838.8h0M1606.0 809.9h0M1513.4 881.8h0M1549.4 873.4h0M1475.8 898.2h0M1478.8 892.8h0M1495.7 874.6h0M1498.9 877.8h0M1521.5 877.8h0M1492.4 900.3h0M1597.2 831.7h0M1519.0 871.3h0M1512.6 888.0h0M1591.6 836.9h0M1574.5 825.0h0M1570.4 845.6h0M1593.6 841.1h0M1565.1 838.9h0M1502.3 885.7h0M1601.4 823.9h0M1470.6 905.1h0M1590.8 843.7h0M1517.8 859.4h0M1506.5 873.2h0M1525.6 843.6h0M1515.0 895.2h0M1584.9 831.2h0M1576.1 842.0h0M1566.7 847.5h0M1492.9 874.9h0M1520.6 881.1h0M1474.9 900.9h0M1566.0 860.3h0M1471.8 899.7h0M1514.5 875.2h0M1483.1 910.3h0M1583.5 844.7h0M1594.3 831.9h0M1500.1 878.8h0M1586.8 847.5h0M1486.3 884.3h0M1561.1 834.6h0M1495.2 891.1h0M1521.4 888.9h0M1545.7 872.6h0M1508.3 863.0h0M1488.6 886.1h0M1542.2 875.2h0M1574.2 853.3h0M1607.1 813.3h0M1504.5 869.0h0M1496.0 874.0h0M1475.1 908.8h0M1489.5 865.5h0M1470.5 908.0h0M1495.0 890.2h0M1563.4 857.8h0M1479.1 877.5h0M1551.1 848.0h0M1500.8 877.3h0M1492.4 889.0h0M1526.9 855.7h0M1520.1 870.8h0M1521.6 870.3h0M1479.4 907.4h0M1538.8 845.4h0M1591.6 844.7h0M1469.2 897.6h0M1475.5 883.9h0M1542.0 857.7h0M1504.0 893.7h0M1495.3 896.2h0M1605.8 831.4h0M1502.6 869.2h0M1594.7 832.7h0M1546.6 834.6h0M1470.8 905.9h0M1497.1 890.0h0M1475.0 892.3h0M1534.8 844.6h0M1592.7 828.7h0M1472.8 909.9h0M1470.6 909.6h0M1470.7 898.2h0M1498.0 869.4h0M1484.9 869.9h0M1602.5 821.5h0M1571.2 830.7h0M1597.8 821.1h0M1541.0 856.9h0M1578.5 825.8h0M1560.8 860.7h0M1500.5 896.2h0M1552.1 861.5h0M1500.1 885.6h0M1524.1 846.2h0M1578.8 825.0h0M1491.4 875.0h0M1485.9 873.1h0M1583.4 839.1h0M1524.0 844.6h0M1485.8 872.5h0M1503.9 892.7h0M1499.0 886.7h0M1590.7 837.2h0M1525.3 881.0h0M1594.6 814.4h0M1525.0 871.9h0M1597.8 815.2h0M1594.0 825.6h0M1539.2 880.3h0M1573.0 843.6h0M1499.8 867.4h0M1479.1 901.1h0M1544.7 866.6h0M1473.0 910.6h0M1524.6 868.2h0M1547.1 836.2h0M1570.0 862.2h0M1590.8 817.6h0M1489.4 882.7h0M1585.7 841.5h0M1528.7 846.4h0M1547.5 836.7h0M1523.8 845.3h0M1582.8 836.5h0M1501.5 883.4h0M1469.1 901.9h0M1579.8 822.0h0M1553.5 858.9h0M1562.0 854.6h0M1480.1 897.3h0M1489.6 908.0h0M1547.9 840.4h0M1566.8 846.5h0M1553.4 853.9h0M1543.5 851.9h0M1552.4 839.5h0M1482.7 883.6h0M1522.2 876.0h0M1505.4 886.7h0M1565.0 852.7h0M1531.8 862.0h0M1562.5 834.2h0M1558.6 870.4h0M1592.2 826.3h0M1584.2 821.8h0M1472.7 898.6h0M1554.4 857.0h0M1511.4 875.1h0M1477.6 894.6h0M1526.1 860.3h0M1582.1 851.4h0M1574.6 828.5h0M1478.1 892.8h0M1489.2 897.0h0M1558.6 831.8h0M1602.5 826.5h0M1475.1 889.0h0M1476.3 903.2h0M1558.7 847.4h0M1546.5 870.2h0M1576.9 847.3h0M1488.7 895.0h0M1528.4 881.8h0M1575.3 829.4h0M1512.6 875.5h0M1515.0 879.1h0M1471.0 900.5h0M1574.8 850.5h0M1521.6 871.4h0M1512.0 870.3h0M1552.5 847.9h0M1583.7 837.5h0M1585.8 824.8h0M1507.2 858.7h0M1545.3 836.1h0M1513.3 870.0h0M1581.4 818.5h0M1574.1 823.0h0M1553.5 845.6h0M1578.9 851.4h0M1530.7 857.5h0M1539.7 858.4h0M1484.4 882.3h0M1560.6 858.0h0M1500.0 857.4h0M1538.4 867.5h0M1468.8 897.1h0M1514.7 882.6h0M1546.5 857.3h0M1548.7 847.0h0M1538.6 871.4h0M1495.3 887.6h0M1552.3 846.0h0M1553.4 841.5h0M1542.6 839.4h0M1511.9 871.2h0M1483.2 872.7h0M1537.6 870.8h0M1472.7 897.3h0M1594.0 820.4h0M1508.5 895.0h0M1499.3 867.5h0M1522.2 853.3h0M1477.9 892.5h0M1588.7 817.1h0M1604.4 817.3h0M1578.9 842.5h0M1540.1 845.5h0M1598.0 825.8h0M1505.5 868.3h0M1524.2 844.3h0M1485.5 881.6h0M1518.5 857.1h0M1595.8 817.7h0M1553.7 865.3h0M1536.0 882.9h0M1534.5 881.9h0M1549.4 856.3h0M1545.6 835.9h0M1522.4 870.6h0M1530.8 844.3h0M1477.6 902.6h0M1521.1 885.5h0M1555.5 855.3h0M1491.7 870.3h0M1498.5 859.7h0M1575.9 837.7h0M1481.4 897.7h0M1488.3 875.3h0M1578.1 840.7h0M1479.7 901.5h0M1501.6 867.3h0M1593.0 843.0h0M1516.8 858.0h0M1577.9 820.5h0M1569.5 859.2h0M1470.0 898.3h0M1491.3 907.0h0M1593.2 841.4h0M1504.3 887.4h0M1515.6 848.2h0M1597.0 840.7h0M1478.5 896.1h0M1603.1 824.9h0M1551.2 867.9h0M1548.4 834.1h0M1468.7 909.4h0M1548.7 837.3h0M1578.7 835.8h0M1514.2 862.4h0M1474.7 890.6h0M1481.0 886.4h0M1475.2 887.9h0M1517.1 853.0h0M1577.9 851.8h0M1473.3 910.7h0M1515.8 873.7h0M1515.2 890.3h0M1514.8 867.8h0M1533.2 842.4h0M1534.4 861.6h0M1489.4 901.6h0M1574.3 855.3h0M1531.8 862.1h0M1508.5 863.9h0M1601.9 815.3h0M1560.3 837.7h0M1484.5 892.1h0M1602.7 812.9h0M1540.8 857.4h0M1506.9 867.6h0M1493.5 906.9h0M1474.2 898.8h0M1494.3 902.7h0M1500.1 893.7h0M1507.4 885.3h0M1605.8 820.2h0M1542.9 877.5h0M1487.9 878.9h0M1511.0 879.0h0M1519.6 882.8h0M1475.7 882.3h0M1524.7 859.4h0M1530.5 871.8h0M1592.9 841.8h0M1519.7 870.0h0M1557.6 838.4h0M1556.2 850.3h0M1485.9 897.6h0M1539.2 877.8h0M1521.9 881.3h0M1484.5 878.6h0M1470.3 910.0h0M1607.1 809.7h0M1476.5 888.5h0" stroke="#4fb7c8" stroke-width="2.6" stroke-linecap="round" fill="none"/><path d="M1515.0 869.5h0M1488.2 916.0h0M1523.4 857.8h0M1595.7 826.4h0M1480.6 890.0h0M1494.7 872.1h0M1476.4 899.9h0M1560.5 836.0h0M1595.4 830.8h0M1536.1 854.7h0M1501.3 885.2h0M1597.5 821.5h0M1540.4 842.3h0M1596.9 832.2h0M1511.0 881.8h0M1483.4 894.7h0M1475.7 892.4h0M1497.5 853.2h0M1519.0 876.7h0M1566.4 865.0h0M1523.8 874.7h0M1497.8 899.9h0M1587.5 836.6h0M1539.0 858.6h0M1542.7 867.0h0M1575.1 845.2h0M1552.6 871.1h0M1494.4 882.7h0M1595.7 833.9h0M1485.1 878.3h0M1485.0 878.8h0M1549.4 862.1h0M1539.8 862.3h0M1492.9 884.9h0M1557.3 839.9h0M1478.6 912.0h0M1524.7 867.8h0M1594.8 806.0h0M1586.8 831.8h0M1542.8 854.0h0M1571.0 840.1h0M1551.5 864.3h0M1493.4 874.9h0M1581.0 831.3h0M1543.9 854.0h0M1541.7 849.2h0M1595.8 817.1h0M1536.4 880.6h0M1504.9 873.3h0M1517.5 877.4h0M1536.0 858.7h0M1583.1 840.7h0M1578.5 845.0h0M1514.2 862.7h0M1526.5 865.9h0M1473.9 899.5h0M1547.9 856.5h0M1572.4 838.2h0M1489.3 887.7h0M1547.5 879.2h0M1482.8 900.6h0M1578.0 838.4h0M1561.5 837.3h0M1592.9 812.4h0M1499.6 891.5h0M1486.1 868.2h0M1538.1 857.9h0M1474.6 890.6h0M1575.2 843.1h0M1490.0 893.4h0M1482.1 875.9h0M1483.7 892.9h0M1557.4 848.7h0M1473.8 883.6h0M1517.4 852.2h0M1487.4 904.5h0M1569.0 842.8h0M1474.3 896.0h0M1489.1 867.6h0M1567.7 814.8h0M1530.3 863.8h0M1480.2 888.3h0M1601.6 812.3h0M1510.7 862.1h0M1517.1 874.3h0M1563.1 834.8h0M1527.1 872.6h0M1576.5 865.2h0M1533.1 876.4h0M1494.9 881.3h0M1533.1 852.9h0M1577.9 859.8h0M1499.2 900.7h0M1547.5 853.4h0M1539.4 894.3h0M1555.9 842.0h0M1509.3 864.0h0M1492.6 917.1h0M1551.7 842.2h0M1579.3 836.4h0M1524.2 851.1h0M1482.5 887.6h0M1572.6 840.8h0M1532.1 860.5h0M1554.3 838.6h0M1478.8 890.7h0M1569.7 839.4h0M1510.9 889.6h0M1585.9 825.1h0M1495.2 882.8h0M1470.5 877.5h0M1504.0 878.1h0M1560.5 846.0h0M1559.9 852.2h0M1579.3 826.3h0M1490.7 887.8h0M1541.4 863.8h0M1476.0 876.8h0M1492.4 865.4h0M1473.5 900.5h0M1546.5 864.3h0M1586.7 817.5h0M1542.5 864.5h0M1542.7 824.7h0M1588.0 830.4h0M1505.4 866.6h0M1536.1 873.2h0M1573.5 837.8h0M1488.9 874.8h0M1557.4 842.0h0M1476.4 899.7h0M1510.5 847.4h0M1487.8 879.2h0M1518.9 871.6h0M1490.0 892.5h0M1474.9 897.6h0M1520.5 853.5h0M1513.3 880.8h0M1562.0 843.7h0M1471.0 905.9h0M1547.5 838.9h0M1473.4 897.3h0M1526.2 855.5h0M1471.5 890.5h0M1589.2 834.5h0M1526.4 857.1h0M1525.0 855.4h0M1475.8 906.6h0M1570.0 831.7h0M1497.4 842.9h0M1524.0 869.3h0M1560.2 838.1h0M1570.7 853.5h0M1512.7 867.7h0M1474.9 901.1h0M1601.0 813.0h0M1496.1 882.9h0M1473.2 908.5h0M1545.2 841.8h0M1583.3 834.0h0M1477.4 904.3h0M1473.5 894.8h0M1553.5 859.4h0M1538.4 853.5h0M1496.5 882.8h0M1497.3 885.7h0M1567.0 833.8h0M1471.5 910.6h0M1494.3 872.8h0M1509.6 896.3h0M1568.1 822.9h0M1503.4 876.1h0M1474.3 897.9h0M1563.4 851.2h0M1555.2 842.0h0M1481.5 892.6h0M1561.1 846.5h0M1545.7 842.3h0M1510.3 878.8h0M1539.2 859.9h0M1528.5 858.8h0M1571.0 827.0h0M1595.5 826.1h0M1506.8 874.4h0M1477.7 892.6h0M1509.9 866.2h0M1542.2 839.2h0M1496.2 892.5h0M1484.4 890.6h0M1490.9 885.9h0M1579.5 827.4h0M1559.0 829.3h0M1481.3 891.2h0M1501.5 876.9h0M1498.0 868.9h0M1479.9 905.4h0M1578.0 843.1h0M1500.2 884.9h0M1537.3 858.5h0M1512.2 870.5h0M1475.7 899.9h0M1472.7 876.8h0M1556.1 855.2h0M1546.3 855.4h0M1527.1 852.5h0M1486.9 879.3h0M1506.7 876.3h0M1529.1 859.1h0M1491.4 876.2h0M1538.9 857.6h0M1578.1 827.6h0M1487.0 897.8h0M1592.3 825.7h0M1529.2 881.1h0M1599.7 832.0h0M1598.1 835.6h0M1475.1 881.0h0M1554.2 853.7h0M1494.6 880.1h0M1545.3 864.0h0M1585.8 832.5h0M1522.4 870.3h0M1550.0 860.6h0M1552.2 840.5h0M1488.1 905.4h0M1518.0 863.0h0M1500.5 850.9h0M1525.8 874.4h0M1566.3 841.4h0M1483.4 907.2h0M1535.6 860.0h0M1528.7 882.8h0M1512.5 866.3h0M1578.4 840.3h0M1508.0 896.2h0M1572.0 852.9h0M1475.8 912.1h0M1519.8 872.3h0M1479.5 883.2h0M1579.2 839.0h0M1551.7 863.6h0M1491.0 895.2h0M1510.9 873.2h0M1481.4 918.4h0M1585.1 824.9h0M1586.3 826.3h0M1586.3 857.8h0M1543.1 842.9h0M1497.2 900.7h0M1522.1 870.6h0M1551.7 838.0h0M1517.9 888.8h0M1474.6 916.3h0M1531.6 875.1h0M1477.4 906.3h0M1493.6 886.5h0M1574.6 843.7h0M1544.3 861.0h0M1571.5 845.0h0M1553.8 852.0h0" stroke="#4fb7c8" stroke-width="2.6" stroke-linecap="round" fill="none"/><path d="M1599.1 817.1h0M1662.9 810.7h0M1614.7 815.9h0M1623.0 808.7h0M1656.3 803.9h0M1643.5 809.9h0M1608.6 814.4h0M1640.3 810.4h0M1598.6 824.8h0M1647.5 811.2h0M1637.8 806.8h0M1641.7 808.1h0M1635.3 805.4h0M1620.9 819.9h0M1641.2 813.7h0M1628.1 818.3h0M1647.5 808.6h0M1599.5 828.2h0M1615.0 814.8h0M1607.6 820.2h0M1631.5 820.2h0M1638.9 828.7h0M1611.9 830.6h0M1660.8 798.4h0M1622.1 818.1h0M1598.1 824.1h0M1646.0 812.9h0M1604.7 820.8h0M1598.1 835.3h0M1616.6 830.2h0M1628.7 824.6h0M1613.3 820.0h0M1619.4 814.7h0M1606.0 820.0h0M1621.1 818.7h0M1650.7 816.1h0M1618.0 814.6h0M1636.3 815.0h0M1611.3 821.1h0M1605.5 823.1h0M1618.5 821.3h0M1599.4 828.4h0M1629.0 818.9h0M1644.6 818.0h0M1625.5 815.4h0M1612.3 821.6h0M1619.0 813.2h0M1652.2 818.5h0M1613.3 814.0h0M1619.4 818.9h0M1643.3 812.3h0M1613.9 824.5h0M1659.7 810.9h0M1608.8 829.8h0M1598.8 819.9h0M1625.8 817.8h0M1633.5 810.5h0M1635.4 809.3h0M1618.9 821.4h0M1649.6 810.8h0M1654.0 810.1h0M1629.9 809.8h0M1652.3 808.0h0M1651.3 808.1h0M1609.1 817.7h0M1606.6 822.8h0M1606.0 811.5h0M1602.9 828.5h0M1649.4 802.8h0M1622.8 809.9h0M1606.6 828.5h0M1634.1 809.5h0M1617.1 817.7h0M1600.3 819.5h0M1625.0 823.3h0M1652.7 807.2h0M1644.5 816.3h0M1663.4 807.1h0M1629.0 808.0h0M1661.9 806.5h0M1622.8 829.7h0M1630.1 822.9h0M1647.3 816.3h0M1628.0 810.5h0M1608.4 825.6h0M1644.9 819.3h0M1658.7 800.7h0M1621.1 816.7h0M1625.1 815.0h0M1617.9 823.3h0M1643.5 803.6h0M1630.2 815.9h0M1612.6 831.2h0M1657.6 813.3h0M1598.1 829.4h0M1653.3 809.3h0M1655.3 803.7h0M1603.5 827.2h0M1598.3 828.1h0M1640.6 800.3h0M1636.4 813.0h0M1608.7 824.6h0M1626.2 816.3h0M1603.6 830.0h0M1625.0 814.0h0M1632.4 809.4h0M1657.3 810.3h0M1622.3 812.2h0M1607.8 823.6h0M1661.1 804.5h0M1640.0 816.4h0M1606.2 826.8h0M1601.2 832.1h0M1622.8 816.3h0M1613.4 821.8h0M1621.8 819.2h0M1615.4 825.8h0M1658.5 813.1h0M1651.7 812.3h0M1642.2 809.2h0M1603.2 821.7h0M1650.4 812.9h0M1623.9 815.6h0M1655.6 798.2h0M1600.6 823.6h0M1606.9 811.3h0M1605.9 820.2h0M1652.0 801.6h0M1661.3 808.9h0M1647.3 803.8h0M1617.8 825.4h0M1600.6 822.8h0M1662.0 807.6h0M1608.6 832.5h0M1651.6 816.3h0M1628.8 809.6h0M1619.9 815.7h0M1624.7 809.9h0M1602.3 822.6h0M1605.0 838.5h0M1655.4 806.4h0M1627.6 819.2h0M1642.3 814.4h0M1619.5 820.9h0M1629.6 819.6h0M1650.6 814.4h0M1640.6 805.5h0M1623.9 814.8h0M1628.1 819.5h0M1663.5 807.6h0M1599.3 819.3h0M1624.1 815.1h0M1605.9 821.5h0M1604.2 829.7h0M1600.7 826.5h0M1648.6 815.9h0M1627.9 826.4h0M1634.1 809.3h0M1617.4 820.9h0M1623.7 819.5h0M1627.5 821.3h0M1652.9 804.5h0M1603.3 812.1h0M1609.2 818.4h0M1608.5 816.8h0M1628.4 822.6h0M1629.2 814.7h0M1642.9 810.4h0M1663.6 797.3h0M1658.8 806.7h0M1613.3 825.5h0M1624.6 817.4h0M1632.8 816.9h0M1650.3 801.5h0M1631.6 811.3h0M1607.9 820.2h0M1600.5 823.3h0M1620.0 813.8h0M1637.9 815.7h0M1609.2 826.6h0M1627.7 826.3h0M1622.9 811.1h0M1661.7 803.2h0M1644.2 807.7h0M1662.7 805.4h0M1632.0 805.8h0M1630.2 820.7h0M1662.9 799.1h0M1624.5 821.6h0M1634.3 816.6h0M1598.7 831.4h0M1608.5 821.4h0M1616.4 821.1h0M1613.6 818.0h0M1626.3 819.7h0M1656.9 814.9h0M1611.2 818.0h0M1600.3 817.4h0M1635.0 810.0h0M1621.6 818.3h0M1600.3 822.2h0M1648.2 819.2h0M1660.2 808.2h0M1647.3 804.0h0M1650.9 806.7h0M1648.1 814.7h0M1663.0 801.0h0M1606.5 823.2h0M1656.1 803.7h0M1644.3 818.8h0M1661.0 809.1h0M1654.1 806.5h0M1634.3 812.6h0M1641.4 809.1h0M1613.7 820.4h0M1619.6 819.6h0M1607.2 819.8h0M1624.2 812.5h0M1652.7 816.9h0M1620.1 820.2h0M1656.4 808.7h0M1610.3 820.5h0M1640.6 806.8h0M1612.9 827.8h0M1639.9 809.6h0M1650.0 818.8h0M1656.2 811.7h0M1648.4 812.8h0M1606.7 823.9h0M1643.2 814.8h0M1616.9 822.2h0M1631.2 817.0h0M1606.6 823.9h0M1626.9 826.3h0M1641.4 819.6h0M1604.8 825.4h0M1636.7 810.6h0M1656.7 802.1h0M1632.6 799.3h0M1619.1 818.1h0M1611.0 825.4h0M1628.3 815.0h0M1623.7 813.7h0M1643.8 810.6h0M1646.9 816.1h0M1644.1 811.8h0M1648.1 810.3h0M1650.3 817.0h0M1645.9 817.2h0M1614.0 813.8h0M1636.0 825.7h0M1623.4 816.5h0M1602.3 825.1h0M1639.5 805.2h0M1606.7 819.2h0M1643.2 816.1h0M1633.3 807.7h0M1601.9 826.9h0M1625.5 806.1h0M1633.9 805.4h0" stroke="#4fb7c8" stroke-width="2.6" stroke-linecap="round" fill="none"/><path d="M1677.1 796.1h0M1672.2 807.2h0M1685.3 794.7h0M1700.5 788.1h0M1704.1 789.6h0M1710.2 784.0h0M1708.4 791.5h0M1663.9 800.6h0M1682.0 804.7h0M1687.0 794.2h0M1693.5 795.5h0M1664.1 809.2h0M1677.2 799.6h0M1677.8 797.0h0M1689.8 796.6h0M1677.5 791.9h0M1674.7 802.1h0M1668.0 795.0h0M1692.7 788.1h0M1674.3 801.7h0M1668.9 791.8h0M1705.6 795.8h0M1678.3 793.9h0M1673.1 798.3h0M1663.0 797.6h0M1685.3 803.7h0M1676.0 804.6h0M1688.7 798.4h0M1674.4 798.2h0M1682.7 795.1h0M1664.9 801.3h0M1661.5 804.0h0M1706.8 791.8h0M1696.4 799.0h0M1680.1 799.0h0M1668.6 797.2h0M1692.8 786.6h0M1689.6 796.3h0M1690.5 787.0h0M1709.1 794.8h0M1676.6 793.2h0M1706.5 794.1h0M1680.8 794.9h0M1709.0 792.6h0M1708.8 792.7h0M1679.9 799.7h0M1684.2 787.1h0M1704.8 792.3h0M1704.7 785.0h0M1663.2 801.2h0M1684.5 793.4h0M1663.4 800.2h0M1702.3 785.7h0M1672.3 805.9h0M1675.4 797.8h0M1674.9 796.3h0M1695.6 794.8h0M1675.1 796.1h0M1681.2 802.0h0M1703.7 784.7h0M1681.2 800.2h0M1706.0 789.7h0M1705.9 783.6h0M1681.9 789.8h0M1670.3 803.0h0M1707.0 791.4h0M1687.3 788.6h0M1676.7 814.0h0M1661.4 795.0h0M1682.4 788.4h0M1660.1 809.1h0M1690.9 786.3h0M1678.8 794.9h0M1673.4 796.1h0M1669.7 813.1h0M1697.6 793.6h0M1705.0 789.5h0M1658.7 805.9h0M1685.8 796.9h0M1662.3 804.0h0M1660.1 819.4h0M1709.4 788.1h0M1674.6 802.3h0M1686.0 795.1h0M1705.2 791.2h0M1691.7 792.8h0M1676.4 796.2h0M1694.8 781.7h0M1699.0 795.1h0M1691.8 783.1h0M1678.4 798.5h0M1697.5 796.0h0M1677.7 805.6h0M1677.1 792.6h0M1672.9 807.6h0M1708.9 782.0h0M1664.5 799.7h0M1661.0 806.1h0M1673.5 802.6h0M1664.7 798.9h0M1677.3 796.6h0M1707.1 783.6h0M1707.5 787.6h0M1670.1 802.8h0M1673.6 795.6h0M1679.2 803.7h0M1707.6 782.8h0M1672.0 798.9h0M1697.9 797.2h0M1691.5 798.7h0M1704.0 790.7h0M1672.7 809.4h0M1706.5 780.1h0M1710.1 781.3h0M1678.9 803.3h0M1706.9 788.5h0M1696.3 781.6h0M1670.0 797.6h0M1681.2 802.0h0M1671.3 811.8h0" stroke="#4fb7c8" stroke-width="2.6" stroke-linecap="round" fill="none"/><path d="M1571.4 858.5h0M1606.2 854.0h0M1565.4 851.9h0M1572.7 851.9h0M1610.9 839.8h0M1617.5 855.1h0M1662.0 844.2h0M1576.7 875.6h0M1664.3 841.7h0M1580.5 885.5h0M1600.9 844.8h0M1674.4 823.9h0M1616.5 881.2h0M1582.8 860.3h0M1608.6 849.1h0M1656.6 821.2h0M1662.9 830.6h0M1564.4 859.3h0M1616.7 861.9h0M1598.5 846.2h0M1560.6 874.1h0M1606.8 855.7h0M1588.1 867.6h0M1645.7 836.4h0M1551.8 893.1h0M1608.6 867.4h0M1594.5 856.5h0M1604.4 859.4h0M1606.1 843.4h0M1676.9 848.0h0M1638.8 835.4h0M1599.7 867.7h0M1593.6 876.9h0M1606.5 863.8h0M1671.1 833.6h0M1627.3 849.0h0M1673.7 857.4h0M1576.4 845.5h0M1617.4 859.3h0M1643.5 842.1h0M1657.0 845.0h0M1563.2 872.4h0M1602.5 853.9h0M1663.1 829.6h0M1629.5 855.5h0M1568.2 864.5h0M1604.4 853.7h0M1614.9 866.0h0M1550.0 875.6h0M1604.4 866.5h0M1611.3 852.6h0M1674.8 836.7h0M1617.0 863.1h0M1618.2 848.8h0M1559.7 868.0h0M1554.6 901.0h0M1609.5 850.8h0M1631.7 844.1h0M1578.1 867.8h0M1624.2 852.4h0M1562.1 887.1h0M1585.3 852.6h0M1617.5 842.4h0M1589.7 878.5h0M1607.5 862.3h0M1642.3 861.4h0M1572.9 880.8h0M1634.9 846.4h0M1674.7 827.3h0M1656.9 867.9h0" stroke="#4fb7c8" stroke-width="2.6" stroke-linecap="round" fill="none"/><path d="M1753.1 816.7h0M1757.6 813.4h0M1763.8 806.7h0M1743.9 850.8h0M1717.9 852.4h0M1699.5 851.6h0M1698.0 844.1h0M1675.1 854.1h0M1641.5 854.9h0M1621.6 869.9h0M1630.8 875.7h0M1615.5 867.4h0M1537.5 899.8h0M1537.5 895.7h0M1298.3 878.2h0" stroke="#4fb7c8" stroke-width="2.6" stroke-linecap="round" fill="none"/><path d="M1485.7 865.5h0M1479.0 880.2h0M1494.9 863.1h0M1482.0 873.7h0M1495.2 867.2h0M1478.6 871.5h0M1485.1 872.3h0M1497.8 857.4h0M1481.1 872.9h0M1478.7 872.8h0M1495.8 863.1h0M1494.9 861.1h0M1488.5 864.3h0M1480.6 874.1h0M1484.2 870.3h0M1487.4 862.3h0M1498.5 862.9h0M1482.5 865.4h0M1492.0 866.5h0M1493.0 866.4h0M1496.5 867.8h0M1492.3 867.8h0M1485.9 875.0h0M1487.4 870.1h0M1488.1 865.5h0M1490.5 866.4h0M1489.3 869.0h0M1480.1 876.4h0M1494.4 865.9h0M1485.7 874.1h0M1491.3 869.9h0M1484.5 863.6h0M1487.5 867.3h0M1499.2 863.5h0M1478.2 872.0h0M1491.6 860.5h0M1481.9 873.9h0M1498.3 861.4h0M1495.4 867.1h0M1495.7 868.1h0" stroke="#3e4053" stroke-width="2.6" stroke-linecap="round" fill="none"/><path d="M1519.6 884.9h0M1520.5 884.4h0M1550.1 868.7h0M1521.9 883.0h0M1540.1 883.0h0M1551.3 869.1h0M1545.2 875.5h0M1528.5 879.0h0M1533.6 876.5h0M1546.4 870.7h0M1526.9 883.8h0M1566.1 854.0h0M1532.0 881.0h0M1561.8 868.9h0M1529.0 879.2h0M1544.4 879.2h0M1560.5 859.8h0M1552.7 866.8h0M1526.0 879.6h0M1532.2 877.3h0M1538.5 876.1h0M1544.7 878.6h0M1567.9 864.2h0M1536.8 876.5h0M1537.4 878.7h0M1546.3 872.2h0M1530.7 883.7h0M1561.1 868.4h0M1519.2 886.4h0M1557.1 865.4h0M1565.3 863.6h0M1535.9 882.0h0M1557.7 873.0h0M1555.8 861.8h0M1558.4 870.9h0M1552.7 873.0h0M1546.7 875.6h0M1533.5 877.1h0M1540.6 878.9h0M1525.0 882.6h0M1551.2 869.9h0M1545.1 877.8h0M1522.5 885.2h0M1524.8 888.6h0M1535.7 879.5h0M1529.1 879.9h0M1529.1 883.1h0M1558.2 870.3h0M1535.7 880.3h0M1522.4 886.4h0" stroke="#3e4053" stroke-width="2.6" stroke-linecap="round" fill="none"/><path d="M1697.7 793.3h0M1692.0 804.0h0M1683.3 790.7h0M1705.6 795.0h0M1685.5 793.9h0M1704.6 794.9h0M1700.3 804.0h0M1694.7 813.5h0M1711.6 779.2h0M1698.2 794.7h0M1696.4 805.6h0M1700.6 798.1h0M1680.0 794.6h0M1690.3 809.9h0M1673.6 787.0h0M1678.8 804.2h0M1674.9 806.2h0M1695.5 787.7h0M1686.0 798.6h0M1680.2 809.4h0M1688.8 792.5h0M1709.9 789.7h0M1675.7 794.9h0M1677.8 809.5h0M1707.1 802.3h0M1681.9 796.7h0M1699.0 799.5h0M1676.9 819.0h0M1675.0 807.9h0M1697.2 792.2h0M1701.9 800.9h0M1681.3 792.1h0M1691.3 802.4h0M1679.7 802.8h0M1705.2 806.6h0M1678.7 808.4h0M1695.1 798.9h0M1709.7 788.8h0M1681.6 800.2h0M1701.4 787.7h0M1692.4 814.6h0M1706.5 794.0h0M1706.6 795.2h0M1692.6 806.1h0M1691.5 798.9h0M1703.0 800.8h0M1700.8 792.6h0M1686.2 802.8h0M1709.6 789.4h0M1692.8 805.0h0M1683.0 791.7h0M1688.7 796.5h0M1688.9 786.1h0M1692.6 799.3h0M1686.7 803.8h0" stroke="#3e4053" stroke-width="2.6" stroke-linecap="round" fill="none"/><path d="M1686.1 801.5h0M1702.6 791.8h0M1702.4 794.2h0M1703.4 783.9h0M1692.5 806.9h0M1677.6 805.5h0M1683.7 792.2h0M1685.5 794.0h0M1695.4 793.1h0M1685.0 792.4h0M1690.1 802.8h0M1685.7 794.2h0M1694.4 800.2h0M1678.7 806.2h0M1686.6 793.2h0M1703.1 795.4h0M1683.2 799.3h0M1689.9 791.3h0M1699.7 798.0h0M1696.9 789.1h0M1689.2 782.0h0M1676.0 800.7h0M1702.7 785.2h0M1704.5 785.7h0M1700.2 799.1h0M1699.3 800.0h0M1703.3 790.6h0M1702.9 803.3h0M1689.5 794.9h0M1686.7 794.5h0" stroke="#4fb7c8" stroke-width="2.6" stroke-linecap="round" fill="none"/><path d="M1646.0 838.3h0M1658.3 825.8h0M1665.9 833.3h0M1698.0 818.4h0M1699.5 813.4h0M1526.8 902.3h0M1531.4 904.0h0M1514.6 901.5h0M1477.9 899.8h0M1546.7 889.9h0M1552.8 884.9h0" stroke="#3e4053" stroke-width="2.6" stroke-linecap="round" fill="none"/><polygon points="1450.4,898.2 1480.9,880.3 1511.5,861.2 1542.1,847.9 1572.7,833.7 1597.1,822.1 1597.1,820.4 1572.7,835.4 1542.1,853.7 1511.5,868.7 1480.9,883.6 1450.4,896.5" fill="#d982b9"/><path d="M1527.0 856.3h0M1506.2 870.5h0M1482.0 881.0h0M1560.9 845.0h0M1496.9 872.6h0M1502.3 870.5h0M1483.1 885.3h0M1460.7 890.2h0M1561.2 838.0h0M1517.1 867.3h0M1531.5 854.1h0M1578.3 829.1h0M1579.9 830.6h0M1535.3 850.9h0M1589.2 827.5h0M1530.0 861.8h0M1579.7 832.5h0M1519.4 857.8h0M1489.4 879.4h0M1523.6 855.0h0M1474.0 888.9h0M1506.2 868.1h0M1484.0 880.8h0M1516.8 858.4h0M1463.9 889.4h0M1514.2 860.5h0M1534.1 853.2h0M1595.6 823.6h0M1596.7 820.4h0M1547.1 845.7h0M1517.1 859.3h0M1560.3 841.5h0M1585.7 827.9h0M1551.8 849.3h0M1478.5 880.5h0M1539.8 852.6h0M1523.5 853.6h0M1584.7 829.3h0M1548.1 847.8h0M1592.7 824.4h0M1457.2 893.4h0M1552.8 840.3h0M1482.3 883.8h0M1519.0 862.9h0M1574.2 835.2h0M1596.4 823.4h0M1483.0 885.2h0M1576.7 829.0h0M1469.7 888.9h0M1495.2 871.7h0M1482.3 878.6h0M1593.9 822.4h0M1466.0 891.1h0M1568.0 835.7h0M1527.2 852.4h0M1556.2 843.7h0M1463.1 888.5h0M1518.1 857.2h0M1531.7 852.3h0M1493.1 873.1h0M1545.8 843.7h0M1462.6 891.2h0M1462.2 888.8h0M1546.1 853.3h0M1489.1 875.3h0M1576.3 835.2h0M1533.4 856.4h0M1579.7 830.2h0M1575.1 831.9h0M1554.0 842.7h0M1594.4 824.2h0M1486.6 882.9h0M1532.9 859.4h0M1469.3 886.9h0M1554.7 847.3h0M1570.7 832.4h0M1581.8 828.5h0M1528.1 859.7h0M1586.3 826.4h0M1506.3 873.2h0M1502.4 868.7h0M1558.2 845.5h0M1585.3 826.9h0M1462.1 892.8h0M1525.1 858.0h0M1515.9 860.3h0M1455.2 896.3h0M1466.6 892.2h0M1570.8 838.3h0M1589.3 823.8h0M1534.0 849.1h0M1485.7 878.6h0M1594.1 824.8h0M1512.5 863.2h0M1469.9 888.7h0M1566.0 840.9h0M1553.1 842.5h0M1551.7 841.9h0M1506.7 867.2h0M1491.8 875.1h0M1483.9 876.0h0M1538.8 858.2h0M1496.4 869.3h0M1557.0 838.8h0M1584.5 826.1h0M1574.5 833.2h0M1455.4 892.9h0M1545.3 849.1h0M1458.0 894.2h0M1494.0 874.7h0M1494.2 879.6h0M1531.9 861.2h0M1456.7 894.0h0M1484.1 879.4h0M1587.5 828.9h0M1454.7 893.9h0M1500.9 875.0h0M1522.3 863.6h0M1466.3 889.5h0M1493.2 872.2h0M1542.0 851.0h0M1498.9 867.3h0M1532.3 852.2h0M1588.9 825.4h0M1464.5 887.8h0M1548.8 848.8h0M1454.0 895.1h0M1507.5 865.3h0M1555.8 847.5h0M1590.7 825.9h0M1518.3 855.5h0M1542.7 852.7h0M1522.0 854.9h0M1467.8 891.7h0M1463.6 892.3h0M1532.0 858.7h0M1578.7 834.6h0M1488.0 875.8h0M1560.1 843.7h0M1542.5 849.6h0M1499.8 876.2h0M1546.8 847.5h0M1459.7 892.7h0M1487.8 878.4h0M1506.3 864.2h0M1544.6 851.1h0M1455.7 893.6h0M1456.6 892.6h0M1586.4 828.5h0M1528.1 859.8h0M1582.0 828.8h0M1596.7 822.9h0M1474.8 889.1h0M1505.8 866.8h0M1595.2 821.4h0M1451.5 898.5h0M1594.5 822.4h0M1597.1 821.4h0M1561.1 840.6h0M1507.5 861.6h0M1549.7 851.6h0M1453.4 897.3h0M1502.0 875.2h0M1455.7 894.1h0M1513.1 859.4h0M1550.7 845.8h0M1453.3 898.0h0M1581.8 829.6h0M1463.4 893.2h0M1485.1 883.7h0M1507.5 869.7h0M1466.8 886.7h0M1560.2 839.4h0M1550.1 841.4h0M1536.9 853.4h0M1513.4 868.2h0M1537.8 854.4h0M1505.5 873.4h0M1548.1 848.7h0M1581.7 829.0h0M1563.8 837.9h0M1504.2 863.2h0M1580.3 831.2h0M1496.2 878.1h0M1550.1 842.7h0M1558.9 844.9h0M1510.7 867.7h0M1576.7 834.9h0M1593.2 822.4h0M1468.0 885.8h0M1457.1 895.5h0M1493.5 874.1h0M1454.2 897.7h0M1595.2 821.5h0M1489.9 880.7h0M1473.3 887.3h0M1536.3 852.8h0M1590.6 825.0h0M1578.4 829.6h0M1578.9 834.3h0M1479.4 885.3h0M1489.7 880.2h0M1463.3 891.5h0M1552.9 841.5h0M1502.6 864.3h0M1547.7 842.8h0M1455.2 896.4h0M1559.3 844.4h0M1469.2 889.4h0M1595.3 821.9h0M1489.8 873.6h0M1522.1 859.9h0M1570.9 839.1h0M1543.0 848.2h0M1462.2 890.6h0M1586.2 827.9h0M1558.2 841.9h0M1561.0 843.1h0M1525.4 861.0h0M1474.5 884.5h0M1546.5 849.9h0M1496.0 875.3h0M1572.6 837.3h0M1498.6 867.8h0M1548.7 847.1h0M1529.8 852.0h0M1472.9 885.3h0M1550.5 850.8h0M1592.6 825.9h0M1459.1 894.7h0M1536.6 854.9h0M1545.4 852.7h0M1573.5 835.3h0M1497.1 868.3h0M1572.2 838.5h0M1559.1 845.7h0M1478.4 881.4h0M1559.9 839.2h0M1516.2 865.9h0M1480.3 886.1h0M1486.0 880.7h0M1499.5 869.4h0M1558.8 844.0h0M1472.8 886.0h0M1544.7 850.1h0M1570.2 832.8h0M1526.4 856.6h0M1583.6 829.5h0M1555.9 844.5h0M1526.0 862.9h0M1592.2 822.5h0M1531.2 859.6h0M1472.2 889.4h0M1481.8 883.1h0M1571.2 834.1h0M1575.9 832.6h0M1508.2 873.1h0M1503.2 868.6h0M1480.6 879.9h0M1574.6 831.8h0M1595.2 823.6h0M1588.3 828.3h0M1515.4 864.8h0M1581.4 831.7h0M1480.1 878.3h0M1460.8 891.0h0M1532.7 857.5h0M1500.9 867.0h0M1520.9 859.3h0M1461.0 894.7h0M1475.9 886.8h0M1522.1 863.1h0M1524.7 853.6h0M1555.3 842.4h0M1558.7 844.9h0M1506.8 863.1h0M1516.6 864.0h0M1491.7 870.7h0M1473.2 885.4h0M1509.3 872.5h0M1535.7 854.9h0M1596.8 820.7h0M1558.9 842.5h0M1569.5 835.0h0M1571.5 838.3h0M1587.3 829.3h0M1585.1 830.1h0M1476.3 883.1h0M1497.0 876.1h0M1489.5 873.9h0M1568.2 834.6h0M1521.8 864.9h0M1589.1 828.0h0M1534.5 852.3h0M1454.5 894.3h0M1486.0 875.4h0M1509.5 868.0h0M1470.0 890.9h0M1532.8 852.0h0M1457.3 893.3h0M1486.1 874.6h0M1452.1 897.3h0M1467.9 892.0h0M1554.1 848.9h0M1524.2 854.2h0M1591.1 825.3h0M1469.7 890.7h0M1478.3 887.4h0M1459.3 892.1h0M1479.6 883.9h0M1493.7 872.2h0M1513.4 862.6h0M1486.9 881.3h0M1475.3 883.9h0M1506.2 869.2h0M1457.8 892.7h0M1571.2 837.3h0M1534.0 856.9h0M1525.1 862.8h0M1518.8 866.3h0M1531.8 856.7h0M1596.2 821.3h0M1506.6 866.6h0M1533.7 858.4h0M1481.1 882.9h0M1508.3 867.5h0M1464.3 892.2h0M1577.3 831.2h0M1550.2 848.2h0M1563.2 843.1h0M1562.2 838.5h0M1470.0 889.9h0M1543.6 851.7h0M1471.9 884.4h0M1541.1 855.6h0M1470.0 887.1h0M1473.5 885.0h0M1468.5 889.8h0M1529.2 861.5h0M1467.7 889.3h0M1503.8 872.5h0M1512.7 865.9h0M1595.3 823.9h0M1564.9 839.5h0M1536.2 848.5h0M1557.9 847.1h0M1452.0 896.2h0M1504.4 869.9h0M1492.5 871.8h0M1547.4 845.0h0M1469.4 888.1h0M1589.0 827.0h0M1497.9 867.4h0M1578.5 829.2h0M1575.0 830.5h0M1518.8 866.9h0M1450.7 897.6h0M1467.9 888.8h0M1507.1 870.0h0M1558.7 844.6h0M1520.3 863.1h0M1587.9 828.1h0M1583.3 826.0h0M1498.1 867.8h0M1595.5 821.6h0M1527.9 856.5h0M1461.2 889.0h0M1455.8 894.6h0M1504.4 865.7h0M1511.3 871.3h0M1476.9 884.7h0M1582.5 831.1h0M1495.8 878.3h0M1563.8 836.3h0M1482.3 879.1h0M1514.1 865.6h0M1506.5 872.5h0M1562.9 837.1h0M1504.0 870.9h0M1483.0 878.1h0M1573.3 833.5h0M1545.8 846.4h0M1475.3 884.0h0M1485.3 875.1h0M1464.9 891.7h0M1572.6 831.8h0M1511.9 863.1h0M1572.3 833.3h0M1536.0 847.8h0M1566.9 841.5h0M1561.3 842.7h0M1518.7 858.7h0M1488.0 875.1h0M1507.7 870.3h0M1528.3 857.5h0M1596.7 820.0h0M1492.4 870.5h0M1558.4 837.7h0M1488.0 881.0h0M1543.2 851.6h0M1558.3 842.9h0M1450.5 897.3h0M1557.3 839.3h0M1577.9 831.9h0M1583.2 830.1h0M1578.6 830.4h0M1506.4 864.1h0M1471.9 885.7h0M1500.5 866.0h0M1579.6 827.6h0M1549.6 844.2h0M1524.5 854.0h0M1451.3 898.7h0M1460.9 891.5h0M1531.8 861.4h0M1578.2 833.1h0M1539.9 850.1h0M1503.3 867.2h0M1451.2 895.5h0M1481.3 878.7h0" stroke="#d982b9" stroke-width="2.6" stroke-linecap="round" fill="none"/><path d="M1422.2 910.5h0M1428.5 909.2h0M1442.5 901.6h0M1420.2 912.8h0M1447.6 897.1h0M1415.6 915.3h0M1426.0 910.3h0M1415.8 913.3h0M1422.6 909.2h0M1445.8 900.1h0M1452.6 895.5h0M1427.8 906.8h0M1421.1 912.3h0M1424.0 909.1h0M1445.6 900.8h0M1419.7 912.8h0M1442.4 899.9h0M1423.5 908.6h0M1421.5 910.4h0M1448.4 899.7h0M1420.5 914.1h0M1450.6 897.6h0M1428.5 906.9h0M1453.2 894.1h0M1440.6 900.3h0M1445.4 898.2h0M1432.5 906.6h0M1452.0 896.2h0M1439.9 903.1h0M1428.2 907.0h0M1416.1 916.0h0M1419.6 912.5h0M1446.9 898.1h0M1450.6 894.9h0M1415.6 915.7h0M1427.2 908.1h0M1428.6 909.2h0M1418.8 911.7h0M1415.7 915.1h0M1446.7 898.9h0M1445.2 900.4h0M1447.8 898.7h0M1423.1 911.6h0M1447.9 898.6h0M1452.2 894.1h0" stroke="#d982b9" stroke-width="2.6" stroke-linecap="round" fill="none"/><path d="M1544.5 857.6h0M1555.2 833.8h0M1561.1 835.8h0M1532.2 855.5h0M1508.5 871.1h0M1565.3 850.4h0M1535.4 857.8h0M1555.8 845.6h0M1522.5 867.3h0M1577.7 825.3h0M1523.2 855.5h0M1545.2 851.8h0M1548.8 843.1h0M1537.6 854.4h0M1566.0 837.9h0M1509.7 871.3h0M1487.6 865.4h0M1497.6 883.5h0M1526.6 860.6h0M1556.0 838.5h0M1497.4 868.9h0M1525.9 869.6h0M1548.3 854.1h0M1503.1 872.5h0M1549.9 852.4h0M1550.6 851.3h0M1505.5 872.1h0M1576.4 834.9h0M1582.6 824.4h0M1580.5 841.9h0M1505.3 864.6h0M1515.7 866.7h0M1539.1 849.9h0M1568.1 840.3h0M1483.4 868.3h0M1507.9 879.9h0M1550.7 840.4h0M1505.2 873.4h0M1504.5 872.5h0M1587.6 819.9h0M1546.0 850.9h0M1554.8 839.9h0M1490.5 869.9h0M1512.8 870.3h0M1494.0 864.7h0M1507.5 862.2h0M1495.3 877.2h0M1493.0 875.7h0M1563.1 845.0h0M1510.5 866.3h0M1576.7 828.7h0M1482.1 876.8h0M1515.2 864.2h0M1513.2 869.6h0M1524.1 864.7h0M1542.9 856.8h0M1534.9 857.0h0M1518.1 860.5h0M1517.3 867.9h0M1556.9 848.0h0M1514.8 871.9h0M1555.4 841.5h0M1534.7 857.0h0M1506.5 879.5h0M1561.7 835.1h0M1538.7 847.3h0M1549.0 848.0h0M1489.1 881.1h0M1530.1 858.1h0M1535.9 860.3h0M1525.0 854.6h0M1520.8 854.6h0M1495.2 869.9h0M1534.1 854.4h0M1564.1 839.0h0M1543.3 847.9h0M1514.0 856.2h0M1501.6 877.2h0M1520.9 862.7h0M1514.6 869.9h0M1501.3 879.8h0M1524.9 858.6h0M1519.2 856.9h0M1537.9 860.0h0M1569.8 831.6h0M1519.2 859.6h0M1553.1 843.3h0M1499.2 865.9h0M1506.4 874.0h0M1573.0 826.3h0" stroke="#d982b9" stroke-width="2.6" stroke-linecap="round" fill="none"/><path d="M1618.6 814.8h0M1614.1 813.2h0M1627.6 814.0h0M1607.0 820.2h0M1603.4 816.7h0M1635.4 816.2h0M1612.4 819.5h0M1653.7 810.0h0M1610.1 818.8h0M1609.0 816.0h0M1639.1 814.3h0M1652.5 806.6h0M1651.0 814.0h0M1655.9 808.9h0" stroke="#d982b9" stroke-width="2.6" stroke-linecap="round" fill="none"/><path d="M1730.9 795.9h0M1730.4 794.6h0M1713.9 800.4h0M1709.0 803.4h0M1736.7 792.3h0M1741.3 794.4h0M1705.8 801.3h0M1743.7 794.8h0M1724.1 798.4h0M1712.9 800.7h0M1720.3 799.0h0M1701.0 805.6h0M1721.4 800.4h0M1725.6 798.5h0M1721.7 798.9h0M1699.5 803.0h0" stroke="#d982b9" stroke-width="2.6" stroke-linecap="round" fill="none"/><rect x="1297.5" y="726.5" width="471.8" height="254.8" fill="none" stroke="#2a2e38" stroke-width="1.250"/><path d="M1297.5 981.3 v4.5" stroke="#20242c" stroke-width="1.2"/><path d="M1293.0 981.3 H1297.5" stroke="#20242c" stroke-width="1.2"/><path d="M1373.9 981.3 v4.5" stroke="#20242c" stroke-width="1.2"/><path d="M1293.0 939.7 H1297.5" stroke="#20242c" stroke-width="1.2"/><path d="M1450.4 981.3 v4.5" stroke="#20242c" stroke-width="1.2"/><path d="M1293.0 898.2 H1297.5" stroke="#20242c" stroke-width="1.2"/><path d="M1526.8 981.3 v4.5" stroke="#20242c" stroke-width="1.2"/><path d="M1293.0 856.6 H1297.5" stroke="#20242c" stroke-width="1.2"/><path d="M1603.2 981.3 v4.5" stroke="#20242c" stroke-width="1.2"/><path d="M1293.0 815.0 H1297.5" stroke="#20242c" stroke-width="1.2"/><path d="M1679.7 981.3 v4.5" stroke="#20242c" stroke-width="1.2"/><path d="M1293.0 773.5 H1297.5" stroke="#20242c" stroke-width="1.2"/><path d="M1756.1 981.3 v4.5" stroke="#20242c" stroke-width="1.2"/><path d="M1293.0 731.9 H1297.5" stroke="#20242c" stroke-width="1.2"/><rect x="1791" y="822.8" width="19" height="6.5" fill="#3e4053"/><rect x="1791" y="841.2" width="19" height="6.5" fill="#4fb7c8"/><rect x="1791" y="859.6" width="19" height="6.5" fill="#d982b9"/><rect x="1791" y="878.0" width="19" height="6.5" fill="#747880"/></svg><div class="t ch" style="top:985.0px;line-height:14px;left:1097.5px;width:400px;text-align:center;">0</div><div class="t ch" style="top:972.5px;line-height:14px;right:567.5px;">0</div><div class="t ch" style="top:985.0px;line-height:14px;left:1173.935px;width:400px;text-align:center;">50</div><div class="t ch" style="top:930.9px;line-height:14px;right:567.5px;">50</div><div class="t ch" style="top:985.0px;line-height:14px;left:1250.37px;width:400px;text-align:center;">100</div><div class="t ch" style="top:889.4px;line-height:14px;right:567.5px;">100</div><div class="t ch" style="top:985.0px;line-height:14px;left:1326.805px;width:400px;text-align:center;">150</div><div class="t ch" style="top:847.8px;line-height:14px;right:567.5px;">150</div><div class="t ch" style="top:985.0px;line-height:14px;left:1403.24px;width:400px;text-align:center;">200</div><div class="t ch" style="top:806.2px;line-height:14px;right:567.5px;">200</div><div class="t ch" style="top:985.0px;line-height:14px;left:1479.675px;width:400px;text-align:center;">250</div><div class="t ch" style="top:764.7px;line-height:14px;right:567.5px;">250</div><div class="t ch" style="top:985.0px;line-height:14px;left:1556.11px;width:400px;text-align:center;">300</div><div class="t ch" style="top:723.1px;line-height:14px;right:567.5px;">300</div><div class="t b" style="top:701.0px;line-height:14px;left:1333px;width:400px;text-align:center;color:#111">NN with PC using top 4 inputs - Test Data</div><div class="t b" style="top:1001.0px;line-height:14px;left:1333px;width:400px;text-align:center;color:#111">Actual - LFP_DTS</div><div class="t b" style="left:1163px;top:847px;width:200px;text-align:center;line-height:14px;transform:rotate(-90deg);color:#111">Predicted - LFP_DTS</div><div class="t ch" style="top:728.0px;line-height:14px;right:92px;">4122 data points</div><div class="t ch" style="top:817.5px;line-height:14px;left:1815px;">Volve A</div><div class="t ch" style="top:835.9px;line-height:14px;left:1815px;">Volve B</div><div class="t ch" style="top:854.3px;line-height:14px;left:1815px;">Volve C</div><div class="t ch" style="top:872.7px;line-height:14px;left:1815px;">1:1 line</div><div class="" style="position:absolute;left:0px;top:0px;width:1856px;height:52px;background:#585d7b"></div><div class="" style="position:absolute;left:0px;top:52px;width:1856px;height:1.5px;background:#a0705a"></div><div class="" style="position:absolute;left:0px;top:53.3px;width:1856px;height:2.7px;background:#ff7d05"></div><svg style="left:8.6px;top:12px" width="31.4" height="29.7" viewBox="0 0 31.4 29.7"><path d="M11.1 4.2 L15 0 L31.2 14.7 L15.3 29.7 L10.8 25.2 L19.8 14.8 Z" fill="#ee961f"/><rect x="1.6" y="11.4" width="6.8" height="6.8" rx="1.8" transform="rotate(45 5 14.8)" fill="#f8b48c"/></svg><div class="t w" style="top:3.5px;line-height:48px;left:43.7px;font-size:48px;font-weight:bold;color:#f1f2f6;letter-spacing:0;">I</div><div class="t w" style="top:3.5px;line-height:48px;left:58px;font-size:48px;font-weight:bold;color:#f1f2f6;letter-spacing:0;transform:scaleX(.81);transform-origin:0 50%;-webkit-text-stroke:.5px #f1f2f6">P</div><div class="" style="position:absolute;left:116px;top:10px;width:95px;height:37px;box-sizing:border-box;border:1px solid #747a98;border-radius:4px"></div><div class="" style="position:absolute;left:127px;top:8px;width:28px;height:5px;background:#585d7b"></div><div class="t w" style="top:2.5px;line-height:16px;left:130px;font-size:13px;letter-spacing:-0.75px;color:#f4f4f6">Well</div><div class="t w" style="top:19.5px;line-height:20px;left:-44px;width:400px;text-align:center;font-size:17px;letter-spacing:-0.6px;color:#f4f4f6">3</div><svg style="left:225.5px;top:15.5px" width="22" height="22" viewBox="0 0 22 22"><path d="M11 3 L17.5 20 M11 3 L4.5 20 M6.5 14 L15.5 14 M8 10.5 L17 19.5 M14 10.5 L5 19.5" stroke="#f2f2f2" stroke-width="2.1" fill="none"/><rect x="1" y="19" width="20" height="2.4" fill="#f2f2f2"/><rect x="10.3" y="0.5" width="1.4" height="3" fill="#f2f2f2"/></svg><div class="" style="position:absolute;left:261px;top:10px;width:128px;height:37px;box-sizing:border-box;border:1px solid #747a98;border-radius:4px"></div><div class="" style="position:absolute;left:272px;top:8px;width:98px;height:5px;background:#585d7b"></div><div class="t w" style="top:2.5px;line-height:16px;left:275px;font-size:13px;letter-spacing:-0.75px;color:#f4f4f6">Working Input Set</div><div class="t w" style="top:19.5px;line-height:20px;left:125px;width:400px;text-align:center;font-size:17px;letter-spacing:-0.6px;color:#f4f4f6">All</div><div class="" style="position:absolute;left:402px;top:10px;width:130px;height:37px;box-sizing:border-box;border:1px solid #747a98;border-radius:4px"></div><div class="" style="position:absolute;left:413px;top:8px;width:108px;height:5px;background:#585d7b"></div><div class="t w" style="top:2.5px;line-height:16px;left:416px;font-size:13px;letter-spacing:-0.75px;color:#f4f4f6">Working Output Set</div><div class="t w" style="top:19.5px;line-height:20px;left:267px;width:400px;text-align:center;font-size:17px;letter-spacing:-0.6px;color:#f4f4f6">All</div><svg style="left:581.0px;top:15.5px" width="22" height="22" viewBox="0 0 22 22"><path d="M1 20 L4 9 H12 Q13 15 16 18 Q19 15 20 13 L21 20 Z" fill="#f2f2f2"/><path d="M16 1 A4.5 4.5 0 0 1 20.5 5.5 Q20.5 9 16 15 Q11.5 9 11.5 5.5 A4.5 4.5 0 0 1 16 1 Z" fill="#f2f2f2" stroke="#585d7b" stroke-width="1"/><circle cx="16" cy="5.5" r="1.7" fill="#585d7b"/><path d="M2.5 15 Q8 12 10 17 T20 17" stroke="#585d7b" stroke-width="1" fill="none"/></svg><svg style="left:626.0px;top:15.5px" width="22" height="22" viewBox="0 0 22 22"><path d="M1.5 1 H16.5 L20.5 5 V21 H1.5 Z" fill="#f2f2f2"/><rect x="8" y="1" width="2.5" height="4.5" fill="#585d7b"/><rect x="5" y="10.5" width="12" height="7.5" fill="#585d7b"/><path d="M6.5 13 h9 M6.5 15.7 h9" stroke="#f2f2f2" stroke-width="1.3"/></svg><svg style="left:670.0px;top:15.5px" width="22" height="22" viewBox="0 0 22 22"><path d="M11 1 h6 l3 3 v10 h-9z" fill="#f2f2f2" opacity=".8"/><path d="M8 3 h6 l3 3 v11 h-9z" fill="#f2f2f2" stroke="#585d7b" stroke-width=".8"/><path d="M1 7.5 H11.5 L14.5 10.5 V21 H1 Z" fill="#f2f2f2" stroke="#585d7b" stroke-width=".9"/><rect x="5.5" y="7.5" width="2" height="3" fill="#585d7b"/><rect x="3.5" y="14" width="8.5" height="5" fill="#585d7b"/><path d="M4.5 16.5 h6.5" stroke="#f2f2f2" stroke-width="1.1"/></svg><svg style="left:744.0px;top:15.5px" width="22" height="22" viewBox="0 0 22 22"><rect x="2" y="1" width="8" height="16" fill="#f2f2f2"/><path d="M4 3 h4 M4 6 h4 M4.5 9 q1.5 -1.5 3 0 M4.5 12 q1.5 1.5 3 0 M4 15 h4" stroke="#585d7b" stroke-width="1" fill="none"/><path transform="translate(12,6) scale(1.35)" d="M3 0 L6 7 H0 Z M3 2.5 L1.5 6 H4.5 Z" fill="#f2f2f2" fill-rule="evenodd"/><rect x="1" y="18.5" width="20" height="2.5" fill="#3a8fd8"/></svg><svg style="left:788.0px;top:15.5px" width="22" height="22" viewBox="0 0 22 22"><rect x="6" y="0.5" width="10" height="10" fill="#f2f2f2"/><path d="M8 3 h6 M8 5.5 h6 M8 8 h6 M11 1 v9" stroke="#585d7b" stroke-width=".9" fill="none"/><path transform="translate(2.5,12.5) scale(0.85)" d="M3 0 L6 7 H0 Z M3 2.5 L1.5 6 H4.5 Z" fill="#f2f2f2" fill-rule="evenodd"/><path transform="translate(8.5,12.5) scale(0.85)" d="M3 0 L6 7 H0 Z M3 2.5 L1.5 6 H4.5 Z" fill="#f2f2f2" fill-rule="evenodd"/><path transform="translate(14.5,12.5) scale(0.85)" d="M3 0 L6 7 H0 Z M3 2.5 L1.5 6 H4.5 Z" fill="#f2f2f2" fill-rule="evenodd"/><rect x="1" y="19" width="20" height="2.5" fill="#d8353c"/></svg><svg style="left:833.0px;top:15.5px" width="22" height="22" viewBox="0 0 22 22"><rect x="2" y="1" width="8" height="16" fill="#f2f2f2"/><path d="M4 3 h4 M4 6 h4 M4.5 9 q1.5 -1.5 3 0 M4.5 12 q1.5 1.5 3 0 M4 15 h4" stroke="#585d7b" stroke-width="1" fill="none"/><path transform="translate(12,6) scale(1.35)" d="M3 0 L6 7 H0 Z M3 2.5 L1.5 6 H4.5 Z" fill="#f2f2f2" fill-rule="evenodd"/><rect x="1" y="18.5" width="20" height="2.5" fill="#3a8fd8"/></svg><svg style="left:877.0px;top:15.5px" width="22" height="22" viewBox="0 0 22 22"><rect x="6" y="0.5" width="10" height="10" fill="#f2f2f2"/><path d="M8 3 h6 M8 5.5 h6 M8 8 h6 M11 1 v9" stroke="#585d7b" stroke-width=".9" fill="none"/><path transform="translate(2.5,12.5) scale(0.85)" d="M3 0 L6 7 H0 Z M3 2.5 L1.5 6 H4.5 Z" fill="#f2f2f2" fill-rule="evenodd"/><path transform="translate(8.5,12.5) scale(0.85)" d="M3 0 L6 7 H0 Z M3 2.5 L1.5 6 H4.5 Z" fill="#f2f2f2" fill-rule="evenodd"/><path transform="translate(14.5,12.5) scale(0.85)" d="M3 0 L6 7 H0 Z M3 2.5 L1.5 6 H4.5 Z" fill="#f2f2f2" fill-rule="evenodd"/><rect x="1" y="19" width="20" height="2.5" fill="#d8353c"/></svg><svg style="left:922.0px;top:15.5px" width="22" height="22" viewBox="0 0 22 22"><rect x="2" y="1" width="8" height="16" fill="#f2f2f2"/><path d="M4 3 h4 M4 6 h4 M4.5 9 q1.5 -1.5 3 0 M4.5 12 q1.5 1.5 3 0 M4 15 h4" stroke="#585d7b" stroke-width="1" fill="none"/><path transform="translate(12,6) scale(1.35)" d="M3 0 L6 7 H0 Z M3 2.5 L1.5 6 H4.5 Z" fill="#f2f2f2" fill-rule="evenodd"/><rect x="1" y="18.5" width="20" height="2.5" fill="#3a8fd8"/></svg><svg style="left:966.0px;top:15.5px" width="22" height="22" viewBox="0 0 22 22"><rect x="6" y="0.5" width="10" height="10" fill="#f2f2f2"/><path d="M8 3 h6 M8 5.5 h6 M8 8 h6 M11 1 v9" stroke="#585d7b" stroke-width=".9" fill="none"/><path transform="translate(2.5,12.5) scale(0.85)" d="M3 0 L6 7 H0 Z M3 2.5 L1.5 6 H4.5 Z" fill="#f2f2f2" fill-rule="evenodd"/><path transform="translate(8.5,12.5) scale(0.85)" d="M3 0 L6 7 H0 Z M3 2.5 L1.5 6 H4.5 Z" fill="#f2f2f2" fill-rule="evenodd"/><path transform="translate(14.5,12.5) scale(0.85)" d="M3 0 L6 7 H0 Z M3 2.5 L1.5 6 H4.5 Z" fill="#f2f2f2" fill-rule="evenodd"/><rect x="1" y="19" width="20" height="2.5" fill="#d8353c"/></svg><svg style="left:1040.0px;top:15.5px" width="22" height="22" viewBox="0 0 22 22"><rect x="1" y="1" width="20" height="20" fill="#f2f2f2" opacity=".78"/><path d="M4 2 q3 4 0 8 t1 9 M17.5 2 q-3 5 0 9 t-1 8" stroke="#585d7b" stroke-width="1.2" fill="none"/><path d="M9 1 V21 M13 1 V21 M9 5 h4 M9 9 h4 M9 13 h4 M9 17 h4" stroke="#585d7b" stroke-width="1"/></svg><svg style="left:1084.0px;top:15.5px" width="22" height="22" viewBox="0 0 22 22"><rect x="1" y="1" width="20" height="20" fill="#f2f2f2" opacity=".78"/><path d="M2 8 q2 -4 4 -1 t4 -2 t4 1 t5 -1 M2 17 q3 2 5 0 t4 0 t4 1 t4 -2" stroke="#585d7b" stroke-width="1.2" fill="none"/><path d="M1 10.5 H21 M1 13.5 H21 M5 10.5 v3 M9 10.5 v3 M13 10.5 v3 M17 10.5 v3" stroke="#585d7b" stroke-width="1"/></svg><svg style="left:1129.0px;top:15.5px" width="22" height="22" viewBox="0 0 22 22"><rect x="1" y="1" width="5" height="20" fill="#f2f2f2"/><rect x="10" y="1" width="5" height="20" fill="#f2f2f2"/><path d="M6 3 q3 3 0 6 t0 6 t0 5 M10 3 q-3 3 0 6 t0 6 t0 5" stroke="#f2f2f2" stroke-width="1.3" fill="none"/><circle cx="17" cy="9" r="4.2" fill="#f2f2f2"/><path d="M14.8 9 h4.4 M17 6.8 v4.4" stroke="#585d7b" stroke-width="1.3"/></svg><svg style="left:1173.0px;top:15.5px" width="22" height="22" viewBox="0 0 22 22"><path d="M2.5 21 V16 M5.5 21 V11 M8.5 21 V4 M11.5 21 V2 M14.5 21 V7 M17.5 21 V13 M20.5 21 V18.5" stroke="#f2f2f2" stroke-width="1.9"/></svg><svg style="left:1218.0px;top:15.5px" width="22" height="22" viewBox="0 0 22 22"><path d="M2 1 V20 H21" stroke="#f2f2f2" stroke-width="1.3" fill="none"/><path d="M3 19 L20 2" stroke="#f2f2f2" stroke-width="1.2"/><circle cx="8" cy="6" r="1.6" fill="none" stroke="#f2f2f2" stroke-width="1"/><circle cx="11" cy="4" r="1" fill="#f2f2f2"/><circle cx="17" cy="10" r="1.6" fill="none" stroke="#f2f2f2" stroke-width="1"/><circle cx="15" cy="14" r="1.1" fill="#f2f2f2"/><circle cx="18" cy="16.5" r="1.4" fill="none" stroke="#f2f2f2" stroke-width="1"/><circle cx="7" cy="9.5" r=".9" fill="#f2f2f2"/></svg><svg style="left:1262.0px;top:15.5px" width="22" height="22" viewBox="0 0 22 22"><path d="M11 2 L21 20.5 H1 Z" fill="#f2f2f2"/><circle cx="11" cy="9" r=".9" fill="#585d7b"/><circle cx="9" cy="13" r=".9" fill="#585d7b"/><circle cx="12.5" cy="14" r=".9" fill="#585d7b"/><circle cx="7" cy="17.5" r=".9" fill="#585d7b"/><circle cx="11" cy="18" r=".9" fill="#585d7b"/><circle cx="15" cy="17.5" r=".9" fill="#585d7b"/><circle cx="14" cy="11" r=".7" fill="#585d7b"/></svg><svg style="left:1307.0px;top:15.5px" width="22" height="22" viewBox="0 0 22 22"><rect x="1" y="1.5" width="20" height="3" fill="#f2f2f2"/><path d="M2.5 5 V21 M6.8 5 V21 M11 5 V21 M15.2 5 V21 M19.5 5 V21" stroke="#f2f2f2" stroke-width="2.6" stroke-dasharray="2.2 1"/></svg><div class="t w" style="top:15.0px;line-height:22px;left:1380px;font-size:21px;font-weight:bold;letter-spacing:-0.5px;color:#f2f2f2;transform:scaleX(.85);transform-origin:0 50%">V<span style="font-size:10px;letter-spacing:0">CL</span></div><svg style="left:1425.0px;top:15.5px" width="22" height="22" viewBox="0 0 22 22"><path d="M1 3 H20 M1 6.5 H20 M1 10 H20" stroke="#f2f2f2" stroke-width="1.2"/><path d="M15 1.5 l3 1.5 l-3 1.5z M12 5 l3 1.5 l-3 1.5z M16 8.5 l3 1.5 l-3 1.5z" fill="#f2f2f2"/></svg><div class="t w" style="top:26.0px;line-height:14px;left:1425.5px;font-size:13px;font-weight:bold;letter-spacing:-0.2px;color:#f2f2f2">V<span style="font-size:8px;letter-spacing:0">CL</span></div><div class="t w" style="top:22.0px;line-height:18px;left:1470.5px;font-size:17px;font-weight:bold;letter-spacing:0;color:#f2f2f2">S<span style="font-size:12px">w</span></div><div class="t w" style="top:15.0px;line-height:10px;left:1472px;font-size:9px;letter-spacing:0;color:#f2f2f2">Ø</div><svg style="left:1514.0px;top:15.5px" width="22" height="22" viewBox="0 0 22 22"><path d="M1 3 H20 M1 6.5 H20 M1 10 H20" stroke="#f2f2f2" stroke-width="1.2"/><path d="M15 1.5 l3 1.5 l-3 1.5z M12 5 l3 1.5 l-3 1.5z M16 8.5 l3 1.5 l-3 1.5z" fill="#f2f2f2"/></svg><div class="t w" style="top:29.0px;line-height:10px;left:1515px;font-size:10px;letter-spacing:0;color:#f2f2f2;font-style:italic">Ø<span style="font-weight:bold;font-size:8px">Sw</span></div><svg style="left:1558.0px;top:15.5px" width="22" height="22" viewBox="0 0 22 22"><circle cx="4" cy="5" r="2.6" fill="none" stroke="#f2f2f2" stroke-width="1.3"/><circle cx="4" cy="16" r="2.6" fill="none" stroke="#f2f2f2" stroke-width="1.3"/><path d="M6 6.5 L15 15 M6 14.5 L15 6" stroke="#f2f2f2" stroke-width="1.3"/><path d="M15.5 10.5 h5.5 M18.2 7.7 v5.6" stroke="#f2f2f2" stroke-width="1.6"/></svg><svg style="left:1603.0px;top:15.5px" width="22" height="22" viewBox="0 0 22 22"><path d="M1 3 H20 M1 6.5 H20 M1 10 H20" stroke="#f2f2f2" stroke-width="1.2"/><path d="M15 1.5 l3 1.5 l-3 1.5z M12 5 l3 1.5 l-3 1.5z M16 8.5 l3 1.5 l-3 1.5z" fill="#f2f2f2"/><g transform="translate(4,11.5) scale(.55)"><circle cx="4" cy="5" r="2.6" fill="none" stroke="#f2f2f2" stroke-width="1.3"/><circle cx="4" cy="16" r="2.6" fill="none" stroke="#f2f2f2" stroke-width="1.3"/><path d="M6 6.5 L15 15 M6 14.5 L15 6" stroke="#f2f2f2" stroke-width="1.3"/><path d="M15.5 10.5 h5.5 M18.2 7.7 v5.6" stroke="#f2f2f2" stroke-width="1.6"/></g></svg><svg style="left:1677.0px;top:15.5px" width="22" height="22" viewBox="0 0 22 22"><circle cx="9" cy="9" r="5.5" fill="none" stroke="#f2f2f2" stroke-width="1.3"/><circle cx="9" cy="9" r="2.6" fill="none" stroke="#f2f2f2" stroke-width="1.2"/><path d="M0 9 h4 M9 0 v3 M14 4 l3 -2.5" stroke="#f2f2f2" stroke-width="1.2"/><path d="M9.5 9.5 L20 14 L15.5 15.5 L14 20 Z" fill="#f2f2f2" stroke="#585d7b" stroke-width=".8"/></svg><svg style="left:1718.0px;top:15.5px" width="22" height="22" viewBox="0 0 22 22"><path d="M9 3 Q13 8 10 13 A4 4 0 1 1 7 13 Q10 8 9 3 Z" fill="#f2f2f2"/><circle cx="10.5" cy="4.5" r="1.5" fill="#e03a3a"/><circle cx="9" cy="20" r="1" fill="#3a8fd8"/><path d="M17 6.5 l4 4 l-4 4" stroke="#7d82a0" stroke-width="1.4" fill="none"/></svg><div class="" style="position:absolute;left:1758.5px;top:26px;width:10.5px;height:1.2px;background:#c4c6d4"></div><div class="" style="position:absolute;left:1796.5px;top:20px;width:11px;height:11px;box-sizing:border-box;border:1.3px solid #d9dae3"></div><svg style="left:1835px;top:20px" width="12" height="12" viewBox="0 0 12 12"><path d="M.5 .5 L11.5 11.5 M11.5 .5 L.5 11.5" stroke="#e4e5ec" stroke-width="1.3"/></svg><div class="" style="position:absolute;left:0px;top:55.5px;width:1856px;height:21.5px;background:#3f444c"></div><div class="" style="position:absolute;left:77px;top:75.8px;width:1779px;height:2px;background:#7d828a"></div><svg style="left:83px;top:61px" width="11.5" height="11" viewBox="0 0 11.5 11"><path d="M0 0 h5 v5 h-5z M6.2 0 h5 v5 h-5z M0 6 h5 v5 h-5z M6.2 6 h5 v5 h-5z" fill="#fbfbfb"/><path d="M2.8 2.8h0 M9 2.8h0 M2.8 8.8h0 M9 8.8h0" stroke="#30343c" stroke-width="1.6" stroke-linecap="round"/></svg><div class="" style="position:absolute;left:99px;top:58px;width:110px;height:18.5px;box-sizing:border-box;border:1px solid #8a909c;border-right:none;background:#4d5361"></div><div class="t w" style="top:60.5px;line-height:14px;left:102.5px;font-size:12px;letter-spacing:-0.62px;color:#f4f4f4">Experienced Eye</div><div class="" style="position:absolute;left:208px;top:57.5px;width:103.5px;height:19px;background:#ff7a0c;box-sizing:border-box;border-top:1px solid #c9ccd4"></div><div class="t " style="top:60.5px;line-height:14px;left:210.5px;font-size:12px;letter-spacing:-0.4px;color:#ffd6ae">(Work Area)</div><svg style="left:293px;top:61px" width="12" height="12" viewBox="0 0 12 12"><path d="M1 1 L11 11 M11 1 L1 11" stroke="#fff" stroke-width="1.8"/></svg><svg style="left:317px;top:59px" width="15" height="15" viewBox="0 0 15 15"><path d="M1 3 h6 v4 h7 v7 H1 Z" fill="#f0f0f0"/><path d="M10.5 0.5 v5 M8 3 h5" stroke="#f0f0f0" stroke-width="1.7"/><path d="M2.5 11 h10" stroke="#3f444c" stroke-width="1"/></svg><div class="" style="position:absolute;left:0px;top:56px;width:73px;height:1003px;background:#464b53"></div><div class="" style="position:absolute;left:73px;top:56px;width:3.2px;height:1003px;background:linear-gradient(90deg,#ececec,#b4b6ba)"></div><div class="" style="position:absolute;left:76.2px;top:56px;width:1px;height:1003px;background:#3f444c"></div><svg style="left:20px;top:59px" width="28" height="28" viewBox="0 0 28 28"><path d="M14 3 L24 24 M14 3 L4 24 M7.5 17 L20.5 17 M9.5 12.5 L23 24 M18.5 12.5 L5 24 M11 9 L17 9" stroke="#f2f2f2" stroke-width="2.2" fill="none" stroke-linecap="round"/><rect x="1" y="23" width="26" height="3.2" fill="#f2f2f2"/><rect x="13" y="0" width="2" height="4" fill="#f2f2f2"/><circle cx="20" cy="10" r="5.5" fill="#454a52" stroke="#f2f2f2" stroke-width="2"/><circle cx="20" cy="10" r="2" fill="#f2f2f2"/><path d="M24 14 L27.5 18" stroke="#f2f2f2" stroke-width="2.5"/></svg><div class="t w" style="left:0;width:69px;text-align:center;top:87px;line-height:16px;font-size:12px;letter-spacing:-0.5px">Browser</div><svg style="left:20px;top:109px" width="28" height="28" viewBox="0 0 28 28"><path d="M3 4 h8 l2 2 h9 v3 H3 Z" fill="#f2f2f2"/><path d="M6 10 h21 l-4 15 H2 Z" fill="#f2f2f2"/></svg><div class="t w" style="left:0;width:69px;text-align:center;top:137px;line-height:16px;font-size:12px;letter-spacing:-0.5px">Database</div><svg style="left:20px;top:159px" width="28" height="28" viewBox="0 0 28 28"><path d="M14 3 L24 24 M14 3 L4 24 M7.5 17 L20.5 17 M9.5 12.5 L23 24 M18.5 12.5 L5 24 M11 9 L17 9" stroke="#f2f2f2" stroke-width="2.2" fill="none" stroke-linecap="round"/><rect x="1" y="23" width="26" height="3.2" fill="#f2f2f2"/><rect x="13" y="0" width="2" height="4" fill="#f2f2f2"/></svg><div class="t w" style="left:0;width:69px;text-align:center;top:187px;line-height:16px;font-size:12px;letter-spacing:-0.5px">Well</div><svg style="left:20px;top:210px" width="28" height="28" viewBox="0 0 28 28"><path d="M5 1 h12 l7 7 v19 H5 Z" fill="#f2f2f2"/><path d="M17 1 v7 h7" fill="#454a52" stroke="#454a52" stroke-width="0.5"/><path d="M17 1 l7 7 h-7z" fill="#f2f2f2" opacity=".7"/><path d="M10 14 h8 M16 11.5 l3 2.5 l-3 2.5 M19 20 h-8 M13 17.5 l-3 2.5 l3 2.5" stroke="#454a52" stroke-width="1.8" fill="none"/></svg><div class="t w" style="left:0;width:69px;text-align:center;top:238px;line-height:16px;font-size:12px;letter-spacing:-0.5px">In/Out</div><svg style="left:20px;top:260px" width="28" height="28" viewBox="0 0 28 28"><path d="M0.5 14 Q14 -1 27.5 14 Q14 29 0.5 14 Z" fill="#f2f2f2"/><circle cx="14" cy="14" r="6.2" fill="#454a52"/><circle cx="14" cy="14" r="3.4" fill="#f2f2f2"/></svg><div class="t w" style="left:0;width:69px;text-align:center;top:288px;line-height:16px;font-size:12px;letter-spacing:-0.5px">View</div><svg style="left:20px;top:310px" width="28" height="28" viewBox="0 0 28 28"><path d="M4 3 h5 l0 -2 h12 v26 H4 Z" fill="#f2f2f2"/><path d="M4 3 l5 -2 v2z" fill="#454a52"/><path d="M12 22 l2 -5 l9 -9 l3 3 l-9 9 Z" fill="#f2f2f2" stroke="#454a52" stroke-width="1.6"/><path d="M7 23 h4" stroke="#454a52" stroke-width="1.6"/></svg><div class="t w" style="left:0;width:69px;text-align:center;top:338px;line-height:16px;font-size:12px;letter-spacing:-0.5px">Edit</div><svg style="left:20px;top:360px" width="28" height="28" viewBox="0 0 28 28"><rect x="1" y="1" width="12" height="12" rx="1.5" fill="#f2f2f2"/><rect x="15" y="1" width="12" height="12" rx="1.5" fill="#f2f2f2"/><rect x="1" y="15" width="12" height="12" rx="1.5" fill="#f2f2f2"/><rect x="15" y="15" width="12" height="12" rx="1.5" fill="#f2f2f2"/><path d="M4 7 h6 M7 4 v6 M18 7 h6 M4.8 18.8 l4.4 4.4 M9.2 18.8 l-4.4 4.4 M18 19.3 h6 M18 22.7 h6" stroke="#454a52" stroke-width="1.7"/></svg><div class="t w" style="left:0;width:69px;text-align:center;top:388px;line-height:16px;font-size:12px;letter-spacing:-0.5px">Calc</div><svg style="left:20px;top:411px" width="28" height="28" viewBox="0 0 28 28"><rect x="1" y="5" width="26" height="22" fill="#f2f2f2" opacity=".55"/><path d="M14 0 Q24 11 24 17 A10 10 0 0 1 4 17 Q4 11 14 0 Z" fill="#f2f2f2" stroke="#454a52" stroke-width="1.5"/><path d="M8 16 A6.5 6.5 0 0 0 16 23" stroke="#454a52" stroke-width="1.6" fill="none"/></svg><div class="t w" style="left:0;width:69px;text-align:center;top:439px;line-height:16px;font-size:12px;letter-spacing:-0.5px">Interp</div><svg style="left:20px;top:461px" width="28" height="28" viewBox="0 0 28 28"><rect x="1" y="5" width="26" height="22" fill="#f2f2f2" opacity=".55"/><path d="M12 0 Q22 11 22 17 A10 10 0 0 1 2 17 Q2 11 12 0 Z" fill="#f2f2f2" stroke="#454a52" stroke-width="1.5"/><path d="M6 16 A6.5 6.5 0 0 0 14 23" stroke="#454a52" stroke-width="1.6" fill="none"/><circle cx="21.5" cy="10" r="5" fill="#f2f2f2" stroke="#454a52" stroke-width="1.5"/><path d="M19 10 h5 M21.5 7.5 v5" stroke="#454a52" stroke-width="1.4"/></svg><div class="t w" style="left:0;width:69px;text-align:center;top:489px;line-height:16px;font-size:12px;letter-spacing:-0.5px">Advanced</div><svg style="left:20px;top:512px" width="28" height="28" viewBox="0 0 28 28"><rect x="1" y="1" width="26" height="26" rx="1" fill="#f2f2f2"/><path d="M1 9 Q9 6 14 9 T27 8 M1 19 Q9 17 14 19 T27 18 M9 1 V27 M20 1 V27" stroke="#454a52" stroke-width="1.1" fill="none"/><circle cx="13" cy="12" r="5.2" fill="#f2f2f2" stroke="#454a52" stroke-width="1.8"/><circle cx="13" cy="12" r="2" fill="none" stroke="#454a52" stroke-width="1.2"/><path d="M17 16 L23 22" stroke="#454a52" stroke-width="2.6"/></svg><div class="t w" style="left:0;width:69px;text-align:center;top:540px;line-height:16px;font-size:12px;letter-spacing:-0.5px">Imaging</div><svg style="left:20px;top:562px" width="28" height="28" viewBox="0 0 28 28"><rect x="10.5" y="8" width="7" height="13" fill="none" stroke="#f2f2f2" stroke-width="1.8"/><path d="M11 20 L17 9" stroke="#f2f2f2" stroke-width="1.3"/><path d="M14 0 v6 M11.5 3.5 l2.5 3 l2.5 -3 M14 28 v-6 M11.5 24.5 l2.5 -3 l2.5 3 M0 14.5 h8 M5 11.5 l3.5 3 l-3.5 3 M28 14.5 h-8 M23 11.5 l-3.5 3 l3.5 3" stroke="#f2f2f2" stroke-width="1.9" fill="none"/></svg><div class="t w" style="left:0;width:69px;text-align:center;top:590px;line-height:16px;font-size:12px;letter-spacing:-0.5px">Geomech</div><svg style="left:20px;top:612px" width="28" height="28" viewBox="0 0 28 28"><rect x="10.5" y="1" width="7" height="26" rx="1" fill="#f2f2f2"/><path d="M7 8 Q3.5 14 7 20 M3.5 5 Q-1.5 14 3.5 23 M21 8 Q24.5 14 21 20 M24.5 5 Q29.5 14 24.5 23" stroke="#f2f2f2" stroke-width="1.9" fill="none"/></svg><div class="t w" style="left:0;width:69px;text-align:center;top:640px;line-height:16px;font-size:12px;letter-spacing:-0.5px">Geophysics</div><svg style="left:20px;top:662px" width="28" height="28" viewBox="0 0 28 28"><path d="M3 27 V12 A11 11 0 0 1 25 12 V27 M8 27 V13 A6 6 0 0 1 20 13 V27 M12.5 27 V13.5 A1.5 1.5 0 0 1 15.5 13.5 V27" stroke="#f2f2f2" stroke-width="3" fill="none"/></svg><div class="t w" style="left:0;width:69px;text-align:center;top:690px;line-height:16px;font-size:12px;letter-spacing:-0.5px">Cased Hole</div><svg style="left:20px;top:712px" width="28" height="28" viewBox="0 0 28 28"><path d="M13 2 Q8 1 7 5 Q2 6 3.5 11 Q0 14 3.5 18 Q3 23 8 23.5 Q10 27 13 25 Z M15 2 Q20 1 21 5 Q26 6 24.5 11 Q28 14 24.5 18 Q25 23 20 23.5 Q18 27 15 25 Z" fill="#f2f2f2"/><path d="M6 10 h4 v4 M8 19 h3 v-3 M22 10 h-4 v4 M20 19 h-3 v-3" stroke="#454a52" stroke-width="1.5" fill="none"/></svg><div class="t w" style="left:0;width:69px;text-align:center;top:740px;line-height:16px;font-size:12px;letter-spacing:-0.5px">ML</div><svg style="left:20px;top:762px" width="28" height="28" viewBox="0 0 28 28"><rect x="1" y="1" width="7.5" height="26" fill="#f2f2f2"/><rect x="10.3" y="1" width="7.5" height="26" fill="#f2f2f2"/><rect x="19.5" y="1" width="7.5" height="26" fill="#f2f2f2"/><path d="M2 5 l5 3 l-5 4 l5 4 l-5 4 l5 3 M11.3 4 l5 4 l-5 4 l5 4 l-5 4 l5 4 M26 5 l-5 3 l5 4 l-5 4 l5 4 l-5 3" stroke="#454a52" stroke-width="1.4" fill="none"/></svg><div class="t w" style="left:0;width:69px;text-align:center;top:790px;line-height:16px;font-size:12px;letter-spacing:-0.5px">Multi-Well</div><svg style="left:20px;top:812px" width="28" height="28" viewBox="0 0 28 28"><rect x="0.5" y="1" width="27" height="4.5" fill="#f2f2f2"/><rect x="0.5" y="7" width="27" height="20" fill="#f2f2f2"/><circle cx="14" cy="17" r="4.6" fill="none" stroke="#454a52" stroke-width="3.4" stroke-dasharray="2.4 1.2"/><circle cx="14" cy="17" r="3.6" fill="none" stroke="#454a52" stroke-width="2"/><path d="M2.5 3.2 h1.2 M5 3.2 h1.2 M7.5 3.2 h1.2" stroke="#454a52" stroke-width="1.2"/></svg><div class="t w" style="left:0;width:69px;text-align:center;top:840px;line-height:16px;font-size:12px;letter-spacing:-0.5px">Apps</div><svg style="left:20px;top:863px" width="28" height="28" viewBox="0 0 28 28"><path d="M4 24 L22 6" stroke="#f2f2f2" stroke-width="4.2" stroke-linecap="round"/><path d="M24 4 L20 8" stroke="#f2f2f2" stroke-width="6" stroke-linecap="round"/><path d="M7 7 L23 23" stroke="#f2f2f2" stroke-width="3.6" stroke-linecap="round"/><circle cx="6" cy="6" r="4.6" fill="#f2f2f2"/><path d="M1 1 L6 6" stroke="#454a52" stroke-width="3.4"/><circle cx="23" cy="23" r="4.2" fill="#f2f2f2"/><path d="M27.5 27.5 L23.5 23.5" stroke="#454a52" stroke-width="3"/></svg><div class="t w" style="left:0;width:69px;text-align:center;top:891px;line-height:16px;font-size:12px;letter-spacing:-0.5px">Tools</div><svg style="left:20px;top:913px" width="28" height="28" viewBox="0 0 28 28"><rect x="1" y="9" width="8" height="8" rx="1" fill="#f2f2f2"/><rect x="10.5" y="9" width="8" height="8" rx="1" fill="#f2f2f2"/><rect x="20" y="9" width="8" height="8" rx="1" fill="#f2f2f2"/><path d="M5 9 V3 h9 v4 M11.5 5 l2.5 2.8 l2.5 -2.8 M14.5 17 V24 h9 v-4 M21 22 l2.5 -2.8 l2.5 2.8" stroke="#f2f2f2" stroke-width="1.8" fill="none"/></svg><div class="t w" style="left:0;width:69px;text-align:center;top:941px;line-height:16px;font-size:12px;letter-spacing:-0.5px">Custom</div><svg style="left:20px;top:963px" width="28" height="28" viewBox="0 0 28 28"><circle cx="14" cy="14" r="13.5" fill="#f2f2f2"/><path d="M9.5 10.5 A4.6 4.6 0 1 1 16.5 14.3 Q14 15.8 14 18" stroke="#454a52" stroke-width="3.2" fill="none"/><circle cx="14" cy="22.5" r="2" fill="#454a52"/></svg><div class="t w" style="left:0;width:69px;text-align:center;top:991px;line-height:16px;font-size:12px;letter-spacing:-0.5px">Help</div><div class="" style="position:absolute;left:77px;top:1039.5px;width:1779px;height:19.5px;background:#f1f1f3"></div><div class="" style="position:absolute;left:93px;top:1047.5px;width:1590px;height:2px;background:#7c7c7c"></div><div class="" style="position:absolute;left:0px;top:1058.5px;width:1856px;height:21.5px;background:#f0f0f0;border-top:1px solid #e6e6e6"></div><div class="t " style="top:1063.0px;line-height:14px;left:0px;font-size:12px;letter-spacing:-0.45px;color:#444">Database: C</div><div class="" style="position:absolute;left:57px;top:1060px;width:1px;height:20px;background:#dcdcdc"></div><div class="t " style="top:1063.0px;line-height:14px;left:63px;font-size:12px;letter-spacing:-0.42px;color:#2c2ca4">(3) Volve C (105.1 - 5012.1 M</div><div class="" style="position:absolute;left:202px;top:1060px;width:60px;height:20px;background:#f0f0f0"></div><div class="" style="position:absolute;left:203px;top:1060px;width:1px;height:20px;background:#dcdcdc"></div><svg style="left:1749px;top:1062px" width="100" height="16" viewBox="0 0 100 16"><rect x="0.5" y="1.5" width="12" height="12" fill="#fff" stroke="#6a7fa6" stroke-width="1"/><path d="M6.5 1.5 v12" stroke="#6a7fa6"/><rect x="0.5" y="1.5" width="12" height="2" fill="#6a7fa6"/><rect x="20" y="1" width="8" height="6" fill="#fff" stroke="#556" stroke-width="1"/><rect x="23" y="4" width="8" height="6" fill="#fff" stroke="#556" stroke-width="1"/><rect x="26" y="7" width="8" height="6" fill="#fff" stroke="#556" stroke-width="1"/><rect x="40.5" y="2.5" width="11" height="10" fill="#fff" stroke="#6a7fa6" stroke-width="1"/><rect x="40.5" y="2.5" width="11" height="2.5" fill="#3a5fc0"/><path d="M71 1 L75 13 M71 1 L67 13 M68.5 9 h5 M66 13.5 h10" stroke="#2a4fa8" stroke-width="1.3" fill="none"/><path d="M86 3 a5 2 0 0 1 10 0 v10 a5 2 0 0 1 -10 0z" fill="#b9bcc4" stroke="#777" stroke-width="1"/><ellipse cx="91" cy="3" rx="5" ry="2" fill="#d8dae0" stroke="#777"/></svg>
</body></html>
